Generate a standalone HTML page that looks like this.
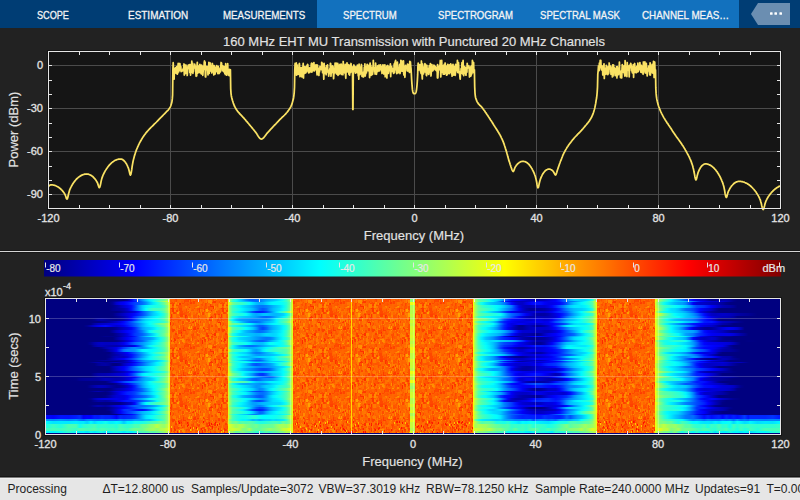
<!DOCTYPE html>
<html><head><meta charset="utf-8">
<style>
html,body{margin:0;padding:0;width:800px;height:500px;overflow:hidden;background:#222222;font-family:"Liberation Sans",sans-serif;}
#tabs{position:absolute;left:0;top:0;width:800px;height:28px;background:#003d74;}
#act{position:absolute;left:317px;top:0;width:422px;height:28px;background:#1271be;}
.tab{position:absolute;top:10px;color:#f4f4f4;font-size:11px;line-height:11px;white-space:nowrap;transform-origin:0 0;-webkit-text-stroke:0.3px #f4f4f4;}
#status{position:absolute;left:0;top:477px;width:800px;height:23px;background:#e6e6e6;border-top:1px solid #7a7a7a;box-sizing:border-box;box-shadow:0 -1px 0 #151515, inset 0 1px 0 #efefef;}
.st{position:absolute;top:4px;font-size:12px;line-height:14px;color:#1e1e1e;white-space:nowrap;}
svg{position:absolute;left:0;top:0;}
.tl{font-size:11px;fill:#e4e4e4;stroke:#e4e4e4;stroke-width:0.3px;}
.cbl{font-size:10px;fill:#e8e8e8;stroke:#e8e8e8;stroke-width:0.2px;}
.cbt{stroke:#e4e4e4;stroke-width:1;fill:none;}
</style></head><body>
<svg width="800" height="500" viewBox="0 0 800 500">
<defs><linearGradient id="r0"><stop offset=".0007" stop-color="#000080"/><stop offset=".0922" stop-color="#000080"/><stop offset=".0972" stop-color="#000084"/><stop offset=".1022" stop-color="#000080"/><stop offset=".1072" stop-color="#000080"/><stop offset=".1122" stop-color="#00009f"/><stop offset=".1172" stop-color="#0000e3"/><stop offset=".1222" stop-color="#0027ff"/><stop offset=".1272" stop-color="#005eff"/><stop offset=".1322" stop-color="#0094ff"/><stop offset=".1372" stop-color="#00c7ff"/><stop offset=".1422" stop-color="#00f0ff"/><stop offset=".1471" stop-color="#10ffef"/><stop offset=".1521" stop-color="#35ffca"/><stop offset=".1571" stop-color="#54ffab"/><stop offset=".1621" stop-color="#6bff94"/><stop offset=".1671" stop-color="#a2ff5d"/><stop offset=".1700" stop-color="#eaff15"/><stop offset=".2487" stop-color="#fffa00"/><stop offset=".2503" stop-color="#b3ff4c"/><stop offset=".2549" stop-color="#3bffc4"/><stop offset=".2595" stop-color="#10ffef"/><stop offset=".2641" stop-color="#00e1ff"/><stop offset=".2686" stop-color="#00b9ff"/><stop offset=".2732" stop-color="#008aff"/><stop offset=".2778" stop-color="#006aff"/><stop offset=".2824" stop-color="#0061ff"/><stop offset=".2870" stop-color="#0067ff"/><stop offset=".2915" stop-color="#0079ff"/><stop offset=".2961" stop-color="#008fff"/><stop offset=".3007" stop-color="#00a3ff"/><stop offset=".3053" stop-color="#00b1ff"/><stop offset=".3098" stop-color="#00c0ff"/><stop offset=".3144" stop-color="#00d0ff"/><stop offset=".3190" stop-color="#00e9ff"/><stop offset=".3236" stop-color="#0cfff3"/><stop offset=".3282" stop-color="#3bffc4"/><stop offset=".3327" stop-color="#86ff79"/><stop offset=".3361" stop-color="#dbff24"/><stop offset=".3368" stop-color="#fffb00"/><stop offset=".5820" stop-color="#fffa00"/><stop offset=".5841" stop-color="#adff52"/><stop offset=".5890" stop-color="#5fffa0"/><stop offset=".5940" stop-color="#48ffb7"/><stop offset=".5990" stop-color="#33ffcc"/><stop offset=".6040" stop-color="#11ffee"/><stop offset=".6090" stop-color="#00ecff"/><stop offset=".6140" stop-color="#00dcff"/><stop offset=".6190" stop-color="#00bbff"/><stop offset=".6240" stop-color="#007dff"/><stop offset=".6290" stop-color="#0037ff"/><stop offset=".6340" stop-color="#000cff"/><stop offset=".6390" stop-color="#0001ff"/><stop offset=".6440" stop-color="#0000f7"/><stop offset=".6490" stop-color="#0000e5"/><stop offset=".6540" stop-color="#0000d2"/><stop offset=".6590" stop-color="#0000c5"/><stop offset=".6639" stop-color="#0000bb"/><stop offset=".6689" stop-color="#0000b3"/><stop offset=".6739" stop-color="#0000b6"/><stop offset=".6789" stop-color="#0000c2"/><stop offset=".6839" stop-color="#0000d7"/><stop offset=".6889" stop-color="#0000e9"/><stop offset=".6939" stop-color="#0000fc"/><stop offset=".6989" stop-color="#0021ff"/><stop offset=".7039" stop-color="#004fff"/><stop offset=".7089" stop-color="#007fff"/><stop offset=".7139" stop-color="#00b2ff"/><stop offset=".7189" stop-color="#00d1ff"/><stop offset=".7239" stop-color="#00d5ff"/><stop offset=".7289" stop-color="#00ceff"/><stop offset=".7338" stop-color="#00d2ff"/><stop offset=".7388" stop-color="#00e8ff"/><stop offset=".7438" stop-color="#1bffe4"/><stop offset=".7488" stop-color="#b7ff48"/><stop offset=".7496" stop-color="#e8ff17"/><stop offset=".8288" stop-color="#fffa00"/><stop offset=".8308" stop-color="#dbff24"/><stop offset=".8358" stop-color="#8bff74"/><stop offset=".8408" stop-color="#57ffa8"/><stop offset=".8458" stop-color="#29ffd6"/><stop offset=".8508" stop-color="#00faff"/><stop offset=".8558" stop-color="#00d1ff"/><stop offset=".8608" stop-color="#00aaff"/><stop offset=".8658" stop-color="#007fff"/><stop offset=".8707" stop-color="#0054ff"/><stop offset=".8757" stop-color="#002cff"/><stop offset=".8807" stop-color="#0000ff"/><stop offset=".8857" stop-color="#0000dc"/><stop offset=".8907" stop-color="#0000d5"/><stop offset=".8957" stop-color="#0000cd"/><stop offset=".9007" stop-color="#0000ab"/><stop offset=".9057" stop-color="#00008d"/><stop offset=".9107" stop-color="#000090"/><stop offset=".9157" stop-color="#0000a5"/><stop offset=".9207" stop-color="#0000b3"/><stop offset=".9257" stop-color="#0000b0"/><stop offset=".9307" stop-color="#0000a2"/><stop offset=".9357" stop-color="#00008c"/><stop offset=".9407" stop-color="#000080"/><stop offset=".9993" stop-color="#000080"/></linearGradient>
<linearGradient id="r1"><stop offset=".0007" stop-color="#000080"/><stop offset=".0872" stop-color="#000080"/><stop offset=".0922" stop-color="#00008f"/><stop offset=".0972" stop-color="#0000a4"/><stop offset=".1022" stop-color="#0000be"/><stop offset=".1072" stop-color="#0000d9"/><stop offset=".1122" stop-color="#0000ee"/><stop offset=".1172" stop-color="#0000fc"/><stop offset=".1222" stop-color="#0017ff"/><stop offset=".1272" stop-color="#0043ff"/><stop offset=".1322" stop-color="#0075ff"/><stop offset=".1372" stop-color="#00a8ff"/><stop offset=".1422" stop-color="#00dbff"/><stop offset=".1471" stop-color="#0efff1"/><stop offset=".1521" stop-color="#43ffbc"/><stop offset=".1571" stop-color="#76ff89"/><stop offset=".1621" stop-color="#a8ff57"/><stop offset=".1671" stop-color="#dbff24"/><stop offset=".1700" stop-color="#fffa00"/><stop offset=".2487" stop-color="#f7ff08"/><stop offset=".2503" stop-color="#92ff6d"/><stop offset=".2549" stop-color="#29ffd6"/><stop offset=".2595" stop-color="#06fff9"/><stop offset=".2641" stop-color="#00e6ff"/><stop offset=".2686" stop-color="#00d1ff"/><stop offset=".2732" stop-color="#00bcff"/><stop offset=".2778" stop-color="#009fff"/><stop offset=".2824" stop-color="#007cff"/><stop offset=".2870" stop-color="#0069ff"/><stop offset=".2915" stop-color="#0071ff"/><stop offset=".2961" stop-color="#0094ff"/><stop offset=".3007" stop-color="#00b5ff"/><stop offset=".3053" stop-color="#00c9ff"/><stop offset=".3098" stop-color="#00ddff"/><stop offset=".3144" stop-color="#00f6ff"/><stop offset=".3190" stop-color="#0ffff0"/><stop offset=".3236" stop-color="#20ffdf"/><stop offset=".3282" stop-color="#39ffc6"/><stop offset=".3327" stop-color="#71ff8e"/><stop offset=".3361" stop-color="#dbff24"/><stop offset=".3368" stop-color="#fffa00"/><stop offset=".5820" stop-color="#feff01"/><stop offset=".5841" stop-color="#b0ff4f"/><stop offset=".5890" stop-color="#6fff90"/><stop offset=".5940" stop-color="#54ffab"/><stop offset=".5990" stop-color="#41ffbe"/><stop offset=".6040" stop-color="#1dffe2"/><stop offset=".6090" stop-color="#00fbff"/><stop offset=".6140" stop-color="#00bfff"/><stop offset=".6190" stop-color="#0071ff"/><stop offset=".6240" stop-color="#0022ff"/><stop offset=".6290" stop-color="#0000f4"/><stop offset=".6340" stop-color="#0000d5"/><stop offset=".6390" stop-color="#0000c0"/><stop offset=".6440" stop-color="#0000b7"/><stop offset=".6490" stop-color="#0000b9"/><stop offset=".6540" stop-color="#0000c3"/><stop offset=".6590" stop-color="#0000d5"/><stop offset=".6639" stop-color="#0000e9"/><stop offset=".6689" stop-color="#0000f6"/><stop offset=".6739" stop-color="#0000f3"/><stop offset=".6789" stop-color="#0000e5"/><stop offset=".6839" stop-color="#0000e8"/><stop offset=".6889" stop-color="#0000f5"/><stop offset=".6939" stop-color="#0002ff"/><stop offset=".6989" stop-color="#001aff"/><stop offset=".7039" stop-color="#004bff"/><stop offset=".7089" stop-color="#006fff"/><stop offset=".7139" stop-color="#0074ff"/><stop offset=".7189" stop-color="#0081ff"/><stop offset=".7239" stop-color="#00abff"/><stop offset=".7289" stop-color="#00cfff"/><stop offset=".7338" stop-color="#00f8ff"/><stop offset=".7388" stop-color="#2cffd3"/><stop offset=".7438" stop-color="#6cff93"/><stop offset=".7488" stop-color="#dbff24"/><stop offset=".7496" stop-color="#fffa00"/><stop offset=".8288" stop-color="#fcff03"/><stop offset=".8308" stop-color="#ccff33"/><stop offset=".8358" stop-color="#6fff90"/><stop offset=".8408" stop-color="#3effc1"/><stop offset=".8458" stop-color="#19ffe6"/><stop offset=".8508" stop-color="#00f6ff"/><stop offset=".8558" stop-color="#00dbff"/><stop offset=".8608" stop-color="#00ccff"/><stop offset=".8658" stop-color="#00cbff"/><stop offset=".8707" stop-color="#00bdff"/><stop offset=".8757" stop-color="#009eff"/><stop offset=".8807" stop-color="#0076ff"/><stop offset=".8857" stop-color="#003eff"/><stop offset=".8907" stop-color="#0009ff"/><stop offset=".8957" stop-color="#0000eb"/><stop offset=".9007" stop-color="#0000dd"/><stop offset=".9057" stop-color="#0000d2"/><stop offset=".9107" stop-color="#0000cc"/><stop offset=".9157" stop-color="#0000d1"/><stop offset=".9207" stop-color="#0000d0"/><stop offset=".9257" stop-color="#0000c0"/><stop offset=".9307" stop-color="#0000a7"/><stop offset=".9357" stop-color="#00008c"/><stop offset=".9407" stop-color="#000080"/><stop offset=".9993" stop-color="#000080"/></linearGradient>
<linearGradient id="r2"><stop offset=".0007" stop-color="#000080"/><stop offset=".0872" stop-color="#000080"/><stop offset=".0922" stop-color="#000099"/><stop offset=".0972" stop-color="#0000d0"/><stop offset=".1022" stop-color="#0000eb"/><stop offset=".1072" stop-color="#0000f9"/><stop offset=".1122" stop-color="#000eff"/><stop offset=".1172" stop-color="#0027ff"/><stop offset=".1222" stop-color="#0040ff"/><stop offset=".1272" stop-color="#0054ff"/><stop offset=".1322" stop-color="#0067ff"/><stop offset=".1372" stop-color="#008dff"/><stop offset=".1422" stop-color="#00c0ff"/><stop offset=".1471" stop-color="#00e8ff"/><stop offset=".1521" stop-color="#0ffff0"/><stop offset=".1571" stop-color="#39ffc6"/><stop offset=".1621" stop-color="#69ff96"/><stop offset=".1671" stop-color="#b8ff47"/><stop offset=".1700" stop-color="#fffa00"/><stop offset=".2487" stop-color="#fffa00"/><stop offset=".2503" stop-color="#dbff24"/><stop offset=".2549" stop-color="#79ff86"/><stop offset=".2595" stop-color="#55ffaa"/><stop offset=".2641" stop-color="#45ffba"/><stop offset=".2686" stop-color="#35ffca"/><stop offset=".2732" stop-color="#21ffde"/><stop offset=".2778" stop-color="#04fffb"/><stop offset=".2824" stop-color="#00e1ff"/><stop offset=".2870" stop-color="#00c1ff"/><stop offset=".2915" stop-color="#00b0ff"/><stop offset=".2961" stop-color="#00b7ff"/><stop offset=".3007" stop-color="#00d2ff"/><stop offset=".3053" stop-color="#00edff"/><stop offset=".3098" stop-color="#00faff"/><stop offset=".3144" stop-color="#00fcff"/><stop offset=".3190" stop-color="#00feff"/><stop offset=".3236" stop-color="#0cfff3"/><stop offset=".3282" stop-color="#29ffd6"/><stop offset=".3327" stop-color="#66ff99"/><stop offset=".3361" stop-color="#d9ff26"/><stop offset=".3368" stop-color="#fffc00"/><stop offset=".5820" stop-color="#ffff00"/><stop offset=".5841" stop-color="#a5ff5a"/><stop offset=".5890" stop-color="#36ffc9"/><stop offset=".5940" stop-color="#09fff6"/><stop offset=".5990" stop-color="#00e2ff"/><stop offset=".6040" stop-color="#00ccff"/><stop offset=".6090" stop-color="#00bcff"/><stop offset=".6140" stop-color="#00aeff"/><stop offset=".6190" stop-color="#009eff"/><stop offset=".6240" stop-color="#007eff"/><stop offset=".6290" stop-color="#0042ff"/><stop offset=".6340" stop-color="#0009ff"/><stop offset=".6390" stop-color="#0000df"/><stop offset=".6440" stop-color="#0000c8"/><stop offset=".6490" stop-color="#0000c6"/><stop offset=".6540" stop-color="#0000e2"/><stop offset=".6590" stop-color="#0000f9"/><stop offset=".6639" stop-color="#0009ff"/><stop offset=".6689" stop-color="#0011ff"/><stop offset=".6739" stop-color="#000cff"/><stop offset=".6789" stop-color="#0000f8"/><stop offset=".6839" stop-color="#0000e9"/><stop offset=".6889" stop-color="#0000e9"/><stop offset=".6939" stop-color="#0000f3"/><stop offset=".6989" stop-color="#0004ff"/><stop offset=".7039" stop-color="#0020ff"/><stop offset=".7089" stop-color="#0052ff"/><stop offset=".7139" stop-color="#0093ff"/><stop offset=".7189" stop-color="#00c2ff"/><stop offset=".7239" stop-color="#00dfff"/><stop offset=".7289" stop-color="#00f9ff"/><stop offset=".7338" stop-color="#12ffed"/><stop offset=".7388" stop-color="#2dffd2"/><stop offset=".7438" stop-color="#56ffa9"/><stop offset=".7488" stop-color="#dbff24"/><stop offset=".7496" stop-color="#fffa00"/><stop offset=".8288" stop-color="#ecff13"/><stop offset=".8308" stop-color="#b5ff4a"/><stop offset=".8358" stop-color="#4bffb4"/><stop offset=".8408" stop-color="#0efff1"/><stop offset=".8458" stop-color="#00ecff"/><stop offset=".8508" stop-color="#00d2ff"/><stop offset=".8558" stop-color="#00b9ff"/><stop offset=".8608" stop-color="#00a6ff"/><stop offset=".8658" stop-color="#009dff"/><stop offset=".8707" stop-color="#0081ff"/><stop offset=".8757" stop-color="#0045ff"/><stop offset=".8807" stop-color="#0000f9"/><stop offset=".8857" stop-color="#0000d5"/><stop offset=".8907" stop-color="#0000cb"/><stop offset=".8957" stop-color="#0000c5"/><stop offset=".9007" stop-color="#0000bc"/><stop offset=".9057" stop-color="#0000b3"/><stop offset=".9107" stop-color="#0000ac"/><stop offset=".9157" stop-color="#0000a8"/><stop offset=".9207" stop-color="#00009c"/><stop offset=".9257" stop-color="#00008a"/><stop offset=".9307" stop-color="#000080"/><stop offset=".9993" stop-color="#000080"/></linearGradient>
<linearGradient id="r3"><stop offset=".0007" stop-color="#000080"/><stop offset=".0872" stop-color="#000080"/><stop offset=".0922" stop-color="#00008b"/><stop offset=".0972" stop-color="#00009d"/><stop offset=".1022" stop-color="#0000b5"/><stop offset=".1072" stop-color="#0000d1"/><stop offset=".1122" stop-color="#0000eb"/><stop offset=".1172" stop-color="#0009ff"/><stop offset=".1222" stop-color="#003fff"/><stop offset=".1272" stop-color="#008cff"/><stop offset=".1322" stop-color="#00cdff"/><stop offset=".1372" stop-color="#00f3ff"/><stop offset=".1422" stop-color="#0bfff4"/><stop offset=".1471" stop-color="#19ffe6"/><stop offset=".1521" stop-color="#1dffe2"/><stop offset=".1571" stop-color="#27ffd8"/><stop offset=".1621" stop-color="#4bffb4"/><stop offset=".1671" stop-color="#94ff6b"/><stop offset=".1700" stop-color="#fffa00"/><stop offset=".2487" stop-color="#fffb00"/><stop offset=".2503" stop-color="#93ff6c"/><stop offset=".2549" stop-color="#39ffc6"/><stop offset=".2595" stop-color="#19ffe6"/><stop offset=".2641" stop-color="#00faff"/><stop offset=".2686" stop-color="#00e3ff"/><stop offset=".2732" stop-color="#00d0ff"/><stop offset=".2778" stop-color="#00beff"/><stop offset=".2824" stop-color="#00a5ff"/><stop offset=".2870" stop-color="#008aff"/><stop offset=".2915" stop-color="#0078ff"/><stop offset=".2961" stop-color="#0075ff"/><stop offset=".3007" stop-color="#0081ff"/><stop offset=".3053" stop-color="#0096ff"/><stop offset=".3098" stop-color="#00b1ff"/><stop offset=".3144" stop-color="#00c7ff"/><stop offset=".3190" stop-color="#00dbff"/><stop offset=".3236" stop-color="#00f8ff"/><stop offset=".3282" stop-color="#28ffd7"/><stop offset=".3327" stop-color="#6fff90"/><stop offset=".3361" stop-color="#dbff24"/><stop offset=".3368" stop-color="#ffff00"/><stop offset=".5820" stop-color="#fffa00"/><stop offset=".5841" stop-color="#b5ff4a"/><stop offset=".5890" stop-color="#64ff9b"/><stop offset=".5940" stop-color="#3effc1"/><stop offset=".5990" stop-color="#29ffd6"/><stop offset=".6040" stop-color="#19ffe6"/><stop offset=".6090" stop-color="#0cfff3"/><stop offset=".6140" stop-color="#00fbff"/><stop offset=".6190" stop-color="#00eaff"/><stop offset=".6240" stop-color="#00cbff"/><stop offset=".6290" stop-color="#00a2ff"/><stop offset=".6340" stop-color="#0079ff"/><stop offset=".6390" stop-color="#0030ff"/><stop offset=".6440" stop-color="#0000e8"/><stop offset=".6490" stop-color="#0000c5"/><stop offset=".6540" stop-color="#0000b9"/><stop offset=".6590" stop-color="#0000b8"/><stop offset=".6639" stop-color="#0000c5"/><stop offset=".6689" stop-color="#0000d5"/><stop offset=".6739" stop-color="#0000d4"/><stop offset=".6789" stop-color="#0000d4"/><stop offset=".6839" stop-color="#0000e5"/><stop offset=".6889" stop-color="#0003ff"/><stop offset=".6939" stop-color="#0026ff"/><stop offset=".6989" stop-color="#0051ff"/><stop offset=".7039" stop-color="#007cff"/><stop offset=".7089" stop-color="#00abff"/><stop offset=".7139" stop-color="#00d3ff"/><stop offset=".7189" stop-color="#00e8ff"/><stop offset=".7239" stop-color="#00edff"/><stop offset=".7289" stop-color="#00ebff"/><stop offset=".7338" stop-color="#00f6ff"/><stop offset=".7388" stop-color="#14ffeb"/><stop offset=".7438" stop-color="#4dffb2"/><stop offset=".7488" stop-color="#d1ff2e"/><stop offset=".7496" stop-color="#f3ff0c"/><stop offset=".8288" stop-color="#eeff11"/><stop offset=".8308" stop-color="#c4ff3b"/><stop offset=".8358" stop-color="#6cff93"/><stop offset=".8408" stop-color="#45ffba"/><stop offset=".8458" stop-color="#2dffd2"/><stop offset=".8508" stop-color="#18ffe7"/><stop offset=".8558" stop-color="#08fff7"/><stop offset=".8608" stop-color="#00f5ff"/><stop offset=".8658" stop-color="#00e4ff"/><stop offset=".8707" stop-color="#00ccff"/><stop offset=".8757" stop-color="#00a4ff"/><stop offset=".8807" stop-color="#006fff"/><stop offset=".8857" stop-color="#0046ff"/><stop offset=".8907" stop-color="#003aff"/><stop offset=".8957" stop-color="#002dff"/><stop offset=".9007" stop-color="#0015ff"/><stop offset=".9057" stop-color="#0000fa"/><stop offset=".9107" stop-color="#0000e1"/><stop offset=".9157" stop-color="#0000c7"/><stop offset=".9207" stop-color="#0000b5"/><stop offset=".9257" stop-color="#0000ad"/><stop offset=".9307" stop-color="#0000a6"/><stop offset=".9357" stop-color="#000097"/><stop offset=".9407" stop-color="#000080"/><stop offset=".9506" stop-color="#000080"/><stop offset=".9556" stop-color="#000083"/><stop offset=".9577" stop-color="#000080"/><stop offset=".9993" stop-color="#000080"/></linearGradient>
<linearGradient id="r4"><stop offset=".0007" stop-color="#000080"/><stop offset=".0872" stop-color="#000080"/><stop offset=".0922" stop-color="#000090"/><stop offset=".0972" stop-color="#00009c"/><stop offset=".1022" stop-color="#0000a3"/><stop offset=".1072" stop-color="#0000b0"/><stop offset=".1122" stop-color="#0000cf"/><stop offset=".1172" stop-color="#0009ff"/><stop offset=".1222" stop-color="#0049ff"/><stop offset=".1272" stop-color="#008aff"/><stop offset=".1322" stop-color="#00cbff"/><stop offset=".1372" stop-color="#04fffb"/><stop offset=".1422" stop-color="#2bffd4"/><stop offset=".1471" stop-color="#43ffbc"/><stop offset=".1521" stop-color="#46ffb9"/><stop offset=".1571" stop-color="#4affb5"/><stop offset=".1621" stop-color="#64ff9b"/><stop offset=".1671" stop-color="#a8ff57"/><stop offset=".1700" stop-color="#f9ff06"/><stop offset=".2487" stop-color="#fffa00"/><stop offset=".2503" stop-color="#94ff6b"/><stop offset=".2549" stop-color="#42ffbd"/><stop offset=".2595" stop-color="#2cffd3"/><stop offset=".2641" stop-color="#11ffee"/><stop offset=".2686" stop-color="#00f4ff"/><stop offset=".2732" stop-color="#00e0ff"/><stop offset=".2778" stop-color="#00d0ff"/><stop offset=".2824" stop-color="#00baff"/><stop offset=".2870" stop-color="#0097ff"/><stop offset=".2915" stop-color="#006dff"/><stop offset=".2961" stop-color="#0057ff"/><stop offset=".3007" stop-color="#006dff"/><stop offset=".3053" stop-color="#009bff"/><stop offset=".3098" stop-color="#00bcff"/><stop offset=".3144" stop-color="#00d0ff"/><stop offset=".3190" stop-color="#00e5ff"/><stop offset=".3236" stop-color="#05fffa"/><stop offset=".3282" stop-color="#2fffd0"/><stop offset=".3327" stop-color="#78ff87"/><stop offset=".3361" stop-color="#dbff24"/><stop offset=".3368" stop-color="#fbff04"/><stop offset=".5820" stop-color="#fffa00"/><stop offset=".5841" stop-color="#adff52"/><stop offset=".5890" stop-color="#67ff98"/><stop offset=".5940" stop-color="#52ffad"/><stop offset=".5990" stop-color="#43ffbc"/><stop offset=".6040" stop-color="#2bffd4"/><stop offset=".6090" stop-color="#17ffe8"/><stop offset=".6140" stop-color="#00f8ff"/><stop offset=".6190" stop-color="#00d4ff"/><stop offset=".6240" stop-color="#00adff"/><stop offset=".6290" stop-color="#0087ff"/><stop offset=".6340" stop-color="#0060ff"/><stop offset=".6390" stop-color="#002dff"/><stop offset=".6440" stop-color="#0000fb"/><stop offset=".6490" stop-color="#0000ce"/><stop offset=".6540" stop-color="#0000ac"/><stop offset=".6590" stop-color="#000097"/><stop offset=".6639" stop-color="#000098"/><stop offset=".6689" stop-color="#00009e"/><stop offset=".6739" stop-color="#0000a0"/><stop offset=".6789" stop-color="#0000a7"/><stop offset=".6839" stop-color="#0000b9"/><stop offset=".6889" stop-color="#0000d4"/><stop offset=".6939" stop-color="#0000f3"/><stop offset=".6989" stop-color="#001cff"/><stop offset=".7039" stop-color="#004fff"/><stop offset=".7089" stop-color="#007dff"/><stop offset=".7139" stop-color="#00a3ff"/><stop offset=".7189" stop-color="#00baff"/><stop offset=".7239" stop-color="#00c6ff"/><stop offset=".7289" stop-color="#00cfff"/><stop offset=".7338" stop-color="#00dcff"/><stop offset=".7388" stop-color="#00f2ff"/><stop offset=".7438" stop-color="#21ffde"/><stop offset=".7488" stop-color="#bdff42"/><stop offset=".7496" stop-color="#efff10"/><stop offset=".8288" stop-color="#fffa00"/><stop offset=".8308" stop-color="#daff25"/><stop offset=".8358" stop-color="#78ff87"/><stop offset=".8408" stop-color="#38ffc7"/><stop offset=".8458" stop-color="#02fffd"/><stop offset=".8508" stop-color="#00e3ff"/><stop offset=".8558" stop-color="#00daff"/><stop offset=".8608" stop-color="#00c1ff"/><stop offset=".8658" stop-color="#0094ff"/><stop offset=".8707" stop-color="#006dff"/><stop offset=".8757" stop-color="#005dff"/><stop offset=".8807" stop-color="#0045ff"/><stop offset=".8857" stop-color="#0023ff"/><stop offset=".8907" stop-color="#0004ff"/><stop offset=".8957" stop-color="#0000e9"/><stop offset=".9007" stop-color="#0000d6"/><stop offset=".9057" stop-color="#0000c1"/><stop offset=".9107" stop-color="#00009e"/><stop offset=".9157" stop-color="#000080"/><stop offset=".9993" stop-color="#000080"/></linearGradient>
<linearGradient id="r5"><stop offset=".0007" stop-color="#000080"/><stop offset=".0972" stop-color="#000080"/><stop offset=".1022" stop-color="#00008d"/><stop offset=".1072" stop-color="#0000a3"/><stop offset=".1122" stop-color="#0000b7"/><stop offset=".1172" stop-color="#0000c6"/><stop offset=".1222" stop-color="#0000df"/><stop offset=".1272" stop-color="#0012ff"/><stop offset=".1322" stop-color="#004bff"/><stop offset=".1372" stop-color="#0079ff"/><stop offset=".1422" stop-color="#00a3ff"/><stop offset=".1471" stop-color="#00caff"/><stop offset=".1521" stop-color="#00f1ff"/><stop offset=".1571" stop-color="#21ffde"/><stop offset=".1621" stop-color="#54ffab"/><stop offset=".1671" stop-color="#9eff61"/><stop offset=".1700" stop-color="#fffa00"/><stop offset=".2487" stop-color="#fffc00"/><stop offset=".2503" stop-color="#a2ff5d"/><stop offset=".2549" stop-color="#37ffc8"/><stop offset=".2595" stop-color="#14ffeb"/><stop offset=".2641" stop-color="#00f5ff"/><stop offset=".2686" stop-color="#00dbff"/><stop offset=".2732" stop-color="#00b9ff"/><stop offset=".2778" stop-color="#0085ff"/><stop offset=".2824" stop-color="#004cff"/><stop offset=".2870" stop-color="#0029ff"/><stop offset=".2915" stop-color="#001dff"/><stop offset=".2961" stop-color="#0025ff"/><stop offset=".3007" stop-color="#0042ff"/><stop offset=".3053" stop-color="#0074ff"/><stop offset=".3098" stop-color="#00adff"/><stop offset=".3144" stop-color="#00dfff"/><stop offset=".3190" stop-color="#13ffec"/><stop offset=".3236" stop-color="#47ffb8"/><stop offset=".3282" stop-color="#7aff85"/><stop offset=".3327" stop-color="#c5ff3a"/><stop offset=".3361" stop-color="#dbff24"/><stop offset=".3368" stop-color="#fffa00"/><stop offset=".5820" stop-color="#f7ff08"/><stop offset=".5841" stop-color="#abff54"/><stop offset=".5890" stop-color="#57ffa8"/><stop offset=".5940" stop-color="#27ffd8"/><stop offset=".5990" stop-color="#09fff6"/><stop offset=".6040" stop-color="#00e7ff"/><stop offset=".6090" stop-color="#00c5ff"/><stop offset=".6140" stop-color="#00a9ff"/><stop offset=".6190" stop-color="#0083ff"/><stop offset=".6240" stop-color="#004aff"/><stop offset=".6290" stop-color="#001dff"/><stop offset=".6340" stop-color="#0000fa"/><stop offset=".6390" stop-color="#0000e5"/><stop offset=".6440" stop-color="#0000d6"/><stop offset=".6490" stop-color="#0000ca"/><stop offset=".6540" stop-color="#0000c5"/><stop offset=".6590" stop-color="#0000ca"/><stop offset=".6639" stop-color="#0000d1"/><stop offset=".6689" stop-color="#0000d7"/><stop offset=".6739" stop-color="#0000d3"/><stop offset=".6789" stop-color="#0000ce"/><stop offset=".6839" stop-color="#0000dc"/><stop offset=".6889" stop-color="#0000f5"/><stop offset=".6939" stop-color="#0016ff"/><stop offset=".6989" stop-color="#0031ff"/><stop offset=".7039" stop-color="#0041ff"/><stop offset=".7089" stop-color="#0063ff"/><stop offset=".7139" stop-color="#0094ff"/><stop offset=".7189" stop-color="#00bdff"/><stop offset=".7239" stop-color="#00dcff"/><stop offset=".7289" stop-color="#00feff"/><stop offset=".7338" stop-color="#2bffd4"/><stop offset=".7388" stop-color="#5fffa0"/><stop offset=".7438" stop-color="#98ff67"/><stop offset=".7488" stop-color="#dbff24"/><stop offset=".7496" stop-color="#fffe00"/><stop offset=".8288" stop-color="#f6ff09"/><stop offset=".8308" stop-color="#b1ff4e"/><stop offset=".8358" stop-color="#45ffba"/><stop offset=".8408" stop-color="#13ffec"/><stop offset=".8458" stop-color="#00f9ff"/><stop offset=".8508" stop-color="#00ecff"/><stop offset=".8558" stop-color="#00deff"/><stop offset=".8608" stop-color="#00cfff"/><stop offset=".8658" stop-color="#00bfff"/><stop offset=".8707" stop-color="#00a7ff"/><stop offset=".8757" stop-color="#0084ff"/><stop offset=".8807" stop-color="#005eff"/><stop offset=".8857" stop-color="#0026ff"/><stop offset=".8907" stop-color="#0000e9"/><stop offset=".8957" stop-color="#0000c7"/><stop offset=".9007" stop-color="#0000b1"/><stop offset=".9057" stop-color="#00009e"/><stop offset=".9107" stop-color="#000090"/><stop offset=".9157" stop-color="#000085"/><stop offset=".9207" stop-color="#000080"/><stop offset=".9993" stop-color="#000080"/></linearGradient>
<linearGradient id="r6"><stop offset=".0007" stop-color="#000080"/><stop offset=".0872" stop-color="#000080"/><stop offset=".0922" stop-color="#000085"/><stop offset=".0972" stop-color="#00009d"/><stop offset=".1022" stop-color="#0000b3"/><stop offset=".1072" stop-color="#0000c8"/><stop offset=".1122" stop-color="#0000de"/><stop offset=".1172" stop-color="#0000f3"/><stop offset=".1222" stop-color="#000bff"/><stop offset=".1272" stop-color="#0027ff"/><stop offset=".1322" stop-color="#004aff"/><stop offset=".1372" stop-color="#0074ff"/><stop offset=".1422" stop-color="#00a5ff"/><stop offset=".1471" stop-color="#00ccff"/><stop offset=".1521" stop-color="#00e4ff"/><stop offset=".1571" stop-color="#03fffc"/><stop offset=".1621" stop-color="#31ffce"/><stop offset=".1671" stop-color="#82ff7d"/><stop offset=".1700" stop-color="#e7ff18"/><stop offset=".2487" stop-color="#fffa00"/><stop offset=".2503" stop-color="#92ff6d"/><stop offset=".2549" stop-color="#54ffab"/><stop offset=".2595" stop-color="#37ffc8"/><stop offset=".2641" stop-color="#25ffda"/><stop offset=".2686" stop-color="#1affe5"/><stop offset=".2732" stop-color="#05fffa"/><stop offset=".2778" stop-color="#00e0ff"/><stop offset=".2824" stop-color="#00baff"/><stop offset=".2870" stop-color="#00a9ff"/><stop offset=".2915" stop-color="#00b0ff"/><stop offset=".2961" stop-color="#00c2ff"/><stop offset=".3007" stop-color="#00c6ff"/><stop offset=".3053" stop-color="#00bdff"/><stop offset=".3098" stop-color="#00b7ff"/><stop offset=".3144" stop-color="#00b9ff"/><stop offset=".3190" stop-color="#00c1ff"/><stop offset=".3236" stop-color="#00d0ff"/><stop offset=".3282" stop-color="#00f4ff"/><stop offset=".3327" stop-color="#4affb5"/><stop offset=".3361" stop-color="#b7ff48"/><stop offset=".3368" stop-color="#dbff24"/><stop offset=".5820" stop-color="#fffa00"/><stop offset=".5841" stop-color="#b3ff4c"/><stop offset=".5890" stop-color="#67ff98"/><stop offset=".5940" stop-color="#51ffae"/><stop offset=".5990" stop-color="#43ffbc"/><stop offset=".6040" stop-color="#35ffca"/><stop offset=".6090" stop-color="#24ffdb"/><stop offset=".6140" stop-color="#1bffe4"/><stop offset=".6190" stop-color="#0afff5"/><stop offset=".6240" stop-color="#00d0ff"/><stop offset=".6290" stop-color="#0093ff"/><stop offset=".6340" stop-color="#0069ff"/><stop offset=".6390" stop-color="#0052ff"/><stop offset=".6440" stop-color="#003bff"/><stop offset=".6490" stop-color="#0019ff"/><stop offset=".6540" stop-color="#0000f4"/><stop offset=".6590" stop-color="#0000d5"/><stop offset=".6639" stop-color="#0000ba"/><stop offset=".6689" stop-color="#0000a5"/><stop offset=".6739" stop-color="#00009f"/><stop offset=".6789" stop-color="#0000a1"/><stop offset=".6839" stop-color="#0000ae"/><stop offset=".6889" stop-color="#0000c6"/><stop offset=".6939" stop-color="#0000df"/><stop offset=".6989" stop-color="#0000fb"/><stop offset=".7039" stop-color="#001eff"/><stop offset=".7089" stop-color="#0046ff"/><stop offset=".7139" stop-color="#0076ff"/><stop offset=".7189" stop-color="#00a3ff"/><stop offset=".7239" stop-color="#00c8ff"/><stop offset=".7289" stop-color="#00ebff"/><stop offset=".7338" stop-color="#0bfff4"/><stop offset=".7388" stop-color="#1bffe4"/><stop offset=".7438" stop-color="#3effc1"/><stop offset=".7488" stop-color="#ceff31"/><stop offset=".7496" stop-color="#faff05"/><stop offset=".8288" stop-color="#fffb00"/><stop offset=".8308" stop-color="#dbff24"/><stop offset=".8358" stop-color="#beff41"/><stop offset=".8408" stop-color="#80ff7f"/><stop offset=".8458" stop-color="#52ffad"/><stop offset=".8508" stop-color="#22ffdd"/><stop offset=".8558" stop-color="#01fffe"/><stop offset=".8608" stop-color="#00edff"/><stop offset=".8658" stop-color="#00e0ff"/><stop offset=".8707" stop-color="#00ccff"/><stop offset=".8757" stop-color="#00b2ff"/><stop offset=".8807" stop-color="#0094ff"/><stop offset=".8857" stop-color="#006dff"/><stop offset=".8907" stop-color="#003aff"/><stop offset=".8957" stop-color="#000dff"/><stop offset=".9007" stop-color="#0000e5"/><stop offset=".9057" stop-color="#0000c8"/><stop offset=".9107" stop-color="#0000bf"/><stop offset=".9157" stop-color="#0000c6"/><stop offset=".9207" stop-color="#0000c9"/><stop offset=".9257" stop-color="#0000c6"/><stop offset=".9307" stop-color="#0000c0"/><stop offset=".9357" stop-color="#0000b6"/><stop offset=".9407" stop-color="#0000ab"/><stop offset=".9456" stop-color="#0000a1"/><stop offset=".9506" stop-color="#00009c"/><stop offset=".9556" stop-color="#000096"/><stop offset=".9577" stop-color="#000091"/><stop offset=".9681" stop-color="#000080"/><stop offset=".9993" stop-color="#000080"/></linearGradient>
<linearGradient id="r7"><stop offset=".0007" stop-color="#000080"/><stop offset=".0872" stop-color="#000080"/><stop offset=".0922" stop-color="#000081"/><stop offset=".0972" stop-color="#00008e"/><stop offset=".1022" stop-color="#00009e"/><stop offset=".1072" stop-color="#0000b3"/><stop offset=".1122" stop-color="#0000d3"/><stop offset=".1172" stop-color="#0000fe"/><stop offset=".1222" stop-color="#002fff"/><stop offset=".1272" stop-color="#005aff"/><stop offset=".1322" stop-color="#0081ff"/><stop offset=".1372" stop-color="#00acff"/><stop offset=".1422" stop-color="#00d2ff"/><stop offset=".1471" stop-color="#00ecff"/><stop offset=".1521" stop-color="#01fffe"/><stop offset=".1571" stop-color="#1affe5"/><stop offset=".1621" stop-color="#40ffbf"/><stop offset=".1671" stop-color="#8aff75"/><stop offset=".1700" stop-color="#f2ff0d"/><stop offset=".2487" stop-color="#efff10"/><stop offset=".2503" stop-color="#8bff74"/><stop offset=".2549" stop-color="#1bffe4"/><stop offset=".2595" stop-color="#00f8ff"/><stop offset=".2641" stop-color="#00dfff"/><stop offset=".2686" stop-color="#00d2ff"/><stop offset=".2732" stop-color="#00c7ff"/><stop offset=".2778" stop-color="#00bdff"/><stop offset=".2824" stop-color="#00afff"/><stop offset=".2870" stop-color="#009cff"/><stop offset=".2915" stop-color="#0081ff"/><stop offset=".2961" stop-color="#006bff"/><stop offset=".3007" stop-color="#0064ff"/><stop offset=".3053" stop-color="#006fff"/><stop offset=".3098" stop-color="#008eff"/><stop offset=".3144" stop-color="#00b3ff"/><stop offset=".3190" stop-color="#00d0ff"/><stop offset=".3236" stop-color="#00f2ff"/><stop offset=".3282" stop-color="#22ffdd"/><stop offset=".3327" stop-color="#70ff8f"/><stop offset=".3361" stop-color="#dbff24"/><stop offset=".3368" stop-color="#fcff03"/><stop offset=".5820" stop-color="#efff10"/><stop offset=".5841" stop-color="#96ff69"/><stop offset=".5890" stop-color="#3dffc2"/><stop offset=".5940" stop-color="#1fffe0"/><stop offset=".5990" stop-color="#0dfff2"/><stop offset=".6040" stop-color="#00fdff"/><stop offset=".6090" stop-color="#00efff"/><stop offset=".6140" stop-color="#00e4ff"/><stop offset=".6190" stop-color="#00d7ff"/><stop offset=".6240" stop-color="#00b9ff"/><stop offset=".6290" stop-color="#0088ff"/><stop offset=".6340" stop-color="#005bff"/><stop offset=".6390" stop-color="#002cff"/><stop offset=".6440" stop-color="#0001ff"/><stop offset=".6490" stop-color="#0000d7"/><stop offset=".6540" stop-color="#0000ba"/><stop offset=".6590" stop-color="#0000aa"/><stop offset=".6639" stop-color="#0000ae"/><stop offset=".6689" stop-color="#0000ba"/><stop offset=".6739" stop-color="#0000ba"/><stop offset=".6789" stop-color="#0000b7"/><stop offset=".6839" stop-color="#0000bb"/><stop offset=".6889" stop-color="#0000c6"/><stop offset=".6939" stop-color="#0000d9"/><stop offset=".6989" stop-color="#0000ff"/><stop offset=".7039" stop-color="#0038ff"/><stop offset=".7089" stop-color="#0071ff"/><stop offset=".7139" stop-color="#00a2ff"/><stop offset=".7189" stop-color="#00c6ff"/><stop offset=".7239" stop-color="#00e8ff"/><stop offset=".7289" stop-color="#0cfff3"/><stop offset=".7338" stop-color="#2bffd4"/><stop offset=".7388" stop-color="#46ffb9"/><stop offset=".7438" stop-color="#6cff93"/><stop offset=".7488" stop-color="#dbff24"/><stop offset=".7496" stop-color="#fffa00"/><stop offset=".8288" stop-color="#feff01"/><stop offset=".8308" stop-color="#d2ff2d"/><stop offset=".8358" stop-color="#79ff86"/><stop offset=".8408" stop-color="#50ffaf"/><stop offset=".8458" stop-color="#36ffc9"/><stop offset=".8508" stop-color="#23ffdc"/><stop offset=".8558" stop-color="#17ffe8"/><stop offset=".8608" stop-color="#05fffa"/><stop offset=".8658" stop-color="#00e7ff"/><stop offset=".8707" stop-color="#00ccff"/><stop offset=".8757" stop-color="#00baff"/><stop offset=".8807" stop-color="#00a8ff"/><stop offset=".8857" stop-color="#0089ff"/><stop offset=".8907" stop-color="#0059ff"/><stop offset=".8957" stop-color="#0029ff"/><stop offset=".9007" stop-color="#0005ff"/><stop offset=".9057" stop-color="#0000e6"/><stop offset=".9107" stop-color="#0000d0"/><stop offset=".9157" stop-color="#0000c5"/><stop offset=".9207" stop-color="#0000be"/><stop offset=".9257" stop-color="#0000ba"/><stop offset=".9307" stop-color="#0000b3"/><stop offset=".9357" stop-color="#0000a2"/><stop offset=".9407" stop-color="#000082"/><stop offset=".9456" stop-color="#000080"/><stop offset=".9993" stop-color="#000080"/></linearGradient>
<linearGradient id="r8"><stop offset=".0007" stop-color="#000080"/><stop offset=".0623" stop-color="#000080"/><stop offset=".0673" stop-color="#00008c"/><stop offset=".0722" stop-color="#0000a5"/><stop offset=".0772" stop-color="#0000a6"/><stop offset=".0822" stop-color="#00009e"/><stop offset=".0872" stop-color="#000096"/><stop offset=".0922" stop-color="#00008e"/><stop offset=".0972" stop-color="#00008e"/><stop offset=".1022" stop-color="#000097"/><stop offset=".1072" stop-color="#0000aa"/><stop offset=".1122" stop-color="#0000cb"/><stop offset=".1172" stop-color="#0000fb"/><stop offset=".1222" stop-color="#0036ff"/><stop offset=".1272" stop-color="#0077ff"/><stop offset=".1322" stop-color="#00b1ff"/><stop offset=".1372" stop-color="#00d7ff"/><stop offset=".1422" stop-color="#00e9ff"/><stop offset=".1471" stop-color="#00f9ff"/><stop offset=".1521" stop-color="#11ffee"/><stop offset=".1571" stop-color="#2bffd4"/><stop offset=".1621" stop-color="#51ffae"/><stop offset=".1671" stop-color="#99ff66"/><stop offset=".1700" stop-color="#feff01"/><stop offset=".2487" stop-color="#ebff14"/><stop offset=".2503" stop-color="#66ff99"/><stop offset=".2549" stop-color="#00faff"/><stop offset=".2595" stop-color="#00c8ff"/><stop offset=".2641" stop-color="#00a8ff"/><stop offset=".2686" stop-color="#009dff"/><stop offset=".2732" stop-color="#0096ff"/><stop offset=".2778" stop-color="#008eff"/><stop offset=".2824" stop-color="#0086ff"/><stop offset=".2870" stop-color="#0084ff"/><stop offset=".2915" stop-color="#0084ff"/><stop offset=".2961" stop-color="#0086ff"/><stop offset=".3007" stop-color="#008dff"/><stop offset=".3053" stop-color="#00a2ff"/><stop offset=".3098" stop-color="#00c6ff"/><stop offset=".3144" stop-color="#00f6ff"/><stop offset=".3190" stop-color="#1cffe3"/><stop offset=".3236" stop-color="#39ffc6"/><stop offset=".3282" stop-color="#54ffab"/><stop offset=".3327" stop-color="#8fff70"/><stop offset=".3361" stop-color="#dbff24"/><stop offset=".3368" stop-color="#fffa00"/><stop offset=".5820" stop-color="#fffa00"/><stop offset=".5841" stop-color="#c6ff39"/><stop offset=".5890" stop-color="#8dff72"/><stop offset=".5940" stop-color="#7aff85"/><stop offset=".5990" stop-color="#68ff97"/><stop offset=".6040" stop-color="#3bffc4"/><stop offset=".6090" stop-color="#1cffe3"/><stop offset=".6140" stop-color="#00e9ff"/><stop offset=".6190" stop-color="#00a3ff"/><stop offset=".6240" stop-color="#0052ff"/><stop offset=".6290" stop-color="#0023ff"/><stop offset=".6340" stop-color="#0008ff"/><stop offset=".6390" stop-color="#0000fb"/><stop offset=".6440" stop-color="#0000f4"/><stop offset=".6490" stop-color="#0000e8"/><stop offset=".6540" stop-color="#0000d7"/><stop offset=".6590" stop-color="#0000d0"/><stop offset=".6639" stop-color="#0000db"/><stop offset=".6689" stop-color="#0000e6"/><stop offset=".6739" stop-color="#0000e2"/><stop offset=".6789" stop-color="#0000d5"/><stop offset=".6839" stop-color="#0000dd"/><stop offset=".6889" stop-color="#0000f9"/><stop offset=".6939" stop-color="#0020ff"/><stop offset=".6989" stop-color="#0046ff"/><stop offset=".7039" stop-color="#0072ff"/><stop offset=".7089" stop-color="#00a0ff"/><stop offset=".7139" stop-color="#00bcff"/><stop offset=".7189" stop-color="#00d2ff"/><stop offset=".7239" stop-color="#00eeff"/><stop offset=".7289" stop-color="#0dfff2"/><stop offset=".7338" stop-color="#2bffd4"/><stop offset=".7388" stop-color="#48ffb7"/><stop offset=".7438" stop-color="#76ff89"/><stop offset=".7488" stop-color="#dbff24"/><stop offset=".7496" stop-color="#fffa00"/><stop offset=".8288" stop-color="#f8ff07"/><stop offset=".8308" stop-color="#cbff34"/><stop offset=".8358" stop-color="#6eff91"/><stop offset=".8408" stop-color="#37ffc8"/><stop offset=".8458" stop-color="#0afff5"/><stop offset=".8508" stop-color="#00e0ff"/><stop offset=".8558" stop-color="#00c3ff"/><stop offset=".8608" stop-color="#00b0ff"/><stop offset=".8658" stop-color="#00a4ff"/><stop offset=".8707" stop-color="#0097ff"/><stop offset=".8757" stop-color="#0087ff"/><stop offset=".8807" stop-color="#0075ff"/><stop offset=".8857" stop-color="#0057ff"/><stop offset=".8907" stop-color="#0032ff"/><stop offset=".8957" stop-color="#0015ff"/><stop offset=".9007" stop-color="#0000fb"/><stop offset=".9057" stop-color="#0000e0"/><stop offset=".9107" stop-color="#0000b6"/><stop offset=".9157" stop-color="#000086"/><stop offset=".9207" stop-color="#000080"/><stop offset=".9993" stop-color="#000080"/></linearGradient>
<linearGradient id="r9"><stop offset=".0007" stop-color="#000080"/><stop offset=".0722" stop-color="#000080"/><stop offset=".0772" stop-color="#000088"/><stop offset=".0822" stop-color="#00008e"/><stop offset=".0872" stop-color="#00009d"/><stop offset=".0922" stop-color="#0000b0"/><stop offset=".0972" stop-color="#0000c6"/><stop offset=".1022" stop-color="#0000e4"/><stop offset=".1072" stop-color="#0006ff"/><stop offset=".1122" stop-color="#0027ff"/><stop offset=".1172" stop-color="#0050ff"/><stop offset=".1222" stop-color="#0080ff"/><stop offset=".1272" stop-color="#00acff"/><stop offset=".1322" stop-color="#00d0ff"/><stop offset=".1372" stop-color="#00eeff"/><stop offset=".1422" stop-color="#05fffa"/><stop offset=".1471" stop-color="#12ffed"/><stop offset=".1521" stop-color="#16ffe9"/><stop offset=".1571" stop-color="#20ffdf"/><stop offset=".1621" stop-color="#35ffca"/><stop offset=".1671" stop-color="#76ff89"/><stop offset=".1700" stop-color="#e5ff1a"/><stop offset=".2487" stop-color="#f7ff08"/><stop offset=".2503" stop-color="#bfff40"/><stop offset=".2549" stop-color="#39ffc6"/><stop offset=".2595" stop-color="#0bfff4"/><stop offset=".2641" stop-color="#00deff"/><stop offset=".2686" stop-color="#00b7ff"/><stop offset=".2732" stop-color="#0095ff"/><stop offset=".2778" stop-color="#007aff"/><stop offset=".2824" stop-color="#006eff"/><stop offset=".2870" stop-color="#0067ff"/><stop offset=".2915" stop-color="#0076ff"/><stop offset=".2961" stop-color="#0093ff"/><stop offset=".3007" stop-color="#00aeff"/><stop offset=".3053" stop-color="#00beff"/><stop offset=".3098" stop-color="#00d3ff"/><stop offset=".3144" stop-color="#00f8ff"/><stop offset=".3190" stop-color="#24ffdb"/><stop offset=".3236" stop-color="#47ffb8"/><stop offset=".3282" stop-color="#6cff93"/><stop offset=".3327" stop-color="#b0ff4f"/><stop offset=".3361" stop-color="#dbff24"/><stop offset=".3368" stop-color="#fffa00"/><stop offset=".5820" stop-color="#ffff00"/><stop offset=".5841" stop-color="#9dff62"/><stop offset=".5890" stop-color="#40ffbf"/><stop offset=".5940" stop-color="#19ffe6"/><stop offset=".5990" stop-color="#01fffe"/><stop offset=".6040" stop-color="#00e9ff"/><stop offset=".6090" stop-color="#00c9ff"/><stop offset=".6140" stop-color="#0094ff"/><stop offset=".6190" stop-color="#0045ff"/><stop offset=".6240" stop-color="#001bff"/><stop offset=".6290" stop-color="#0007ff"/><stop offset=".6340" stop-color="#0000fa"/><stop offset=".6390" stop-color="#0000ed"/><stop offset=".6440" stop-color="#0000e3"/><stop offset=".6490" stop-color="#0000e0"/><stop offset=".6540" stop-color="#0000e6"/><stop offset=".6590" stop-color="#0000ea"/><stop offset=".6639" stop-color="#0000ef"/><stop offset=".6689" stop-color="#0000f3"/><stop offset=".6739" stop-color="#0000f3"/><stop offset=".6789" stop-color="#0000eb"/><stop offset=".6839" stop-color="#0000f2"/><stop offset=".6889" stop-color="#001cff"/><stop offset=".6939" stop-color="#004eff"/><stop offset=".6989" stop-color="#0070ff"/><stop offset=".7039" stop-color="#0098ff"/><stop offset=".7089" stop-color="#00c1ff"/><stop offset=".7139" stop-color="#00e2ff"/><stop offset=".7189" stop-color="#00f4ff"/><stop offset=".7239" stop-color="#01fffe"/><stop offset=".7289" stop-color="#10ffef"/><stop offset=".7338" stop-color="#2bffd4"/><stop offset=".7388" stop-color="#55ffaa"/><stop offset=".7438" stop-color="#8dff72"/><stop offset=".7488" stop-color="#dbff24"/><stop offset=".7496" stop-color="#fffa00"/><stop offset=".8288" stop-color="#eeff11"/><stop offset=".8308" stop-color="#c7ff38"/><stop offset=".8358" stop-color="#74ff8b"/><stop offset=".8408" stop-color="#48ffb7"/><stop offset=".8458" stop-color="#2effd1"/><stop offset=".8508" stop-color="#21ffde"/><stop offset=".8558" stop-color="#1cffe3"/><stop offset=".8608" stop-color="#0dfff2"/><stop offset=".8658" stop-color="#00f2ff"/><stop offset=".8707" stop-color="#00d8ff"/><stop offset=".8757" stop-color="#00c5ff"/><stop offset=".8807" stop-color="#00b1ff"/><stop offset=".8857" stop-color="#008eff"/><stop offset=".8907" stop-color="#0051ff"/><stop offset=".8957" stop-color="#001cff"/><stop offset=".9007" stop-color="#0014ff"/><stop offset=".9057" stop-color="#0019ff"/><stop offset=".9107" stop-color="#0004ff"/><stop offset=".9157" stop-color="#0000dd"/><stop offset=".9207" stop-color="#0000c4"/><stop offset=".9257" stop-color="#0000bb"/><stop offset=".9307" stop-color="#0000b3"/><stop offset=".9357" stop-color="#0000a6"/><stop offset=".9407" stop-color="#000097"/><stop offset=".9456" stop-color="#00008a"/><stop offset=".9506" stop-color="#000080"/><stop offset=".9993" stop-color="#000080"/></linearGradient>
<linearGradient id="r10"><stop offset=".0007" stop-color="#000080"/><stop offset=".0573" stop-color="#000080"/><stop offset=".0623" stop-color="#000081"/><stop offset=".0673" stop-color="#0000a6"/><stop offset=".0722" stop-color="#0000bd"/><stop offset=".0772" stop-color="#0000c6"/><stop offset=".0822" stop-color="#0000ce"/><stop offset=".0872" stop-color="#0000d6"/><stop offset=".0922" stop-color="#0000df"/><stop offset=".0972" stop-color="#0000eb"/><stop offset=".1022" stop-color="#0000fa"/><stop offset=".1072" stop-color="#000eff"/><stop offset=".1122" stop-color="#0027ff"/><stop offset=".1172" stop-color="#0042ff"/><stop offset=".1222" stop-color="#0062ff"/><stop offset=".1272" stop-color="#0086ff"/><stop offset=".1322" stop-color="#00b1ff"/><stop offset=".1372" stop-color="#00dcff"/><stop offset=".1422" stop-color="#00ffff"/><stop offset=".1471" stop-color="#1effe1"/><stop offset=".1521" stop-color="#4bffb4"/><stop offset=".1571" stop-color="#73ff8c"/><stop offset=".1621" stop-color="#88ff77"/><stop offset=".1671" stop-color="#b9ff46"/><stop offset=".1700" stop-color="#fffa00"/><stop offset=".2487" stop-color="#fffa00"/><stop offset=".2503" stop-color="#bdff42"/><stop offset=".2549" stop-color="#72ff8d"/><stop offset=".2595" stop-color="#63ff9c"/><stop offset=".2641" stop-color="#4affb5"/><stop offset=".2686" stop-color="#31ffce"/><stop offset=".2732" stop-color="#18ffe7"/><stop offset=".2778" stop-color="#00ffff"/><stop offset=".2824" stop-color="#00dfff"/><stop offset=".2870" stop-color="#00baff"/><stop offset=".2915" stop-color="#00a9ff"/><stop offset=".2961" stop-color="#00b6ff"/><stop offset=".3007" stop-color="#00cfff"/><stop offset=".3053" stop-color="#00e5ff"/><stop offset=".3098" stop-color="#00f6ff"/><stop offset=".3144" stop-color="#06fff9"/><stop offset=".3190" stop-color="#14ffeb"/><stop offset=".3236" stop-color="#27ffd8"/><stop offset=".3282" stop-color="#47ffb8"/><stop offset=".3327" stop-color="#7dff82"/><stop offset=".3361" stop-color="#dbff24"/><stop offset=".3368" stop-color="#fffa00"/><stop offset=".5820" stop-color="#fffa00"/><stop offset=".5841" stop-color="#c6ff39"/><stop offset=".5890" stop-color="#6eff91"/><stop offset=".5940" stop-color="#42ffbd"/><stop offset=".5990" stop-color="#2effd1"/><stop offset=".6040" stop-color="#23ffdc"/><stop offset=".6090" stop-color="#05fffa"/><stop offset=".6140" stop-color="#00cbff"/><stop offset=".6190" stop-color="#007dff"/><stop offset=".6240" stop-color="#0034ff"/><stop offset=".6290" stop-color="#0003ff"/><stop offset=".6340" stop-color="#0000e5"/><stop offset=".6390" stop-color="#0000e9"/><stop offset=".6440" stop-color="#0000f8"/><stop offset=".6490" stop-color="#0000f3"/><stop offset=".6540" stop-color="#0000e1"/><stop offset=".6590" stop-color="#0000d8"/><stop offset=".6639" stop-color="#0000d3"/><stop offset=".6689" stop-color="#0000cd"/><stop offset=".6739" stop-color="#0000d2"/><stop offset=".6789" stop-color="#0000e4"/><stop offset=".6839" stop-color="#0000ef"/><stop offset=".6889" stop-color="#0000fa"/><stop offset=".6939" stop-color="#000eff"/><stop offset=".6989" stop-color="#0022ff"/><stop offset=".7039" stop-color="#003dff"/><stop offset=".7089" stop-color="#0068ff"/><stop offset=".7139" stop-color="#00a8ff"/><stop offset=".7189" stop-color="#00d4ff"/><stop offset=".7239" stop-color="#00e5ff"/><stop offset=".7289" stop-color="#00e8ff"/><stop offset=".7338" stop-color="#00edff"/><stop offset=".7388" stop-color="#03fffc"/><stop offset=".7438" stop-color="#2bffd4"/><stop offset=".7488" stop-color="#c5ff3a"/><stop offset=".7496" stop-color="#feff01"/><stop offset=".8288" stop-color="#fffa00"/><stop offset=".8308" stop-color="#d0ff2f"/><stop offset=".8358" stop-color="#61ff9e"/><stop offset=".8408" stop-color="#25ffda"/><stop offset=".8458" stop-color="#00f2ff"/><stop offset=".8508" stop-color="#00ceff"/><stop offset=".8558" stop-color="#00afff"/><stop offset=".8608" stop-color="#008eff"/><stop offset=".8658" stop-color="#006dff"/><stop offset=".8707" stop-color="#0054ff"/><stop offset=".8757" stop-color="#0037ff"/><stop offset=".8807" stop-color="#0018ff"/><stop offset=".8857" stop-color="#000bff"/><stop offset=".8907" stop-color="#0004ff"/><stop offset=".8957" stop-color="#0000f9"/><stop offset=".9007" stop-color="#0000ef"/><stop offset=".9057" stop-color="#0000e5"/><stop offset=".9107" stop-color="#0000d7"/><stop offset=".9157" stop-color="#0000c0"/><stop offset=".9207" stop-color="#0000ab"/><stop offset=".9257" stop-color="#0000a0"/><stop offset=".9307" stop-color="#000093"/><stop offset=".9357" stop-color="#000080"/><stop offset=".9993" stop-color="#000080"/></linearGradient>
<linearGradient id="r11"><stop offset=".0007" stop-color="#000080"/><stop offset=".0523" stop-color="#000080"/><stop offset=".0573" stop-color="#000090"/><stop offset=".0623" stop-color="#0000b3"/><stop offset=".0673" stop-color="#0000d7"/><stop offset=".0722" stop-color="#0000f1"/><stop offset=".0772" stop-color="#0003ff"/><stop offset=".0822" stop-color="#000bff"/><stop offset=".0872" stop-color="#0000fd"/><stop offset=".0922" stop-color="#0000df"/><stop offset=".0972" stop-color="#0000d2"/><stop offset=".1022" stop-color="#0000df"/><stop offset=".1072" stop-color="#0000f7"/><stop offset=".1122" stop-color="#0015ff"/><stop offset=".1172" stop-color="#0037ff"/><stop offset=".1222" stop-color="#005dff"/><stop offset=".1272" stop-color="#0087ff"/><stop offset=".1322" stop-color="#00b6ff"/><stop offset=".1372" stop-color="#00dcff"/><stop offset=".1422" stop-color="#00f2ff"/><stop offset=".1471" stop-color="#0dfff2"/><stop offset=".1521" stop-color="#2fffd0"/><stop offset=".1571" stop-color="#50ffaf"/><stop offset=".1621" stop-color="#75ff8a"/><stop offset=".1671" stop-color="#baff45"/><stop offset=".1700" stop-color="#fffa00"/><stop offset=".2487" stop-color="#fbff04"/><stop offset=".2503" stop-color="#85ff7a"/><stop offset=".2549" stop-color="#2affd5"/><stop offset=".2595" stop-color="#0cfff3"/><stop offset=".2641" stop-color="#00f4ff"/><stop offset=".2686" stop-color="#00e3ff"/><stop offset=".2732" stop-color="#00d2ff"/><stop offset=".2778" stop-color="#00bcff"/><stop offset=".2824" stop-color="#00a0ff"/><stop offset=".2870" stop-color="#007bff"/><stop offset=".2915" stop-color="#005dff"/><stop offset=".2961" stop-color="#005cff"/><stop offset=".3007" stop-color="#0079ff"/><stop offset=".3053" stop-color="#009dff"/><stop offset=".3098" stop-color="#00b6ff"/><stop offset=".3144" stop-color="#00caff"/><stop offset=".3190" stop-color="#00deff"/><stop offset=".3236" stop-color="#00f8ff"/><stop offset=".3282" stop-color="#23ffdc"/><stop offset=".3327" stop-color="#6aff95"/><stop offset=".3361" stop-color="#d6ff29"/><stop offset=".3368" stop-color="#faff05"/><stop offset=".5820" stop-color="#fbff04"/><stop offset=".5841" stop-color="#9bff64"/><stop offset=".5890" stop-color="#44ffbb"/><stop offset=".5940" stop-color="#27ffd8"/><stop offset=".5990" stop-color="#14ffeb"/><stop offset=".6040" stop-color="#00ffff"/><stop offset=".6090" stop-color="#00e2ff"/><stop offset=".6140" stop-color="#00aeff"/><stop offset=".6190" stop-color="#0061ff"/><stop offset=".6240" stop-color="#0025ff"/><stop offset=".6290" stop-color="#0003ff"/><stop offset=".6340" stop-color="#0000e2"/><stop offset=".6390" stop-color="#0000b9"/><stop offset=".6440" stop-color="#000092"/><stop offset=".6490" stop-color="#000091"/><stop offset=".6540" stop-color="#0000ae"/><stop offset=".6590" stop-color="#0000ba"/><stop offset=".6639" stop-color="#0000a9"/><stop offset=".6689" stop-color="#000097"/><stop offset=".6739" stop-color="#000099"/><stop offset=".6789" stop-color="#0000ac"/><stop offset=".6839" stop-color="#0000cc"/><stop offset=".6889" stop-color="#0000f9"/><stop offset=".6939" stop-color="#002dff"/><stop offset=".6989" stop-color="#0068ff"/><stop offset=".7039" stop-color="#00b3ff"/><stop offset=".7089" stop-color="#00eaff"/><stop offset=".7139" stop-color="#05fffa"/><stop offset=".7189" stop-color="#09fff6"/><stop offset=".7239" stop-color="#08fff7"/><stop offset=".7289" stop-color="#09fff6"/><stop offset=".7338" stop-color="#11ffee"/><stop offset=".7388" stop-color="#21ffde"/><stop offset=".7438" stop-color="#4cffb3"/><stop offset=".7488" stop-color="#d8ff27"/><stop offset=".7496" stop-color="#fffd00"/><stop offset=".8288" stop-color="#fffa00"/><stop offset=".8308" stop-color="#dbff24"/><stop offset=".8358" stop-color="#8aff75"/><stop offset=".8408" stop-color="#58ffa7"/><stop offset=".8458" stop-color="#2dffd2"/><stop offset=".8508" stop-color="#06fff9"/><stop offset=".8558" stop-color="#00e8ff"/><stop offset=".8608" stop-color="#00d4ff"/><stop offset=".8658" stop-color="#00beff"/><stop offset=".8707" stop-color="#00a0ff"/><stop offset=".8757" stop-color="#0078ff"/><stop offset=".8807" stop-color="#0047ff"/><stop offset=".8857" stop-color="#0015ff"/><stop offset=".8907" stop-color="#0000f2"/><stop offset=".8957" stop-color="#0000dc"/><stop offset=".9007" stop-color="#0000d2"/><stop offset=".9057" stop-color="#0000cc"/><stop offset=".9107" stop-color="#0000b6"/><stop offset=".9157" stop-color="#000099"/><stop offset=".9207" stop-color="#000080"/><stop offset=".9993" stop-color="#000080"/></linearGradient>
<linearGradient id="r12"><stop offset=".0007" stop-color="#000080"/><stop offset=".0872" stop-color="#000080"/><stop offset=".0922" stop-color="#000086"/><stop offset=".0972" stop-color="#000096"/><stop offset=".1022" stop-color="#0000ae"/><stop offset=".1072" stop-color="#0000c5"/><stop offset=".1122" stop-color="#0000dd"/><stop offset=".1172" stop-color="#0000fc"/><stop offset=".1222" stop-color="#0026ff"/><stop offset=".1272" stop-color="#0062ff"/><stop offset=".1322" stop-color="#009cff"/><stop offset=".1372" stop-color="#00bcff"/><stop offset=".1422" stop-color="#00ceff"/><stop offset=".1471" stop-color="#00e5ff"/><stop offset=".1521" stop-color="#0afff5"/><stop offset=".1571" stop-color="#2dffd2"/><stop offset=".1621" stop-color="#53ffac"/><stop offset=".1671" stop-color="#98ff67"/><stop offset=".1700" stop-color="#f2ff0d"/><stop offset=".2487" stop-color="#fffd00"/><stop offset=".2503" stop-color="#dbff24"/><stop offset=".2549" stop-color="#62ff9d"/><stop offset=".2595" stop-color="#45ffba"/><stop offset=".2641" stop-color="#34ffcb"/><stop offset=".2686" stop-color="#1effe1"/><stop offset=".2732" stop-color="#03fffc"/><stop offset=".2778" stop-color="#00e8ff"/><stop offset=".2824" stop-color="#00cbff"/><stop offset=".2870" stop-color="#009dff"/><stop offset=".2915" stop-color="#0060ff"/><stop offset=".2961" stop-color="#0046ff"/><stop offset=".3007" stop-color="#0063ff"/><stop offset=".3053" stop-color="#0092ff"/><stop offset=".3098" stop-color="#00b0ff"/><stop offset=".3144" stop-color="#00c6ff"/><stop offset=".3190" stop-color="#00ddff"/><stop offset=".3236" stop-color="#00f9ff"/><stop offset=".3282" stop-color="#21ffde"/><stop offset=".3327" stop-color="#6aff95"/><stop offset=".3361" stop-color="#d3ff2c"/><stop offset=".3368" stop-color="#f5ff0a"/><stop offset=".5820" stop-color="#fffa00"/><stop offset=".5841" stop-color="#a5ff5a"/><stop offset=".5890" stop-color="#42ffbd"/><stop offset=".5940" stop-color="#13ffec"/><stop offset=".5990" stop-color="#00f9ff"/><stop offset=".6040" stop-color="#00deff"/><stop offset=".6090" stop-color="#00beff"/><stop offset=".6140" stop-color="#0093ff"/><stop offset=".6190" stop-color="#0056ff"/><stop offset=".6240" stop-color="#001eff"/><stop offset=".6290" stop-color="#0000f2"/><stop offset=".6340" stop-color="#0000d0"/><stop offset=".6390" stop-color="#0000b0"/><stop offset=".6440" stop-color="#000096"/><stop offset=".6490" stop-color="#00009a"/><stop offset=".6540" stop-color="#0000ae"/><stop offset=".6590" stop-color="#0000be"/><stop offset=".6639" stop-color="#0000c6"/><stop offset=".6689" stop-color="#0000cd"/><stop offset=".6739" stop-color="#0000cf"/><stop offset=".6789" stop-color="#0000cd"/><stop offset=".6839" stop-color="#0000d6"/><stop offset=".6889" stop-color="#0000ec"/><stop offset=".6939" stop-color="#0009ff"/><stop offset=".6989" stop-color="#002dff"/><stop offset=".7039" stop-color="#0052ff"/><stop offset=".7089" stop-color="#0081ff"/><stop offset=".7139" stop-color="#00adff"/><stop offset=".7189" stop-color="#00c8ff"/><stop offset=".7239" stop-color="#00ddff"/><stop offset=".7289" stop-color="#00f4ff"/><stop offset=".7338" stop-color="#08fff7"/><stop offset=".7388" stop-color="#19ffe6"/><stop offset=".7438" stop-color="#42ffbd"/><stop offset=".7488" stop-color="#d2ff2d"/><stop offset=".7496" stop-color="#fdff02"/><stop offset=".8288" stop-color="#fffa00"/><stop offset=".8308" stop-color="#dbff24"/><stop offset=".8358" stop-color="#afff50"/><stop offset=".8408" stop-color="#6eff91"/><stop offset=".8458" stop-color="#36ffc9"/><stop offset=".8508" stop-color="#00feff"/><stop offset=".8558" stop-color="#00daff"/><stop offset=".8608" stop-color="#00bbff"/><stop offset=".8658" stop-color="#008bff"/><stop offset=".8707" stop-color="#0051ff"/><stop offset=".8757" stop-color="#001aff"/><stop offset=".8807" stop-color="#0000e6"/><stop offset=".8857" stop-color="#0000c7"/><stop offset=".8907" stop-color="#0000af"/><stop offset=".8957" stop-color="#00009c"/><stop offset=".9007" stop-color="#000094"/><stop offset=".9057" stop-color="#00009a"/><stop offset=".9107" stop-color="#0000ad"/><stop offset=".9157" stop-color="#0000c5"/><stop offset=".9207" stop-color="#0000db"/><stop offset=".9257" stop-color="#0000ec"/><stop offset=".9307" stop-color="#0000f3"/><stop offset=".9357" stop-color="#0000ea"/><stop offset=".9407" stop-color="#0000d7"/><stop offset=".9456" stop-color="#0000b4"/><stop offset=".9506" stop-color="#000080"/><stop offset=".9993" stop-color="#000080"/></linearGradient>
<linearGradient id="r13"><stop offset=".0007" stop-color="#000080"/><stop offset=".0872" stop-color="#000080"/><stop offset=".0922" stop-color="#00009e"/><stop offset=".0972" stop-color="#0000c0"/><stop offset=".1022" stop-color="#0000d8"/><stop offset=".1072" stop-color="#0000f0"/><stop offset=".1122" stop-color="#0006ff"/><stop offset=".1172" stop-color="#0015ff"/><stop offset=".1222" stop-color="#002eff"/><stop offset=".1272" stop-color="#0052ff"/><stop offset=".1322" stop-color="#007eff"/><stop offset=".1372" stop-color="#00b9ff"/><stop offset=".1422" stop-color="#00f8ff"/><stop offset=".1471" stop-color="#1fffe0"/><stop offset=".1521" stop-color="#31ffce"/><stop offset=".1571" stop-color="#42ffbd"/><stop offset=".1621" stop-color="#5dffa2"/><stop offset=".1671" stop-color="#9dff62"/><stop offset=".1700" stop-color="#f6ff09"/><stop offset=".2487" stop-color="#fffa00"/><stop offset=".2503" stop-color="#beff41"/><stop offset=".2549" stop-color="#4cffb3"/><stop offset=".2595" stop-color="#26ffd9"/><stop offset=".2641" stop-color="#00fdff"/><stop offset=".2686" stop-color="#00d8ff"/><stop offset=".2732" stop-color="#00b9ff"/><stop offset=".2778" stop-color="#00a4ff"/><stop offset=".2824" stop-color="#0091ff"/><stop offset=".2870" stop-color="#0078ff"/><stop offset=".2915" stop-color="#006cff"/><stop offset=".2961" stop-color="#0075ff"/><stop offset=".3007" stop-color="#008cff"/><stop offset=".3053" stop-color="#00acff"/><stop offset=".3098" stop-color="#00c6ff"/><stop offset=".3144" stop-color="#00d6ff"/><stop offset=".3190" stop-color="#00e8ff"/><stop offset=".3236" stop-color="#0bfff4"/><stop offset=".3282" stop-color="#38ffc7"/><stop offset=".3327" stop-color="#7eff81"/><stop offset=".3361" stop-color="#dbff24"/><stop offset=".3368" stop-color="#fffa00"/><stop offset=".5820" stop-color="#fffa00"/><stop offset=".5841" stop-color="#aeff51"/><stop offset=".5890" stop-color="#58ffa7"/><stop offset=".5940" stop-color="#36ffc9"/><stop offset=".5990" stop-color="#1bffe4"/><stop offset=".6040" stop-color="#00ffff"/><stop offset=".6090" stop-color="#00ecff"/><stop offset=".6140" stop-color="#00ddff"/><stop offset=".6190" stop-color="#00cbff"/><stop offset=".6240" stop-color="#00afff"/><stop offset=".6290" stop-color="#0085ff"/><stop offset=".6340" stop-color="#0056ff"/><stop offset=".6390" stop-color="#001fff"/><stop offset=".6440" stop-color="#0000f0"/><stop offset=".6490" stop-color="#0000d4"/><stop offset=".6540" stop-color="#0000d3"/><stop offset=".6590" stop-color="#0000d2"/><stop offset=".6639" stop-color="#0000cb"/><stop offset=".6689" stop-color="#0000c6"/><stop offset=".6739" stop-color="#0000bf"/><stop offset=".6789" stop-color="#0000b3"/><stop offset=".6839" stop-color="#0000b4"/><stop offset=".6889" stop-color="#0000c2"/><stop offset=".6939" stop-color="#0000d6"/><stop offset=".6989" stop-color="#0000f3"/><stop offset=".7039" stop-color="#0021ff"/><stop offset=".7089" stop-color="#004eff"/><stop offset=".7139" stop-color="#007aff"/><stop offset=".7189" stop-color="#00a6ff"/><stop offset=".7239" stop-color="#00d4ff"/><stop offset=".7289" stop-color="#05fffa"/><stop offset=".7338" stop-color="#2effd1"/><stop offset=".7388" stop-color="#4fffb0"/><stop offset=".7438" stop-color="#79ff86"/><stop offset=".7488" stop-color="#dbff24"/><stop offset=".7496" stop-color="#fffa00"/><stop offset=".8288" stop-color="#fffc00"/><stop offset=".8308" stop-color="#d3ff2c"/><stop offset=".8358" stop-color="#76ff89"/><stop offset=".8408" stop-color="#47ffb8"/><stop offset=".8458" stop-color="#23ffdc"/><stop offset=".8508" stop-color="#03fffc"/><stop offset=".8558" stop-color="#00ebff"/><stop offset=".8608" stop-color="#00d6ff"/><stop offset=".8658" stop-color="#00c3ff"/><stop offset=".8707" stop-color="#00b5ff"/><stop offset=".8757" stop-color="#00adff"/><stop offset=".8807" stop-color="#00a2ff"/><stop offset=".8857" stop-color="#0081ff"/><stop offset=".8907" stop-color="#003fff"/><stop offset=".8957" stop-color="#000eff"/><stop offset=".9007" stop-color="#0000f6"/><stop offset=".9057" stop-color="#0000e7"/><stop offset=".9107" stop-color="#0000d8"/><stop offset=".9157" stop-color="#0000cb"/><stop offset=".9207" stop-color="#0000bd"/><stop offset=".9257" stop-color="#0000a9"/><stop offset=".9307" stop-color="#000095"/><stop offset=".9357" stop-color="#00008a"/><stop offset=".9407" stop-color="#000088"/><stop offset=".9456" stop-color="#000082"/><stop offset=".9506" stop-color="#000080"/><stop offset=".9993" stop-color="#000080"/></linearGradient>
<linearGradient id="r14"><stop offset=".0007" stop-color="#000080"/><stop offset=".0922" stop-color="#000080"/><stop offset=".0972" stop-color="#000095"/><stop offset=".1022" stop-color="#0000ac"/><stop offset=".1072" stop-color="#0000c2"/><stop offset=".1122" stop-color="#0000e4"/><stop offset=".1172" stop-color="#0013ff"/><stop offset=".1222" stop-color="#0038ff"/><stop offset=".1272" stop-color="#004bff"/><stop offset=".1322" stop-color="#0061ff"/><stop offset=".1372" stop-color="#0087ff"/><stop offset=".1422" stop-color="#00b2ff"/><stop offset=".1471" stop-color="#00daff"/><stop offset=".1521" stop-color="#11ffee"/><stop offset=".1571" stop-color="#43ffbc"/><stop offset=".1621" stop-color="#6bff94"/><stop offset=".1671" stop-color="#b2ff4d"/><stop offset=".1700" stop-color="#fffd00"/><stop offset=".2487" stop-color="#f7ff08"/><stop offset=".2503" stop-color="#8fff70"/><stop offset=".2549" stop-color="#1effe1"/><stop offset=".2595" stop-color="#00f6ff"/><stop offset=".2641" stop-color="#00daff"/><stop offset=".2686" stop-color="#00cdff"/><stop offset=".2732" stop-color="#00c7ff"/><stop offset=".2778" stop-color="#00c4ff"/><stop offset=".2824" stop-color="#00bdff"/><stop offset=".2870" stop-color="#00b4ff"/><stop offset=".2915" stop-color="#00b5ff"/><stop offset=".2961" stop-color="#00c6ff"/><stop offset=".3007" stop-color="#00d7ff"/><stop offset=".3053" stop-color="#00d7ff"/><stop offset=".3098" stop-color="#00d4ff"/><stop offset=".3144" stop-color="#00deff"/><stop offset=".3190" stop-color="#00f5ff"/><stop offset=".3236" stop-color="#10ffef"/><stop offset=".3282" stop-color="#3bffc4"/><stop offset=".3327" stop-color="#87ff78"/><stop offset=".3361" stop-color="#ceff31"/><stop offset=".3368" stop-color="#e3ff1c"/><stop offset=".5820" stop-color="#feff01"/><stop offset=".5841" stop-color="#a2ff5d"/><stop offset=".5890" stop-color="#39ffc6"/><stop offset=".5940" stop-color="#08fff7"/><stop offset=".5990" stop-color="#00ebff"/><stop offset=".6040" stop-color="#00d8ff"/><stop offset=".6090" stop-color="#00caff"/><stop offset=".6140" stop-color="#00bbff"/><stop offset=".6190" stop-color="#00a2ff"/><stop offset=".6240" stop-color="#0077ff"/><stop offset=".6290" stop-color="#0046ff"/><stop offset=".6340" stop-color="#0015ff"/><stop offset=".6390" stop-color="#0000ec"/><stop offset=".6440" stop-color="#0000c6"/><stop offset=".6490" stop-color="#0000b2"/><stop offset=".6540" stop-color="#0000ae"/><stop offset=".6590" stop-color="#0000a8"/><stop offset=".6639" stop-color="#00009b"/><stop offset=".6689" stop-color="#000090"/><stop offset=".6739" stop-color="#00009d"/><stop offset=".6789" stop-color="#0000c4"/><stop offset=".6839" stop-color="#0000e1"/><stop offset=".6889" stop-color="#0000f0"/><stop offset=".6939" stop-color="#0000fd"/><stop offset=".6989" stop-color="#0011ff"/><stop offset=".7039" stop-color="#002bff"/><stop offset=".7089" stop-color="#0044ff"/><stop offset=".7139" stop-color="#0050ff"/><stop offset=".7189" stop-color="#0069ff"/><stop offset=".7239" stop-color="#009bff"/><stop offset=".7289" stop-color="#00c5ff"/><stop offset=".7338" stop-color="#00efff"/><stop offset=".7388" stop-color="#1affe5"/><stop offset=".7438" stop-color="#54ffab"/><stop offset=".7488" stop-color="#dbff24"/><stop offset=".7496" stop-color="#fffe00"/><stop offset=".8288" stop-color="#fffa00"/><stop offset=".8308" stop-color="#dbff24"/><stop offset=".8358" stop-color="#a7ff58"/><stop offset=".8408" stop-color="#72ff8d"/><stop offset=".8458" stop-color="#49ffb6"/><stop offset=".8508" stop-color="#28ffd7"/><stop offset=".8558" stop-color="#12ffed"/><stop offset=".8608" stop-color="#00f8ff"/><stop offset=".8658" stop-color="#00ccff"/><stop offset=".8707" stop-color="#00a1ff"/><stop offset=".8757" stop-color="#008dff"/><stop offset=".8807" stop-color="#0077ff"/><stop offset=".8857" stop-color="#004cff"/><stop offset=".8907" stop-color="#002fff"/><stop offset=".8957" stop-color="#001aff"/><stop offset=".9007" stop-color="#0007ff"/><stop offset=".9057" stop-color="#0000f7"/><stop offset=".9107" stop-color="#0000f0"/><stop offset=".9157" stop-color="#0000ed"/><stop offset=".9207" stop-color="#0000eb"/><stop offset=".9257" stop-color="#0000ea"/><stop offset=".9307" stop-color="#0000e7"/><stop offset=".9357" stop-color="#0000db"/><stop offset=".9407" stop-color="#0000c3"/><stop offset=".9456" stop-color="#0000ac"/><stop offset=".9506" stop-color="#000098"/><stop offset=".9556" stop-color="#000080"/><stop offset=".9993" stop-color="#000080"/></linearGradient>
<linearGradient id="r15"><stop offset=".0007" stop-color="#000080"/><stop offset=".0722" stop-color="#000080"/><stop offset=".0772" stop-color="#000084"/><stop offset=".0822" stop-color="#00008e"/><stop offset=".0872" stop-color="#00008d"/><stop offset=".0922" stop-color="#00008c"/><stop offset=".0972" stop-color="#00008e"/><stop offset=".1022" stop-color="#0000a2"/><stop offset=".1072" stop-color="#0000c1"/><stop offset=".1122" stop-color="#0000db"/><stop offset=".1172" stop-color="#0000ee"/><stop offset=".1222" stop-color="#0016ff"/><stop offset=".1272" stop-color="#0052ff"/><stop offset=".1322" stop-color="#008eff"/><stop offset=".1372" stop-color="#00c2ff"/><stop offset=".1422" stop-color="#00ebff"/><stop offset=".1471" stop-color="#0bfff4"/><stop offset=".1521" stop-color="#23ffdc"/><stop offset=".1571" stop-color="#39ffc6"/><stop offset=".1621" stop-color="#5cffa3"/><stop offset=".1671" stop-color="#a4ff5b"/><stop offset=".1700" stop-color="#f6ff09"/><stop offset=".2487" stop-color="#fffa00"/><stop offset=".2503" stop-color="#dbff24"/><stop offset=".2549" stop-color="#64ff9b"/><stop offset=".2595" stop-color="#44ffbb"/><stop offset=".2641" stop-color="#2affd5"/><stop offset=".2686" stop-color="#10ffef"/><stop offset=".2732" stop-color="#00f6ff"/><stop offset=".2778" stop-color="#00d3ff"/><stop offset=".2824" stop-color="#00b3ff"/><stop offset=".2870" stop-color="#00a5ff"/><stop offset=".2915" stop-color="#00a4ff"/><stop offset=".2961" stop-color="#00adff"/><stop offset=".3007" stop-color="#00b6ff"/><stop offset=".3053" stop-color="#00c1ff"/><stop offset=".3098" stop-color="#00d0ff"/><stop offset=".3144" stop-color="#00deff"/><stop offset=".3190" stop-color="#00f0ff"/><stop offset=".3236" stop-color="#16ffe9"/><stop offset=".3282" stop-color="#4bffb4"/><stop offset=".3327" stop-color="#9fff60"/><stop offset=".3361" stop-color="#dbff24"/><stop offset=".3368" stop-color="#fffd00"/><stop offset=".5820" stop-color="#f4ff0b"/><stop offset=".5841" stop-color="#95ff6a"/><stop offset=".5890" stop-color="#2affd5"/><stop offset=".5940" stop-color="#00f6ff"/><stop offset=".5990" stop-color="#00d8ff"/><stop offset=".6040" stop-color="#00beff"/><stop offset=".6090" stop-color="#00a0ff"/><stop offset=".6140" stop-color="#0077ff"/><stop offset=".6190" stop-color="#003fff"/><stop offset=".6240" stop-color="#0004ff"/><stop offset=".6290" stop-color="#0000c4"/><stop offset=".6340" stop-color="#00009b"/><stop offset=".6390" stop-color="#000095"/><stop offset=".6440" stop-color="#00009e"/><stop offset=".6490" stop-color="#0000af"/><stop offset=".6540" stop-color="#0000cb"/><stop offset=".6590" stop-color="#0000e8"/><stop offset=".6639" stop-color="#0000ff"/><stop offset=".6689" stop-color="#000dff"/><stop offset=".6739" stop-color="#000aff"/><stop offset=".6789" stop-color="#0000f7"/><stop offset=".6839" stop-color="#0000e7"/><stop offset=".6889" stop-color="#0000e2"/><stop offset=".6939" stop-color="#0000e9"/><stop offset=".6989" stop-color="#0000fc"/><stop offset=".7039" stop-color="#002aff"/><stop offset=".7089" stop-color="#0061ff"/><stop offset=".7139" stop-color="#0094ff"/><stop offset=".7189" stop-color="#00b4ff"/><stop offset=".7239" stop-color="#00d1ff"/><stop offset=".7289" stop-color="#00f0ff"/><stop offset=".7338" stop-color="#0cfff3"/><stop offset=".7388" stop-color="#1fffe0"/><stop offset=".7438" stop-color="#43ffbc"/><stop offset=".7488" stop-color="#d3ff2c"/><stop offset=".7496" stop-color="#fffa00"/><stop offset=".8288" stop-color="#f9ff06"/><stop offset=".8308" stop-color="#c2ff3d"/><stop offset=".8358" stop-color="#69ff96"/><stop offset=".8408" stop-color="#54ffab"/><stop offset=".8458" stop-color="#50ffaf"/><stop offset=".8508" stop-color="#48ffb7"/><stop offset=".8558" stop-color="#3dffc2"/><stop offset=".8608" stop-color="#2cffd3"/><stop offset=".8658" stop-color="#0ffff0"/><stop offset=".8707" stop-color="#00ecff"/><stop offset=".8757" stop-color="#00c1ff"/><stop offset=".8807" stop-color="#0089ff"/><stop offset=".8857" stop-color="#0041ff"/><stop offset=".8907" stop-color="#0004ff"/><stop offset=".8957" stop-color="#0000e0"/><stop offset=".9007" stop-color="#0000c7"/><stop offset=".9057" stop-color="#0000b6"/><stop offset=".9107" stop-color="#0000a9"/><stop offset=".9157" stop-color="#00009e"/><stop offset=".9207" stop-color="#000095"/><stop offset=".9257" stop-color="#000094"/><stop offset=".9307" stop-color="#000093"/><stop offset=".9357" stop-color="#000082"/><stop offset=".9407" stop-color="#000080"/><stop offset=".9993" stop-color="#000080"/></linearGradient>
<linearGradient id="r16"><stop offset=".0007" stop-color="#000080"/><stop offset=".0922" stop-color="#000080"/><stop offset=".0972" stop-color="#00009e"/><stop offset=".1022" stop-color="#0000bb"/><stop offset=".1072" stop-color="#0000d9"/><stop offset=".1122" stop-color="#0000f7"/><stop offset=".1172" stop-color="#0013ff"/><stop offset=".1222" stop-color="#002eff"/><stop offset=".1272" stop-color="#004cff"/><stop offset=".1322" stop-color="#006eff"/><stop offset=".1372" stop-color="#0085ff"/><stop offset=".1422" stop-color="#0095ff"/><stop offset=".1471" stop-color="#00b2ff"/><stop offset=".1521" stop-color="#00e0ff"/><stop offset=".1571" stop-color="#0efff1"/><stop offset=".1621" stop-color="#3dffc2"/><stop offset=".1671" stop-color="#86ff79"/><stop offset=".1700" stop-color="#e1ff1e"/><stop offset=".2487" stop-color="#fbff04"/><stop offset=".2503" stop-color="#74ff8b"/><stop offset=".2549" stop-color="#21ffde"/><stop offset=".2595" stop-color="#00faff"/><stop offset=".2641" stop-color="#00deff"/><stop offset=".2686" stop-color="#00cfff"/><stop offset=".2732" stop-color="#00c4ff"/><stop offset=".2778" stop-color="#00baff"/><stop offset=".2824" stop-color="#00acff"/><stop offset=".2870" stop-color="#009cff"/><stop offset=".2915" stop-color="#008bff"/><stop offset=".2961" stop-color="#007dff"/><stop offset=".3007" stop-color="#0074ff"/><stop offset=".3053" stop-color="#007aff"/><stop offset=".3098" stop-color="#0094ff"/><stop offset=".3144" stop-color="#00c2ff"/><stop offset=".3190" stop-color="#00e6ff"/><stop offset=".3236" stop-color="#03fffc"/><stop offset=".3282" stop-color="#27ffd8"/><stop offset=".3327" stop-color="#69ff96"/><stop offset=".3361" stop-color="#dbff24"/><stop offset=".3368" stop-color="#fffc00"/><stop offset=".5820" stop-color="#fffe00"/><stop offset=".5841" stop-color="#99ff66"/><stop offset=".5890" stop-color="#23ffdc"/><stop offset=".5940" stop-color="#00e7ff"/><stop offset=".5990" stop-color="#00beff"/><stop offset=".6040" stop-color="#00a7ff"/><stop offset=".6090" stop-color="#008bff"/><stop offset=".6140" stop-color="#0063ff"/><stop offset=".6190" stop-color="#003fff"/><stop offset=".6240" stop-color="#0027ff"/><stop offset=".6290" stop-color="#0014ff"/><stop offset=".6340" stop-color="#0003ff"/><stop offset=".6390" stop-color="#0000e8"/><stop offset=".6440" stop-color="#0000c9"/><stop offset=".6490" stop-color="#0000af"/><stop offset=".6540" stop-color="#0000a1"/><stop offset=".6590" stop-color="#000097"/><stop offset=".6639" stop-color="#000094"/><stop offset=".6689" stop-color="#000096"/><stop offset=".6739" stop-color="#000096"/><stop offset=".6789" stop-color="#00009f"/><stop offset=".6839" stop-color="#0000b3"/><stop offset=".6889" stop-color="#0000cc"/><stop offset=".6939" stop-color="#0000ed"/><stop offset=".6989" stop-color="#0017ff"/><stop offset=".7039" stop-color="#0043ff"/><stop offset=".7089" stop-color="#0074ff"/><stop offset=".7139" stop-color="#00acff"/><stop offset=".7189" stop-color="#00d7ff"/><stop offset=".7239" stop-color="#00edff"/><stop offset=".7289" stop-color="#00faff"/><stop offset=".7338" stop-color="#11ffee"/><stop offset=".7388" stop-color="#39ffc6"/><stop offset=".7438" stop-color="#72ff8d"/><stop offset=".7488" stop-color="#dbff24"/><stop offset=".7496" stop-color="#fffa00"/><stop offset=".8288" stop-color="#fffa00"/><stop offset=".8308" stop-color="#dbff24"/><stop offset=".8358" stop-color="#8dff72"/><stop offset=".8408" stop-color="#58ffa7"/><stop offset=".8458" stop-color="#2bffd4"/><stop offset=".8508" stop-color="#03fffc"/><stop offset=".8558" stop-color="#00eaff"/><stop offset=".8608" stop-color="#00d8ff"/><stop offset=".8658" stop-color="#00c6ff"/><stop offset=".8707" stop-color="#00a7ff"/><stop offset=".8757" stop-color="#0063ff"/><stop offset=".8807" stop-color="#000aff"/><stop offset=".8857" stop-color="#0000dd"/><stop offset=".8907" stop-color="#0000c8"/><stop offset=".8957" stop-color="#0000be"/><stop offset=".9007" stop-color="#0000c4"/><stop offset=".9057" stop-color="#0000cd"/><stop offset=".9107" stop-color="#0000c2"/><stop offset=".9157" stop-color="#0000a5"/><stop offset=".9207" stop-color="#00008f"/><stop offset=".9257" stop-color="#000084"/><stop offset=".9307" stop-color="#000080"/><stop offset=".9993" stop-color="#000080"/></linearGradient>
<linearGradient id="r17"><stop offset=".0007" stop-color="#000080"/><stop offset=".0922" stop-color="#000080"/><stop offset=".0972" stop-color="#000087"/><stop offset=".1022" stop-color="#000098"/><stop offset=".1072" stop-color="#0000b1"/><stop offset=".1122" stop-color="#0000d3"/><stop offset=".1172" stop-color="#0000fc"/><stop offset=".1222" stop-color="#0024ff"/><stop offset=".1272" stop-color="#0041ff"/><stop offset=".1322" stop-color="#005dff"/><stop offset=".1372" stop-color="#008aff"/><stop offset=".1422" stop-color="#00baff"/><stop offset=".1471" stop-color="#00deff"/><stop offset=".1521" stop-color="#00f9ff"/><stop offset=".1571" stop-color="#17ffe8"/><stop offset=".1621" stop-color="#43ffbc"/><stop offset=".1671" stop-color="#91ff6e"/><stop offset=".1700" stop-color="#eeff11"/><stop offset=".2487" stop-color="#f3ff0c"/><stop offset=".2503" stop-color="#97ff68"/><stop offset=".2549" stop-color="#29ffd6"/><stop offset=".2595" stop-color="#08fff7"/><stop offset=".2641" stop-color="#00f1ff"/><stop offset=".2686" stop-color="#00e3ff"/><stop offset=".2732" stop-color="#00cfff"/><stop offset=".2778" stop-color="#00b2ff"/><stop offset=".2824" stop-color="#008fff"/><stop offset=".2870" stop-color="#0072ff"/><stop offset=".2915" stop-color="#0061ff"/><stop offset=".2961" stop-color="#0061ff"/><stop offset=".3007" stop-color="#0078ff"/><stop offset=".3053" stop-color="#009dff"/><stop offset=".3098" stop-color="#00c2ff"/><stop offset=".3144" stop-color="#00deff"/><stop offset=".3190" stop-color="#00fdff"/><stop offset=".3236" stop-color="#29ffd6"/><stop offset=".3282" stop-color="#5bffa4"/><stop offset=".3327" stop-color="#a4ff5b"/><stop offset=".3361" stop-color="#dbff24"/><stop offset=".3368" stop-color="#fffa00"/><stop offset=".5820" stop-color="#fffb00"/><stop offset=".5841" stop-color="#a8ff57"/><stop offset=".5890" stop-color="#3effc1"/><stop offset=".5940" stop-color="#04fffb"/><stop offset=".5990" stop-color="#00e8ff"/><stop offset=".6040" stop-color="#00dfff"/><stop offset=".6090" stop-color="#00e1ff"/><stop offset=".6140" stop-color="#00e1ff"/><stop offset=".6190" stop-color="#00cfff"/><stop offset=".6240" stop-color="#00c5ff"/><stop offset=".6290" stop-color="#00b9ff"/><stop offset=".6340" stop-color="#00aaff"/><stop offset=".6390" stop-color="#008fff"/><stop offset=".6440" stop-color="#0068ff"/><stop offset=".6490" stop-color="#0037ff"/><stop offset=".6540" stop-color="#0002ff"/><stop offset=".6590" stop-color="#0000d8"/><stop offset=".6639" stop-color="#0000bf"/><stop offset=".6689" stop-color="#0000b2"/><stop offset=".6739" stop-color="#0000b1"/><stop offset=".6789" stop-color="#0000b4"/><stop offset=".6839" stop-color="#0000c5"/><stop offset=".6889" stop-color="#0000db"/><stop offset=".6939" stop-color="#0000f0"/><stop offset=".6989" stop-color="#000eff"/><stop offset=".7039" stop-color="#0033ff"/><stop offset=".7089" stop-color="#0056ff"/><stop offset=".7139" stop-color="#007dff"/><stop offset=".7189" stop-color="#00abff"/><stop offset=".7239" stop-color="#00ceff"/><stop offset=".7289" stop-color="#00e6ff"/><stop offset=".7338" stop-color="#03fffc"/><stop offset=".7388" stop-color="#27ffd8"/><stop offset=".7438" stop-color="#59ffa6"/><stop offset=".7488" stop-color="#dbff24"/><stop offset=".7496" stop-color="#fffa00"/><stop offset=".8288" stop-color="#e9ff16"/><stop offset=".8308" stop-color="#a3ff5c"/><stop offset=".8358" stop-color="#3bffc4"/><stop offset=".8408" stop-color="#18ffe7"/><stop offset=".8458" stop-color="#14ffeb"/><stop offset=".8508" stop-color="#21ffde"/><stop offset=".8558" stop-color="#2bffd4"/><stop offset=".8608" stop-color="#2affd5"/><stop offset=".8658" stop-color="#24ffdb"/><stop offset=".8707" stop-color="#0efff1"/><stop offset=".8757" stop-color="#00d8ff"/><stop offset=".8807" stop-color="#0090ff"/><stop offset=".8857" stop-color="#0050ff"/><stop offset=".8907" stop-color="#0011ff"/><stop offset=".8957" stop-color="#0000e7"/><stop offset=".9007" stop-color="#0000cc"/><stop offset=".9057" stop-color="#0000b9"/><stop offset=".9107" stop-color="#0000aa"/><stop offset=".9157" stop-color="#00009b"/><stop offset=".9207" stop-color="#000091"/><stop offset=".9257" stop-color="#000091"/><stop offset=".9307" stop-color="#000092"/><stop offset=".9357" stop-color="#000088"/><stop offset=".9407" stop-color="#000080"/><stop offset=".9506" stop-color="#000080"/><stop offset=".9556" stop-color="#000084"/><stop offset=".9577" stop-color="#000084"/><stop offset=".9681" stop-color="#000080"/><stop offset=".9993" stop-color="#000080"/></linearGradient>
<linearGradient id="r18"><stop offset=".0007" stop-color="#000080"/><stop offset=".0573" stop-color="#000080"/><stop offset=".0623" stop-color="#000092"/><stop offset=".0673" stop-color="#0000b0"/><stop offset=".0722" stop-color="#0000c3"/><stop offset=".0772" stop-color="#0000c6"/><stop offset=".0822" stop-color="#0000c3"/><stop offset=".0872" stop-color="#0000c3"/><stop offset=".0922" stop-color="#0000c5"/><stop offset=".0972" stop-color="#0000ca"/><stop offset=".1022" stop-color="#0000d9"/><stop offset=".1072" stop-color="#0000f2"/><stop offset=".1122" stop-color="#0017ff"/><stop offset=".1172" stop-color="#0042ff"/><stop offset=".1222" stop-color="#0068ff"/><stop offset=".1272" stop-color="#0081ff"/><stop offset=".1322" stop-color="#0097ff"/><stop offset=".1372" stop-color="#00b4ff"/><stop offset=".1422" stop-color="#00d0ff"/><stop offset=".1471" stop-color="#00efff"/><stop offset=".1521" stop-color="#14ffeb"/><stop offset=".1571" stop-color="#37ffc8"/><stop offset=".1621" stop-color="#62ff9d"/><stop offset=".1671" stop-color="#aaff55"/><stop offset=".1700" stop-color="#ffff00"/><stop offset=".2487" stop-color="#fffd00"/><stop offset=".2503" stop-color="#aaff55"/><stop offset=".2549" stop-color="#4bffb4"/><stop offset=".2595" stop-color="#36ffc9"/><stop offset=".2641" stop-color="#22ffdd"/><stop offset=".2686" stop-color="#17ffe8"/><stop offset=".2732" stop-color="#0dfff2"/><stop offset=".2778" stop-color="#00f2ff"/><stop offset=".2824" stop-color="#00d3ff"/><stop offset=".2870" stop-color="#00c3ff"/><stop offset=".2915" stop-color="#00beff"/><stop offset=".2961" stop-color="#00c4ff"/><stop offset=".3007" stop-color="#00e0ff"/><stop offset=".3053" stop-color="#03fffc"/><stop offset=".3098" stop-color="#0afff5"/><stop offset=".3144" stop-color="#00ffff"/><stop offset=".3190" stop-color="#00feff"/><stop offset=".3236" stop-color="#19ffe6"/><stop offset=".3282" stop-color="#4cffb3"/><stop offset=".3327" stop-color="#9eff61"/><stop offset=".3361" stop-color="#dbff24"/><stop offset=".3368" stop-color="#fcff03"/><stop offset=".5820" stop-color="#fffa00"/><stop offset=".5841" stop-color="#a2ff5d"/><stop offset=".5890" stop-color="#3effc1"/><stop offset=".5940" stop-color="#15ffea"/><stop offset=".5990" stop-color="#00f8ff"/><stop offset=".6040" stop-color="#00deff"/><stop offset=".6090" stop-color="#00c2ff"/><stop offset=".6140" stop-color="#0099ff"/><stop offset=".6190" stop-color="#0067ff"/><stop offset=".6240" stop-color="#0049ff"/><stop offset=".6290" stop-color="#0038ff"/><stop offset=".6340" stop-color="#002bff"/><stop offset=".6390" stop-color="#0013ff"/><stop offset=".6440" stop-color="#0000f7"/><stop offset=".6490" stop-color="#0000e2"/><stop offset=".6540" stop-color="#0000cd"/><stop offset=".6590" stop-color="#0000b9"/><stop offset=".6639" stop-color="#0000a4"/><stop offset=".6689" stop-color="#000093"/><stop offset=".6739" stop-color="#000095"/><stop offset=".6789" stop-color="#0000ad"/><stop offset=".6839" stop-color="#0000d4"/><stop offset=".6889" stop-color="#0000fa"/><stop offset=".6939" stop-color="#002aff"/><stop offset=".6989" stop-color="#005dff"/><stop offset=".7039" stop-color="#0093ff"/><stop offset=".7089" stop-color="#00bfff"/><stop offset=".7139" stop-color="#00d1ff"/><stop offset=".7189" stop-color="#00dcff"/><stop offset=".7239" stop-color="#00efff"/><stop offset=".7289" stop-color="#03fffc"/><stop offset=".7338" stop-color="#13ffec"/><stop offset=".7388" stop-color="#24ffdb"/><stop offset=".7438" stop-color="#4dffb2"/><stop offset=".7488" stop-color="#d1ff2e"/><stop offset=".7496" stop-color="#faff05"/><stop offset=".8288" stop-color="#fcff03"/><stop offset=".8308" stop-color="#beff41"/><stop offset=".8358" stop-color="#56ffa9"/><stop offset=".8408" stop-color="#25ffda"/><stop offset=".8458" stop-color="#0ffff0"/><stop offset=".8508" stop-color="#07fff8"/><stop offset=".8558" stop-color="#00ffff"/><stop offset=".8608" stop-color="#00f3ff"/><stop offset=".8658" stop-color="#00e5ff"/><stop offset=".8707" stop-color="#00d4ff"/><stop offset=".8757" stop-color="#00bcff"/><stop offset=".8807" stop-color="#009bff"/><stop offset=".8857" stop-color="#0069ff"/><stop offset=".8907" stop-color="#0028ff"/><stop offset=".8957" stop-color="#0004ff"/><stop offset=".9007" stop-color="#0000f6"/><stop offset=".9057" stop-color="#0000f2"/><stop offset=".9107" stop-color="#0000ee"/><stop offset=".9157" stop-color="#0000e8"/><stop offset=".9207" stop-color="#0000e3"/><stop offset=".9257" stop-color="#0000dd"/><stop offset=".9307" stop-color="#0000d2"/><stop offset=".9357" stop-color="#0000bd"/><stop offset=".9407" stop-color="#00009a"/><stop offset=".9456" stop-color="#000080"/><stop offset=".9993" stop-color="#000080"/></linearGradient>
<linearGradient id="r19"><stop offset=".0007" stop-color="#000080"/><stop offset=".0623" stop-color="#000080"/><stop offset=".0673" stop-color="#0000a2"/><stop offset=".0722" stop-color="#0000b9"/><stop offset=".0772" stop-color="#0000bc"/><stop offset=".0822" stop-color="#0000b5"/><stop offset=".0872" stop-color="#0000af"/><stop offset=".0922" stop-color="#0000ac"/><stop offset=".0972" stop-color="#0000ac"/><stop offset=".1022" stop-color="#0000b7"/><stop offset=".1072" stop-color="#0000cb"/><stop offset=".1122" stop-color="#0000da"/><stop offset=".1172" stop-color="#0000d8"/><stop offset=".1222" stop-color="#0000f4"/><stop offset=".1272" stop-color="#0035ff"/><stop offset=".1322" stop-color="#007fff"/><stop offset=".1372" stop-color="#00c1ff"/><stop offset=".1422" stop-color="#00f7ff"/><stop offset=".1471" stop-color="#19ffe6"/><stop offset=".1521" stop-color="#2bffd4"/><stop offset=".1571" stop-color="#3effc1"/><stop offset=".1621" stop-color="#60ff9f"/><stop offset=".1671" stop-color="#a5ff5a"/><stop offset=".1700" stop-color="#f8ff07"/><stop offset=".2487" stop-color="#f7ff08"/><stop offset=".2503" stop-color="#93ff6c"/><stop offset=".2549" stop-color="#15ffea"/><stop offset=".2595" stop-color="#00deff"/><stop offset=".2641" stop-color="#00b1ff"/><stop offset=".2686" stop-color="#0095ff"/><stop offset=".2732" stop-color="#007aff"/><stop offset=".2778" stop-color="#006cff"/><stop offset=".2824" stop-color="#006dff"/><stop offset=".2870" stop-color="#007bff"/><stop offset=".2915" stop-color="#008fff"/><stop offset=".2961" stop-color="#00a4ff"/><stop offset=".3007" stop-color="#00b9ff"/><stop offset=".3053" stop-color="#00caff"/><stop offset=".3098" stop-color="#00d9ff"/><stop offset=".3144" stop-color="#00ebff"/><stop offset=".3190" stop-color="#00fcff"/><stop offset=".3236" stop-color="#0ffff0"/><stop offset=".3282" stop-color="#28ffd7"/><stop offset=".3327" stop-color="#63ff9c"/><stop offset=".3361" stop-color="#d7ff28"/><stop offset=".3368" stop-color="#fffe00"/><stop offset=".5820" stop-color="#fcff03"/><stop offset=".5841" stop-color="#a4ff5b"/><stop offset=".5890" stop-color="#45ffba"/><stop offset=".5940" stop-color="#1effe1"/><stop offset=".5990" stop-color="#04fffb"/><stop offset=".6040" stop-color="#00e8ff"/><stop offset=".6090" stop-color="#00c6ff"/><stop offset=".6140" stop-color="#0095ff"/><stop offset=".6190" stop-color="#0055ff"/><stop offset=".6240" stop-color="#0032ff"/><stop offset=".6290" stop-color="#0021ff"/><stop offset=".6340" stop-color="#0015ff"/><stop offset=".6390" stop-color="#0001ff"/><stop offset=".6440" stop-color="#0000ee"/><stop offset=".6490" stop-color="#0000e9"/><stop offset=".6540" stop-color="#0000f0"/><stop offset=".6590" stop-color="#0000fc"/><stop offset=".6639" stop-color="#000cff"/><stop offset=".6689" stop-color="#0018ff"/><stop offset=".6739" stop-color="#0017ff"/><stop offset=".6789" stop-color="#0011ff"/><stop offset=".6839" stop-color="#001bff"/><stop offset=".6889" stop-color="#0030ff"/><stop offset=".6939" stop-color="#004cff"/><stop offset=".6989" stop-color="#0078ff"/><stop offset=".7039" stop-color="#00b0ff"/><stop offset=".7089" stop-color="#00e4ff"/><stop offset=".7139" stop-color="#00f5ff"/><stop offset=".7189" stop-color="#00efff"/><stop offset=".7239" stop-color="#00eaff"/><stop offset=".7289" stop-color="#00e7ff"/><stop offset=".7338" stop-color="#00eaff"/><stop offset=".7388" stop-color="#00fdff"/><stop offset=".7438" stop-color="#30ffcf"/><stop offset=".7488" stop-color="#c5ff3a"/><stop offset=".7496" stop-color="#f1ff0e"/><stop offset=".8288" stop-color="#e8ff17"/><stop offset=".8308" stop-color="#b9ff46"/><stop offset=".8358" stop-color="#60ff9f"/><stop offset=".8408" stop-color="#42ffbd"/><stop offset=".8458" stop-color="#3effc1"/><stop offset=".8508" stop-color="#39ffc6"/><stop offset=".8558" stop-color="#33ffcc"/><stop offset=".8608" stop-color="#24ffdb"/><stop offset=".8658" stop-color="#11ffee"/><stop offset=".8707" stop-color="#00fbff"/><stop offset=".8757" stop-color="#00dbff"/><stop offset=".8807" stop-color="#00acff"/><stop offset=".8857" stop-color="#0065ff"/><stop offset=".8907" stop-color="#0033ff"/><stop offset=".8957" stop-color="#0018ff"/><stop offset=".9007" stop-color="#000bff"/><stop offset=".9057" stop-color="#0004ff"/><stop offset=".9107" stop-color="#0000fc"/><stop offset=".9157" stop-color="#0000f5"/><stop offset=".9207" stop-color="#0000ea"/><stop offset=".9257" stop-color="#0000c6"/><stop offset=".9307" stop-color="#000098"/><stop offset=".9357" stop-color="#000081"/><stop offset=".9407" stop-color="#000080"/><stop offset=".9993" stop-color="#000080"/></linearGradient>
<linearGradient id="r20"><stop offset=".0007" stop-color="#000080"/><stop offset=".0722" stop-color="#000080"/><stop offset=".0772" stop-color="#000091"/><stop offset=".0822" stop-color="#0000ae"/><stop offset=".0872" stop-color="#0000c2"/><stop offset=".0922" stop-color="#0000cf"/><stop offset=".0972" stop-color="#0000e8"/><stop offset=".1022" stop-color="#0012ff"/><stop offset=".1072" stop-color="#003bff"/><stop offset=".1122" stop-color="#005dff"/><stop offset=".1172" stop-color="#007fff"/><stop offset=".1222" stop-color="#0091ff"/><stop offset=".1272" stop-color="#0086ff"/><stop offset=".1322" stop-color="#0081ff"/><stop offset=".1372" stop-color="#00a2ff"/><stop offset=".1422" stop-color="#00caff"/><stop offset=".1471" stop-color="#00edff"/><stop offset=".1521" stop-color="#0dfff2"/><stop offset=".1571" stop-color="#2cffd3"/><stop offset=".1621" stop-color="#4fffb0"/><stop offset=".1671" stop-color="#93ff6c"/><stop offset=".1700" stop-color="#ebff14"/><stop offset=".2487" stop-color="#f9ff06"/><stop offset=".2503" stop-color="#74ff8b"/><stop offset=".2549" stop-color="#14ffeb"/><stop offset=".2595" stop-color="#00e2ff"/><stop offset=".2641" stop-color="#00c7ff"/><stop offset=".2686" stop-color="#00c1ff"/><stop offset=".2732" stop-color="#00b7ff"/><stop offset=".2778" stop-color="#00adff"/><stop offset=".2824" stop-color="#00abff"/><stop offset=".2870" stop-color="#00b6ff"/><stop offset=".2915" stop-color="#00c9ff"/><stop offset=".2961" stop-color="#00deff"/><stop offset=".3007" stop-color="#00f7ff"/><stop offset=".3053" stop-color="#0efff1"/><stop offset=".3098" stop-color="#24ffdb"/><stop offset=".3144" stop-color="#3bffc4"/><stop offset=".3190" stop-color="#50ffaf"/><stop offset=".3236" stop-color="#60ff9f"/><stop offset=".3282" stop-color="#73ff8c"/><stop offset=".3327" stop-color="#98ff67"/><stop offset=".3361" stop-color="#dbff24"/><stop offset=".3368" stop-color="#fffa00"/><stop offset=".5820" stop-color="#fffa00"/><stop offset=".5841" stop-color="#a5ff5a"/><stop offset=".5890" stop-color="#46ffb9"/><stop offset=".5940" stop-color="#1effe1"/><stop offset=".5990" stop-color="#05fffa"/><stop offset=".6040" stop-color="#00e9ff"/><stop offset=".6090" stop-color="#00c7ff"/><stop offset=".6140" stop-color="#008dff"/><stop offset=".6190" stop-color="#0042ff"/><stop offset=".6240" stop-color="#0010ff"/><stop offset=".6290" stop-color="#0000f1"/><stop offset=".6340" stop-color="#0000db"/><stop offset=".6390" stop-color="#0000c1"/><stop offset=".6440" stop-color="#0000ab"/><stop offset=".6490" stop-color="#0000a8"/><stop offset=".6540" stop-color="#0000b2"/><stop offset=".6590" stop-color="#0000c0"/><stop offset=".6639" stop-color="#0000ca"/><stop offset=".6689" stop-color="#0000d2"/><stop offset=".6739" stop-color="#0000d8"/><stop offset=".6789" stop-color="#0000e3"/><stop offset=".6839" stop-color="#0000f9"/><stop offset=".6889" stop-color="#000dff"/><stop offset=".6939" stop-color="#002aff"/><stop offset=".6989" stop-color="#0069ff"/><stop offset=".7039" stop-color="#00c0ff"/><stop offset=".7089" stop-color="#00f4ff"/><stop offset=".7139" stop-color="#02fffd"/><stop offset=".7189" stop-color="#09fff6"/><stop offset=".7239" stop-color="#0efff1"/><stop offset=".7289" stop-color="#0dfff2"/><stop offset=".7338" stop-color="#0bfff4"/><stop offset=".7388" stop-color="#19ffe6"/><stop offset=".7438" stop-color="#44ffbb"/><stop offset=".7488" stop-color="#d4ff2b"/><stop offset=".7496" stop-color="#fffd00"/><stop offset=".8288" stop-color="#fffa00"/><stop offset=".8308" stop-color="#dbff24"/><stop offset=".8358" stop-color="#8dff72"/><stop offset=".8408" stop-color="#69ff96"/><stop offset=".8458" stop-color="#51ffae"/><stop offset=".8508" stop-color="#37ffc8"/><stop offset=".8558" stop-color="#20ffdf"/><stop offset=".8608" stop-color="#10ffef"/><stop offset=".8658" stop-color="#08fff7"/><stop offset=".8707" stop-color="#00f1ff"/><stop offset=".8757" stop-color="#00b5ff"/><stop offset=".8807" stop-color="#0068ff"/><stop offset=".8857" stop-color="#0039ff"/><stop offset=".8907" stop-color="#001aff"/><stop offset=".8957" stop-color="#0005ff"/><stop offset=".9007" stop-color="#0000fd"/><stop offset=".9057" stop-color="#0000fc"/><stop offset=".9107" stop-color="#0000ee"/><stop offset=".9157" stop-color="#0000d4"/><stop offset=".9207" stop-color="#0000bd"/><stop offset=".9257" stop-color="#0000ac"/><stop offset=".9307" stop-color="#00009c"/><stop offset=".9357" stop-color="#000089"/><stop offset=".9407" stop-color="#000080"/><stop offset=".9993" stop-color="#000080"/></linearGradient>
<linearGradient id="r21"><stop offset=".0007" stop-color="#000080"/><stop offset=".0772" stop-color="#000080"/><stop offset=".0822" stop-color="#00008b"/><stop offset=".0872" stop-color="#0000ac"/><stop offset=".0922" stop-color="#0000c6"/><stop offset=".0972" stop-color="#0000ee"/><stop offset=".1022" stop-color="#0033ff"/><stop offset=".1072" stop-color="#0071ff"/><stop offset=".1122" stop-color="#0089ff"/><stop offset=".1172" stop-color="#008dff"/><stop offset=".1222" stop-color="#009bff"/><stop offset=".1272" stop-color="#00c6ff"/><stop offset=".1322" stop-color="#00f3ff"/><stop offset=".1372" stop-color="#00feff"/><stop offset=".1422" stop-color="#00fcff"/><stop offset=".1471" stop-color="#04fffb"/><stop offset=".1521" stop-color="#15ffea"/><stop offset=".1571" stop-color="#29ffd6"/><stop offset=".1621" stop-color="#48ffb7"/><stop offset=".1671" stop-color="#8dff72"/><stop offset=".1700" stop-color="#ecff13"/><stop offset=".2487" stop-color="#fffa00"/><stop offset=".2503" stop-color="#c1ff3e"/><stop offset=".2549" stop-color="#53ffac"/><stop offset=".2595" stop-color="#3bffc4"/><stop offset=".2641" stop-color="#28ffd7"/><stop offset=".2686" stop-color="#18ffe7"/><stop offset=".2732" stop-color="#06fff9"/><stop offset=".2778" stop-color="#00deff"/><stop offset=".2824" stop-color="#00afff"/><stop offset=".2870" stop-color="#009dff"/><stop offset=".2915" stop-color="#00b8ff"/><stop offset=".2961" stop-color="#00eaff"/><stop offset=".3007" stop-color="#0efff1"/><stop offset=".3053" stop-color="#22ffdd"/><stop offset=".3098" stop-color="#2fffd0"/><stop offset=".3144" stop-color="#3affc5"/><stop offset=".3190" stop-color="#43ffbc"/><stop offset=".3236" stop-color="#47ffb8"/><stop offset=".3282" stop-color="#59ffa6"/><stop offset=".3327" stop-color="#8bff74"/><stop offset=".3361" stop-color="#dbff24"/><stop offset=".3368" stop-color="#fffa00"/><stop offset=".5820" stop-color="#fcff03"/><stop offset=".5841" stop-color="#acff53"/><stop offset=".5890" stop-color="#5cffa3"/><stop offset=".5940" stop-color="#31ffce"/><stop offset=".5990" stop-color="#16ffe9"/><stop offset=".6040" stop-color="#00f5ff"/><stop offset=".6090" stop-color="#00d3ff"/><stop offset=".6140" stop-color="#00adff"/><stop offset=".6190" stop-color="#0078ff"/><stop offset=".6240" stop-color="#003fff"/><stop offset=".6290" stop-color="#0021ff"/><stop offset=".6340" stop-color="#0007ff"/><stop offset=".6390" stop-color="#0000e6"/><stop offset=".6440" stop-color="#0000ca"/><stop offset=".6490" stop-color="#0000ca"/><stop offset=".6540" stop-color="#0000df"/><stop offset=".6590" stop-color="#0000f1"/><stop offset=".6639" stop-color="#0000eb"/><stop offset=".6689" stop-color="#0000de"/><stop offset=".6739" stop-color="#0000dd"/><stop offset=".6789" stop-color="#0000e7"/><stop offset=".6839" stop-color="#0000f5"/><stop offset=".6889" stop-color="#0001ff"/><stop offset=".6939" stop-color="#0011ff"/><stop offset=".6989" stop-color="#0026ff"/><stop offset=".7039" stop-color="#0041ff"/><stop offset=".7089" stop-color="#0065ff"/><stop offset=".7139" stop-color="#008dff"/><stop offset=".7189" stop-color="#00b1ff"/><stop offset=".7239" stop-color="#00cfff"/><stop offset=".7289" stop-color="#00ebff"/><stop offset=".7338" stop-color="#0afff5"/><stop offset=".7388" stop-color="#27ffd8"/><stop offset=".7438" stop-color="#57ffa8"/><stop offset=".7488" stop-color="#dbff24"/><stop offset=".7496" stop-color="#fffc00"/><stop offset=".8288" stop-color="#fffa00"/><stop offset=".8308" stop-color="#d1ff2e"/><stop offset=".8358" stop-color="#71ff8e"/><stop offset=".8408" stop-color="#4bffb4"/><stop offset=".8458" stop-color="#35ffca"/><stop offset=".8508" stop-color="#22ffdd"/><stop offset=".8558" stop-color="#10ffef"/><stop offset=".8608" stop-color="#02fffd"/><stop offset=".8658" stop-color="#00f8ff"/><stop offset=".8707" stop-color="#00ecff"/><stop offset=".8757" stop-color="#00ceff"/><stop offset=".8807" stop-color="#00a4ff"/><stop offset=".8857" stop-color="#0080ff"/><stop offset=".8907" stop-color="#005eff"/><stop offset=".8957" stop-color="#0047ff"/><stop offset=".9007" stop-color="#0023ff"/><stop offset=".9057" stop-color="#0000fb"/><stop offset=".9107" stop-color="#0000db"/><stop offset=".9157" stop-color="#0000c1"/><stop offset=".9207" stop-color="#0000ac"/><stop offset=".9257" stop-color="#0000a3"/><stop offset=".9307" stop-color="#0000a1"/><stop offset=".9357" stop-color="#000097"/><stop offset=".9407" stop-color="#00008b"/><stop offset=".9456" stop-color="#000080"/><stop offset=".9993" stop-color="#000080"/></linearGradient>
<linearGradient id="r22"><stop offset=".0007" stop-color="#000080"/><stop offset=".0872" stop-color="#000080"/><stop offset=".0922" stop-color="#0000a0"/><stop offset=".0972" stop-color="#0000bd"/><stop offset=".1022" stop-color="#0000ce"/><stop offset=".1072" stop-color="#0000e0"/><stop offset=".1122" stop-color="#0000ff"/><stop offset=".1172" stop-color="#0028ff"/><stop offset=".1222" stop-color="#0050ff"/><stop offset=".1272" stop-color="#0077ff"/><stop offset=".1322" stop-color="#009eff"/><stop offset=".1372" stop-color="#00ccff"/><stop offset=".1422" stop-color="#00f6ff"/><stop offset=".1471" stop-color="#1affe5"/><stop offset=".1521" stop-color="#40ffbf"/><stop offset=".1571" stop-color="#61ff9e"/><stop offset=".1621" stop-color="#79ff86"/><stop offset=".1671" stop-color="#b0ff4f"/><stop offset=".1700" stop-color="#fffa00"/><stop offset=".2487" stop-color="#fcff03"/><stop offset=".2503" stop-color="#71ff8e"/><stop offset=".2549" stop-color="#24ffdb"/><stop offset=".2595" stop-color="#02fffd"/><stop offset=".2641" stop-color="#00eaff"/><stop offset=".2686" stop-color="#00dcff"/><stop offset=".2732" stop-color="#00cdff"/><stop offset=".2778" stop-color="#00b1ff"/><stop offset=".2824" stop-color="#008dff"/><stop offset=".2870" stop-color="#0078ff"/><stop offset=".2915" stop-color="#007aff"/><stop offset=".2961" stop-color="#0094ff"/><stop offset=".3007" stop-color="#00b2ff"/><stop offset=".3053" stop-color="#00c8ff"/><stop offset=".3098" stop-color="#00deff"/><stop offset=".3144" stop-color="#02fffd"/><stop offset=".3190" stop-color="#28ffd7"/><stop offset=".3236" stop-color="#43ffbc"/><stop offset=".3282" stop-color="#5dffa2"/><stop offset=".3327" stop-color="#9aff65"/><stop offset=".3361" stop-color="#dbff24"/><stop offset=".3368" stop-color="#fffa00"/><stop offset=".5820" stop-color="#f7ff08"/><stop offset=".5841" stop-color="#8cff73"/><stop offset=".5890" stop-color="#27ffd8"/><stop offset=".5940" stop-color="#06fff9"/><stop offset=".5990" stop-color="#00eaff"/><stop offset=".6040" stop-color="#00d5ff"/><stop offset=".6090" stop-color="#00c2ff"/><stop offset=".6140" stop-color="#00b0ff"/><stop offset=".6190" stop-color="#0096ff"/><stop offset=".6240" stop-color="#0070ff"/><stop offset=".6290" stop-color="#0040ff"/><stop offset=".6340" stop-color="#001eff"/><stop offset=".6390" stop-color="#0008ff"/><stop offset=".6440" stop-color="#0000f3"/><stop offset=".6490" stop-color="#0000de"/><stop offset=".6540" stop-color="#0000cc"/><stop offset=".6590" stop-color="#0000bf"/><stop offset=".6639" stop-color="#0000b1"/><stop offset=".6689" stop-color="#0000a5"/><stop offset=".6739" stop-color="#0000a7"/><stop offset=".6789" stop-color="#0000c1"/><stop offset=".6839" stop-color="#0000e2"/><stop offset=".6889" stop-color="#0000f2"/><stop offset=".6939" stop-color="#0003ff"/><stop offset=".6989" stop-color="#0021ff"/><stop offset=".7039" stop-color="#0048ff"/><stop offset=".7089" stop-color="#006fff"/><stop offset=".7139" stop-color="#0095ff"/><stop offset=".7189" stop-color="#00b4ff"/><stop offset=".7239" stop-color="#00c4ff"/><stop offset=".7289" stop-color="#00cbff"/><stop offset=".7338" stop-color="#00dbff"/><stop offset=".7388" stop-color="#00feff"/><stop offset=".7438" stop-color="#31ffce"/><stop offset=".7488" stop-color="#c6ff39"/><stop offset=".7496" stop-color="#f9ff06"/><stop offset=".8288" stop-color="#f9ff06"/><stop offset=".8308" stop-color="#c4ff3b"/><stop offset=".8358" stop-color="#5cffa3"/><stop offset=".8408" stop-color="#1dffe2"/><stop offset=".8458" stop-color="#00edff"/><stop offset=".8508" stop-color="#00d6ff"/><stop offset=".8558" stop-color="#00ceff"/><stop offset=".8608" stop-color="#00bfff"/><stop offset=".8658" stop-color="#00abff"/><stop offset=".8707" stop-color="#0094ff"/><stop offset=".8757" stop-color="#006dff"/><stop offset=".8807" stop-color="#0033ff"/><stop offset=".8857" stop-color="#000cff"/><stop offset=".8907" stop-color="#0000f5"/><stop offset=".8957" stop-color="#0000e0"/><stop offset=".9007" stop-color="#0000df"/><stop offset=".9057" stop-color="#0000e3"/><stop offset=".9107" stop-color="#0000c9"/><stop offset=".9157" stop-color="#000096"/><stop offset=".9207" stop-color="#000080"/><stop offset=".9993" stop-color="#000080"/></linearGradient>
<linearGradient id="r23"><stop offset=".0007" stop-color="#000080"/><stop offset=".0822" stop-color="#000080"/><stop offset=".0872" stop-color="#00008a"/><stop offset=".0922" stop-color="#00009c"/><stop offset=".0972" stop-color="#0000ae"/><stop offset=".1022" stop-color="#0000c0"/><stop offset=".1072" stop-color="#0000d4"/><stop offset=".1122" stop-color="#0000ed"/><stop offset=".1172" stop-color="#000cff"/><stop offset=".1222" stop-color="#0033ff"/><stop offset=".1272" stop-color="#0061ff"/><stop offset=".1322" stop-color="#008eff"/><stop offset=".1372" stop-color="#00b8ff"/><stop offset=".1422" stop-color="#00e1ff"/><stop offset=".1471" stop-color="#01fffe"/><stop offset=".1521" stop-color="#16ffe9"/><stop offset=".1571" stop-color="#2effd1"/><stop offset=".1621" stop-color="#59ffa6"/><stop offset=".1671" stop-color="#a7ff58"/><stop offset=".1700" stop-color="#fffb00"/><stop offset=".2487" stop-color="#fffc00"/><stop offset=".2503" stop-color="#97ff68"/><stop offset=".2549" stop-color="#3cffc3"/><stop offset=".2595" stop-color="#20ffdf"/><stop offset=".2641" stop-color="#08fff7"/><stop offset=".2686" stop-color="#00f7ff"/><stop offset=".2732" stop-color="#00e8ff"/><stop offset=".2778" stop-color="#00d1ff"/><stop offset=".2824" stop-color="#00b4ff"/><stop offset=".2870" stop-color="#009eff"/><stop offset=".2915" stop-color="#0097ff"/><stop offset=".2961" stop-color="#00a3ff"/><stop offset=".3007" stop-color="#00b2ff"/><stop offset=".3053" stop-color="#00bbff"/><stop offset=".3098" stop-color="#00c5ff"/><stop offset=".3144" stop-color="#00d5ff"/><stop offset=".3190" stop-color="#00eaff"/><stop offset=".3236" stop-color="#02fffd"/><stop offset=".3282" stop-color="#23ffdc"/><stop offset=".3327" stop-color="#6eff91"/><stop offset=".3361" stop-color="#cdff32"/><stop offset=".3368" stop-color="#ebff14"/><stop offset=".5820" stop-color="#fffa00"/><stop offset=".5841" stop-color="#b6ff49"/><stop offset=".5890" stop-color="#5dffa2"/><stop offset=".5940" stop-color="#3dffc2"/><stop offset=".5990" stop-color="#26ffd9"/><stop offset=".6040" stop-color="#0afff5"/><stop offset=".6090" stop-color="#00f3ff"/><stop offset=".6140" stop-color="#00e6ff"/><stop offset=".6190" stop-color="#00d7ff"/><stop offset=".6240" stop-color="#00b9ff"/><stop offset=".6290" stop-color="#008dff"/><stop offset=".6340" stop-color="#0060ff"/><stop offset=".6390" stop-color="#002dff"/><stop offset=".6440" stop-color="#0004ff"/><stop offset=".6490" stop-color="#0000e7"/><stop offset=".6540" stop-color="#0000de"/><stop offset=".6590" stop-color="#0000dd"/><stop offset=".6639" stop-color="#0000e1"/><stop offset=".6689" stop-color="#0000e7"/><stop offset=".6739" stop-color="#0000e7"/><stop offset=".6789" stop-color="#0000ef"/><stop offset=".6839" stop-color="#0001ff"/><stop offset=".6889" stop-color="#0013ff"/><stop offset=".6939" stop-color="#001fff"/><stop offset=".6989" stop-color="#002cff"/><stop offset=".7039" stop-color="#0038ff"/><stop offset=".7089" stop-color="#0049ff"/><stop offset=".7139" stop-color="#0063ff"/><stop offset=".7189" stop-color="#008cff"/><stop offset=".7239" stop-color="#00baff"/><stop offset=".7289" stop-color="#00d9ff"/><stop offset=".7338" stop-color="#00f8ff"/><stop offset=".7388" stop-color="#1fffe0"/><stop offset=".7438" stop-color="#52ffad"/><stop offset=".7488" stop-color="#daff25"/><stop offset=".7496" stop-color="#fffb00"/><stop offset=".8288" stop-color="#fffa00"/><stop offset=".8308" stop-color="#c6ff39"/><stop offset=".8358" stop-color="#64ff9b"/><stop offset=".8408" stop-color="#46ffb9"/><stop offset=".8458" stop-color="#33ffcc"/><stop offset=".8508" stop-color="#22ffdd"/><stop offset=".8558" stop-color="#0bfff4"/><stop offset=".8608" stop-color="#00f5ff"/><stop offset=".8658" stop-color="#00dcff"/><stop offset=".8707" stop-color="#00c4ff"/><stop offset=".8757" stop-color="#00acff"/><stop offset=".8807" stop-color="#0090ff"/><stop offset=".8857" stop-color="#006aff"/><stop offset=".8907" stop-color="#003aff"/><stop offset=".8957" stop-color="#000fff"/><stop offset=".9007" stop-color="#0000e9"/><stop offset=".9057" stop-color="#0000c4"/><stop offset=".9107" stop-color="#00009f"/><stop offset=".9157" stop-color="#000080"/><stop offset=".9993" stop-color="#000080"/></linearGradient>
<linearGradient id="r24"><stop offset=".0007" stop-color="#000080"/><stop offset=".0822" stop-color="#000080"/><stop offset=".0872" stop-color="#000086"/><stop offset=".0922" stop-color="#0000a7"/><stop offset=".0972" stop-color="#0000bf"/><stop offset=".1022" stop-color="#0000bf"/><stop offset=".1072" stop-color="#0000c0"/><stop offset=".1122" stop-color="#0000de"/><stop offset=".1172" stop-color="#000eff"/><stop offset=".1222" stop-color="#003cff"/><stop offset=".1272" stop-color="#006aff"/><stop offset=".1322" stop-color="#009cff"/><stop offset=".1372" stop-color="#00cbff"/><stop offset=".1422" stop-color="#00f6ff"/><stop offset=".1471" stop-color="#19ffe6"/><stop offset=".1521" stop-color="#38ffc7"/><stop offset=".1571" stop-color="#56ffa9"/><stop offset=".1621" stop-color="#77ff88"/><stop offset=".1671" stop-color="#bbff44"/><stop offset=".1700" stop-color="#fffa00"/><stop offset=".2487" stop-color="#fbff04"/><stop offset=".2503" stop-color="#9dff62"/><stop offset=".2549" stop-color="#2effd1"/><stop offset=".2595" stop-color="#07fff8"/><stop offset=".2641" stop-color="#00dfff"/><stop offset=".2686" stop-color="#00c6ff"/><stop offset=".2732" stop-color="#00bfff"/><stop offset=".2778" stop-color="#00bdff"/><stop offset=".2824" stop-color="#00bfff"/><stop offset=".2870" stop-color="#00c9ff"/><stop offset=".2915" stop-color="#00d5ff"/><stop offset=".2961" stop-color="#00dcff"/><stop offset=".3007" stop-color="#00deff"/><stop offset=".3053" stop-color="#00e6ff"/><stop offset=".3098" stop-color="#00fcff"/><stop offset=".3144" stop-color="#1bffe4"/><stop offset=".3190" stop-color="#37ffc8"/><stop offset=".3236" stop-color="#52ffad"/><stop offset=".3282" stop-color="#72ff8d"/><stop offset=".3327" stop-color="#9bff64"/><stop offset=".3361" stop-color="#dbff24"/><stop offset=".3368" stop-color="#fffa00"/><stop offset=".5820" stop-color="#f9ff06"/><stop offset=".5841" stop-color="#97ff68"/><stop offset=".5890" stop-color="#28ffd7"/><stop offset=".5940" stop-color="#00eeff"/><stop offset=".5990" stop-color="#00cfff"/><stop offset=".6040" stop-color="#00b6ff"/><stop offset=".6090" stop-color="#0096ff"/><stop offset=".6140" stop-color="#0062ff"/><stop offset=".6190" stop-color="#001dff"/><stop offset=".6240" stop-color="#0000e9"/><stop offset=".6290" stop-color="#0000c7"/><stop offset=".6340" stop-color="#0000a9"/><stop offset=".6390" stop-color="#000096"/><stop offset=".6440" stop-color="#00008f"/><stop offset=".6490" stop-color="#000092"/><stop offset=".6540" stop-color="#0000a4"/><stop offset=".6590" stop-color="#0000b9"/><stop offset=".6639" stop-color="#0000c2"/><stop offset=".6689" stop-color="#0000c4"/><stop offset=".6739" stop-color="#0000cc"/><stop offset=".6789" stop-color="#0000d8"/><stop offset=".6839" stop-color="#0000e6"/><stop offset=".6889" stop-color="#0000fa"/><stop offset=".6939" stop-color="#0017ff"/><stop offset=".6989" stop-color="#0040ff"/><stop offset=".7039" stop-color="#0081ff"/><stop offset=".7089" stop-color="#00bcff"/><stop offset=".7139" stop-color="#00e4ff"/><stop offset=".7189" stop-color="#00f1ff"/><stop offset=".7239" stop-color="#00faff"/><stop offset=".7289" stop-color="#06fff9"/><stop offset=".7338" stop-color="#14ffeb"/><stop offset=".7388" stop-color="#26ffd9"/><stop offset=".7438" stop-color="#50ffaf"/><stop offset=".7488" stop-color="#d7ff28"/><stop offset=".7496" stop-color="#feff01"/><stop offset=".8288" stop-color="#f0ff0f"/><stop offset=".8308" stop-color="#d4ff2b"/><stop offset=".8358" stop-color="#90ff6f"/><stop offset=".8408" stop-color="#5bffa4"/><stop offset=".8458" stop-color="#2effd1"/><stop offset=".8508" stop-color="#02fffd"/><stop offset=".8558" stop-color="#00deff"/><stop offset=".8608" stop-color="#00bbff"/><stop offset=".8658" stop-color="#009eff"/><stop offset=".8707" stop-color="#008fff"/><stop offset=".8757" stop-color="#0096ff"/><stop offset=".8807" stop-color="#00a0ff"/><stop offset=".8857" stop-color="#008bff"/><stop offset=".8907" stop-color="#0056ff"/><stop offset=".8957" stop-color="#002cff"/><stop offset=".9007" stop-color="#001cff"/><stop offset=".9057" stop-color="#0012ff"/><stop offset=".9107" stop-color="#0000f8"/><stop offset=".9157" stop-color="#0000d1"/><stop offset=".9207" stop-color="#0000b2"/><stop offset=".9257" stop-color="#0000ac"/><stop offset=".9307" stop-color="#0000a9"/><stop offset=".9357" stop-color="#00008c"/><stop offset=".9407" stop-color="#000080"/><stop offset=".9993" stop-color="#000080"/></linearGradient>
<linearGradient id="r25"><stop offset=".0007" stop-color="#000080"/><stop offset=".0822" stop-color="#000080"/><stop offset=".0872" stop-color="#000098"/><stop offset=".0922" stop-color="#0000b5"/><stop offset=".0972" stop-color="#0000d0"/><stop offset=".1022" stop-color="#0000e6"/><stop offset=".1072" stop-color="#0000fc"/><stop offset=".1122" stop-color="#001aff"/><stop offset=".1172" stop-color="#003cff"/><stop offset=".1222" stop-color="#0066ff"/><stop offset=".1272" stop-color="#0096ff"/><stop offset=".1322" stop-color="#00bfff"/><stop offset=".1372" stop-color="#00dfff"/><stop offset=".1422" stop-color="#00fbff"/><stop offset=".1471" stop-color="#16ffe9"/><stop offset=".1521" stop-color="#2fffd0"/><stop offset=".1571" stop-color="#48ffb7"/><stop offset=".1621" stop-color="#68ff97"/><stop offset=".1671" stop-color="#abff54"/><stop offset=".1700" stop-color="#fffe00"/><stop offset=".2487" stop-color="#fffa00"/><stop offset=".2503" stop-color="#8eff71"/><stop offset=".2549" stop-color="#3affc5"/><stop offset=".2595" stop-color="#18ffe7"/><stop offset=".2641" stop-color="#01fffe"/><stop offset=".2686" stop-color="#00f2ff"/><stop offset=".2732" stop-color="#00e0ff"/><stop offset=".2778" stop-color="#00c7ff"/><stop offset=".2824" stop-color="#00a2ff"/><stop offset=".2870" stop-color="#007fff"/><stop offset=".2915" stop-color="#0079ff"/><stop offset=".2961" stop-color="#009cff"/><stop offset=".3007" stop-color="#00c3ff"/><stop offset=".3053" stop-color="#00daff"/><stop offset=".3098" stop-color="#00f0ff"/><stop offset=".3144" stop-color="#0efff1"/><stop offset=".3190" stop-color="#29ffd6"/><stop offset=".3236" stop-color="#34ffcb"/><stop offset=".3282" stop-color="#45ffba"/><stop offset=".3327" stop-color="#7eff81"/><stop offset=".3361" stop-color="#d9ff26"/><stop offset=".3368" stop-color="#f7ff08"/><stop offset=".5820" stop-color="#fcff03"/><stop offset=".5841" stop-color="#95ff6a"/><stop offset=".5890" stop-color="#26ffd9"/><stop offset=".5940" stop-color="#00f6ff"/><stop offset=".5990" stop-color="#00cfff"/><stop offset=".6040" stop-color="#00b9ff"/><stop offset=".6090" stop-color="#009bff"/><stop offset=".6140" stop-color="#0070ff"/><stop offset=".6190" stop-color="#0047ff"/><stop offset=".6240" stop-color="#0023ff"/><stop offset=".6290" stop-color="#0002ff"/><stop offset=".6340" stop-color="#0000e8"/><stop offset=".6390" stop-color="#0000d1"/><stop offset=".6440" stop-color="#0000c1"/><stop offset=".6490" stop-color="#0000c2"/><stop offset=".6540" stop-color="#0000d1"/><stop offset=".6590" stop-color="#0000e0"/><stop offset=".6639" stop-color="#0000f0"/><stop offset=".6689" stop-color="#0000fc"/><stop offset=".6739" stop-color="#0000fb"/><stop offset=".6789" stop-color="#0000fb"/><stop offset=".6839" stop-color="#0001ff"/><stop offset=".6889" stop-color="#0006ff"/><stop offset=".6939" stop-color="#000fff"/><stop offset=".6989" stop-color="#0022ff"/><stop offset=".7039" stop-color="#003cff"/><stop offset=".7089" stop-color="#005dff"/><stop offset=".7139" stop-color="#0083ff"/><stop offset=".7189" stop-color="#00a7ff"/><stop offset=".7239" stop-color="#00cdff"/><stop offset=".7289" stop-color="#00fcff"/><stop offset=".7338" stop-color="#23ffdc"/><stop offset=".7388" stop-color="#3affc5"/><stop offset=".7438" stop-color="#67ff98"/><stop offset=".7488" stop-color="#dbff24"/><stop offset=".7496" stop-color="#fffd00"/><stop offset=".8288" stop-color="#fffa00"/><stop offset=".8308" stop-color="#dbff24"/><stop offset=".8358" stop-color="#9fff60"/><stop offset=".8408" stop-color="#63ff9c"/><stop offset=".8458" stop-color="#33ffcc"/><stop offset=".8508" stop-color="#07fff8"/><stop offset=".8558" stop-color="#00e7ff"/><stop offset=".8608" stop-color="#00caff"/><stop offset=".8658" stop-color="#00a4ff"/><stop offset=".8707" stop-color="#0071ff"/><stop offset=".8757" stop-color="#0041ff"/><stop offset=".8807" stop-color="#0016ff"/><stop offset=".8857" stop-color="#0000d9"/><stop offset=".8907" stop-color="#0000b5"/><stop offset=".8957" stop-color="#00009c"/><stop offset=".9007" stop-color="#000087"/><stop offset=".9057" stop-color="#000080"/><stop offset=".9107" stop-color="#000088"/><stop offset=".9157" stop-color="#0000a7"/><stop offset=".9207" stop-color="#0000bd"/><stop offset=".9257" stop-color="#0000b9"/><stop offset=".9307" stop-color="#0000a9"/><stop offset=".9357" stop-color="#00009a"/><stop offset=".9407" stop-color="#00008d"/><stop offset=".9456" stop-color="#000080"/><stop offset=".9993" stop-color="#000080"/></linearGradient>
<linearGradient id="r26"><stop offset=".0007" stop-color="#000080"/><stop offset=".0623" stop-color="#000080"/><stop offset=".0673" stop-color="#000083"/><stop offset=".0722" stop-color="#00008e"/><stop offset=".0772" stop-color="#000098"/><stop offset=".0822" stop-color="#00009d"/><stop offset=".0872" stop-color="#00009f"/><stop offset=".0922" stop-color="#0000a2"/><stop offset=".0972" stop-color="#0000a5"/><stop offset=".1022" stop-color="#00009f"/><stop offset=".1072" stop-color="#0000a1"/><stop offset=".1122" stop-color="#0000be"/><stop offset=".1172" stop-color="#0000e9"/><stop offset=".1222" stop-color="#001bff"/><stop offset=".1272" stop-color="#004dff"/><stop offset=".1322" stop-color="#007bff"/><stop offset=".1372" stop-color="#009fff"/><stop offset=".1422" stop-color="#00b3ff"/><stop offset=".1471" stop-color="#00beff"/><stop offset=".1521" stop-color="#00cbff"/><stop offset=".1571" stop-color="#00ecff"/><stop offset=".1621" stop-color="#25ffda"/><stop offset=".1671" stop-color="#80ff7f"/><stop offset=".1700" stop-color="#fffd00"/><stop offset=".2487" stop-color="#ebff14"/><stop offset=".2503" stop-color="#b1ff4e"/><stop offset=".2549" stop-color="#2effd1"/><stop offset=".2595" stop-color="#05fffa"/><stop offset=".2641" stop-color="#00e0ff"/><stop offset=".2686" stop-color="#00b9ff"/><stop offset=".2732" stop-color="#009eff"/><stop offset=".2778" stop-color="#0084ff"/><stop offset=".2824" stop-color="#0067ff"/><stop offset=".2870" stop-color="#0053ff"/><stop offset=".2915" stop-color="#0055ff"/><stop offset=".2961" stop-color="#0076ff"/><stop offset=".3007" stop-color="#00a8ff"/><stop offset=".3053" stop-color="#00d3ff"/><stop offset=".3098" stop-color="#00f2ff"/><stop offset=".3144" stop-color="#0afff5"/><stop offset=".3190" stop-color="#21ffde"/><stop offset=".3236" stop-color="#36ffc9"/><stop offset=".3282" stop-color="#54ffab"/><stop offset=".3327" stop-color="#87ff78"/><stop offset=".3361" stop-color="#dbff24"/><stop offset=".3368" stop-color="#fffa00"/><stop offset=".5820" stop-color="#f2ff0d"/><stop offset=".5841" stop-color="#92ff6d"/><stop offset=".5890" stop-color="#24ffdb"/><stop offset=".5940" stop-color="#00fcff"/><stop offset=".5990" stop-color="#00e0ff"/><stop offset=".6040" stop-color="#00d4ff"/><stop offset=".6090" stop-color="#00caff"/><stop offset=".6140" stop-color="#00beff"/><stop offset=".6190" stop-color="#00adff"/><stop offset=".6240" stop-color="#0093ff"/><stop offset=".6290" stop-color="#006aff"/><stop offset=".6340" stop-color="#0041ff"/><stop offset=".6390" stop-color="#0013ff"/><stop offset=".6440" stop-color="#0000ec"/><stop offset=".6490" stop-color="#0000d1"/><stop offset=".6540" stop-color="#0000c2"/><stop offset=".6590" stop-color="#0000bf"/><stop offset=".6639" stop-color="#0000b9"/><stop offset=".6689" stop-color="#0000b4"/><stop offset=".6739" stop-color="#0000b6"/><stop offset=".6789" stop-color="#0000cc"/><stop offset=".6839" stop-color="#0000ee"/><stop offset=".6889" stop-color="#0013ff"/><stop offset=".6939" stop-color="#003eff"/><stop offset=".6989" stop-color="#006dff"/><stop offset=".7039" stop-color="#00a5ff"/><stop offset=".7089" stop-color="#00d4ff"/><stop offset=".7139" stop-color="#00ebff"/><stop offset=".7189" stop-color="#00faff"/><stop offset=".7239" stop-color="#11ffee"/><stop offset=".7289" stop-color="#2fffd0"/><stop offset=".7338" stop-color="#4affb5"/><stop offset=".7388" stop-color="#65ff9a"/><stop offset=".7438" stop-color="#92ff6d"/><stop offset=".7488" stop-color="#dbff24"/><stop offset=".7496" stop-color="#fffa00"/><stop offset=".8288" stop-color="#fffa00"/><stop offset=".8308" stop-color="#d4ff2b"/><stop offset=".8358" stop-color="#6eff91"/><stop offset=".8408" stop-color="#37ffc8"/><stop offset=".8458" stop-color="#0cfff3"/><stop offset=".8508" stop-color="#00e3ff"/><stop offset=".8558" stop-color="#00c5ff"/><stop offset=".8608" stop-color="#00afff"/><stop offset=".8658" stop-color="#0098ff"/><stop offset=".8707" stop-color="#0084ff"/><stop offset=".8757" stop-color="#0077ff"/><stop offset=".8807" stop-color="#006fff"/><stop offset=".8857" stop-color="#005eff"/><stop offset=".8907" stop-color="#004eff"/><stop offset=".8957" stop-color="#003bff"/><stop offset=".9007" stop-color="#0018ff"/><stop offset=".9057" stop-color="#0000f4"/><stop offset=".9107" stop-color="#0000da"/><stop offset=".9157" stop-color="#0000c5"/><stop offset=".9207" stop-color="#0000b1"/><stop offset=".9257" stop-color="#000098"/><stop offset=".9307" stop-color="#000080"/><stop offset=".9993" stop-color="#000080"/></linearGradient>
<linearGradient id="r27"><stop offset=".0007" stop-color="#000080"/><stop offset=".0972" stop-color="#000080"/><stop offset=".1022" stop-color="#000092"/><stop offset=".1072" stop-color="#0000aa"/><stop offset=".1122" stop-color="#0000cc"/><stop offset=".1172" stop-color="#0000f7"/><stop offset=".1222" stop-color="#0028ff"/><stop offset=".1272" stop-color="#0059ff"/><stop offset=".1322" stop-color="#0081ff"/><stop offset=".1372" stop-color="#009aff"/><stop offset=".1422" stop-color="#00a7ff"/><stop offset=".1471" stop-color="#00b8ff"/><stop offset=".1521" stop-color="#00d0ff"/><stop offset=".1571" stop-color="#00f2ff"/><stop offset=".1621" stop-color="#23ffdc"/><stop offset=".1671" stop-color="#77ff88"/><stop offset=".1700" stop-color="#e1ff1e"/><stop offset=".2487" stop-color="#fffa00"/><stop offset=".2503" stop-color="#a1ff5e"/><stop offset=".2549" stop-color="#49ffb6"/><stop offset=".2595" stop-color="#2effd1"/><stop offset=".2641" stop-color="#19ffe6"/><stop offset=".2686" stop-color="#0dfff2"/><stop offset=".2732" stop-color="#00f8ff"/><stop offset=".2778" stop-color="#00d4ff"/><stop offset=".2824" stop-color="#00a8ff"/><stop offset=".2870" stop-color="#008dff"/><stop offset=".2915" stop-color="#008dff"/><stop offset=".2961" stop-color="#009dff"/><stop offset=".3007" stop-color="#00b2ff"/><stop offset=".3053" stop-color="#00c5ff"/><stop offset=".3098" stop-color="#00ceff"/><stop offset=".3144" stop-color="#00d1ff"/><stop offset=".3190" stop-color="#00d9ff"/><stop offset=".3236" stop-color="#00eeff"/><stop offset=".3282" stop-color="#16ffe9"/><stop offset=".3327" stop-color="#67ff98"/><stop offset=".3361" stop-color="#c8ff37"/><stop offset=".3368" stop-color="#e7ff18"/><stop offset=".5820" stop-color="#fffa00"/><stop offset=".5841" stop-color="#b8ff47"/><stop offset=".5890" stop-color="#68ff97"/><stop offset=".5940" stop-color="#4cffb3"/><stop offset=".5990" stop-color="#3bffc4"/><stop offset=".6040" stop-color="#26ffd9"/><stop offset=".6090" stop-color="#00ffff"/><stop offset=".6140" stop-color="#00bcff"/><stop offset=".6190" stop-color="#0059ff"/><stop offset=".6240" stop-color="#0016ff"/><stop offset=".6290" stop-color="#0000ee"/><stop offset=".6340" stop-color="#0000d8"/><stop offset=".6390" stop-color="#0000ba"/><stop offset=".6440" stop-color="#0000a2"/><stop offset=".6490" stop-color="#0000a7"/><stop offset=".6540" stop-color="#0000b7"/><stop offset=".6590" stop-color="#0000ca"/><stop offset=".6639" stop-color="#0000da"/><stop offset=".6689" stop-color="#0000e4"/><stop offset=".6739" stop-color="#0000e6"/><stop offset=".6789" stop-color="#0000e9"/><stop offset=".6839" stop-color="#0000f3"/><stop offset=".6889" stop-color="#0000f5"/><stop offset=".6939" stop-color="#0000f8"/><stop offset=".6989" stop-color="#000eff"/><stop offset=".7039" stop-color="#0032ff"/><stop offset=".7089" stop-color="#005aff"/><stop offset=".7139" stop-color="#0084ff"/><stop offset=".7189" stop-color="#00acff"/><stop offset=".7239" stop-color="#00c8ff"/><stop offset=".7289" stop-color="#00deff"/><stop offset=".7338" stop-color="#00faff"/><stop offset=".7388" stop-color="#1cffe3"/><stop offset=".7438" stop-color="#4effb1"/><stop offset=".7488" stop-color="#daff25"/><stop offset=".7496" stop-color="#fffb00"/><stop offset=".8288" stop-color="#fffa00"/><stop offset=".8308" stop-color="#cfff30"/><stop offset=".8358" stop-color="#6dff92"/><stop offset=".8408" stop-color="#47ffb8"/><stop offset=".8458" stop-color="#2bffd4"/><stop offset=".8508" stop-color="#11ffee"/><stop offset=".8558" stop-color="#00f5ff"/><stop offset=".8608" stop-color="#00dbff"/><stop offset=".8658" stop-color="#00c1ff"/><stop offset=".8707" stop-color="#00a6ff"/><stop offset=".8757" stop-color="#0083ff"/><stop offset=".8807" stop-color="#005cff"/><stop offset=".8857" stop-color="#0032ff"/><stop offset=".8907" stop-color="#0007ff"/><stop offset=".8957" stop-color="#0000e9"/><stop offset=".9007" stop-color="#0000d1"/><stop offset=".9057" stop-color="#0000be"/><stop offset=".9107" stop-color="#0000b1"/><stop offset=".9157" stop-color="#0000ab"/><stop offset=".9207" stop-color="#0000a4"/><stop offset=".9257" stop-color="#000095"/><stop offset=".9307" stop-color="#000082"/><stop offset=".9357" stop-color="#000080"/><stop offset=".9993" stop-color="#000080"/></linearGradient>
<linearGradient id="r28"><stop offset=".0007" stop-color="#000080"/><stop offset=".0573" stop-color="#000080"/><stop offset=".0623" stop-color="#00008e"/><stop offset=".0673" stop-color="#0000a7"/><stop offset=".0722" stop-color="#0000b3"/><stop offset=".0772" stop-color="#0000aa"/><stop offset=".0822" stop-color="#00009b"/><stop offset=".0872" stop-color="#00009f"/><stop offset=".0922" stop-color="#0000b4"/><stop offset=".0972" stop-color="#0000bd"/><stop offset=".1022" stop-color="#0000af"/><stop offset=".1072" stop-color="#0000a7"/><stop offset=".1122" stop-color="#0000b8"/><stop offset=".1172" stop-color="#0000d3"/><stop offset=".1222" stop-color="#0000f7"/><stop offset=".1272" stop-color="#0022ff"/><stop offset=".1322" stop-color="#0050ff"/><stop offset=".1372" stop-color="#007dff"/><stop offset=".1422" stop-color="#00a4ff"/><stop offset=".1471" stop-color="#00cbff"/><stop offset=".1521" stop-color="#00f7ff"/><stop offset=".1571" stop-color="#23ffdc"/><stop offset=".1621" stop-color="#53ffac"/><stop offset=".1671" stop-color="#9eff61"/><stop offset=".1700" stop-color="#f9ff06"/><stop offset=".2487" stop-color="#fffa00"/><stop offset=".2503" stop-color="#7bff84"/><stop offset=".2549" stop-color="#34ffcb"/><stop offset=".2595" stop-color="#17ffe8"/><stop offset=".2641" stop-color="#0efff1"/><stop offset=".2686" stop-color="#12ffed"/><stop offset=".2732" stop-color="#11ffee"/><stop offset=".2778" stop-color="#00fcff"/><stop offset=".2824" stop-color="#00e3ff"/><stop offset=".2870" stop-color="#00d8ff"/><stop offset=".2915" stop-color="#00cfff"/><stop offset=".2961" stop-color="#00c6ff"/><stop offset=".3007" stop-color="#00caff"/><stop offset=".3053" stop-color="#00e1ff"/><stop offset=".3098" stop-color="#00f6ff"/><stop offset=".3144" stop-color="#04fffb"/><stop offset=".3190" stop-color="#10ffef"/><stop offset=".3236" stop-color="#27ffd8"/><stop offset=".3282" stop-color="#4affb5"/><stop offset=".3327" stop-color="#8fff70"/><stop offset=".3361" stop-color="#dbff24"/><stop offset=".3368" stop-color="#fffa00"/><stop offset=".5820" stop-color="#fffa00"/><stop offset=".5841" stop-color="#abff54"/><stop offset=".5890" stop-color="#50ffaf"/><stop offset=".5940" stop-color="#2dffd2"/><stop offset=".5990" stop-color="#15ffea"/><stop offset=".6040" stop-color="#00f5ff"/><stop offset=".6090" stop-color="#00d7ff"/><stop offset=".6140" stop-color="#00baff"/><stop offset=".6190" stop-color="#008eff"/><stop offset=".6240" stop-color="#005eff"/><stop offset=".6290" stop-color="#0037ff"/><stop offset=".6340" stop-color="#0018ff"/><stop offset=".6390" stop-color="#0000ff"/><stop offset=".6440" stop-color="#0000ec"/><stop offset=".6490" stop-color="#0000e3"/><stop offset=".6540" stop-color="#0000e3"/><stop offset=".6590" stop-color="#0000e2"/><stop offset=".6639" stop-color="#0000d7"/><stop offset=".6689" stop-color="#0000ca"/><stop offset=".6739" stop-color="#0000ce"/><stop offset=".6789" stop-color="#0000e1"/><stop offset=".6839" stop-color="#0000f6"/><stop offset=".6889" stop-color="#000cff"/><stop offset=".6939" stop-color="#0023ff"/><stop offset=".6989" stop-color="#003fff"/><stop offset=".7039" stop-color="#005dff"/><stop offset=".7089" stop-color="#0080ff"/><stop offset=".7139" stop-color="#00a5ff"/><stop offset=".7189" stop-color="#00c2ff"/><stop offset=".7239" stop-color="#00e2ff"/><stop offset=".7289" stop-color="#06fff9"/><stop offset=".7338" stop-color="#24ffdb"/><stop offset=".7388" stop-color="#3dffc2"/><stop offset=".7438" stop-color="#64ff9b"/><stop offset=".7488" stop-color="#dbff24"/><stop offset=".7496" stop-color="#fffa00"/><stop offset=".8288" stop-color="#fffa00"/><stop offset=".8308" stop-color="#dbff24"/><stop offset=".8358" stop-color="#7aff85"/><stop offset=".8408" stop-color="#41ffbe"/><stop offset=".8458" stop-color="#15ffea"/><stop offset=".8508" stop-color="#0afff5"/><stop offset=".8558" stop-color="#09fff6"/><stop offset=".8608" stop-color="#00f0ff"/><stop offset=".8658" stop-color="#00cfff"/><stop offset=".8707" stop-color="#00a6ff"/><stop offset=".8757" stop-color="#0075ff"/><stop offset=".8807" stop-color="#0043ff"/><stop offset=".8857" stop-color="#0026ff"/><stop offset=".8907" stop-color="#0018ff"/><stop offset=".8957" stop-color="#0008ff"/><stop offset=".9007" stop-color="#0000ef"/><stop offset=".9057" stop-color="#0000d9"/><stop offset=".9107" stop-color="#0000d5"/><stop offset=".9157" stop-color="#0000dc"/><stop offset=".9207" stop-color="#0000de"/><stop offset=".9257" stop-color="#0000d3"/><stop offset=".9307" stop-color="#0000c4"/><stop offset=".9357" stop-color="#0000b9"/><stop offset=".9407" stop-color="#0000be"/><stop offset=".9456" stop-color="#0000ba"/><stop offset=".9506" stop-color="#0000a1"/><stop offset=".9556" stop-color="#000087"/><stop offset=".9577" stop-color="#000081"/><stop offset=".9681" stop-color="#000080"/><stop offset=".9993" stop-color="#000080"/></linearGradient>
<linearGradient id="r29"><stop offset=".0007" stop-color="#000080"/><stop offset=".0623" stop-color="#000080"/><stop offset=".0673" stop-color="#000081"/><stop offset=".0722" stop-color="#000098"/><stop offset=".0772" stop-color="#0000a2"/><stop offset=".0822" stop-color="#0000a6"/><stop offset=".0872" stop-color="#00009b"/><stop offset=".0922" stop-color="#000080"/><stop offset=".0972" stop-color="#000080"/><stop offset=".1022" stop-color="#000090"/><stop offset=".1072" stop-color="#0000c0"/><stop offset=".1122" stop-color="#0000df"/><stop offset=".1172" stop-color="#0000f9"/><stop offset=".1222" stop-color="#001bff"/><stop offset=".1272" stop-color="#003fff"/><stop offset=".1322" stop-color="#0063ff"/><stop offset=".1372" stop-color="#008fff"/><stop offset=".1422" stop-color="#00b6ff"/><stop offset=".1471" stop-color="#00d5ff"/><stop offset=".1521" stop-color="#00f6ff"/><stop offset=".1571" stop-color="#1bffe4"/><stop offset=".1621" stop-color="#4dffb2"/><stop offset=".1671" stop-color="#a1ff5e"/><stop offset=".1700" stop-color="#fffd00"/><stop offset=".2487" stop-color="#fffc00"/><stop offset=".2503" stop-color="#c8ff37"/><stop offset=".2549" stop-color="#46ffb9"/><stop offset=".2595" stop-color="#1dffe2"/><stop offset=".2641" stop-color="#00fcff"/><stop offset=".2686" stop-color="#00deff"/><stop offset=".2732" stop-color="#00beff"/><stop offset=".2778" stop-color="#0091ff"/><stop offset=".2824" stop-color="#0063ff"/><stop offset=".2870" stop-color="#0050ff"/><stop offset=".2915" stop-color="#005bff"/><stop offset=".2961" stop-color="#0073ff"/><stop offset=".3007" stop-color="#0084ff"/><stop offset=".3053" stop-color="#0099ff"/><stop offset=".3098" stop-color="#00b7ff"/><stop offset=".3144" stop-color="#00e3ff"/><stop offset=".3190" stop-color="#13ffec"/><stop offset=".3236" stop-color="#39ffc6"/><stop offset=".3282" stop-color="#5dffa2"/><stop offset=".3327" stop-color="#a1ff5e"/><stop offset=".3361" stop-color="#dbff24"/><stop offset=".3368" stop-color="#fffa00"/><stop offset=".5820" stop-color="#f9ff06"/><stop offset=".5841" stop-color="#b2ff4d"/><stop offset=".5890" stop-color="#55ffaa"/><stop offset=".5940" stop-color="#1dffe2"/><stop offset=".5990" stop-color="#00fdff"/><stop offset=".6040" stop-color="#00e0ff"/><stop offset=".6090" stop-color="#00baff"/><stop offset=".6140" stop-color="#007eff"/><stop offset=".6190" stop-color="#003cff"/><stop offset=".6240" stop-color="#0010ff"/><stop offset=".6290" stop-color="#0000f6"/><stop offset=".6340" stop-color="#0000e3"/><stop offset=".6390" stop-color="#0000d3"/><stop offset=".6440" stop-color="#0000ce"/><stop offset=".6490" stop-color="#0000d3"/><stop offset=".6540" stop-color="#0000d4"/><stop offset=".6590" stop-color="#0000dc"/><stop offset=".6639" stop-color="#0000e6"/><stop offset=".6689" stop-color="#0000ec"/><stop offset=".6739" stop-color="#0000fa"/><stop offset=".6789" stop-color="#0014ff"/><stop offset=".6839" stop-color="#0026ff"/><stop offset=".6889" stop-color="#002cff"/><stop offset=".6939" stop-color="#0038ff"/><stop offset=".6989" stop-color="#0053ff"/><stop offset=".7039" stop-color="#007cff"/><stop offset=".7089" stop-color="#00a4ff"/><stop offset=".7139" stop-color="#00beff"/><stop offset=".7189" stop-color="#00d1ff"/><stop offset=".7239" stop-color="#00e9ff"/><stop offset=".7289" stop-color="#07fff8"/><stop offset=".7338" stop-color="#20ffdf"/><stop offset=".7388" stop-color="#3bffc4"/><stop offset=".7438" stop-color="#67ff98"/><stop offset=".7488" stop-color="#dbff24"/><stop offset=".7496" stop-color="#fffa00"/><stop offset=".8288" stop-color="#e9ff16"/><stop offset=".8308" stop-color="#bbff44"/><stop offset=".8358" stop-color="#63ff9c"/><stop offset=".8408" stop-color="#3bffc4"/><stop offset=".8458" stop-color="#25ffda"/><stop offset=".8508" stop-color="#12ffed"/><stop offset=".8558" stop-color="#05fffa"/><stop offset=".8608" stop-color="#00f3ff"/><stop offset=".8658" stop-color="#00deff"/><stop offset=".8707" stop-color="#00c1ff"/><stop offset=".8757" stop-color="#008fff"/><stop offset=".8807" stop-color="#004eff"/><stop offset=".8857" stop-color="#0013ff"/><stop offset=".8907" stop-color="#0000ec"/><stop offset=".8957" stop-color="#0000d4"/><stop offset=".9007" stop-color="#0000c9"/><stop offset=".9057" stop-color="#0000c7"/><stop offset=".9107" stop-color="#0000c9"/><stop offset=".9157" stop-color="#0000cc"/><stop offset=".9207" stop-color="#0000cd"/><stop offset=".9257" stop-color="#0000c4"/><stop offset=".9307" stop-color="#0000b0"/><stop offset=".9357" stop-color="#00009c"/><stop offset=".9407" stop-color="#000089"/><stop offset=".9456" stop-color="#000080"/><stop offset=".9993" stop-color="#000080"/></linearGradient>
<linearGradient id="r30"><stop offset=".0007" stop-color="#000080"/><stop offset=".0822" stop-color="#000080"/><stop offset=".0872" stop-color="#000083"/><stop offset=".0922" stop-color="#0000a9"/><stop offset=".0972" stop-color="#0000cb"/><stop offset=".1022" stop-color="#0000e3"/><stop offset=".1072" stop-color="#0000f7"/><stop offset=".1122" stop-color="#0018ff"/><stop offset=".1172" stop-color="#0046ff"/><stop offset=".1222" stop-color="#0079ff"/><stop offset=".1272" stop-color="#00a8ff"/><stop offset=".1322" stop-color="#00c8ff"/><stop offset=".1372" stop-color="#00ddff"/><stop offset=".1422" stop-color="#00f2ff"/><stop offset=".1471" stop-color="#0afff5"/><stop offset=".1521" stop-color="#24ffdb"/><stop offset=".1571" stop-color="#40ffbf"/><stop offset=".1621" stop-color="#65ff9a"/><stop offset=".1671" stop-color="#aaff55"/><stop offset=".1700" stop-color="#ffff00"/><stop offset=".2487" stop-color="#fffe00"/><stop offset=".2503" stop-color="#9bff64"/><stop offset=".2549" stop-color="#38ffc7"/><stop offset=".2595" stop-color="#1bffe4"/><stop offset=".2641" stop-color="#00fdff"/><stop offset=".2686" stop-color="#00e3ff"/><stop offset=".2732" stop-color="#00cfff"/><stop offset=".2778" stop-color="#00bfff"/><stop offset=".2824" stop-color="#00abff"/><stop offset=".2870" stop-color="#0095ff"/><stop offset=".2915" stop-color="#008aff"/><stop offset=".2961" stop-color="#008bff"/><stop offset=".3007" stop-color="#0091ff"/><stop offset=".3053" stop-color="#0097ff"/><stop offset=".3098" stop-color="#00a8ff"/><stop offset=".3144" stop-color="#00beff"/><stop offset=".3190" stop-color="#00d2ff"/><stop offset=".3236" stop-color="#00e3ff"/><stop offset=".3282" stop-color="#03fffc"/><stop offset=".3327" stop-color="#4affb5"/><stop offset=".3361" stop-color="#c5ff3a"/><stop offset=".3368" stop-color="#f1ff0e"/><stop offset=".5820" stop-color="#fffa00"/><stop offset=".5841" stop-color="#abff54"/><stop offset=".5890" stop-color="#56ffa9"/><stop offset=".5940" stop-color="#36ffc9"/><stop offset=".5990" stop-color="#23ffdc"/><stop offset=".6040" stop-color="#0cfff3"/><stop offset=".6090" stop-color="#00efff"/><stop offset=".6140" stop-color="#00cfff"/><stop offset=".6190" stop-color="#00a9ff"/><stop offset=".6240" stop-color="#0079ff"/><stop offset=".6290" stop-color="#0041ff"/><stop offset=".6340" stop-color="#0010ff"/><stop offset=".6390" stop-color="#0000e3"/><stop offset=".6440" stop-color="#0000c4"/><stop offset=".6490" stop-color="#0000ac"/><stop offset=".6540" stop-color="#0000a4"/><stop offset=".6590" stop-color="#0000a7"/><stop offset=".6639" stop-color="#0000b8"/><stop offset=".6689" stop-color="#0000c9"/><stop offset=".6739" stop-color="#0000cf"/><stop offset=".6789" stop-color="#0000da"/><stop offset=".6839" stop-color="#0000eb"/><stop offset=".6889" stop-color="#0000f8"/><stop offset=".6939" stop-color="#000bff"/><stop offset=".6989" stop-color="#002fff"/><stop offset=".7039" stop-color="#0055ff"/><stop offset=".7089" stop-color="#007eff"/><stop offset=".7139" stop-color="#00a9ff"/><stop offset=".7189" stop-color="#00c9ff"/><stop offset=".7239" stop-color="#00ddff"/><stop offset=".7289" stop-color="#00ecff"/><stop offset=".7338" stop-color="#00fdff"/><stop offset=".7388" stop-color="#19ffe6"/><stop offset=".7438" stop-color="#43ffbc"/><stop offset=".7488" stop-color="#d4ff2b"/><stop offset=".7496" stop-color="#fffa00"/><stop offset=".8288" stop-color="#eeff11"/><stop offset=".8308" stop-color="#beff41"/><stop offset=".8358" stop-color="#5fffa0"/><stop offset=".8408" stop-color="#27ffd8"/><stop offset=".8458" stop-color="#00ffff"/><stop offset=".8508" stop-color="#00e4ff"/><stop offset=".8558" stop-color="#00d3ff"/><stop offset=".8608" stop-color="#00baff"/><stop offset=".8658" stop-color="#0094ff"/><stop offset=".8707" stop-color="#006fff"/><stop offset=".8757" stop-color="#005dff"/><stop offset=".8807" stop-color="#004aff"/><stop offset=".8857" stop-color="#0021ff"/><stop offset=".8907" stop-color="#0000f7"/><stop offset=".8957" stop-color="#0000d9"/><stop offset=".9007" stop-color="#0000c8"/><stop offset=".9057" stop-color="#0000b8"/><stop offset=".9107" stop-color="#00009d"/><stop offset=".9157" stop-color="#000080"/><stop offset=".9993" stop-color="#000080"/></linearGradient>
<linearGradient id="r31"><stop offset=".0007" stop-color="#000080"/><stop offset=".0872" stop-color="#000080"/><stop offset=".0922" stop-color="#0000a0"/><stop offset=".0972" stop-color="#0000c3"/><stop offset=".1022" stop-color="#0000e0"/><stop offset=".1072" stop-color="#0000fb"/><stop offset=".1122" stop-color="#001eff"/><stop offset=".1172" stop-color="#004aff"/><stop offset=".1222" stop-color="#0070ff"/><stop offset=".1272" stop-color="#0093ff"/><stop offset=".1322" stop-color="#00bbff"/><stop offset=".1372" stop-color="#00deff"/><stop offset=".1422" stop-color="#00f0ff"/><stop offset=".1471" stop-color="#05fffa"/><stop offset=".1521" stop-color="#25ffda"/><stop offset=".1571" stop-color="#45ffba"/><stop offset=".1621" stop-color="#64ff9b"/><stop offset=".1671" stop-color="#a5ff5a"/><stop offset=".1700" stop-color="#fffa00"/><stop offset=".2487" stop-color="#ffff00"/><stop offset=".2503" stop-color="#b0ff4f"/><stop offset=".2549" stop-color="#33ffcc"/><stop offset=".2595" stop-color="#09fff6"/><stop offset=".2641" stop-color="#00e3ff"/><stop offset=".2686" stop-color="#00c2ff"/><stop offset=".2732" stop-color="#00a6ff"/><stop offset=".2778" stop-color="#0091ff"/><stop offset=".2824" stop-color="#007bff"/><stop offset=".2870" stop-color="#0063ff"/><stop offset=".2915" stop-color="#0051ff"/><stop offset=".2961" stop-color="#0048ff"/><stop offset=".3007" stop-color="#004eff"/><stop offset=".3053" stop-color="#0063ff"/><stop offset=".3098" stop-color="#008bff"/><stop offset=".3144" stop-color="#00baff"/><stop offset=".3190" stop-color="#00dfff"/><stop offset=".3236" stop-color="#07fff8"/><stop offset=".3282" stop-color="#37ffc8"/><stop offset=".3327" stop-color="#7dff82"/><stop offset=".3361" stop-color="#dbff24"/><stop offset=".3368" stop-color="#fffa00"/><stop offset=".5820" stop-color="#ffff00"/><stop offset=".5841" stop-color="#8aff75"/><stop offset=".5890" stop-color="#23ffdc"/><stop offset=".5940" stop-color="#00fcff"/><stop offset=".5990" stop-color="#00d6ff"/><stop offset=".6040" stop-color="#00b5ff"/><stop offset=".6090" stop-color="#009fff"/><stop offset=".6140" stop-color="#009cff"/><stop offset=".6190" stop-color="#009aff"/><stop offset=".6240" stop-color="#007aff"/><stop offset=".6290" stop-color="#0036ff"/><stop offset=".6340" stop-color="#0000f4"/><stop offset=".6390" stop-color="#0000ca"/><stop offset=".6440" stop-color="#0000b4"/><stop offset=".6490" stop-color="#0000a3"/><stop offset=".6540" stop-color="#0000a3"/><stop offset=".6590" stop-color="#0000a9"/><stop offset=".6639" stop-color="#0000bb"/><stop offset=".6689" stop-color="#0000cc"/><stop offset=".6739" stop-color="#0000cd"/><stop offset=".6789" stop-color="#0000cc"/><stop offset=".6839" stop-color="#0000cd"/><stop offset=".6889" stop-color="#0000c8"/><stop offset=".6939" stop-color="#0000c6"/><stop offset=".6989" stop-color="#0000dd"/><stop offset=".7039" stop-color="#000bff"/><stop offset=".7089" stop-color="#003aff"/><stop offset=".7139" stop-color="#0067ff"/><stop offset=".7189" stop-color="#0091ff"/><stop offset=".7239" stop-color="#00b4ff"/><stop offset=".7289" stop-color="#00d7ff"/><stop offset=".7338" stop-color="#00faff"/><stop offset=".7388" stop-color="#1affe5"/><stop offset=".7438" stop-color="#4fffb0"/><stop offset=".7488" stop-color="#d8ff27"/><stop offset=".7496" stop-color="#fdff02"/><stop offset=".8288" stop-color="#fffb00"/><stop offset=".8308" stop-color="#d2ff2d"/><stop offset=".8358" stop-color="#70ff8f"/><stop offset=".8408" stop-color="#40ffbf"/><stop offset=".8458" stop-color="#1dffe2"/><stop offset=".8508" stop-color="#00faff"/><stop offset=".8558" stop-color="#00e0ff"/><stop offset=".8608" stop-color="#00ccff"/><stop offset=".8658" stop-color="#00b8ff"/><stop offset=".8707" stop-color="#00a0ff"/><stop offset=".8757" stop-color="#008aff"/><stop offset=".8807" stop-color="#006cff"/><stop offset=".8857" stop-color="#0048ff"/><stop offset=".8907" stop-color="#0037ff"/><stop offset=".8957" stop-color="#0026ff"/><stop offset=".9007" stop-color="#0016ff"/><stop offset=".9057" stop-color="#0006ff"/><stop offset=".9107" stop-color="#0000f1"/><stop offset=".9157" stop-color="#0000dc"/><stop offset=".9207" stop-color="#0000c6"/><stop offset=".9257" stop-color="#0000ac"/><stop offset=".9307" stop-color="#000091"/><stop offset=".9357" stop-color="#000080"/><stop offset=".9993" stop-color="#000080"/></linearGradient>
<linearGradient id="r32"><stop offset=".0007" stop-color="#000080"/><stop offset=".0673" stop-color="#000080"/><stop offset=".0722" stop-color="#000083"/><stop offset=".0772" stop-color="#000080"/><stop offset=".0822" stop-color="#000080"/><stop offset=".0872" stop-color="#000082"/><stop offset=".0922" stop-color="#000092"/><stop offset=".0972" stop-color="#0000a0"/><stop offset=".1022" stop-color="#0000ad"/><stop offset=".1072" stop-color="#0000c0"/><stop offset=".1122" stop-color="#0000da"/><stop offset=".1172" stop-color="#0000fc"/><stop offset=".1222" stop-color="#0024ff"/><stop offset=".1272" stop-color="#004dff"/><stop offset=".1322" stop-color="#007aff"/><stop offset=".1372" stop-color="#00aaff"/><stop offset=".1422" stop-color="#00d5ff"/><stop offset=".1471" stop-color="#00f3ff"/><stop offset=".1521" stop-color="#01fffe"/><stop offset=".1571" stop-color="#10ffef"/><stop offset=".1621" stop-color="#2cffd3"/><stop offset=".1671" stop-color="#74ff8b"/><stop offset=".1700" stop-color="#dcff23"/><stop offset=".2487" stop-color="#fffa00"/><stop offset=".2503" stop-color="#c6ff39"/><stop offset=".2549" stop-color="#51ffae"/><stop offset=".2595" stop-color="#33ffcc"/><stop offset=".2641" stop-color="#1cffe3"/><stop offset=".2686" stop-color="#06fff9"/><stop offset=".2732" stop-color="#00f3ff"/><stop offset=".2778" stop-color="#00e3ff"/><stop offset=".2824" stop-color="#00ceff"/><stop offset=".2870" stop-color="#00b6ff"/><stop offset=".2915" stop-color="#00a7ff"/><stop offset=".2961" stop-color="#00acff"/><stop offset=".3007" stop-color="#00b9ff"/><stop offset=".3053" stop-color="#00c3ff"/><stop offset=".3098" stop-color="#00d0ff"/><stop offset=".3144" stop-color="#00ddff"/><stop offset=".3190" stop-color="#00ebff"/><stop offset=".3236" stop-color="#00fdff"/><stop offset=".3282" stop-color="#1fffe0"/><stop offset=".3327" stop-color="#61ff9e"/><stop offset=".3361" stop-color="#d5ff2a"/><stop offset=".3368" stop-color="#feff01"/><stop offset=".5820" stop-color="#fffa00"/><stop offset=".5841" stop-color="#aaff55"/><stop offset=".5890" stop-color="#53ffac"/><stop offset=".5940" stop-color="#2bffd4"/><stop offset=".5990" stop-color="#1affe5"/><stop offset=".6040" stop-color="#0ffff0"/><stop offset=".6090" stop-color="#00feff"/><stop offset=".6140" stop-color="#00e7ff"/><stop offset=".6190" stop-color="#00baff"/><stop offset=".6240" stop-color="#007eff"/><stop offset=".6290" stop-color="#0042ff"/><stop offset=".6340" stop-color="#001cff"/><stop offset=".6390" stop-color="#000bff"/><stop offset=".6440" stop-color="#0000fd"/><stop offset=".6490" stop-color="#0000f0"/><stop offset=".6540" stop-color="#0000e9"/><stop offset=".6590" stop-color="#0000e8"/><stop offset=".6639" stop-color="#0000ef"/><stop offset=".6689" stop-color="#0000f8"/><stop offset=".6739" stop-color="#0000f6"/><stop offset=".6789" stop-color="#0000f5"/><stop offset=".6839" stop-color="#0000fa"/><stop offset=".6889" stop-color="#0003ff"/><stop offset=".6939" stop-color="#000cff"/><stop offset=".6989" stop-color="#0027ff"/><stop offset=".7039" stop-color="#0054ff"/><stop offset=".7089" stop-color="#007bff"/><stop offset=".7139" stop-color="#00a1ff"/><stop offset=".7189" stop-color="#00c6ff"/><stop offset=".7239" stop-color="#00e1ff"/><stop offset=".7289" stop-color="#00f8ff"/><stop offset=".7338" stop-color="#1dffe2"/><stop offset=".7388" stop-color="#4cffb3"/><stop offset=".7438" stop-color="#8aff75"/><stop offset=".7488" stop-color="#dbff24"/><stop offset=".7496" stop-color="#fffb00"/><stop offset=".8288" stop-color="#fffa00"/><stop offset=".8308" stop-color="#dbff24"/><stop offset=".8358" stop-color="#aeff51"/><stop offset=".8408" stop-color="#7cff83"/><stop offset=".8458" stop-color="#5cffa3"/><stop offset=".8508" stop-color="#37ffc8"/><stop offset=".8558" stop-color="#1bffe4"/><stop offset=".8608" stop-color="#06fff9"/><stop offset=".8658" stop-color="#00f1ff"/><stop offset=".8707" stop-color="#00d4ff"/><stop offset=".8757" stop-color="#009dff"/><stop offset=".8807" stop-color="#0059ff"/><stop offset=".8857" stop-color="#001bff"/><stop offset=".8907" stop-color="#0000e0"/><stop offset=".8957" stop-color="#0000be"/><stop offset=".9007" stop-color="#0000ad"/><stop offset=".9057" stop-color="#0000a5"/><stop offset=".9107" stop-color="#0000a1"/><stop offset=".9157" stop-color="#0000a0"/><stop offset=".9207" stop-color="#00009e"/><stop offset=".9257" stop-color="#00009a"/><stop offset=".9307" stop-color="#000092"/><stop offset=".9357" stop-color="#000087"/><stop offset=".9407" stop-color="#000080"/><stop offset=".9993" stop-color="#000080"/></linearGradient>
<linearGradient id="r33"><stop offset=".0007" stop-color="#000080"/><stop offset=".0623" stop-color="#000080"/><stop offset=".0673" stop-color="#00009a"/><stop offset=".0722" stop-color="#0000ab"/><stop offset=".0772" stop-color="#0000b1"/><stop offset=".0822" stop-color="#0000b3"/><stop offset=".0872" stop-color="#0000ba"/><stop offset=".0922" stop-color="#0000c4"/><stop offset=".0972" stop-color="#0000cf"/><stop offset=".1022" stop-color="#0000d5"/><stop offset=".1072" stop-color="#0000e0"/><stop offset=".1122" stop-color="#0000fd"/><stop offset=".1172" stop-color="#002dff"/><stop offset=".1222" stop-color="#0067ff"/><stop offset=".1272" stop-color="#00aeff"/><stop offset=".1322" stop-color="#00e7ff"/><stop offset=".1372" stop-color="#02fffd"/><stop offset=".1422" stop-color="#0bfff4"/><stop offset=".1471" stop-color="#17ffe8"/><stop offset=".1521" stop-color="#2fffd0"/><stop offset=".1571" stop-color="#46ffb9"/><stop offset=".1621" stop-color="#5fffa0"/><stop offset=".1671" stop-color="#9cff63"/><stop offset=".1700" stop-color="#fcff03"/><stop offset=".2487" stop-color="#fffc00"/><stop offset=".2503" stop-color="#dbff24"/><stop offset=".2549" stop-color="#81ff7e"/><stop offset=".2595" stop-color="#54ffab"/><stop offset=".2641" stop-color="#30ffcf"/><stop offset=".2686" stop-color="#06fff9"/><stop offset=".2732" stop-color="#00d8ff"/><stop offset=".2778" stop-color="#00b5ff"/><stop offset=".2824" stop-color="#0090ff"/><stop offset=".2870" stop-color="#005fff"/><stop offset=".2915" stop-color="#003aff"/><stop offset=".2961" stop-color="#0033ff"/><stop offset=".3007" stop-color="#0058ff"/><stop offset=".3053" stop-color="#0093ff"/><stop offset=".3098" stop-color="#00bcff"/><stop offset=".3144" stop-color="#00d0ff"/><stop offset=".3190" stop-color="#00e2ff"/><stop offset=".3236" stop-color="#04fffb"/><stop offset=".3282" stop-color="#30ffcf"/><stop offset=".3327" stop-color="#73ff8c"/><stop offset=".3361" stop-color="#dbff24"/><stop offset=".3368" stop-color="#fffa00"/><stop offset=".5820" stop-color="#fffa00"/><stop offset=".5841" stop-color="#b0ff4f"/><stop offset=".5890" stop-color="#60ff9f"/><stop offset=".5940" stop-color="#47ffb8"/><stop offset=".5990" stop-color="#35ffca"/><stop offset=".6040" stop-color="#1fffe0"/><stop offset=".6090" stop-color="#04fffb"/><stop offset=".6140" stop-color="#00e2ff"/><stop offset=".6190" stop-color="#00b8ff"/><stop offset=".6240" stop-color="#0081ff"/><stop offset=".6290" stop-color="#004fff"/><stop offset=".6340" stop-color="#0029ff"/><stop offset=".6390" stop-color="#0002ff"/><stop offset=".6440" stop-color="#0000e6"/><stop offset=".6490" stop-color="#0000e5"/><stop offset=".6540" stop-color="#0000f9"/><stop offset=".6590" stop-color="#0007ff"/><stop offset=".6639" stop-color="#000eff"/><stop offset=".6689" stop-color="#0012ff"/><stop offset=".6739" stop-color="#000dff"/><stop offset=".6789" stop-color="#0000fa"/><stop offset=".6839" stop-color="#0000e2"/><stop offset=".6889" stop-color="#0000c5"/><stop offset=".6939" stop-color="#0000b0"/><stop offset=".6989" stop-color="#0000c4"/><stop offset=".7039" stop-color="#0009ff"/><stop offset=".7089" stop-color="#0048ff"/><stop offset=".7139" stop-color="#007bff"/><stop offset=".7189" stop-color="#00a6ff"/><stop offset=".7239" stop-color="#00cfff"/><stop offset=".7289" stop-color="#00f8ff"/><stop offset=".7338" stop-color="#1effe1"/><stop offset=".7388" stop-color="#3dffc2"/><stop offset=".7438" stop-color="#68ff97"/><stop offset=".7488" stop-color="#dbff24"/><stop offset=".7496" stop-color="#fffa00"/><stop offset=".8288" stop-color="#fffa00"/><stop offset=".8308" stop-color="#ccff33"/><stop offset=".8358" stop-color="#63ff9c"/><stop offset=".8408" stop-color="#31ffce"/><stop offset=".8458" stop-color="#0afff5"/><stop offset=".8508" stop-color="#00f0ff"/><stop offset=".8558" stop-color="#00dbff"/><stop offset=".8608" stop-color="#00c6ff"/><stop offset=".8658" stop-color="#00b5ff"/><stop offset=".8707" stop-color="#009fff"/><stop offset=".8757" stop-color="#0077ff"/><stop offset=".8807" stop-color="#0045ff"/><stop offset=".8857" stop-color="#001fff"/><stop offset=".8907" stop-color="#0015ff"/><stop offset=".8957" stop-color="#0008ff"/><stop offset=".9007" stop-color="#0000ef"/><stop offset=".9057" stop-color="#0000d7"/><stop offset=".9107" stop-color="#0000bd"/><stop offset=".9157" stop-color="#00009c"/><stop offset=".9207" stop-color="#000082"/><stop offset=".9257" stop-color="#000080"/><stop offset=".9993" stop-color="#000080"/></linearGradient>
<linearGradient id="r34"><stop offset=".0007" stop-color="#000080"/><stop offset=".0623" stop-color="#000080"/><stop offset=".0673" stop-color="#00008d"/><stop offset=".0722" stop-color="#00009e"/><stop offset=".0772" stop-color="#00009d"/><stop offset=".0822" stop-color="#000096"/><stop offset=".0872" stop-color="#000095"/><stop offset=".0922" stop-color="#000096"/><stop offset=".0972" stop-color="#00009b"/><stop offset=".1022" stop-color="#0000a7"/><stop offset=".1072" stop-color="#0000ba"/><stop offset=".1122" stop-color="#0000d1"/><stop offset=".1172" stop-color="#0000e6"/><stop offset=".1222" stop-color="#0008ff"/><stop offset=".1272" stop-color="#0043ff"/><stop offset=".1322" stop-color="#0085ff"/><stop offset=".1372" stop-color="#00b2ff"/><stop offset=".1422" stop-color="#00d5ff"/><stop offset=".1471" stop-color="#00f3ff"/><stop offset=".1521" stop-color="#12ffed"/><stop offset=".1571" stop-color="#33ffcc"/><stop offset=".1621" stop-color="#5affa5"/><stop offset=".1671" stop-color="#a0ff5f"/><stop offset=".1700" stop-color="#fffa00"/><stop offset=".2487" stop-color="#fffa00"/><stop offset=".2503" stop-color="#8aff75"/><stop offset=".2549" stop-color="#56ffa9"/><stop offset=".2595" stop-color="#3affc5"/><stop offset=".2641" stop-color="#27ffd8"/><stop offset=".2686" stop-color="#19ffe6"/><stop offset=".2732" stop-color="#04fffb"/><stop offset=".2778" stop-color="#00e6ff"/><stop offset=".2824" stop-color="#00c3ff"/><stop offset=".2870" stop-color="#009fff"/><stop offset=".2915" stop-color="#0083ff"/><stop offset=".2961" stop-color="#0071ff"/><stop offset=".3007" stop-color="#0062ff"/><stop offset=".3053" stop-color="#005aff"/><stop offset=".3098" stop-color="#0071ff"/><stop offset=".3144" stop-color="#00a7ff"/><stop offset=".3190" stop-color="#00d6ff"/><stop offset=".3236" stop-color="#05fffa"/><stop offset=".3282" stop-color="#3dffc2"/><stop offset=".3327" stop-color="#93ff6c"/><stop offset=".3361" stop-color="#dbff24"/><stop offset=".3368" stop-color="#fdff02"/><stop offset=".5820" stop-color="#f5ff0a"/><stop offset=".5841" stop-color="#8fff70"/><stop offset=".5890" stop-color="#27ffd8"/><stop offset=".5940" stop-color="#00fbff"/><stop offset=".5990" stop-color="#00e7ff"/><stop offset=".6040" stop-color="#00dbff"/><stop offset=".6090" stop-color="#00cfff"/><stop offset=".6140" stop-color="#00c0ff"/><stop offset=".6190" stop-color="#00adff"/><stop offset=".6240" stop-color="#009aff"/><stop offset=".6290" stop-color="#0077ff"/><stop offset=".6340" stop-color="#0040ff"/><stop offset=".6390" stop-color="#0018ff"/><stop offset=".6440" stop-color="#0000fe"/><stop offset=".6490" stop-color="#0000e4"/><stop offset=".6540" stop-color="#0000dc"/><stop offset=".6590" stop-color="#0000d5"/><stop offset=".6639" stop-color="#0000ce"/><stop offset=".6689" stop-color="#0000c7"/><stop offset=".6739" stop-color="#0000c3"/><stop offset=".6789" stop-color="#0000c4"/><stop offset=".6839" stop-color="#0000ce"/><stop offset=".6889" stop-color="#0000ed"/><stop offset=".6939" stop-color="#0013ff"/><stop offset=".6989" stop-color="#0034ff"/><stop offset=".7039" stop-color="#0058ff"/><stop offset=".7089" stop-color="#0082ff"/><stop offset=".7139" stop-color="#00a8ff"/><stop offset=".7189" stop-color="#00c4ff"/><stop offset=".7239" stop-color="#00daff"/><stop offset=".7289" stop-color="#00efff"/><stop offset=".7338" stop-color="#07fff8"/><stop offset=".7388" stop-color="#23ffdc"/><stop offset=".7438" stop-color="#4cffb3"/><stop offset=".7488" stop-color="#dbff24"/><stop offset=".7496" stop-color="#fffa00"/><stop offset=".8288" stop-color="#fffa00"/><stop offset=".8308" stop-color="#dbff24"/><stop offset=".8358" stop-color="#adff52"/><stop offset=".8408" stop-color="#7aff85"/><stop offset=".8458" stop-color="#55ffaa"/><stop offset=".8508" stop-color="#27ffd8"/><stop offset=".8558" stop-color="#02fffd"/><stop offset=".8608" stop-color="#00e8ff"/><stop offset=".8658" stop-color="#00cbff"/><stop offset=".8707" stop-color="#00abff"/><stop offset=".8757" stop-color="#0094ff"/><stop offset=".8807" stop-color="#0080ff"/><stop offset=".8857" stop-color="#0053ff"/><stop offset=".8907" stop-color="#0024ff"/><stop offset=".8957" stop-color="#0006ff"/><stop offset=".9007" stop-color="#0000db"/><stop offset=".9057" stop-color="#0000b2"/><stop offset=".9107" stop-color="#0000a4"/><stop offset=".9157" stop-color="#0000a8"/><stop offset=".9207" stop-color="#0000aa"/><stop offset=".9257" stop-color="#0000a8"/><stop offset=".9307" stop-color="#0000a3"/><stop offset=".9357" stop-color="#000099"/><stop offset=".9407" stop-color="#00008d"/><stop offset=".9456" stop-color="#000080"/><stop offset=".9993" stop-color="#000080"/></linearGradient>
<linearGradient id="r35"><stop offset=".0007" stop-color="#000080"/><stop offset=".0319" stop-color="#000080"/><stop offset=".0423" stop-color="#000083"/><stop offset=".0473" stop-color="#000093"/><stop offset=".0523" stop-color="#000099"/><stop offset=".0573" stop-color="#00009c"/><stop offset=".0623" stop-color="#00009e"/><stop offset=".0673" stop-color="#00009e"/><stop offset=".0722" stop-color="#0000a3"/><stop offset=".0772" stop-color="#0000b2"/><stop offset=".0822" stop-color="#0000bd"/><stop offset=".0872" stop-color="#0000ba"/><stop offset=".0922" stop-color="#0000b4"/><stop offset=".0972" stop-color="#0000b1"/><stop offset=".1022" stop-color="#0000b6"/><stop offset=".1072" stop-color="#0000c4"/><stop offset=".1122" stop-color="#0000de"/><stop offset=".1172" stop-color="#0002ff"/><stop offset=".1222" stop-color="#0030ff"/><stop offset=".1272" stop-color="#0066ff"/><stop offset=".1322" stop-color="#0095ff"/><stop offset=".1372" stop-color="#00b3ff"/><stop offset=".1422" stop-color="#00c0ff"/><stop offset=".1471" stop-color="#00dbff"/><stop offset=".1521" stop-color="#0efff1"/><stop offset=".1571" stop-color="#3fffc0"/><stop offset=".1621" stop-color="#67ff98"/><stop offset=".1671" stop-color="#aaff55"/><stop offset=".1700" stop-color="#fdff02"/><stop offset=".2487" stop-color="#fffd00"/><stop offset=".2503" stop-color="#97ff68"/><stop offset=".2549" stop-color="#2effd1"/><stop offset=".2595" stop-color="#06fff9"/><stop offset=".2641" stop-color="#00e3ff"/><stop offset=".2686" stop-color="#00ccff"/><stop offset=".2732" stop-color="#00b2ff"/><stop offset=".2778" stop-color="#008bff"/><stop offset=".2824" stop-color="#0069ff"/><stop offset=".2870" stop-color="#005dff"/><stop offset=".2915" stop-color="#006cff"/><stop offset=".2961" stop-color="#0086ff"/><stop offset=".3007" stop-color="#0091ff"/><stop offset=".3053" stop-color="#0096ff"/><stop offset=".3098" stop-color="#00a7ff"/><stop offset=".3144" stop-color="#00c7ff"/><stop offset=".3190" stop-color="#00e8ff"/><stop offset=".3236" stop-color="#03fffc"/><stop offset=".3282" stop-color="#24ffdb"/><stop offset=".3327" stop-color="#65ff9a"/><stop offset=".3361" stop-color="#d6ff29"/><stop offset=".3368" stop-color="#feff01"/><stop offset=".5820" stop-color="#f3ff0c"/><stop offset=".5841" stop-color="#94ff6b"/><stop offset=".5890" stop-color="#3fffc0"/><stop offset=".5940" stop-color="#25ffda"/><stop offset=".5990" stop-color="#11ffee"/><stop offset=".6040" stop-color="#00fbff"/><stop offset=".6090" stop-color="#00e5ff"/><stop offset=".6140" stop-color="#00ceff"/><stop offset=".6190" stop-color="#00a7ff"/><stop offset=".6240" stop-color="#007aff"/><stop offset=".6290" stop-color="#005eff"/><stop offset=".6340" stop-color="#0043ff"/><stop offset=".6390" stop-color="#000fff"/><stop offset=".6440" stop-color="#0000da"/><stop offset=".6490" stop-color="#0000d3"/><stop offset=".6540" stop-color="#0000eb"/><stop offset=".6590" stop-color="#0000f1"/><stop offset=".6639" stop-color="#0000e4"/><stop offset=".6689" stop-color="#0000d5"/><stop offset=".6739" stop-color="#0000ca"/><stop offset=".6789" stop-color="#0000bb"/><stop offset=".6839" stop-color="#0000ac"/><stop offset=".6889" stop-color="#0000a8"/><stop offset=".6939" stop-color="#0000ae"/><stop offset=".6989" stop-color="#0000ba"/><stop offset=".7039" stop-color="#0000d7"/><stop offset=".7089" stop-color="#0003ff"/><stop offset=".7139" stop-color="#002dff"/><stop offset=".7189" stop-color="#005aff"/><stop offset=".7239" stop-color="#008bff"/><stop offset=".7289" stop-color="#00bcff"/><stop offset=".7338" stop-color="#00e7ff"/><stop offset=".7388" stop-color="#0efff1"/><stop offset=".7438" stop-color="#3fffc0"/><stop offset=".7488" stop-color="#d0ff2f"/><stop offset=".7496" stop-color="#fffd00"/><stop offset=".8288" stop-color="#fbff04"/><stop offset=".8308" stop-color="#c7ff38"/><stop offset=".8358" stop-color="#69ff96"/><stop offset=".8408" stop-color="#4affb5"/><stop offset=".8458" stop-color="#3effc1"/><stop offset=".8508" stop-color="#35ffca"/><stop offset=".8558" stop-color="#2bffd4"/><stop offset=".8608" stop-color="#1bffe4"/><stop offset=".8658" stop-color="#00f7ff"/><stop offset=".8707" stop-color="#00cbff"/><stop offset=".8757" stop-color="#00aaff"/><stop offset=".8807" stop-color="#0084ff"/><stop offset=".8857" stop-color="#003dff"/><stop offset=".8907" stop-color="#0000fd"/><stop offset=".8957" stop-color="#0000d6"/><stop offset=".9007" stop-color="#0000c4"/><stop offset=".9057" stop-color="#0000b7"/><stop offset=".9107" stop-color="#0000ab"/><stop offset=".9157" stop-color="#0000a0"/><stop offset=".9207" stop-color="#000097"/><stop offset=".9257" stop-color="#000090"/><stop offset=".9307" stop-color="#000087"/><stop offset=".9357" stop-color="#000080"/><stop offset=".9993" stop-color="#000080"/></linearGradient>
<linearGradient id="r36"><stop offset=".0007" stop-color="#000080"/><stop offset=".0822" stop-color="#000080"/><stop offset=".0872" stop-color="#00009e"/><stop offset=".0922" stop-color="#0000c5"/><stop offset=".0972" stop-color="#0000ed"/><stop offset=".1022" stop-color="#0018ff"/><stop offset=".1072" stop-color="#0040ff"/><stop offset=".1122" stop-color="#005dff"/><stop offset=".1172" stop-color="#0072ff"/><stop offset=".1222" stop-color="#0085ff"/><stop offset=".1272" stop-color="#0097ff"/><stop offset=".1322" stop-color="#00aeff"/><stop offset=".1372" stop-color="#00d5ff"/><stop offset=".1422" stop-color="#01fffe"/><stop offset=".1471" stop-color="#24ffdb"/><stop offset=".1521" stop-color="#40ffbf"/><stop offset=".1571" stop-color="#5bffa4"/><stop offset=".1621" stop-color="#7cff83"/><stop offset=".1671" stop-color="#bbff44"/><stop offset=".1700" stop-color="#feff01"/><stop offset=".2487" stop-color="#fffa00"/><stop offset=".2503" stop-color="#c4ff3b"/><stop offset=".2549" stop-color="#77ff88"/><stop offset=".2595" stop-color="#69ff96"/><stop offset=".2641" stop-color="#5fffa0"/><stop offset=".2686" stop-color="#57ffa8"/><stop offset=".2732" stop-color="#46ffb9"/><stop offset=".2778" stop-color="#1dffe2"/><stop offset=".2824" stop-color="#00ebff"/><stop offset=".2870" stop-color="#00ccff"/><stop offset=".2915" stop-color="#00c1ff"/><stop offset=".2961" stop-color="#00c9ff"/><stop offset=".3007" stop-color="#00deff"/><stop offset=".3053" stop-color="#00f2ff"/><stop offset=".3098" stop-color="#00f8ff"/><stop offset=".3144" stop-color="#00f9ff"/><stop offset=".3190" stop-color="#00feff"/><stop offset=".3236" stop-color="#10ffef"/><stop offset=".3282" stop-color="#30ffcf"/><stop offset=".3327" stop-color="#78ff87"/><stop offset=".3361" stop-color="#d6ff29"/><stop offset=".3368" stop-color="#f3ff0c"/><stop offset=".5820" stop-color="#fffd00"/><stop offset=".5841" stop-color="#a8ff57"/><stop offset=".5890" stop-color="#58ffa7"/><stop offset=".5940" stop-color="#3effc1"/><stop offset=".5990" stop-color="#31ffce"/><stop offset=".6040" stop-color="#25ffda"/><stop offset=".6090" stop-color="#18ffe7"/><stop offset=".6140" stop-color="#01fffe"/><stop offset=".6190" stop-color="#00e6ff"/><stop offset=".6240" stop-color="#00d1ff"/><stop offset=".6290" stop-color="#00b7ff"/><stop offset=".6340" stop-color="#0088ff"/><stop offset=".6390" stop-color="#0048ff"/><stop offset=".6440" stop-color="#000bff"/><stop offset=".6490" stop-color="#0000d6"/><stop offset=".6540" stop-color="#0000b5"/><stop offset=".6590" stop-color="#0000a2"/><stop offset=".6639" stop-color="#00009e"/><stop offset=".6689" stop-color="#0000a2"/><stop offset=".6739" stop-color="#0000a3"/><stop offset=".6789" stop-color="#0000a7"/><stop offset=".6839" stop-color="#0000b7"/><stop offset=".6889" stop-color="#0000de"/><stop offset=".6939" stop-color="#000eff"/><stop offset=".6989" stop-color="#0030ff"/><stop offset=".7039" stop-color="#004bff"/><stop offset=".7089" stop-color="#006bff"/><stop offset=".7139" stop-color="#0094ff"/><stop offset=".7189" stop-color="#00bdff"/><stop offset=".7239" stop-color="#00d7ff"/><stop offset=".7289" stop-color="#00e9ff"/><stop offset=".7338" stop-color="#00ffff"/><stop offset=".7388" stop-color="#20ffdf"/><stop offset=".7438" stop-color="#50ffaf"/><stop offset=".7488" stop-color="#dbff24"/><stop offset=".7496" stop-color="#fffa00"/><stop offset=".8288" stop-color="#edff12"/><stop offset=".8308" stop-color="#acff53"/><stop offset=".8358" stop-color="#3effc1"/><stop offset=".8408" stop-color="#06fff9"/><stop offset=".8458" stop-color="#00e4ff"/><stop offset=".8508" stop-color="#00d0ff"/><stop offset=".8558" stop-color="#00bfff"/><stop offset=".8608" stop-color="#00afff"/><stop offset=".8658" stop-color="#00a4ff"/><stop offset=".8707" stop-color="#0093ff"/><stop offset=".8757" stop-color="#006dff"/><stop offset=".8807" stop-color="#003dff"/><stop offset=".8857" stop-color="#001bff"/><stop offset=".8907" stop-color="#0019ff"/><stop offset=".8957" stop-color="#0011ff"/><stop offset=".9007" stop-color="#0000f6"/><stop offset=".9057" stop-color="#0000d6"/><stop offset=".9107" stop-color="#0000b3"/><stop offset=".9157" stop-color="#00008f"/><stop offset=".9207" stop-color="#000080"/><stop offset=".9993" stop-color="#000080"/></linearGradient>
<linearGradient id="r37"><stop offset=".0007" stop-color="#000080"/><stop offset=".0922" stop-color="#000080"/><stop offset=".0972" stop-color="#000092"/><stop offset=".1022" stop-color="#0000b4"/><stop offset=".1072" stop-color="#0000d6"/><stop offset=".1122" stop-color="#0000f9"/><stop offset=".1172" stop-color="#0021ff"/><stop offset=".1222" stop-color="#004cff"/><stop offset=".1272" stop-color="#007aff"/><stop offset=".1322" stop-color="#00a8ff"/><stop offset=".1372" stop-color="#00d1ff"/><stop offset=".1422" stop-color="#00f5ff"/><stop offset=".1471" stop-color="#0ffff0"/><stop offset=".1521" stop-color="#1cffe3"/><stop offset=".1571" stop-color="#29ffd6"/><stop offset=".1621" stop-color="#47ffb8"/><stop offset=".1671" stop-color="#8dff72"/><stop offset=".1700" stop-color="#eeff11"/><stop offset=".2487" stop-color="#f4ff0b"/><stop offset=".2503" stop-color="#79ff86"/><stop offset=".2549" stop-color="#15ffea"/><stop offset=".2595" stop-color="#00e9ff"/><stop offset=".2641" stop-color="#00c7ff"/><stop offset=".2686" stop-color="#00b3ff"/><stop offset=".2732" stop-color="#00a9ff"/><stop offset=".2778" stop-color="#00a5ff"/><stop offset=".2824" stop-color="#00a2ff"/><stop offset=".2870" stop-color="#0099ff"/><stop offset=".2915" stop-color="#008fff"/><stop offset=".2961" stop-color="#0090ff"/><stop offset=".3007" stop-color="#00a1ff"/><stop offset=".3053" stop-color="#00bdff"/><stop offset=".3098" stop-color="#00d6ff"/><stop offset=".3144" stop-color="#00e7ff"/><stop offset=".3190" stop-color="#00f8ff"/><stop offset=".3236" stop-color="#16ffe9"/><stop offset=".3282" stop-color="#43ffbc"/><stop offset=".3327" stop-color="#8aff75"/><stop offset=".3361" stop-color="#dbff24"/><stop offset=".3368" stop-color="#fffa00"/><stop offset=".5820" stop-color="#fffe00"/><stop offset=".5841" stop-color="#bcff43"/><stop offset=".5890" stop-color="#6cff93"/><stop offset=".5940" stop-color="#3fffc0"/><stop offset=".5990" stop-color="#28ffd7"/><stop offset=".6040" stop-color="#16ffe9"/><stop offset=".6090" stop-color="#01fffe"/><stop offset=".6140" stop-color="#00e0ff"/><stop offset=".6190" stop-color="#00b0ff"/><stop offset=".6240" stop-color="#006bff"/><stop offset=".6290" stop-color="#0034ff"/><stop offset=".6340" stop-color="#000eff"/><stop offset=".6390" stop-color="#0000fd"/><stop offset=".6440" stop-color="#0000fb"/><stop offset=".6490" stop-color="#000dff"/><stop offset=".6540" stop-color="#0028ff"/><stop offset=".6590" stop-color="#003cff"/><stop offset=".6639" stop-color="#0049ff"/><stop offset=".6689" stop-color="#004fff"/><stop offset=".6739" stop-color="#004cff"/><stop offset=".6789" stop-color="#0039ff"/><stop offset=".6839" stop-color="#0030ff"/><stop offset=".6889" stop-color="#003dff"/><stop offset=".6939" stop-color="#0052ff"/><stop offset=".6989" stop-color="#005aff"/><stop offset=".7039" stop-color="#0061ff"/><stop offset=".7089" stop-color="#007bff"/><stop offset=".7139" stop-color="#00acff"/><stop offset=".7189" stop-color="#00d6ff"/><stop offset=".7239" stop-color="#00ebff"/><stop offset=".7289" stop-color="#00faff"/><stop offset=".7338" stop-color="#0dfff2"/><stop offset=".7388" stop-color="#21ffde"/><stop offset=".7438" stop-color="#4affb5"/><stop offset=".7488" stop-color="#d6ff29"/><stop offset=".7496" stop-color="#fffe00"/><stop offset=".8288" stop-color="#fffa00"/><stop offset=".8308" stop-color="#dbff24"/><stop offset=".8358" stop-color="#80ff7f"/><stop offset=".8408" stop-color="#41ffbe"/><stop offset=".8458" stop-color="#07fff8"/><stop offset=".8508" stop-color="#00d8ff"/><stop offset=".8558" stop-color="#00baff"/><stop offset=".8608" stop-color="#009cff"/><stop offset=".8658" stop-color="#0078ff"/><stop offset=".8707" stop-color="#0058ff"/><stop offset=".8757" stop-color="#0053ff"/><stop offset=".8807" stop-color="#0048ff"/><stop offset=".8857" stop-color="#0030ff"/><stop offset=".8907" stop-color="#0016ff"/><stop offset=".8957" stop-color="#0000fe"/><stop offset=".9007" stop-color="#0000ec"/><stop offset=".9057" stop-color="#0000de"/><stop offset=".9107" stop-color="#0000d0"/><stop offset=".9157" stop-color="#0000c4"/><stop offset=".9207" stop-color="#0000b4"/><stop offset=".9257" stop-color="#00009b"/><stop offset=".9307" stop-color="#000080"/><stop offset=".9993" stop-color="#000080"/></linearGradient>
<linearGradient id="r38"><stop offset=".0007" stop-color="#000080"/><stop offset=".0523" stop-color="#000080"/><stop offset=".0573" stop-color="#000081"/><stop offset=".0623" stop-color="#000098"/><stop offset=".0673" stop-color="#0000ad"/><stop offset=".0722" stop-color="#0000bb"/><stop offset=".0772" stop-color="#0000bd"/><stop offset=".0822" stop-color="#0000b6"/><stop offset=".0872" stop-color="#0000a8"/><stop offset=".0922" stop-color="#000098"/><stop offset=".0972" stop-color="#00008e"/><stop offset=".1022" stop-color="#000094"/><stop offset=".1072" stop-color="#0000a9"/><stop offset=".1122" stop-color="#0000c6"/><stop offset=".1172" stop-color="#0000ed"/><stop offset=".1222" stop-color="#0022ff"/><stop offset=".1272" stop-color="#0060ff"/><stop offset=".1322" stop-color="#009aff"/><stop offset=".1372" stop-color="#00c8ff"/><stop offset=".1422" stop-color="#00e9ff"/><stop offset=".1471" stop-color="#01fffe"/><stop offset=".1521" stop-color="#19ffe6"/><stop offset=".1571" stop-color="#36ffc9"/><stop offset=".1621" stop-color="#55ffaa"/><stop offset=".1671" stop-color="#94ff6b"/><stop offset=".1700" stop-color="#faff05"/><stop offset=".2487" stop-color="#f9ff06"/><stop offset=".2503" stop-color="#7bff84"/><stop offset=".2549" stop-color="#31ffce"/><stop offset=".2595" stop-color="#15ffea"/><stop offset=".2641" stop-color="#00fbff"/><stop offset=".2686" stop-color="#00eaff"/><stop offset=".2732" stop-color="#00daff"/><stop offset=".2778" stop-color="#00c6ff"/><stop offset=".2824" stop-color="#00acff"/><stop offset=".2870" stop-color="#0095ff"/><stop offset=".2915" stop-color="#0099ff"/><stop offset=".2961" stop-color="#00b8ff"/><stop offset=".3007" stop-color="#00d0ff"/><stop offset=".3053" stop-color="#00d7ff"/><stop offset=".3098" stop-color="#00e8ff"/><stop offset=".3144" stop-color="#09fff6"/><stop offset=".3190" stop-color="#26ffd9"/><stop offset=".3236" stop-color="#34ffcb"/><stop offset=".3282" stop-color="#40ffbf"/><stop offset=".3327" stop-color="#6eff91"/><stop offset=".3361" stop-color="#dbff24"/><stop offset=".3368" stop-color="#fffa00"/><stop offset=".5820" stop-color="#fffe00"/><stop offset=".5841" stop-color="#a6ff59"/><stop offset=".5890" stop-color="#45ffba"/><stop offset=".5940" stop-color="#15ffea"/><stop offset=".5990" stop-color="#03fffc"/><stop offset=".6040" stop-color="#00fdff"/><stop offset=".6090" stop-color="#00f4ff"/><stop offset=".6140" stop-color="#00e3ff"/><stop offset=".6190" stop-color="#00bfff"/><stop offset=".6240" stop-color="#008eff"/><stop offset=".6290" stop-color="#0058ff"/><stop offset=".6340" stop-color="#002fff"/><stop offset=".6390" stop-color="#001bff"/><stop offset=".6440" stop-color="#000bff"/><stop offset=".6490" stop-color="#0000fb"/><stop offset=".6540" stop-color="#0000f5"/><stop offset=".6590" stop-color="#0000f2"/><stop offset=".6639" stop-color="#0006ff"/><stop offset=".6689" stop-color="#001bff"/><stop offset=".6739" stop-color="#0019ff"/><stop offset=".6789" stop-color="#0010ff"/><stop offset=".6839" stop-color="#0009ff"/><stop offset=".6889" stop-color="#0003ff"/><stop offset=".6939" stop-color="#0002ff"/><stop offset=".6989" stop-color="#0017ff"/><stop offset=".7039" stop-color="#0039ff"/><stop offset=".7089" stop-color="#0064ff"/><stop offset=".7139" stop-color="#007eff"/><stop offset=".7189" stop-color="#008aff"/><stop offset=".7239" stop-color="#009eff"/><stop offset=".7289" stop-color="#00b8ff"/><stop offset=".7338" stop-color="#00d3ff"/><stop offset=".7388" stop-color="#00f7ff"/><stop offset=".7438" stop-color="#31ffce"/><stop offset=".7488" stop-color="#c5ff3a"/><stop offset=".7496" stop-color="#f3ff0c"/><stop offset=".8288" stop-color="#fffa00"/><stop offset=".8308" stop-color="#dbff24"/><stop offset=".8358" stop-color="#8cff73"/><stop offset=".8408" stop-color="#5cffa3"/><stop offset=".8458" stop-color="#36ffc9"/><stop offset=".8508" stop-color="#0efff1"/><stop offset=".8558" stop-color="#00ebff"/><stop offset=".8608" stop-color="#00d9ff"/><stop offset=".8658" stop-color="#00d5ff"/><stop offset=".8707" stop-color="#00c8ff"/><stop offset=".8757" stop-color="#00a1ff"/><stop offset=".8807" stop-color="#0071ff"/><stop offset=".8857" stop-color="#004bff"/><stop offset=".8907" stop-color="#0026ff"/><stop offset=".8957" stop-color="#0010ff"/><stop offset=".9007" stop-color="#0009ff"/><stop offset=".9057" stop-color="#0006ff"/><stop offset=".9107" stop-color="#0000f8"/><stop offset=".9157" stop-color="#0000e7"/><stop offset=".9207" stop-color="#0000db"/><stop offset=".9257" stop-color="#0000d6"/><stop offset=".9307" stop-color="#0000d3"/><stop offset=".9357" stop-color="#0000c5"/><stop offset=".9407" stop-color="#0000a7"/><stop offset=".9456" stop-color="#00008b"/><stop offset=".9506" stop-color="#000080"/><stop offset=".9993" stop-color="#000080"/></linearGradient>
<linearGradient id="r39"><stop offset=".0007" stop-color="#000080"/><stop offset=".0872" stop-color="#000080"/><stop offset=".0922" stop-color="#000095"/><stop offset=".0972" stop-color="#0000ac"/><stop offset=".1022" stop-color="#0000bb"/><stop offset=".1072" stop-color="#0000cc"/><stop offset=".1122" stop-color="#0000e4"/><stop offset=".1172" stop-color="#0002ff"/><stop offset=".1222" stop-color="#0023ff"/><stop offset=".1272" stop-color="#0044ff"/><stop offset=".1322" stop-color="#0069ff"/><stop offset=".1372" stop-color="#0098ff"/><stop offset=".1422" stop-color="#00cbff"/><stop offset=".1471" stop-color="#00f7ff"/><stop offset=".1521" stop-color="#20ffdf"/><stop offset=".1571" stop-color="#4affb5"/><stop offset=".1621" stop-color="#79ff86"/><stop offset=".1671" stop-color="#bcff43"/><stop offset=".1700" stop-color="#feff01"/><stop offset=".2487" stop-color="#fffa00"/><stop offset=".2503" stop-color="#92ff6d"/><stop offset=".2549" stop-color="#56ffa9"/><stop offset=".2595" stop-color="#40ffbf"/><stop offset=".2641" stop-color="#23ffdc"/><stop offset=".2686" stop-color="#07fff8"/><stop offset=".2732" stop-color="#00f1ff"/><stop offset=".2778" stop-color="#00e6ff"/><stop offset=".2824" stop-color="#00d1ff"/><stop offset=".2870" stop-color="#00a7ff"/><stop offset=".2915" stop-color="#0087ff"/><stop offset=".2961" stop-color="#0092ff"/><stop offset=".3007" stop-color="#00beff"/><stop offset=".3053" stop-color="#00e8ff"/><stop offset=".3098" stop-color="#07fff8"/><stop offset=".3144" stop-color="#20ffdf"/><stop offset=".3190" stop-color="#3affc5"/><stop offset=".3236" stop-color="#54ffab"/><stop offset=".3282" stop-color="#71ff8e"/><stop offset=".3327" stop-color="#a5ff5a"/><stop offset=".3361" stop-color="#dbff24"/><stop offset=".3368" stop-color="#fffa00"/><stop offset=".5820" stop-color="#fffa00"/><stop offset=".5841" stop-color="#b6ff49"/><stop offset=".5890" stop-color="#60ff9f"/><stop offset=".5940" stop-color="#42ffbd"/><stop offset=".5990" stop-color="#34ffcb"/><stop offset=".6040" stop-color="#2affd5"/><stop offset=".6090" stop-color="#1affe5"/><stop offset=".6140" stop-color="#01fffe"/><stop offset=".6190" stop-color="#00d5ff"/><stop offset=".6240" stop-color="#00a2ff"/><stop offset=".6290" stop-color="#007dff"/><stop offset=".6340" stop-color="#0060ff"/><stop offset=".6390" stop-color="#003dff"/><stop offset=".6440" stop-color="#0016ff"/><stop offset=".6490" stop-color="#0000f4"/><stop offset=".6540" stop-color="#0000d3"/><stop offset=".6590" stop-color="#0000b3"/><stop offset=".6639" stop-color="#00009f"/><stop offset=".6689" stop-color="#000097"/><stop offset=".6739" stop-color="#00009d"/><stop offset=".6789" stop-color="#0000ac"/><stop offset=".6839" stop-color="#0000c5"/><stop offset=".6889" stop-color="#0000c9"/><stop offset=".6939" stop-color="#0000cc"/><stop offset=".6989" stop-color="#0000f4"/><stop offset=".7039" stop-color="#0029ff"/><stop offset=".7089" stop-color="#0062ff"/><stop offset=".7139" stop-color="#009aff"/><stop offset=".7189" stop-color="#00c2ff"/><stop offset=".7239" stop-color="#00dbff"/><stop offset=".7289" stop-color="#00eeff"/><stop offset=".7338" stop-color="#05fffa"/><stop offset=".7388" stop-color="#1fffe0"/><stop offset=".7438" stop-color="#4affb5"/><stop offset=".7488" stop-color="#d7ff28"/><stop offset=".7496" stop-color="#fffa00"/><stop offset=".8288" stop-color="#fffe00"/><stop offset=".8308" stop-color="#bcff43"/><stop offset=".8358" stop-color="#4fffb0"/><stop offset=".8408" stop-color="#1bffe4"/><stop offset=".8458" stop-color="#00f8ff"/><stop offset=".8508" stop-color="#00e3ff"/><stop offset=".8558" stop-color="#00d2ff"/><stop offset=".8608" stop-color="#00c4ff"/><stop offset=".8658" stop-color="#00b5ff"/><stop offset=".8707" stop-color="#009cff"/><stop offset=".8757" stop-color="#0071ff"/><stop offset=".8807" stop-color="#003eff"/><stop offset=".8857" stop-color="#000bff"/><stop offset=".8907" stop-color="#0000e6"/><stop offset=".8957" stop-color="#0000d3"/><stop offset=".9007" stop-color="#0000d0"/><stop offset=".9057" stop-color="#0000d6"/><stop offset=".9157" stop-color="#0000d6"/><stop offset=".9207" stop-color="#0000d4"/><stop offset=".9257" stop-color="#0000cf"/><stop offset=".9307" stop-color="#0000c3"/><stop offset=".9357" stop-color="#0000ab"/><stop offset=".9407" stop-color="#000086"/><stop offset=".9456" stop-color="#000080"/><stop offset=".9993" stop-color="#000080"/></linearGradient>
<linearGradient id="r40"><stop offset=".0007" stop-color="#000080"/><stop offset=".0573" stop-color="#000080"/><stop offset=".0623" stop-color="#00008e"/><stop offset=".0673" stop-color="#0000a4"/><stop offset=".0722" stop-color="#0000b3"/><stop offset=".0772" stop-color="#0000a3"/><stop offset=".0822" stop-color="#00008f"/><stop offset=".0872" stop-color="#0000a0"/><stop offset=".0922" stop-color="#0000c5"/><stop offset=".0972" stop-color="#0000e1"/><stop offset=".1022" stop-color="#0000f0"/><stop offset=".1072" stop-color="#0001ff"/><stop offset=".1122" stop-color="#0015ff"/><stop offset=".1172" stop-color="#002aff"/><stop offset=".1222" stop-color="#003bff"/><stop offset=".1272" stop-color="#004aff"/><stop offset=".1322" stop-color="#005fff"/><stop offset=".1372" stop-color="#0083ff"/><stop offset=".1422" stop-color="#00b3ff"/><stop offset=".1471" stop-color="#00e0ff"/><stop offset=".1521" stop-color="#05fffa"/><stop offset=".1571" stop-color="#2affd5"/><stop offset=".1621" stop-color="#5cffa3"/><stop offset=".1671" stop-color="#a9ff56"/><stop offset=".1700" stop-color="#f6ff09"/><stop offset=".2487" stop-color="#fffa00"/><stop offset=".2503" stop-color="#96ff69"/><stop offset=".2549" stop-color="#3dffc2"/><stop offset=".2595" stop-color="#1cffe3"/><stop offset=".2641" stop-color="#00fdff"/><stop offset=".2686" stop-color="#00e6ff"/><stop offset=".2732" stop-color="#00c8ff"/><stop offset=".2778" stop-color="#0092ff"/><stop offset=".2824" stop-color="#005dff"/><stop offset=".2870" stop-color="#0044ff"/><stop offset=".2915" stop-color="#0041ff"/><stop offset=".2961" stop-color="#0055ff"/><stop offset=".3007" stop-color="#0076ff"/><stop offset=".3053" stop-color="#009cff"/><stop offset=".3098" stop-color="#00bcff"/><stop offset=".3144" stop-color="#00ddff"/><stop offset=".3190" stop-color="#00fdff"/><stop offset=".3236" stop-color="#17ffe8"/><stop offset=".3282" stop-color="#35ffca"/><stop offset=".3327" stop-color="#6eff91"/><stop offset=".3361" stop-color="#dbff24"/><stop offset=".3368" stop-color="#fffb00"/><stop offset=".5820" stop-color="#efff10"/><stop offset=".5841" stop-color="#a6ff59"/><stop offset=".5890" stop-color="#52ffad"/><stop offset=".5940" stop-color="#16ffe9"/><stop offset=".5990" stop-color="#00f1ff"/><stop offset=".6040" stop-color="#00ceff"/><stop offset=".6090" stop-color="#00aaff"/><stop offset=".6140" stop-color="#0086ff"/><stop offset=".6190" stop-color="#004dff"/><stop offset=".6240" stop-color="#0020ff"/><stop offset=".6290" stop-color="#0004ff"/><stop offset=".6340" stop-color="#0000f4"/><stop offset=".6390" stop-color="#0000ed"/><stop offset=".6440" stop-color="#0000ed"/><stop offset=".6490" stop-color="#0000ec"/><stop offset=".6540" stop-color="#0000ee"/><stop offset=".6590" stop-color="#0000ef"/><stop offset=".6639" stop-color="#0000e8"/><stop offset=".6689" stop-color="#0000e0"/><stop offset=".6739" stop-color="#0000e0"/><stop offset=".6789" stop-color="#0000eb"/><stop offset=".6839" stop-color="#0000f5"/><stop offset=".6889" stop-color="#0000f4"/><stop offset=".6939" stop-color="#0000ef"/><stop offset=".6989" stop-color="#0000f5"/><stop offset=".7039" stop-color="#0004ff"/><stop offset=".7089" stop-color="#001aff"/><stop offset=".7139" stop-color="#0040ff"/><stop offset=".7189" stop-color="#007bff"/><stop offset=".7239" stop-color="#00b9ff"/><stop offset=".7289" stop-color="#00ddff"/><stop offset=".7338" stop-color="#07fff8"/><stop offset=".7388" stop-color="#39ffc6"/><stop offset=".7438" stop-color="#70ff8f"/><stop offset=".7488" stop-color="#dbff24"/><stop offset=".7496" stop-color="#fffa00"/><stop offset=".8288" stop-color="#fffa00"/><stop offset=".8308" stop-color="#dbff24"/><stop offset=".8358" stop-color="#86ff79"/><stop offset=".8408" stop-color="#5effa1"/><stop offset=".8458" stop-color="#40ffbf"/><stop offset=".8508" stop-color="#2dffd2"/><stop offset=".8558" stop-color="#20ffdf"/><stop offset=".8608" stop-color="#0dfff2"/><stop offset=".8658" stop-color="#00ecff"/><stop offset=".8707" stop-color="#00c2ff"/><stop offset=".8757" stop-color="#008bff"/><stop offset=".8807" stop-color="#0048ff"/><stop offset=".8857" stop-color="#001aff"/><stop offset=".8907" stop-color="#000eff"/><stop offset=".8957" stop-color="#0000ff"/><stop offset=".9007" stop-color="#0000ea"/><stop offset=".9057" stop-color="#0000d7"/><stop offset=".9107" stop-color="#0000c5"/><stop offset=".9157" stop-color="#0000b4"/><stop offset=".9207" stop-color="#0000a1"/><stop offset=".9257" stop-color="#000088"/><stop offset=".9307" stop-color="#000080"/><stop offset=".9993" stop-color="#000080"/></linearGradient>
<linearGradient id="r41"><stop offset=".0007" stop-color="#000080"/><stop offset=".0822" stop-color="#000080"/><stop offset=".0872" stop-color="#00008d"/><stop offset=".0922" stop-color="#0000ac"/><stop offset=".0972" stop-color="#0000cc"/><stop offset=".1022" stop-color="#0000ee"/><stop offset=".1072" stop-color="#000eff"/><stop offset=".1122" stop-color="#0024ff"/><stop offset=".1172" stop-color="#002dff"/><stop offset=".1222" stop-color="#0042ff"/><stop offset=".1272" stop-color="#006bff"/><stop offset=".1322" stop-color="#0098ff"/><stop offset=".1372" stop-color="#00b7ff"/><stop offset=".1422" stop-color="#00d3ff"/><stop offset=".1471" stop-color="#00f3ff"/><stop offset=".1521" stop-color="#1cffe3"/><stop offset=".1571" stop-color="#44ffbb"/><stop offset=".1621" stop-color="#69ff96"/><stop offset=".1671" stop-color="#a8ff57"/><stop offset=".1700" stop-color="#ebff14"/><stop offset=".2487" stop-color="#fffa00"/><stop offset=".2503" stop-color="#a8ff57"/><stop offset=".2549" stop-color="#4effb1"/><stop offset=".2595" stop-color="#2fffd0"/><stop offset=".2641" stop-color="#18ffe7"/><stop offset=".2686" stop-color="#09fff6"/><stop offset=".2732" stop-color="#00f4ff"/><stop offset=".2778" stop-color="#00d3ff"/><stop offset=".2824" stop-color="#00aaff"/><stop offset=".2870" stop-color="#0088ff"/><stop offset=".2915" stop-color="#0072ff"/><stop offset=".2961" stop-color="#0070ff"/><stop offset=".3007" stop-color="#0085ff"/><stop offset=".3053" stop-color="#00aaff"/><stop offset=".3098" stop-color="#00d1ff"/><stop offset=".3144" stop-color="#00f0ff"/><stop offset=".3190" stop-color="#0dfff2"/><stop offset=".3236" stop-color="#2dffd2"/><stop offset=".3282" stop-color="#54ffab"/><stop offset=".3327" stop-color="#8bff74"/><stop offset=".3361" stop-color="#dbff24"/><stop offset=".3368" stop-color="#fffa00"/><stop offset=".5820" stop-color="#fffb00"/><stop offset=".5841" stop-color="#a9ff56"/><stop offset=".5890" stop-color="#55ffaa"/><stop offset=".5940" stop-color="#3bffc4"/><stop offset=".5990" stop-color="#25ffda"/><stop offset=".6040" stop-color="#09fff6"/><stop offset=".6090" stop-color="#00e7ff"/><stop offset=".6140" stop-color="#00ccff"/><stop offset=".6190" stop-color="#00adff"/><stop offset=".6240" stop-color="#0074ff"/><stop offset=".6290" stop-color="#002eff"/><stop offset=".6340" stop-color="#0000f7"/><stop offset=".6390" stop-color="#0000d9"/><stop offset=".6440" stop-color="#0000cd"/><stop offset=".6490" stop-color="#0000c5"/><stop offset=".6540" stop-color="#0000c6"/><stop offset=".6590" stop-color="#0000ce"/><stop offset=".6639" stop-color="#0000dc"/><stop offset=".6689" stop-color="#0000e8"/><stop offset=".6739" stop-color="#0000e5"/><stop offset=".6789" stop-color="#0000d9"/><stop offset=".6839" stop-color="#0000cc"/><stop offset=".6889" stop-color="#0000ce"/><stop offset=".6939" stop-color="#0000d7"/><stop offset=".6989" stop-color="#0000d2"/><stop offset=".7039" stop-color="#0000cc"/><stop offset=".7089" stop-color="#0000e0"/><stop offset=".7139" stop-color="#000bff"/><stop offset=".7189" stop-color="#003eff"/><stop offset=".7239" stop-color="#0077ff"/><stop offset=".7289" stop-color="#00a7ff"/><stop offset=".7338" stop-color="#00ddff"/><stop offset=".7388" stop-color="#18ffe7"/><stop offset=".7438" stop-color="#66ff99"/><stop offset=".7488" stop-color="#dbff24"/><stop offset=".7496" stop-color="#f5ff0a"/><stop offset=".8288" stop-color="#fffe00"/><stop offset=".8308" stop-color="#caff35"/><stop offset=".8358" stop-color="#71ff8e"/><stop offset=".8408" stop-color="#58ffa7"/><stop offset=".8458" stop-color="#51ffae"/><stop offset=".8508" stop-color="#46ffb9"/><stop offset=".8558" stop-color="#38ffc7"/><stop offset=".8608" stop-color="#2bffd4"/><stop offset=".8658" stop-color="#17ffe8"/><stop offset=".8707" stop-color="#00f5ff"/><stop offset=".8757" stop-color="#00c6ff"/><stop offset=".8807" stop-color="#0086ff"/><stop offset=".8857" stop-color="#0032ff"/><stop offset=".8907" stop-color="#0000f1"/><stop offset=".8957" stop-color="#0000cc"/><stop offset=".9007" stop-color="#0000c6"/><stop offset=".9057" stop-color="#0000c9"/><stop offset=".9107" stop-color="#0000bf"/><stop offset=".9157" stop-color="#0000b4"/><stop offset=".9207" stop-color="#0000a8"/><stop offset=".9257" stop-color="#000097"/><stop offset=".9307" stop-color="#000083"/><stop offset=".9357" stop-color="#000080"/><stop offset=".9993" stop-color="#000080"/></linearGradient>
<linearGradient id="r42"><stop offset=".0007" stop-color="#000080"/><stop offset=".0772" stop-color="#000080"/><stop offset=".0822" stop-color="#000088"/><stop offset=".0872" stop-color="#0000a0"/><stop offset=".0922" stop-color="#0000c0"/><stop offset=".0972" stop-color="#0000d6"/><stop offset=".1022" stop-color="#0000dc"/><stop offset=".1072" stop-color="#0000e2"/><stop offset=".1122" stop-color="#0000fb"/><stop offset=".1172" stop-color="#001bff"/><stop offset=".1222" stop-color="#0033ff"/><stop offset=".1272" stop-color="#0046ff"/><stop offset=".1322" stop-color="#005dff"/><stop offset=".1372" stop-color="#0078ff"/><stop offset=".1422" stop-color="#00a1ff"/><stop offset=".1471" stop-color="#00cdff"/><stop offset=".1521" stop-color="#00ffff"/><stop offset=".1571" stop-color="#34ffcb"/><stop offset=".1621" stop-color="#6cff93"/><stop offset=".1671" stop-color="#b9ff46"/><stop offset=".1700" stop-color="#ffff00"/><stop offset=".2487" stop-color="#edff12"/><stop offset=".2503" stop-color="#99ff66"/><stop offset=".2549" stop-color="#2affd5"/><stop offset=".2595" stop-color="#0afff5"/><stop offset=".2641" stop-color="#00e4ff"/><stop offset=".2686" stop-color="#00bdff"/><stop offset=".2732" stop-color="#00a5ff"/><stop offset=".2778" stop-color="#0093ff"/><stop offset=".2824" stop-color="#007cff"/><stop offset=".2870" stop-color="#0062ff"/><stop offset=".2915" stop-color="#0054ff"/><stop offset=".2961" stop-color="#0061ff"/><stop offset=".3007" stop-color="#0092ff"/><stop offset=".3053" stop-color="#00cdff"/><stop offset=".3098" stop-color="#00f1ff"/><stop offset=".3144" stop-color="#08fff7"/><stop offset=".3190" stop-color="#1cffe3"/><stop offset=".3236" stop-color="#35ffca"/><stop offset=".3282" stop-color="#54ffab"/><stop offset=".3327" stop-color="#8dff72"/><stop offset=".3361" stop-color="#dbff24"/><stop offset=".3368" stop-color="#fffa00"/><stop offset=".5820" stop-color="#fffa00"/><stop offset=".5841" stop-color="#a1ff5e"/><stop offset=".5890" stop-color="#41ffbe"/><stop offset=".5940" stop-color="#18ffe7"/><stop offset=".5990" stop-color="#00feff"/><stop offset=".6040" stop-color="#00e6ff"/><stop offset=".6090" stop-color="#00c8ff"/><stop offset=".6140" stop-color="#008bff"/><stop offset=".6190" stop-color="#003cff"/><stop offset=".6240" stop-color="#0012ff"/><stop offset=".6290" stop-color="#0000ff"/><stop offset=".6340" stop-color="#0000eb"/><stop offset=".6390" stop-color="#0000d1"/><stop offset=".6440" stop-color="#0000ba"/><stop offset=".6490" stop-color="#0000ab"/><stop offset=".6540" stop-color="#0000a7"/><stop offset=".6590" stop-color="#0000a3"/><stop offset=".6639" stop-color="#00009e"/><stop offset=".6689" stop-color="#00009a"/><stop offset=".6739" stop-color="#0000a2"/><stop offset=".6789" stop-color="#0000c2"/><stop offset=".6839" stop-color="#0000e0"/><stop offset=".6889" stop-color="#0000f3"/><stop offset=".6939" stop-color="#0004ff"/><stop offset=".6989" stop-color="#0012ff"/><stop offset=".7039" stop-color="#001eff"/><stop offset=".7089" stop-color="#0031ff"/><stop offset=".7139" stop-color="#005bff"/><stop offset=".7189" stop-color="#0093ff"/><stop offset=".7239" stop-color="#00b9ff"/><stop offset=".7289" stop-color="#00d4ff"/><stop offset=".7338" stop-color="#00f0ff"/><stop offset=".7388" stop-color="#0dfff2"/><stop offset=".7438" stop-color="#3dffc2"/><stop offset=".7488" stop-color="#cfff30"/><stop offset=".7496" stop-color="#fcff03"/><stop offset=".8288" stop-color="#fffa00"/><stop offset=".8308" stop-color="#dbff24"/><stop offset=".8358" stop-color="#8fff70"/><stop offset=".8408" stop-color="#72ff8d"/><stop offset=".8458" stop-color="#60ff9f"/><stop offset=".8508" stop-color="#4effb1"/><stop offset=".8558" stop-color="#3fffc0"/><stop offset=".8608" stop-color="#33ffcc"/><stop offset=".8658" stop-color="#23ffdc"/><stop offset=".8707" stop-color="#09fff6"/><stop offset=".8757" stop-color="#00d4ff"/><stop offset=".8807" stop-color="#0090ff"/><stop offset=".8857" stop-color="#0052ff"/><stop offset=".8907" stop-color="#0030ff"/><stop offset=".8957" stop-color="#0012ff"/><stop offset=".9007" stop-color="#0000ed"/><stop offset=".9057" stop-color="#0000c7"/><stop offset=".9107" stop-color="#0000a3"/><stop offset=".9157" stop-color="#000081"/><stop offset=".9207" stop-color="#000080"/><stop offset=".9993" stop-color="#000080"/></linearGradient>
<linearGradient id="r43"><stop offset=".0007" stop-color="#000080"/><stop offset=".0573" stop-color="#000080"/><stop offset=".0623" stop-color="#00008e"/><stop offset=".0673" stop-color="#0000b8"/><stop offset=".0722" stop-color="#0000d1"/><stop offset=".0772" stop-color="#0000dd"/><stop offset=".0822" stop-color="#0000e4"/><stop offset=".0872" stop-color="#0000e6"/><stop offset=".0922" stop-color="#0000e8"/><stop offset=".0972" stop-color="#0000ec"/><stop offset=".1022" stop-color="#0000e5"/><stop offset=".1072" stop-color="#0000e4"/><stop offset=".1122" stop-color="#0005ff"/><stop offset=".1172" stop-color="#0037ff"/><stop offset=".1222" stop-color="#0066ff"/><stop offset=".1272" stop-color="#0089ff"/><stop offset=".1322" stop-color="#00a9ff"/><stop offset=".1372" stop-color="#00cfff"/><stop offset=".1422" stop-color="#00f8ff"/><stop offset=".1471" stop-color="#11ffee"/><stop offset=".1521" stop-color="#1effe1"/><stop offset=".1571" stop-color="#32ffcd"/><stop offset=".1621" stop-color="#5affa5"/><stop offset=".1671" stop-color="#a6ff59"/><stop offset=".1700" stop-color="#fffa00"/><stop offset=".2487" stop-color="#fffa00"/><stop offset=".2503" stop-color="#98ff67"/><stop offset=".2549" stop-color="#47ffb8"/><stop offset=".2595" stop-color="#32ffcd"/><stop offset=".2641" stop-color="#1dffe2"/><stop offset=".2686" stop-color="#0bfff4"/><stop offset=".2732" stop-color="#00fbff"/><stop offset=".2778" stop-color="#00eaff"/><stop offset=".2824" stop-color="#00d5ff"/><stop offset=".2870" stop-color="#00baff"/><stop offset=".2915" stop-color="#00a0ff"/><stop offset=".2961" stop-color="#0093ff"/><stop offset=".3007" stop-color="#00a2ff"/><stop offset=".3053" stop-color="#00c2ff"/><stop offset=".3098" stop-color="#00deff"/><stop offset=".3144" stop-color="#00f0ff"/><stop offset=".3190" stop-color="#06fff9"/><stop offset=".3236" stop-color="#27ffd8"/><stop offset=".3282" stop-color="#57ffa8"/><stop offset=".3327" stop-color="#9cff63"/><stop offset=".3361" stop-color="#dbff24"/><stop offset=".3368" stop-color="#fffa00"/><stop offset=".5820" stop-color="#fffa00"/><stop offset=".5841" stop-color="#d2ff2d"/><stop offset=".5890" stop-color="#85ff7a"/><stop offset=".5940" stop-color="#5fffa0"/><stop offset=".5990" stop-color="#4affb5"/><stop offset=".6040" stop-color="#30ffcf"/><stop offset=".6090" stop-color="#0cfff3"/><stop offset=".6140" stop-color="#00d8ff"/><stop offset=".6190" stop-color="#0099ff"/><stop offset=".6240" stop-color="#0047ff"/><stop offset=".6290" stop-color="#0000f7"/><stop offset=".6340" stop-color="#0000c5"/><stop offset=".6390" stop-color="#0000ac"/><stop offset=".6440" stop-color="#0000a7"/><stop offset=".6490" stop-color="#0000ae"/><stop offset=".6540" stop-color="#0000c3"/><stop offset=".6590" stop-color="#0000e4"/><stop offset=".6639" stop-color="#0002ff"/><stop offset=".6689" stop-color="#0016ff"/><stop offset=".6739" stop-color="#001dff"/><stop offset=".6789" stop-color="#0026ff"/><stop offset=".6839" stop-color="#002cff"/><stop offset=".6889" stop-color="#001bff"/><stop offset=".6939" stop-color="#000eff"/><stop offset=".6989" stop-color="#001bff"/><stop offset=".7039" stop-color="#003cff"/><stop offset=".7089" stop-color="#0063ff"/><stop offset=".7139" stop-color="#0083ff"/><stop offset=".7189" stop-color="#009dff"/><stop offset=".7239" stop-color="#00b5ff"/><stop offset=".7289" stop-color="#00cfff"/><stop offset=".7338" stop-color="#00e7ff"/><stop offset=".7388" stop-color="#02fffd"/><stop offset=".7438" stop-color="#2affd5"/><stop offset=".7488" stop-color="#c2ff3d"/><stop offset=".7496" stop-color="#f9ff06"/><stop offset=".8288" stop-color="#fffa00"/><stop offset=".8308" stop-color="#c4ff3b"/><stop offset=".8358" stop-color="#5effa1"/><stop offset=".8408" stop-color="#34ffcb"/><stop offset=".8458" stop-color="#17ffe8"/><stop offset=".8508" stop-color="#00feff"/><stop offset=".8558" stop-color="#00e6ff"/><stop offset=".8608" stop-color="#00d2ff"/><stop offset=".8658" stop-color="#00beff"/><stop offset=".8707" stop-color="#00a7ff"/><stop offset=".8757" stop-color="#008eff"/><stop offset=".8807" stop-color="#006dff"/><stop offset=".8857" stop-color="#0040ff"/><stop offset=".8907" stop-color="#000eff"/><stop offset=".8957" stop-color="#0000ef"/><stop offset=".9007" stop-color="#0000f5"/><stop offset=".9057" stop-color="#0004ff"/><stop offset=".9107" stop-color="#0000fa"/><stop offset=".9157" stop-color="#0000e0"/><stop offset=".9207" stop-color="#0000c9"/><stop offset=".9257" stop-color="#0000b7"/><stop offset=".9307" stop-color="#0000a3"/><stop offset=".9357" stop-color="#000091"/><stop offset=".9407" stop-color="#00008a"/><stop offset=".9456" stop-color="#000080"/><stop offset=".9993" stop-color="#000080"/></linearGradient>
<linearGradient id="r44"><stop offset=".0007" stop-color="#000080"/><stop offset=".0623" stop-color="#000080"/><stop offset=".0673" stop-color="#000097"/><stop offset=".0722" stop-color="#0000aa"/><stop offset=".0772" stop-color="#0000a8"/><stop offset=".0822" stop-color="#0000a2"/><stop offset=".0872" stop-color="#0000ac"/><stop offset=".0922" stop-color="#0000c1"/><stop offset=".0972" stop-color="#0000d8"/><stop offset=".1022" stop-color="#0000f0"/><stop offset=".1072" stop-color="#000bff"/><stop offset=".1122" stop-color="#0019ff"/><stop offset=".1172" stop-color="#0019ff"/><stop offset=".1222" stop-color="#0023ff"/><stop offset=".1272" stop-color="#003bff"/><stop offset=".1322" stop-color="#005aff"/><stop offset=".1372" stop-color="#007cff"/><stop offset=".1422" stop-color="#009fff"/><stop offset=".1471" stop-color="#00c5ff"/><stop offset=".1521" stop-color="#01fffe"/><stop offset=".1571" stop-color="#37ffc8"/><stop offset=".1621" stop-color="#5fffa0"/><stop offset=".1671" stop-color="#9dff62"/><stop offset=".1700" stop-color="#ecff13"/><stop offset=".2487" stop-color="#fffa00"/><stop offset=".2503" stop-color="#9dff62"/><stop offset=".2549" stop-color="#55ffaa"/><stop offset=".2595" stop-color="#40ffbf"/><stop offset=".2641" stop-color="#28ffd7"/><stop offset=".2686" stop-color="#11ffee"/><stop offset=".2732" stop-color="#00efff"/><stop offset=".2778" stop-color="#00baff"/><stop offset=".2824" stop-color="#007aff"/><stop offset=".2870" stop-color="#004eff"/><stop offset=".2915" stop-color="#0041ff"/><stop offset=".2961" stop-color="#005aff"/><stop offset=".3007" stop-color="#008fff"/><stop offset=".3053" stop-color="#00c0ff"/><stop offset=".3098" stop-color="#00deff"/><stop offset=".3144" stop-color="#00e6ff"/><stop offset=".3190" stop-color="#00f1ff"/><stop offset=".3236" stop-color="#0efff1"/><stop offset=".3282" stop-color="#3bffc4"/><stop offset=".3327" stop-color="#80ff7f"/><stop offset=".3361" stop-color="#dbff24"/><stop offset=".3368" stop-color="#fffd00"/><stop offset=".5820" stop-color="#fdff02"/><stop offset=".5841" stop-color="#b8ff47"/><stop offset=".5890" stop-color="#73ff8c"/><stop offset=".5940" stop-color="#4bffb4"/><stop offset=".5990" stop-color="#30ffcf"/><stop offset=".6040" stop-color="#10ffef"/><stop offset=".6090" stop-color="#00f1ff"/><stop offset=".6140" stop-color="#00b6ff"/><stop offset=".6190" stop-color="#0053ff"/><stop offset=".6240" stop-color="#0005ff"/><stop offset=".6290" stop-color="#0000d4"/><stop offset=".6340" stop-color="#0000be"/><stop offset=".6390" stop-color="#0000c1"/><stop offset=".6440" stop-color="#0000d3"/><stop offset=".6490" stop-color="#0000e4"/><stop offset=".6540" stop-color="#0000ee"/><stop offset=".6590" stop-color="#0004ff"/><stop offset=".6639" stop-color="#001dff"/><stop offset=".6689" stop-color="#002bff"/><stop offset=".6739" stop-color="#0030ff"/><stop offset=".6789" stop-color="#0031ff"/><stop offset=".6839" stop-color="#0030ff"/><stop offset=".6889" stop-color="#0023ff"/><stop offset=".6939" stop-color="#001cff"/><stop offset=".6989" stop-color="#0031ff"/><stop offset=".7039" stop-color="#005aff"/><stop offset=".7089" stop-color="#008eff"/><stop offset=".7139" stop-color="#00bdff"/><stop offset=".7189" stop-color="#00e3ff"/><stop offset=".7239" stop-color="#00faff"/><stop offset=".7289" stop-color="#0cfff3"/><stop offset=".7338" stop-color="#1bffe4"/><stop offset=".7388" stop-color="#2dffd2"/><stop offset=".7438" stop-color="#56ffa9"/><stop offset=".7488" stop-color="#dbff24"/><stop offset=".7496" stop-color="#fffa00"/><stop offset=".8288" stop-color="#e8ff17"/><stop offset=".8308" stop-color="#bcff43"/><stop offset=".8358" stop-color="#64ff9b"/><stop offset=".8408" stop-color="#36ffc9"/><stop offset=".8458" stop-color="#1dffe2"/><stop offset=".8508" stop-color="#1affe5"/><stop offset=".8558" stop-color="#20ffdf"/><stop offset=".8608" stop-color="#12ffed"/><stop offset=".8658" stop-color="#00f0ff"/><stop offset=".8707" stop-color="#00c9ff"/><stop offset=".8757" stop-color="#009fff"/><stop offset=".8807" stop-color="#0072ff"/><stop offset=".8857" stop-color="#004aff"/><stop offset=".8907" stop-color="#002cff"/><stop offset=".8957" stop-color="#0012ff"/><stop offset=".9007" stop-color="#0000f0"/><stop offset=".9057" stop-color="#0000d0"/><stop offset=".9107" stop-color="#0000b5"/><stop offset=".9157" stop-color="#0000a1"/><stop offset=".9207" stop-color="#00008d"/><stop offset=".9257" stop-color="#000080"/><stop offset=".9993" stop-color="#000080"/></linearGradient>
<linearGradient id="r45"><stop offset=".0007" stop-color="#000080"/><stop offset=".0972" stop-color="#000080"/><stop offset=".1022" stop-color="#000085"/><stop offset=".1072" stop-color="#00009d"/><stop offset=".1122" stop-color="#0000b6"/><stop offset=".1172" stop-color="#0000d2"/><stop offset=".1222" stop-color="#000bff"/><stop offset=".1272" stop-color="#0061ff"/><stop offset=".1322" stop-color="#00bbff"/><stop offset=".1372" stop-color="#00faff"/><stop offset=".1422" stop-color="#1fffe0"/><stop offset=".1471" stop-color="#34ffcb"/><stop offset=".1521" stop-color="#49ffb6"/><stop offset=".1571" stop-color="#5fffa0"/><stop offset=".1621" stop-color="#74ff8b"/><stop offset=".1671" stop-color="#a7ff58"/><stop offset=".1700" stop-color="#fffa00"/><stop offset=".2487" stop-color="#fffc00"/><stop offset=".2503" stop-color="#adff52"/><stop offset=".2549" stop-color="#45ffba"/><stop offset=".2595" stop-color="#28ffd7"/><stop offset=".2641" stop-color="#09fff6"/><stop offset=".2686" stop-color="#00f0ff"/><stop offset=".2732" stop-color="#00d9ff"/><stop offset=".2778" stop-color="#00bbff"/><stop offset=".2824" stop-color="#00a2ff"/><stop offset=".2870" stop-color="#009fff"/><stop offset=".2915" stop-color="#00acff"/><stop offset=".2961" stop-color="#00b9ff"/><stop offset=".3007" stop-color="#00c1ff"/><stop offset=".3053" stop-color="#00c9ff"/><stop offset=".3098" stop-color="#00d2ff"/><stop offset=".3144" stop-color="#00d7ff"/><stop offset=".3190" stop-color="#00dbff"/><stop offset=".3236" stop-color="#00f0ff"/><stop offset=".3282" stop-color="#1bffe4"/><stop offset=".3327" stop-color="#6bff94"/><stop offset=".3361" stop-color="#d3ff2c"/><stop offset=".3368" stop-color="#f3ff0c"/><stop offset=".5820" stop-color="#fffa00"/><stop offset=".5841" stop-color="#bfff40"/><stop offset=".5890" stop-color="#75ff8a"/><stop offset=".5940" stop-color="#53ffac"/><stop offset=".5990" stop-color="#3cffc3"/><stop offset=".6040" stop-color="#22ffdd"/><stop offset=".6090" stop-color="#06fff9"/><stop offset=".6140" stop-color="#00e4ff"/><stop offset=".6190" stop-color="#00b9ff"/><stop offset=".6240" stop-color="#0080ff"/><stop offset=".6290" stop-color="#005fff"/><stop offset=".6340" stop-color="#003dff"/><stop offset=".6390" stop-color="#0013ff"/><stop offset=".6440" stop-color="#0000e9"/><stop offset=".6490" stop-color="#0000d2"/><stop offset=".6540" stop-color="#0000ca"/><stop offset=".6590" stop-color="#0000c6"/><stop offset=".6639" stop-color="#0000c0"/><stop offset=".6689" stop-color="#0000bc"/><stop offset=".6739" stop-color="#0000c2"/><stop offset=".6789" stop-color="#0000d9"/><stop offset=".6839" stop-color="#0000e3"/><stop offset=".6889" stop-color="#0000e3"/><stop offset=".6939" stop-color="#0000f2"/><stop offset=".6989" stop-color="#0015ff"/><stop offset=".7039" stop-color="#0050ff"/><stop offset=".7089" stop-color="#0094ff"/><stop offset=".7139" stop-color="#00bdff"/><stop offset=".7189" stop-color="#00ccff"/><stop offset=".7239" stop-color="#00d9ff"/><stop offset=".7289" stop-color="#00edff"/><stop offset=".7338" stop-color="#00f9ff"/><stop offset=".7388" stop-color="#08fff7"/><stop offset=".7438" stop-color="#30ffcf"/><stop offset=".7488" stop-color="#c5ff3a"/><stop offset=".7496" stop-color="#f8ff07"/><stop offset=".8288" stop-color="#fffa00"/><stop offset=".8308" stop-color="#dbff24"/><stop offset=".8358" stop-color="#7fff80"/><stop offset=".8408" stop-color="#43ffbc"/><stop offset=".8458" stop-color="#10ffef"/><stop offset=".8508" stop-color="#00edff"/><stop offset=".8558" stop-color="#00d7ff"/><stop offset=".8608" stop-color="#00bbff"/><stop offset=".8658" stop-color="#009bff"/><stop offset=".8707" stop-color="#0081ff"/><stop offset=".8757" stop-color="#0071ff"/><stop offset=".8807" stop-color="#005eff"/><stop offset=".8857" stop-color="#0048ff"/><stop offset=".8907" stop-color="#0036ff"/><stop offset=".8957" stop-color="#0022ff"/><stop offset=".9007" stop-color="#0002ff"/><stop offset=".9057" stop-color="#0000df"/><stop offset=".9107" stop-color="#0000be"/><stop offset=".9157" stop-color="#0000a1"/><stop offset=".9207" stop-color="#000084"/><stop offset=".9257" stop-color="#000080"/><stop offset=".9993" stop-color="#000080"/></linearGradient>
<linearGradient id="r46"><stop offset=".0007" stop-color="#000080"/><stop offset=".0573" stop-color="#000080"/><stop offset=".0623" stop-color="#000087"/><stop offset=".0673" stop-color="#00009f"/><stop offset=".0722" stop-color="#0000b0"/><stop offset=".0772" stop-color="#0000a8"/><stop offset=".0822" stop-color="#00009f"/><stop offset=".0872" stop-color="#0000af"/><stop offset=".0922" stop-color="#0000cd"/><stop offset=".0972" stop-color="#0000e4"/><stop offset=".1022" stop-color="#0000f4"/><stop offset=".1072" stop-color="#0008ff"/><stop offset=".1122" stop-color="#0023ff"/><stop offset=".1172" stop-color="#0048ff"/><stop offset=".1222" stop-color="#0062ff"/><stop offset=".1272" stop-color="#0068ff"/><stop offset=".1322" stop-color="#006aff"/><stop offset=".1372" stop-color="#0075ff"/><stop offset=".1422" stop-color="#0086ff"/><stop offset=".1471" stop-color="#009fff"/><stop offset=".1521" stop-color="#00bcff"/><stop offset=".1571" stop-color="#00e6ff"/><stop offset=".1621" stop-color="#1affe5"/><stop offset=".1671" stop-color="#72ff8d"/><stop offset=".1700" stop-color="#e7ff18"/><stop offset=".2487" stop-color="#ffff00"/><stop offset=".2503" stop-color="#8cff73"/><stop offset=".2549" stop-color="#34ffcb"/><stop offset=".2595" stop-color="#14ffeb"/><stop offset=".2641" stop-color="#00f7ff"/><stop offset=".2686" stop-color="#00e5ff"/><stop offset=".2732" stop-color="#00d4ff"/><stop offset=".2778" stop-color="#00c2ff"/><stop offset=".2824" stop-color="#00abff"/><stop offset=".2870" stop-color="#008fff"/><stop offset=".2915" stop-color="#0082ff"/><stop offset=".2961" stop-color="#0096ff"/><stop offset=".3007" stop-color="#00c1ff"/><stop offset=".3053" stop-color="#00e3ff"/><stop offset=".3098" stop-color="#00faff"/><stop offset=".3144" stop-color="#12ffed"/><stop offset=".3190" stop-color="#2dffd2"/><stop offset=".3236" stop-color="#45ffba"/><stop offset=".3282" stop-color="#61ff9e"/><stop offset=".3327" stop-color="#a0ff5f"/><stop offset=".3361" stop-color="#dbff24"/><stop offset=".3368" stop-color="#fffa00"/><stop offset=".5820" stop-color="#fffa00"/><stop offset=".5841" stop-color="#9cff63"/><stop offset=".5890" stop-color="#3bffc4"/><stop offset=".5940" stop-color="#13ffec"/><stop offset=".5990" stop-color="#00fdff"/><stop offset=".6040" stop-color="#00ebff"/><stop offset=".6090" stop-color="#00d8ff"/><stop offset=".6140" stop-color="#00c6ff"/><stop offset=".6190" stop-color="#00aeff"/><stop offset=".6240" stop-color="#0085ff"/><stop offset=".6290" stop-color="#005fff"/><stop offset=".6340" stop-color="#003eff"/><stop offset=".6390" stop-color="#001dff"/><stop offset=".6440" stop-color="#0003ff"/><stop offset=".6490" stop-color="#0000f2"/><stop offset=".6540" stop-color="#0000ea"/><stop offset=".6590" stop-color="#0000ec"/><stop offset=".6639" stop-color="#0000fb"/><stop offset=".6689" stop-color="#0007ff"/><stop offset=".6739" stop-color="#0001ff"/><stop offset=".6789" stop-color="#0000e5"/><stop offset=".6839" stop-color="#0000d9"/><stop offset=".6889" stop-color="#0000da"/><stop offset=".6939" stop-color="#0000dc"/><stop offset=".6989" stop-color="#0000e3"/><stop offset=".7039" stop-color="#0000f0"/><stop offset=".7089" stop-color="#000eff"/><stop offset=".7139" stop-color="#0047ff"/><stop offset=".7189" stop-color="#0087ff"/><stop offset=".7239" stop-color="#00b7ff"/><stop offset=".7289" stop-color="#00e2ff"/><stop offset=".7338" stop-color="#11ffee"/><stop offset=".7388" stop-color="#42ffbd"/><stop offset=".7438" stop-color="#80ff7f"/><stop offset=".7488" stop-color="#dbff24"/><stop offset=".7496" stop-color="#fcff03"/><stop offset=".8288" stop-color="#feff01"/><stop offset=".8308" stop-color="#c2ff3d"/><stop offset=".8358" stop-color="#64ff9b"/><stop offset=".8408" stop-color="#48ffb7"/><stop offset=".8458" stop-color="#3effc1"/><stop offset=".8508" stop-color="#33ffcc"/><stop offset=".8558" stop-color="#24ffdb"/><stop offset=".8608" stop-color="#19ffe6"/><stop offset=".8658" stop-color="#11ffee"/><stop offset=".8707" stop-color="#00f7ff"/><stop offset=".8757" stop-color="#00c7ff"/><stop offset=".8807" stop-color="#0087ff"/><stop offset=".8857" stop-color="#0044ff"/><stop offset=".8907" stop-color="#0018ff"/><stop offset=".8957" stop-color="#0000f6"/><stop offset=".9007" stop-color="#0000d3"/><stop offset=".9057" stop-color="#0000ae"/><stop offset=".9107" stop-color="#00008c"/><stop offset=".9157" stop-color="#000080"/><stop offset=".9993" stop-color="#000080"/></linearGradient>
<linearGradient id="r47"><stop offset=".0007" stop-color="#000080"/><stop offset=".0822" stop-color="#000080"/><stop offset=".0872" stop-color="#00008a"/><stop offset=".0922" stop-color="#0000a3"/><stop offset=".0972" stop-color="#0000bd"/><stop offset=".1022" stop-color="#0000da"/><stop offset=".1072" stop-color="#0000f6"/><stop offset=".1122" stop-color="#0010ff"/><stop offset=".1172" stop-color="#0027ff"/><stop offset=".1222" stop-color="#0044ff"/><stop offset=".1272" stop-color="#0066ff"/><stop offset=".1322" stop-color="#0083ff"/><stop offset=".1372" stop-color="#009dff"/><stop offset=".1422" stop-color="#00b8ff"/><stop offset=".1471" stop-color="#00d6ff"/><stop offset=".1521" stop-color="#00fbff"/><stop offset=".1571" stop-color="#23ffdc"/><stop offset=".1621" stop-color="#50ffaf"/><stop offset=".1671" stop-color="#9bff64"/><stop offset=".1700" stop-color="#fbff04"/><stop offset=".2487" stop-color="#fffa00"/><stop offset=".2503" stop-color="#a8ff57"/><stop offset=".2549" stop-color="#63ff9c"/><stop offset=".2595" stop-color="#4fffb0"/><stop offset=".2641" stop-color="#3dffc2"/><stop offset=".2686" stop-color="#2affd5"/><stop offset=".2732" stop-color="#0afff5"/><stop offset=".2778" stop-color="#00d8ff"/><stop offset=".2824" stop-color="#009bff"/><stop offset=".2870" stop-color="#0063ff"/><stop offset=".2915" stop-color="#0044ff"/><stop offset=".2961" stop-color="#004cff"/><stop offset=".3007" stop-color="#0072ff"/><stop offset=".3053" stop-color="#009fff"/><stop offset=".3098" stop-color="#00beff"/><stop offset=".3144" stop-color="#00d2ff"/><stop offset=".3190" stop-color="#00e4ff"/><stop offset=".3236" stop-color="#04fffb"/><stop offset=".3282" stop-color="#37ffc8"/><stop offset=".3327" stop-color="#78ff87"/><stop offset=".3361" stop-color="#dbff24"/><stop offset=".3368" stop-color="#fffa00"/><stop offset=".5820" stop-color="#fffa00"/><stop offset=".5841" stop-color="#a1ff5e"/><stop offset=".5890" stop-color="#48ffb7"/><stop offset=".5940" stop-color="#26ffd9"/><stop offset=".5990" stop-color="#14ffeb"/><stop offset=".6040" stop-color="#08fff7"/><stop offset=".6090" stop-color="#00f2ff"/><stop offset=".6140" stop-color="#00ccff"/><stop offset=".6190" stop-color="#0090ff"/><stop offset=".6240" stop-color="#005aff"/><stop offset=".6290" stop-color="#0034ff"/><stop offset=".6340" stop-color="#0015ff"/><stop offset=".6390" stop-color="#0004ff"/><stop offset=".6440" stop-color="#0000ef"/><stop offset=".6490" stop-color="#0000ce"/><stop offset=".6540" stop-color="#0000a8"/><stop offset=".6590" stop-color="#00008a"/><stop offset=".6639" stop-color="#000080"/><stop offset=".6739" stop-color="#000080"/><stop offset=".6789" stop-color="#000091"/><stop offset=".6839" stop-color="#0000b3"/><stop offset=".6889" stop-color="#0000d6"/><stop offset=".6939" stop-color="#0000fc"/><stop offset=".6989" stop-color="#0037ff"/><stop offset=".7039" stop-color="#0081ff"/><stop offset=".7089" stop-color="#00bcff"/><stop offset=".7139" stop-color="#00d9ff"/><stop offset=".7189" stop-color="#00deff"/><stop offset=".7239" stop-color="#00e4ff"/><stop offset=".7289" stop-color="#00efff"/><stop offset=".7338" stop-color="#04fffb"/><stop offset=".7388" stop-color="#24ffdb"/><stop offset=".7438" stop-color="#5affa5"/><stop offset=".7488" stop-color="#dbff24"/><stop offset=".7496" stop-color="#feff01"/><stop offset=".8288" stop-color="#feff01"/><stop offset=".8308" stop-color="#c8ff37"/><stop offset=".8358" stop-color="#67ff98"/><stop offset=".8408" stop-color="#43ffbc"/><stop offset=".8458" stop-color="#33ffcc"/><stop offset=".8508" stop-color="#27ffd8"/><stop offset=".8558" stop-color="#1affe5"/><stop offset=".8608" stop-color="#0bfff4"/><stop offset=".8658" stop-color="#00f7ff"/><stop offset=".8707" stop-color="#00d9ff"/><stop offset=".8757" stop-color="#00a9ff"/><stop offset=".8807" stop-color="#006dff"/><stop offset=".8857" stop-color="#0030ff"/><stop offset=".8907" stop-color="#0027ff"/><stop offset=".8957" stop-color="#001fff"/><stop offset=".9007" stop-color="#0004ff"/><stop offset=".9057" stop-color="#0000e7"/><stop offset=".9107" stop-color="#0000d1"/><stop offset=".9157" stop-color="#0000bf"/><stop offset=".9207" stop-color="#0000b0"/><stop offset=".9257" stop-color="#0000a1"/><stop offset=".9307" stop-color="#00008e"/><stop offset=".9357" stop-color="#000080"/><stop offset=".9993" stop-color="#000080"/></linearGradient>
<linearGradient id="r48"><stop offset=".0007" stop-color="#000080"/><stop offset=".0772" stop-color="#000080"/><stop offset=".0822" stop-color="#000081"/><stop offset=".0872" stop-color="#000093"/><stop offset=".0922" stop-color="#0000ac"/><stop offset=".0972" stop-color="#0000cd"/><stop offset=".1022" stop-color="#0000fe"/><stop offset=".1072" stop-color="#002eff"/><stop offset=".1122" stop-color="#003bff"/><stop offset=".1172" stop-color="#0030ff"/><stop offset=".1222" stop-color="#001cff"/><stop offset=".1272" stop-color="#000aff"/><stop offset=".1322" stop-color="#0006ff"/><stop offset=".1372" stop-color="#0021ff"/><stop offset=".1422" stop-color="#0056ff"/><stop offset=".1471" stop-color="#009aff"/><stop offset=".1521" stop-color="#00d4ff"/><stop offset=".1571" stop-color="#0cfff3"/><stop offset=".1621" stop-color="#42ffbd"/><stop offset=".1671" stop-color="#8fff70"/><stop offset=".1700" stop-color="#e6ff19"/><stop offset=".2487" stop-color="#fffa00"/><stop offset=".2503" stop-color="#b3ff4c"/><stop offset=".2549" stop-color="#51ffae"/><stop offset=".2595" stop-color="#38ffc7"/><stop offset=".2641" stop-color="#16ffe9"/><stop offset=".2686" stop-color="#00f1ff"/><stop offset=".2732" stop-color="#00c6ff"/><stop offset=".2778" stop-color="#0089ff"/><stop offset=".2824" stop-color="#004aff"/><stop offset=".2870" stop-color="#0026ff"/><stop offset=".2915" stop-color="#0019ff"/><stop offset=".2961" stop-color="#0029ff"/><stop offset=".3007" stop-color="#0056ff"/><stop offset=".3053" stop-color="#0091ff"/><stop offset=".3098" stop-color="#00b6ff"/><stop offset=".3144" stop-color="#00d2ff"/><stop offset=".3190" stop-color="#00efff"/><stop offset=".3236" stop-color="#10ffef"/><stop offset=".3282" stop-color="#39ffc6"/><stop offset=".3327" stop-color="#7cff83"/><stop offset=".3361" stop-color="#dbff24"/><stop offset=".3368" stop-color="#feff01"/><stop offset=".5820" stop-color="#fffc00"/><stop offset=".5841" stop-color="#93ff6c"/><stop offset=".5890" stop-color="#33ffcc"/><stop offset=".5940" stop-color="#12ffed"/><stop offset=".5990" stop-color="#00f7ff"/><stop offset=".6040" stop-color="#00daff"/><stop offset=".6090" stop-color="#00ceff"/><stop offset=".6140" stop-color="#00d7ff"/><stop offset=".6190" stop-color="#00e2ff"/><stop offset=".6240" stop-color="#00daff"/><stop offset=".6290" stop-color="#00b5ff"/><stop offset=".6340" stop-color="#0081ff"/><stop offset=".6390" stop-color="#0056ff"/><stop offset=".6440" stop-color="#002fff"/><stop offset=".6490" stop-color="#0007ff"/><stop offset=".6540" stop-color="#0000dc"/><stop offset=".6590" stop-color="#0000c3"/><stop offset=".6639" stop-color="#0000ba"/><stop offset=".6689" stop-color="#0000b4"/><stop offset=".6739" stop-color="#0000af"/><stop offset=".6789" stop-color="#0000aa"/><stop offset=".6839" stop-color="#0000b1"/><stop offset=".6889" stop-color="#0000b9"/><stop offset=".6939" stop-color="#0000c7"/><stop offset=".6989" stop-color="#0000ee"/><stop offset=".7039" stop-color="#0026ff"/><stop offset=".7089" stop-color="#005aff"/><stop offset=".7139" stop-color="#0083ff"/><stop offset=".7189" stop-color="#00a4ff"/><stop offset=".7239" stop-color="#00caff"/><stop offset=".7289" stop-color="#00f2ff"/><stop offset=".7338" stop-color="#14ffeb"/><stop offset=".7388" stop-color="#33ffcc"/><stop offset=".7438" stop-color="#59ffa6"/><stop offset=".7488" stop-color="#dbff24"/><stop offset=".7496" stop-color="#fffa00"/><stop offset=".8288" stop-color="#faff05"/><stop offset=".8308" stop-color="#cdff32"/><stop offset=".8358" stop-color="#72ff8d"/><stop offset=".8408" stop-color="#4affb5"/><stop offset=".8458" stop-color="#34ffcb"/><stop offset=".8508" stop-color="#2cffd3"/><stop offset=".8558" stop-color="#2affd5"/><stop offset=".8608" stop-color="#1dffe2"/><stop offset=".8658" stop-color="#04fffb"/><stop offset=".8707" stop-color="#00e0ff"/><stop offset=".8757" stop-color="#00b2ff"/><stop offset=".8807" stop-color="#0077ff"/><stop offset=".8857" stop-color="#0037ff"/><stop offset=".8907" stop-color="#0008ff"/><stop offset=".8957" stop-color="#0000e8"/><stop offset=".9007" stop-color="#0000d7"/><stop offset=".9057" stop-color="#0000c9"/><stop offset=".9107" stop-color="#0000c0"/><stop offset=".9157" stop-color="#0000bc"/><stop offset=".9207" stop-color="#0000b3"/><stop offset=".9257" stop-color="#00009b"/><stop offset=".9307" stop-color="#000081"/><stop offset=".9357" stop-color="#000080"/><stop offset=".9993" stop-color="#000080"/></linearGradient>
<linearGradient id="r49"><stop offset=".0007" stop-color="#000080"/><stop offset=".0872" stop-color="#000080"/><stop offset=".0922" stop-color="#0000a4"/><stop offset=".0972" stop-color="#0000ce"/><stop offset=".1022" stop-color="#0000f7"/><stop offset=".1072" stop-color="#001dff"/><stop offset=".1122" stop-color="#003aff"/><stop offset=".1172" stop-color="#0051ff"/><stop offset=".1222" stop-color="#006eff"/><stop offset=".1272" stop-color="#0093ff"/><stop offset=".1322" stop-color="#00b4ff"/><stop offset=".1372" stop-color="#00c8ff"/><stop offset=".1422" stop-color="#00d9ff"/><stop offset=".1471" stop-color="#00f4ff"/><stop offset=".1521" stop-color="#19ffe6"/><stop offset=".1571" stop-color="#40ffbf"/><stop offset=".1621" stop-color="#6bff94"/><stop offset=".1671" stop-color="#b4ff4b"/><stop offset=".1700" stop-color="#fffe00"/><stop offset=".2487" stop-color="#fffa00"/><stop offset=".2503" stop-color="#b4ff4b"/><stop offset=".2549" stop-color="#59ffa6"/><stop offset=".2595" stop-color="#45ffba"/><stop offset=".2641" stop-color="#36ffc9"/><stop offset=".2686" stop-color="#25ffda"/><stop offset=".2732" stop-color="#11ffee"/><stop offset=".2778" stop-color="#00f4ff"/><stop offset=".2824" stop-color="#00cfff"/><stop offset=".2870" stop-color="#0098ff"/><stop offset=".2915" stop-color="#0067ff"/><stop offset=".2961" stop-color="#0073ff"/><stop offset=".3007" stop-color="#00aaff"/><stop offset=".3053" stop-color="#00d1ff"/><stop offset=".3098" stop-color="#00e7ff"/><stop offset=".3144" stop-color="#00fcff"/><stop offset=".3190" stop-color="#15ffea"/><stop offset=".3236" stop-color="#27ffd8"/><stop offset=".3282" stop-color="#44ffbb"/><stop offset=".3327" stop-color="#85ff7a"/><stop offset=".3361" stop-color="#dbff24"/><stop offset=".3368" stop-color="#f9ff06"/><stop offset=".5820" stop-color="#fffc00"/><stop offset=".5841" stop-color="#beff41"/><stop offset=".5890" stop-color="#67ff98"/><stop offset=".5940" stop-color="#2affd5"/><stop offset=".5990" stop-color="#08fff7"/><stop offset=".6040" stop-color="#00f0ff"/><stop offset=".6090" stop-color="#00ddff"/><stop offset=".6140" stop-color="#00d5ff"/><stop offset=".6190" stop-color="#00c9ff"/><stop offset=".6240" stop-color="#009dff"/><stop offset=".6290" stop-color="#0072ff"/><stop offset=".6340" stop-color="#004cff"/><stop offset=".6390" stop-color="#002fff"/><stop offset=".6440" stop-color="#0013ff"/><stop offset=".6490" stop-color="#0000f7"/><stop offset=".6540" stop-color="#0000e4"/><stop offset=".6590" stop-color="#0000d9"/><stop offset=".6639" stop-color="#0000cd"/><stop offset=".6689" stop-color="#0000c3"/><stop offset=".6739" stop-color="#0000c3"/><stop offset=".6789" stop-color="#0000ce"/><stop offset=".6839" stop-color="#0000d8"/><stop offset=".6889" stop-color="#0000de"/><stop offset=".6939" stop-color="#0000ea"/><stop offset=".6989" stop-color="#0009ff"/><stop offset=".7039" stop-color="#003bff"/><stop offset=".7089" stop-color="#006eff"/><stop offset=".7139" stop-color="#009dff"/><stop offset=".7189" stop-color="#00c4ff"/><stop offset=".7239" stop-color="#00f4ff"/><stop offset=".7289" stop-color="#2bffd4"/><stop offset=".7338" stop-color="#56ffa9"/><stop offset=".7388" stop-color="#76ff89"/><stop offset=".7438" stop-color="#9eff61"/><stop offset=".7488" stop-color="#dbff24"/><stop offset=".7496" stop-color="#fffa00"/><stop offset=".8288" stop-color="#fbff04"/><stop offset=".8308" stop-color="#bcff43"/><stop offset=".8358" stop-color="#53ffac"/><stop offset=".8408" stop-color="#1fffe0"/><stop offset=".8458" stop-color="#00fbff"/><stop offset=".8508" stop-color="#00ecff"/><stop offset=".8558" stop-color="#00e3ff"/><stop offset=".8608" stop-color="#00d0ff"/><stop offset=".8658" stop-color="#00afff"/><stop offset=".8707" stop-color="#008cff"/><stop offset=".8757" stop-color="#006dff"/><stop offset=".8807" stop-color="#004aff"/><stop offset=".8857" stop-color="#0022ff"/><stop offset=".8907" stop-color="#000dff"/><stop offset=".8957" stop-color="#0000fa"/><stop offset=".9007" stop-color="#0000d7"/><stop offset=".9057" stop-color="#0000b0"/><stop offset=".9107" stop-color="#000099"/><stop offset=".9157" stop-color="#000090"/><stop offset=".9207" stop-color="#000081"/><stop offset=".9257" stop-color="#000080"/><stop offset=".9993" stop-color="#000080"/></linearGradient>
<linearGradient id="r50"><stop offset=".0007" stop-color="#000080"/><stop offset=".0972" stop-color="#000080"/><stop offset=".1022" stop-color="#00009c"/><stop offset=".1072" stop-color="#0000c2"/><stop offset=".1122" stop-color="#0000e0"/><stop offset=".1172" stop-color="#0000fc"/><stop offset=".1222" stop-color="#0023ff"/><stop offset=".1272" stop-color="#0062ff"/><stop offset=".1322" stop-color="#00a2ff"/><stop offset=".1372" stop-color="#00c5ff"/><stop offset=".1422" stop-color="#00d2ff"/><stop offset=".1471" stop-color="#00e1ff"/><stop offset=".1521" stop-color="#00f9ff"/><stop offset=".1571" stop-color="#1affe5"/><stop offset=".1621" stop-color="#45ffba"/><stop offset=".1671" stop-color="#8fff70"/><stop offset=".1700" stop-color="#feff01"/><stop offset=".2487" stop-color="#f9ff06"/><stop offset=".2503" stop-color="#8cff73"/><stop offset=".2549" stop-color="#2dffd2"/><stop offset=".2595" stop-color="#0cfff3"/><stop offset=".2641" stop-color="#00ebff"/><stop offset=".2686" stop-color="#00d6ff"/><stop offset=".2732" stop-color="#00c3ff"/><stop offset=".2778" stop-color="#00a2ff"/><stop offset=".2824" stop-color="#0080ff"/><stop offset=".2870" stop-color="#0076ff"/><stop offset=".2915" stop-color="#008aff"/><stop offset=".2961" stop-color="#00a9ff"/><stop offset=".3007" stop-color="#00c4ff"/><stop offset=".3053" stop-color="#00dbff"/><stop offset=".3098" stop-color="#00eaff"/><stop offset=".3144" stop-color="#00f1ff"/><stop offset=".3190" stop-color="#00f3ff"/><stop offset=".3236" stop-color="#00fdff"/><stop offset=".3282" stop-color="#1cffe3"/><stop offset=".3327" stop-color="#56ffa9"/><stop offset=".3361" stop-color="#d0ff2f"/><stop offset=".3368" stop-color="#fffa00"/><stop offset=".5820" stop-color="#fffa00"/><stop offset=".5841" stop-color="#b0ff4f"/><stop offset=".5890" stop-color="#5bffa4"/><stop offset=".5940" stop-color="#3bffc4"/><stop offset=".5990" stop-color="#27ffd8"/><stop offset=".6040" stop-color="#13ffec"/><stop offset=".6090" stop-color="#00feff"/><stop offset=".6140" stop-color="#00eaff"/><stop offset=".6190" stop-color="#00beff"/><stop offset=".6240" stop-color="#0099ff"/><stop offset=".6290" stop-color="#007aff"/><stop offset=".6340" stop-color="#0064ff"/><stop offset=".6390" stop-color="#0058ff"/><stop offset=".6440" stop-color="#004aff"/><stop offset=".6490" stop-color="#0032ff"/><stop offset=".6540" stop-color="#001dff"/><stop offset=".6590" stop-color="#000eff"/><stop offset=".6639" stop-color="#0005ff"/><stop offset=".6689" stop-color="#0000ff"/><stop offset=".6739" stop-color="#0000fb"/><stop offset=".6789" stop-color="#0000f6"/><stop offset=".6839" stop-color="#0007ff"/><stop offset=".6889" stop-color="#002aff"/><stop offset=".6939" stop-color="#0052ff"/><stop offset=".6989" stop-color="#0073ff"/><stop offset=".7039" stop-color="#008dff"/><stop offset=".7089" stop-color="#00a8ff"/><stop offset=".7139" stop-color="#00bdff"/><stop offset=".7189" stop-color="#00c6ff"/><stop offset=".7239" stop-color="#00d5ff"/><stop offset=".7289" stop-color="#00f5ff"/><stop offset=".7338" stop-color="#10ffef"/><stop offset=".7388" stop-color="#29ffd6"/><stop offset=".7438" stop-color="#5dffa2"/><stop offset=".7488" stop-color="#d9ff26"/><stop offset=".7496" stop-color="#f8ff07"/><stop offset=".8288" stop-color="#f4ff0b"/><stop offset=".8308" stop-color="#b6ff49"/><stop offset=".8358" stop-color="#4fffb0"/><stop offset=".8408" stop-color="#20ffdf"/><stop offset=".8458" stop-color="#05fffa"/><stop offset=".8508" stop-color="#00edff"/><stop offset=".8558" stop-color="#00d7ff"/><stop offset=".8608" stop-color="#00c4ff"/><stop offset=".8658" stop-color="#00aaff"/><stop offset=".8707" stop-color="#0086ff"/><stop offset=".8757" stop-color="#0062ff"/><stop offset=".8807" stop-color="#003fff"/><stop offset=".8857" stop-color="#000aff"/><stop offset=".8907" stop-color="#0000e0"/><stop offset=".8957" stop-color="#0000c5"/><stop offset=".9007" stop-color="#0000bb"/><stop offset=".9057" stop-color="#0000bc"/><stop offset=".9107" stop-color="#0000bf"/><stop offset=".9157" stop-color="#0000c1"/><stop offset=".9207" stop-color="#0000c4"/><stop offset=".9257" stop-color="#0000c8"/><stop offset=".9307" stop-color="#0000c5"/><stop offset=".9357" stop-color="#0000b5"/><stop offset=".9407" stop-color="#00009d"/><stop offset=".9456" stop-color="#000084"/><stop offset=".9506" stop-color="#000080"/><stop offset=".9993" stop-color="#000080"/></linearGradient>
<linearGradient id="r51"><stop offset=".0007" stop-color="#0009ff"/><stop offset=".0111" stop-color="#0000fa"/><stop offset=".0215" stop-color="#0012ff"/><stop offset=".0319" stop-color="#0010ff"/><stop offset=".0423" stop-color="#001cff"/><stop offset=".0473" stop-color="#002aff"/><stop offset=".0523" stop-color="#0000f4"/><stop offset=".0573" stop-color="#0003ff"/><stop offset=".0623" stop-color="#0001ff"/><stop offset=".0673" stop-color="#001bff"/><stop offset=".0722" stop-color="#0017ff"/><stop offset=".0772" stop-color="#0026ff"/><stop offset=".0822" stop-color="#0020ff"/><stop offset=".0872" stop-color="#0020ff"/><stop offset=".0922" stop-color="#0012ff"/><stop offset=".0972" stop-color="#0000fa"/><stop offset=".1022" stop-color="#0027ff"/><stop offset=".1072" stop-color="#0022ff"/><stop offset=".1122" stop-color="#002bff"/><stop offset=".1172" stop-color="#0032ff"/><stop offset=".1222" stop-color="#0047ff"/><stop offset=".1272" stop-color="#007cff"/><stop offset=".1322" stop-color="#00b6ff"/><stop offset=".1372" stop-color="#00e5ff"/><stop offset=".1422" stop-color="#00f9ff"/><stop offset=".1471" stop-color="#11ffee"/><stop offset=".1521" stop-color="#2cffd3"/><stop offset=".1571" stop-color="#43ffbc"/><stop offset=".1621" stop-color="#5fffa0"/><stop offset=".1671" stop-color="#9fff60"/><stop offset=".1700" stop-color="#f2ff0d"/><stop offset=".2487" stop-color="#fffa00"/><stop offset=".2503" stop-color="#b8ff47"/><stop offset=".2549" stop-color="#48ffb7"/><stop offset=".2595" stop-color="#29ffd6"/><stop offset=".2641" stop-color="#17ffe8"/><stop offset=".2686" stop-color="#0ffff0"/><stop offset=".2732" stop-color="#12ffed"/><stop offset=".2778" stop-color="#1fffe0"/><stop offset=".2824" stop-color="#2affd5"/><stop offset=".2870" stop-color="#24ffdb"/><stop offset=".2915" stop-color="#0efff1"/><stop offset=".2961" stop-color="#00ffff"/><stop offset=".3007" stop-color="#01fffe"/><stop offset=".3053" stop-color="#06fff9"/><stop offset=".3098" stop-color="#0afff5"/><stop offset=".3144" stop-color="#12ffed"/><stop offset=".3190" stop-color="#21ffde"/><stop offset=".3236" stop-color="#3fffc0"/><stop offset=".3282" stop-color="#6aff95"/><stop offset=".3327" stop-color="#b6ff49"/><stop offset=".3361" stop-color="#dbff24"/><stop offset=".3368" stop-color="#fffa00"/><stop offset=".5820" stop-color="#fffa00"/><stop offset=".5841" stop-color="#bdff42"/><stop offset=".5890" stop-color="#6dff92"/><stop offset=".5940" stop-color="#46ffb9"/><stop offset=".5990" stop-color="#31ffce"/><stop offset=".6040" stop-color="#1dffe2"/><stop offset=".6090" stop-color="#0bfff4"/><stop offset=".6140" stop-color="#00ffff"/><stop offset=".6190" stop-color="#00e9ff"/><stop offset=".6240" stop-color="#00b1ff"/><stop offset=".6290" stop-color="#007eff"/><stop offset=".6340" stop-color="#0058ff"/><stop offset=".6390" stop-color="#003fff"/><stop offset=".6440" stop-color="#002bff"/><stop offset=".6490" stop-color="#001fff"/><stop offset=".6540" stop-color="#0024ff"/><stop offset=".6590" stop-color="#0020ff"/><stop offset=".6639" stop-color="#0021ff"/><stop offset=".6689" stop-color="#0019ff"/><stop offset=".6739" stop-color="#001aff"/><stop offset=".6789" stop-color="#0030ff"/><stop offset=".6839" stop-color="#0026ff"/><stop offset=".6889" stop-color="#0027ff"/><stop offset=".6939" stop-color="#001cff"/><stop offset=".6989" stop-color="#001aff"/><stop offset=".7039" stop-color="#0036ff"/><stop offset=".7089" stop-color="#006dff"/><stop offset=".7139" stop-color="#004fff"/><stop offset=".7189" stop-color="#007fff"/><stop offset=".7239" stop-color="#00a4ff"/><stop offset=".7289" stop-color="#00beff"/><stop offset=".7338" stop-color="#00e3ff"/><stop offset=".7388" stop-color="#18ffe7"/><stop offset=".7438" stop-color="#57ffa8"/><stop offset=".7488" stop-color="#dbff24"/><stop offset=".7496" stop-color="#fffa00"/><stop offset=".8288" stop-color="#ecff13"/><stop offset=".8308" stop-color="#c4ff3b"/><stop offset=".8358" stop-color="#6bff94"/><stop offset=".8408" stop-color="#37ffc8"/><stop offset=".8458" stop-color="#0ffff0"/><stop offset=".8508" stop-color="#00e8ff"/><stop offset=".8558" stop-color="#00cbff"/><stop offset=".8608" stop-color="#00b3ff"/><stop offset=".8658" stop-color="#0093ff"/><stop offset=".8707" stop-color="#0075ff"/><stop offset=".8757" stop-color="#006cff"/><stop offset=".8807" stop-color="#006dff"/><stop offset=".8857" stop-color="#004bff"/><stop offset=".8907" stop-color="#0028ff"/><stop offset=".8957" stop-color="#000cff"/><stop offset=".9007" stop-color="#0021ff"/><stop offset=".9057" stop-color="#000bff"/><stop offset=".9107" stop-color="#0018ff"/><stop offset=".9157" stop-color="#0022ff"/><stop offset=".9207" stop-color="#0002ff"/><stop offset=".9257" stop-color="#0024ff"/><stop offset=".9307" stop-color="#000cff"/><stop offset=".9357" stop-color="#0020ff"/><stop offset=".9407" stop-color="#000eff"/><stop offset=".9456" stop-color="#001eff"/><stop offset=".9506" stop-color="#003aff"/><stop offset=".9556" stop-color="#0013ff"/><stop offset=".9577" stop-color="#0027ff"/><stop offset=".9681" stop-color="#0027ff"/><stop offset=".9785" stop-color="#0026ff"/><stop offset=".9889" stop-color="#0032ff"/><stop offset=".9993" stop-color="#0015ff"/><stop offset=".9993" stop-color="#0019ff"/></linearGradient>
<linearGradient id="r52"><stop offset=".0007" stop-color="#0098ff"/><stop offset=".0111" stop-color="#008aff"/><stop offset=".0215" stop-color="#0096ff"/><stop offset=".0319" stop-color="#0085ff"/><stop offset=".0423" stop-color="#0097ff"/><stop offset=".0473" stop-color="#0077ff"/><stop offset=".0523" stop-color="#0067ff"/><stop offset=".0573" stop-color="#0089ff"/><stop offset=".0623" stop-color="#008cff"/><stop offset=".0673" stop-color="#007dff"/><stop offset=".0722" stop-color="#0077ff"/><stop offset=".0772" stop-color="#0080ff"/><stop offset=".0822" stop-color="#0071ff"/><stop offset=".0872" stop-color="#0079ff"/><stop offset=".0922" stop-color="#007cff"/><stop offset=".0972" stop-color="#0074ff"/><stop offset=".1022" stop-color="#008dff"/><stop offset=".1072" stop-color="#007dff"/><stop offset=".1122" stop-color="#0088ff"/><stop offset=".1172" stop-color="#008bff"/><stop offset=".1222" stop-color="#00a2ff"/><stop offset=".1272" stop-color="#00a1ff"/><stop offset=".1322" stop-color="#00a3ff"/><stop offset=".1372" stop-color="#00bcff"/><stop offset=".1422" stop-color="#00bcff"/><stop offset=".1471" stop-color="#00dfff"/><stop offset=".1521" stop-color="#01fffe"/><stop offset=".1571" stop-color="#29ffd6"/><stop offset=".1621" stop-color="#53ffac"/><stop offset=".1671" stop-color="#9cff63"/><stop offset=".1700" stop-color="#f9ff06"/><stop offset=".2487" stop-color="#fffa00"/><stop offset=".2503" stop-color="#82ff7d"/><stop offset=".2549" stop-color="#41ffbe"/><stop offset=".2595" stop-color="#25ffda"/><stop offset=".2641" stop-color="#08fff7"/><stop offset=".2686" stop-color="#00f4ff"/><stop offset=".2732" stop-color="#00f5ff"/><stop offset=".2778" stop-color="#00e1ff"/><stop offset=".2824" stop-color="#00baff"/><stop offset=".2870" stop-color="#00c9ff"/><stop offset=".2915" stop-color="#00afff"/><stop offset=".2961" stop-color="#00c5ff"/><stop offset=".3007" stop-color="#00d3ff"/><stop offset=".3053" stop-color="#00d1ff"/><stop offset=".3098" stop-color="#00e3ff"/><stop offset=".3144" stop-color="#00d9ff"/><stop offset=".3190" stop-color="#00e4ff"/><stop offset=".3236" stop-color="#00edff"/><stop offset=".3282" stop-color="#2bffd4"/><stop offset=".3327" stop-color="#8fff70"/><stop offset=".3361" stop-color="#d3ff2c"/><stop offset=".3368" stop-color="#e4ff1b"/><stop offset=".5820" stop-color="#e8ff17"/><stop offset=".5841" stop-color="#76ff89"/><stop offset=".5890" stop-color="#11ffee"/><stop offset=".5940" stop-color="#00efff"/><stop offset=".5990" stop-color="#00e5ff"/><stop offset=".6040" stop-color="#00e0ff"/><stop offset=".6090" stop-color="#00d5ff"/><stop offset=".6140" stop-color="#00ceff"/><stop offset=".6190" stop-color="#00d2ff"/><stop offset=".6240" stop-color="#00aeff"/><stop offset=".6290" stop-color="#009fff"/><stop offset=".6340" stop-color="#009bff"/><stop offset=".6390" stop-color="#0088ff"/><stop offset=".6440" stop-color="#0085ff"/><stop offset=".6490" stop-color="#0086ff"/><stop offset=".6540" stop-color="#007aff"/><stop offset=".6590" stop-color="#008fff"/><stop offset=".6639" stop-color="#0058ff"/><stop offset=".6689" stop-color="#0081ff"/><stop offset=".6739" stop-color="#008bff"/><stop offset=".6789" stop-color="#007fff"/><stop offset=".6839" stop-color="#006bff"/><stop offset=".6889" stop-color="#0078ff"/><stop offset=".6939" stop-color="#0065ff"/><stop offset=".6989" stop-color="#0096ff"/><stop offset=".7039" stop-color="#00abff"/><stop offset=".7089" stop-color="#00a3ff"/><stop offset=".7139" stop-color="#00afff"/><stop offset=".7189" stop-color="#00c9ff"/><stop offset=".7239" stop-color="#00d5ff"/><stop offset=".7289" stop-color="#01fffe"/><stop offset=".7338" stop-color="#27ffd8"/><stop offset=".7388" stop-color="#45ffba"/><stop offset=".7438" stop-color="#72ff8d"/><stop offset=".7488" stop-color="#dbff24"/><stop offset=".7496" stop-color="#fffa00"/><stop offset=".8288" stop-color="#f4ff0b"/><stop offset=".8308" stop-color="#ccff33"/><stop offset=".8358" stop-color="#78ff87"/><stop offset=".8408" stop-color="#55ffaa"/><stop offset=".8458" stop-color="#42ffbd"/><stop offset=".8508" stop-color="#32ffcd"/><stop offset=".8558" stop-color="#22ffdd"/><stop offset=".8608" stop-color="#12ffed"/><stop offset=".8658" stop-color="#00fbff"/><stop offset=".8707" stop-color="#00d5ff"/><stop offset=".8757" stop-color="#00a8ff"/><stop offset=".8807" stop-color="#0089ff"/><stop offset=".8857" stop-color="#0093ff"/><stop offset=".8907" stop-color="#008eff"/><stop offset=".8957" stop-color="#0075ff"/><stop offset=".9007" stop-color="#0090ff"/><stop offset=".9057" stop-color="#0083ff"/><stop offset=".9107" stop-color="#0080ff"/><stop offset=".9157" stop-color="#007bff"/><stop offset=".9207" stop-color="#009aff"/><stop offset=".9257" stop-color="#0083ff"/><stop offset=".9307" stop-color="#0093ff"/><stop offset=".9357" stop-color="#006eff"/><stop offset=".9407" stop-color="#009bff"/><stop offset=".9456" stop-color="#0071ff"/><stop offset=".9506" stop-color="#007eff"/><stop offset=".9556" stop-color="#0069ff"/><stop offset=".9577" stop-color="#0085ff"/><stop offset=".9681" stop-color="#0088ff"/><stop offset=".9785" stop-color="#007eff"/><stop offset=".9889" stop-color="#0086ff"/><stop offset=".9993" stop-color="#007eff"/><stop offset=".9993" stop-color="#007eff"/></linearGradient>
<linearGradient id="r53"><stop offset=".0007" stop-color="#00fcff"/><stop offset=".0111" stop-color="#00e5ff"/><stop offset=".0215" stop-color="#00eaff"/><stop offset=".0319" stop-color="#00e9ff"/><stop offset=".0423" stop-color="#00f1ff"/><stop offset=".0473" stop-color="#00e9ff"/><stop offset=".0523" stop-color="#00ecff"/><stop offset=".0573" stop-color="#00d3ff"/><stop offset=".0623" stop-color="#00fbff"/><stop offset=".0673" stop-color="#00deff"/><stop offset=".0722" stop-color="#00f6ff"/><stop offset=".0772" stop-color="#00f5ff"/><stop offset=".0822" stop-color="#0ffff0"/><stop offset=".0872" stop-color="#00f0ff"/><stop offset=".0922" stop-color="#00f0ff"/><stop offset=".0972" stop-color="#00fdff"/><stop offset=".1022" stop-color="#00f1ff"/><stop offset=".1072" stop-color="#00cbff"/><stop offset=".1122" stop-color="#00f5ff"/><stop offset=".1172" stop-color="#00f5ff"/><stop offset=".1222" stop-color="#14ffeb"/><stop offset=".1272" stop-color="#13ffec"/><stop offset=".1322" stop-color="#17ffe8"/><stop offset=".1372" stop-color="#29ffd6"/><stop offset=".1422" stop-color="#3fffc0"/><stop offset=".1471" stop-color="#4fffb0"/><stop offset=".1521" stop-color="#58ffa7"/><stop offset=".1571" stop-color="#79ff86"/><stop offset=".1621" stop-color="#6bff94"/><stop offset=".1671" stop-color="#a9ff56"/><stop offset=".1700" stop-color="#fffa00"/><stop offset=".2487" stop-color="#efff10"/><stop offset=".2503" stop-color="#a3ff5c"/><stop offset=".2549" stop-color="#69ff96"/><stop offset=".2595" stop-color="#77ff88"/><stop offset=".2641" stop-color="#4affb5"/><stop offset=".2686" stop-color="#59ffa6"/><stop offset=".2732" stop-color="#4bffb4"/><stop offset=".2778" stop-color="#55ffaa"/><stop offset=".2824" stop-color="#4effb1"/><stop offset=".2870" stop-color="#2dffd2"/><stop offset=".2915" stop-color="#1effe1"/><stop offset=".2961" stop-color="#1dffe2"/><stop offset=".3007" stop-color="#29ffd6"/><stop offset=".3053" stop-color="#37ffc8"/><stop offset=".3098" stop-color="#44ffbb"/><stop offset=".3144" stop-color="#47ffb8"/><stop offset=".3190" stop-color="#36ffc9"/><stop offset=".3236" stop-color="#70ff8f"/><stop offset=".3282" stop-color="#57ffa8"/><stop offset=".3327" stop-color="#83ff7c"/><stop offset=".3361" stop-color="#d0ff2f"/><stop offset=".3368" stop-color="#f8ff07"/><stop offset=".5820" stop-color="#fffa00"/><stop offset=".5841" stop-color="#bbff44"/><stop offset=".5890" stop-color="#74ff8b"/><stop offset=".5940" stop-color="#50ffaf"/><stop offset=".5990" stop-color="#5dffa2"/><stop offset=".6040" stop-color="#5affa5"/><stop offset=".6090" stop-color="#45ffba"/><stop offset=".6140" stop-color="#19ffe6"/><stop offset=".6190" stop-color="#20ffdf"/><stop offset=".6240" stop-color="#15ffea"/><stop offset=".6290" stop-color="#2bffd4"/><stop offset=".6340" stop-color="#0bfff4"/><stop offset=".6390" stop-color="#00faff"/><stop offset=".6440" stop-color="#00e6ff"/><stop offset=".6490" stop-color="#00ffff"/><stop offset=".6540" stop-color="#00f7ff"/><stop offset=".6590" stop-color="#06fff9"/><stop offset=".6639" stop-color="#0dfff2"/><stop offset=".6689" stop-color="#00f3ff"/><stop offset=".6739" stop-color="#00ecff"/><stop offset=".6789" stop-color="#00e7ff"/><stop offset=".6839" stop-color="#00e2ff"/><stop offset=".6889" stop-color="#00f1ff"/><stop offset=".6939" stop-color="#05fffa"/><stop offset=".6989" stop-color="#1affe5"/><stop offset=".7039" stop-color="#1affe5"/><stop offset=".7089" stop-color="#1dffe2"/><stop offset=".7139" stop-color="#4affb5"/><stop offset=".7189" stop-color="#4cffb3"/><stop offset=".7239" stop-color="#3fffc0"/><stop offset=".7289" stop-color="#49ffb6"/><stop offset=".7338" stop-color="#5affa5"/><stop offset=".7388" stop-color="#5fffa0"/><stop offset=".7438" stop-color="#8aff75"/><stop offset=".7488" stop-color="#dbff24"/><stop offset=".7496" stop-color="#fffa00"/><stop offset=".8288" stop-color="#fcff03"/><stop offset=".8308" stop-color="#d2ff2d"/><stop offset=".8358" stop-color="#78ff87"/><stop offset=".8408" stop-color="#7bff84"/><stop offset=".8458" stop-color="#60ff9f"/><stop offset=".8508" stop-color="#67ff98"/><stop offset=".8558" stop-color="#3bffc4"/><stop offset=".8608" stop-color="#1fffe0"/><stop offset=".8658" stop-color="#48ffb7"/><stop offset=".8707" stop-color="#38ffc7"/><stop offset=".8757" stop-color="#1affe5"/><stop offset=".8807" stop-color="#00fdff"/><stop offset=".8857" stop-color="#03fffc"/><stop offset=".8907" stop-color="#00ebff"/><stop offset=".8957" stop-color="#00e4ff"/><stop offset=".9007" stop-color="#00e6ff"/><stop offset=".9057" stop-color="#00e0ff"/><stop offset=".9107" stop-color="#00f6ff"/><stop offset=".9157" stop-color="#00e5ff"/><stop offset=".9207" stop-color="#00fdff"/><stop offset=".9257" stop-color="#02fffd"/><stop offset=".9307" stop-color="#0efff1"/><stop offset=".9357" stop-color="#00daff"/><stop offset=".9407" stop-color="#08fff7"/><stop offset=".9456" stop-color="#00f2ff"/><stop offset=".9506" stop-color="#00ddff"/><stop offset=".9556" stop-color="#00e7ff"/><stop offset=".9577" stop-color="#00f9ff"/><stop offset=".9681" stop-color="#00dcff"/><stop offset=".9785" stop-color="#00e8ff"/><stop offset=".9889" stop-color="#00e3ff"/><stop offset=".9993" stop-color="#00fbff"/><stop offset=".9993" stop-color="#00e5ff"/></linearGradient>
<linearGradient id="r54"><stop offset=".0007" stop-color="#17ffe8"/><stop offset=".0111" stop-color="#3cffc3"/><stop offset=".0215" stop-color="#23ffdc"/><stop offset=".0319" stop-color="#4dffb2"/><stop offset=".0423" stop-color="#4affb5"/><stop offset=".0473" stop-color="#12ffed"/><stop offset=".0523" stop-color="#2dffd2"/><stop offset=".0573" stop-color="#35ffca"/><stop offset=".0623" stop-color="#3cffc3"/><stop offset=".0673" stop-color="#47ffb8"/><stop offset=".0722" stop-color="#2effd1"/><stop offset=".0772" stop-color="#37ffc8"/><stop offset=".0822" stop-color="#33ffcc"/><stop offset=".0872" stop-color="#2effd1"/><stop offset=".0922" stop-color="#32ffcd"/><stop offset=".0972" stop-color="#25ffda"/><stop offset=".1022" stop-color="#46ffb9"/><stop offset=".1072" stop-color="#3bffc4"/><stop offset=".1122" stop-color="#31ffce"/><stop offset=".1172" stop-color="#3affc5"/><stop offset=".1222" stop-color="#4fffb0"/><stop offset=".1272" stop-color="#4effb1"/><stop offset=".1322" stop-color="#70ff8f"/><stop offset=".1372" stop-color="#74ff8b"/><stop offset=".1422" stop-color="#8dff72"/><stop offset=".1471" stop-color="#9aff65"/><stop offset=".1521" stop-color="#baff45"/><stop offset=".1571" stop-color="#a0ff5f"/><stop offset=".1621" stop-color="#93ff6c"/><stop offset=".1671" stop-color="#c5ff3a"/><stop offset=".1700" stop-color="#fffa00"/><stop offset=".2487" stop-color="#fffa00"/><stop offset=".2503" stop-color="#dbff24"/><stop offset=".2549" stop-color="#bdff42"/><stop offset=".2595" stop-color="#9dff62"/><stop offset=".2641" stop-color="#afff50"/><stop offset=".2686" stop-color="#a5ff5a"/><stop offset=".2732" stop-color="#85ff7a"/><stop offset=".2778" stop-color="#73ff8c"/><stop offset=".2824" stop-color="#63ff9c"/><stop offset=".2870" stop-color="#74ff8b"/><stop offset=".2915" stop-color="#5affa5"/><stop offset=".2961" stop-color="#64ff9b"/><stop offset=".3007" stop-color="#6aff95"/><stop offset=".3053" stop-color="#67ff98"/><stop offset=".3098" stop-color="#6bff94"/><stop offset=".3144" stop-color="#8cff73"/><stop offset=".3190" stop-color="#a4ff5b"/><stop offset=".3236" stop-color="#a5ff5a"/><stop offset=".3282" stop-color="#9fff60"/><stop offset=".3327" stop-color="#c6ff39"/><stop offset=".3361" stop-color="#dbff24"/><stop offset=".3368" stop-color="#fffa00"/><stop offset=".5820" stop-color="#fbff04"/><stop offset=".5841" stop-color="#a1ff5e"/><stop offset=".5890" stop-color="#afff50"/><stop offset=".5940" stop-color="#a5ff5a"/><stop offset=".5990" stop-color="#9eff61"/><stop offset=".6040" stop-color="#84ff7b"/><stop offset=".6090" stop-color="#76ff89"/><stop offset=".6140" stop-color="#66ff99"/><stop offset=".6190" stop-color="#5affa5"/><stop offset=".6240" stop-color="#50ffaf"/><stop offset=".6290" stop-color="#52ffad"/><stop offset=".6340" stop-color="#32ffcd"/><stop offset=".6390" stop-color="#3affc5"/><stop offset=".6440" stop-color="#32ffcd"/><stop offset=".6490" stop-color="#3effc1"/><stop offset=".6540" stop-color="#31ffce"/><stop offset=".6590" stop-color="#43ffbc"/><stop offset=".6639" stop-color="#25ffda"/><stop offset=".6689" stop-color="#3bffc4"/><stop offset=".6739" stop-color="#37ffc8"/><stop offset=".6789" stop-color="#2fffd0"/><stop offset=".6839" stop-color="#1affe5"/><stop offset=".6889" stop-color="#23ffdc"/><stop offset=".6939" stop-color="#34ffcb"/><stop offset=".6989" stop-color="#48ffb7"/><stop offset=".7039" stop-color="#64ff9b"/><stop offset=".7089" stop-color="#7fff80"/><stop offset=".7139" stop-color="#59ffa6"/><stop offset=".7189" stop-color="#6cff93"/><stop offset=".7239" stop-color="#74ff8b"/><stop offset=".7289" stop-color="#85ff7a"/><stop offset=".7338" stop-color="#a1ff5e"/><stop offset=".7388" stop-color="#8dff72"/><stop offset=".7438" stop-color="#9eff61"/><stop offset=".7488" stop-color="#d2ff2d"/><stop offset=".7496" stop-color="#fffa00"/><stop offset=".8288" stop-color="#fffa00"/><stop offset=".8308" stop-color="#daff25"/><stop offset=".8358" stop-color="#a2ff5d"/><stop offset=".8408" stop-color="#c1ff3e"/><stop offset=".8458" stop-color="#a3ff5c"/><stop offset=".8508" stop-color="#90ff6f"/><stop offset=".8558" stop-color="#9dff62"/><stop offset=".8608" stop-color="#84ff7b"/><stop offset=".8658" stop-color="#74ff8b"/><stop offset=".8707" stop-color="#56ffa9"/><stop offset=".8757" stop-color="#59ffa6"/><stop offset=".8807" stop-color="#3effc1"/><stop offset=".8857" stop-color="#2effd1"/><stop offset=".8907" stop-color="#2cffd3"/><stop offset=".8957" stop-color="#3affc5"/><stop offset=".9007" stop-color="#19ffe6"/><stop offset=".9057" stop-color="#3bffc4"/><stop offset=".9107" stop-color="#30ffcf"/><stop offset=".9157" stop-color="#4bffb4"/><stop offset=".9207" stop-color="#2cffd3"/><stop offset=".9257" stop-color="#34ffcb"/><stop offset=".9307" stop-color="#0ffff0"/><stop offset=".9357" stop-color="#3fffc0"/><stop offset=".9407" stop-color="#24ffdb"/><stop offset=".9456" stop-color="#3cffc3"/><stop offset=".9506" stop-color="#33ffcc"/><stop offset=".9556" stop-color="#3fffc0"/><stop offset=".9577" stop-color="#36ffc9"/><stop offset=".9681" stop-color="#2effd1"/><stop offset=".9785" stop-color="#2effd1"/><stop offset=".9889" stop-color="#30ffcf"/><stop offset=".9993" stop-color="#37ffc8"/><stop offset=".9993" stop-color="#29ffd6"/></linearGradient>
<linearGradient id="r55"><stop offset=".0007" stop-color="#39ffc6"/><stop offset=".0111" stop-color="#46ffb9"/><stop offset=".0215" stop-color="#3effc1"/><stop offset=".0319" stop-color="#4bffb4"/><stop offset=".0423" stop-color="#39ffc6"/><stop offset=".0473" stop-color="#51ffae"/><stop offset=".0523" stop-color="#4effb1"/><stop offset=".0573" stop-color="#45ffba"/><stop offset=".0623" stop-color="#4bffb4"/><stop offset=".0673" stop-color="#51ffae"/><stop offset=".0722" stop-color="#3dffc2"/><stop offset=".0772" stop-color="#4dffb2"/><stop offset=".0822" stop-color="#46ffb9"/><stop offset=".0872" stop-color="#3dffc2"/><stop offset=".0922" stop-color="#44ffbb"/><stop offset=".0972" stop-color="#35ffca"/><stop offset=".1022" stop-color="#51ffae"/><stop offset=".1072" stop-color="#4bffb4"/><stop offset=".1122" stop-color="#43ffbc"/><stop offset=".1172" stop-color="#62ff9d"/><stop offset=".1222" stop-color="#72ff8d"/><stop offset=".1272" stop-color="#70ff8f"/><stop offset=".1322" stop-color="#6cff93"/><stop offset=".1372" stop-color="#8aff75"/><stop offset=".1422" stop-color="#9aff65"/><stop offset=".1471" stop-color="#a7ff58"/><stop offset=".1521" stop-color="#93ff6c"/><stop offset=".1571" stop-color="#aeff51"/><stop offset=".1621" stop-color="#b7ff48"/><stop offset=".1671" stop-color="#dbff24"/><stop offset=".1700" stop-color="#f0ff0f"/><stop offset=".2487" stop-color="#fffa00"/><stop offset=".2503" stop-color="#c9ff36"/><stop offset=".2549" stop-color="#d2ff2d"/><stop offset=".2595" stop-color="#c3ff3c"/><stop offset=".2641" stop-color="#b9ff46"/><stop offset=".2686" stop-color="#84ff7b"/><stop offset=".2732" stop-color="#7fff80"/><stop offset=".2778" stop-color="#a9ff56"/><stop offset=".2824" stop-color="#6cff93"/><stop offset=".2870" stop-color="#61ff9e"/><stop offset=".2915" stop-color="#61ff9e"/><stop offset=".2961" stop-color="#72ff8d"/><stop offset=".3007" stop-color="#83ff7c"/><stop offset=".3053" stop-color="#9aff65"/><stop offset=".3098" stop-color="#85ff7a"/><stop offset=".3144" stop-color="#8dff72"/><stop offset=".3190" stop-color="#9dff62"/><stop offset=".3236" stop-color="#c9ff36"/><stop offset=".3282" stop-color="#ccff33"/><stop offset=".3327" stop-color="#f1ff0e"/><stop offset=".3361" stop-color="#dbff24"/><stop offset=".3368" stop-color="#fffc00"/><stop offset=".5820" stop-color="#e4ff1b"/><stop offset=".5841" stop-color="#d4ff2b"/><stop offset=".5890" stop-color="#c9ff36"/><stop offset=".5940" stop-color="#bbff44"/><stop offset=".5990" stop-color="#a7ff58"/><stop offset=".6040" stop-color="#bcff43"/><stop offset=".6090" stop-color="#96ff69"/><stop offset=".6140" stop-color="#7bff84"/><stop offset=".6190" stop-color="#83ff7c"/><stop offset=".6240" stop-color="#65ff9a"/><stop offset=".6290" stop-color="#53ffac"/><stop offset=".6340" stop-color="#3effc1"/><stop offset=".6390" stop-color="#62ff9d"/><stop offset=".6440" stop-color="#3dffc2"/><stop offset=".6490" stop-color="#43ffbc"/><stop offset=".6540" stop-color="#2fffd0"/><stop offset=".6590" stop-color="#53ffac"/><stop offset=".6639" stop-color="#5dffa2"/><stop offset=".6689" stop-color="#53ffac"/><stop offset=".6739" stop-color="#33ffcc"/><stop offset=".6789" stop-color="#33ffcc"/><stop offset=".6839" stop-color="#51ffae"/><stop offset=".6889" stop-color="#39ffc6"/><stop offset=".6939" stop-color="#45ffba"/><stop offset=".6989" stop-color="#5effa1"/><stop offset=".7039" stop-color="#6dff92"/><stop offset=".7089" stop-color="#6dff92"/><stop offset=".7139" stop-color="#8cff73"/><stop offset=".7189" stop-color="#8fff70"/><stop offset=".7239" stop-color="#96ff69"/><stop offset=".7289" stop-color="#b3ff4c"/><stop offset=".7338" stop-color="#8eff71"/><stop offset=".7388" stop-color="#b1ff4e"/><stop offset=".7438" stop-color="#deff21"/><stop offset=".7488" stop-color="#d1ff2e"/><stop offset=".7496" stop-color="#e9ff16"/><stop offset=".8288" stop-color="#fcff03"/><stop offset=".8308" stop-color="#d7ff28"/><stop offset=".8358" stop-color="#e5ff1a"/><stop offset=".8408" stop-color="#beff41"/><stop offset=".8458" stop-color="#bfff40"/><stop offset=".8508" stop-color="#81ff7e"/><stop offset=".8558" stop-color="#8eff71"/><stop offset=".8608" stop-color="#a6ff59"/><stop offset=".8658" stop-color="#6eff91"/><stop offset=".8707" stop-color="#71ff8e"/><stop offset=".8757" stop-color="#6eff91"/><stop offset=".8807" stop-color="#5fffa0"/><stop offset=".8857" stop-color="#4affb5"/><stop offset=".8907" stop-color="#3dffc2"/><stop offset=".8957" stop-color="#4cffb3"/><stop offset=".9007" stop-color="#42ffbd"/><stop offset=".9057" stop-color="#32ffcd"/><stop offset=".9107" stop-color="#2cffd3"/><stop offset=".9157" stop-color="#44ffbb"/><stop offset=".9207" stop-color="#38ffc7"/><stop offset=".9257" stop-color="#4cffb3"/><stop offset=".9307" stop-color="#28ffd7"/><stop offset=".9357" stop-color="#35ffca"/><stop offset=".9407" stop-color="#1affe5"/><stop offset=".9456" stop-color="#3fffc0"/><stop offset=".9506" stop-color="#23ffdc"/><stop offset=".9556" stop-color="#2affd5"/><stop offset=".9577" stop-color="#44ffbb"/><stop offset=".9681" stop-color="#25ffda"/><stop offset=".9785" stop-color="#4bffb4"/><stop offset=".9889" stop-color="#43ffbc"/><stop offset=".9993" stop-color="#49ffb6"/><stop offset=".9993" stop-color="#4cffb3"/></linearGradient>
<linearGradient id="r56"><stop offset=".0007" stop-color="#00feff"/><stop offset=".0111" stop-color="#00f5ff"/><stop offset=".0215" stop-color="#0cfff3"/><stop offset=".0319" stop-color="#2dffd2"/><stop offset=".0423" stop-color="#06fff9"/><stop offset=".0473" stop-color="#00f7ff"/><stop offset=".0523" stop-color="#00fcff"/><stop offset=".0573" stop-color="#00eaff"/><stop offset=".0623" stop-color="#0afff5"/><stop offset=".0673" stop-color="#00f2ff"/><stop offset=".0722" stop-color="#0afff5"/><stop offset=".0772" stop-color="#1cffe3"/><stop offset=".0822" stop-color="#00eeff"/><stop offset=".0872" stop-color="#00f9ff"/><stop offset=".0922" stop-color="#11ffee"/><stop offset=".0972" stop-color="#1bffe4"/><stop offset=".1022" stop-color="#09fff6"/><stop offset=".1072" stop-color="#00f1ff"/><stop offset=".1122" stop-color="#0ffff0"/><stop offset=".1172" stop-color="#00f6ff"/><stop offset=".1222" stop-color="#11ffee"/><stop offset=".1272" stop-color="#3dffc2"/><stop offset=".1322" stop-color="#4dffb2"/><stop offset=".1372" stop-color="#4dffb2"/><stop offset=".1422" stop-color="#61ff9e"/><stop offset=".1471" stop-color="#56ffa9"/><stop offset=".1521" stop-color="#6bff94"/><stop offset=".1571" stop-color="#7aff85"/><stop offset=".1621" stop-color="#98ff67"/><stop offset=".1671" stop-color="#bfff40"/><stop offset=".1700" stop-color="#fffa00"/><stop offset=".2487" stop-color="#faff05"/><stop offset=".2503" stop-color="#9eff61"/><stop offset=".2549" stop-color="#9dff62"/><stop offset=".2595" stop-color="#64ff9b"/><stop offset=".2641" stop-color="#6bff94"/><stop offset=".2686" stop-color="#8aff75"/><stop offset=".2732" stop-color="#66ff99"/><stop offset=".2778" stop-color="#57ffa8"/><stop offset=".2824" stop-color="#4effb1"/><stop offset=".2870" stop-color="#32ffcd"/><stop offset=".2915" stop-color="#22ffdd"/><stop offset=".2961" stop-color="#3effc1"/><stop offset=".3007" stop-color="#57ffa8"/><stop offset=".3053" stop-color="#3effc1"/><stop offset=".3098" stop-color="#56ffa9"/><stop offset=".3144" stop-color="#62ff9d"/><stop offset=".3190" stop-color="#75ff8a"/><stop offset=".3236" stop-color="#87ff78"/><stop offset=".3282" stop-color="#b1ff4e"/><stop offset=".3327" stop-color="#a7ff58"/><stop offset=".3361" stop-color="#dbff24"/><stop offset=".3368" stop-color="#fffc00"/><stop offset=".5820" stop-color="#fffb00"/><stop offset=".5841" stop-color="#b5ff4a"/><stop offset=".5890" stop-color="#80ff7f"/><stop offset=".5940" stop-color="#8cff73"/><stop offset=".5990" stop-color="#7aff85"/><stop offset=".6040" stop-color="#5fffa0"/><stop offset=".6090" stop-color="#64ff9b"/><stop offset=".6140" stop-color="#4effb1"/><stop offset=".6190" stop-color="#3fffc0"/><stop offset=".6240" stop-color="#49ffb6"/><stop offset=".6290" stop-color="#00fbff"/><stop offset=".6340" stop-color="#14ffeb"/><stop offset=".6390" stop-color="#08fff7"/><stop offset=".6440" stop-color="#08fff7"/><stop offset=".6490" stop-color="#18ffe7"/><stop offset=".6540" stop-color="#00f6ff"/><stop offset=".6590" stop-color="#00efff"/><stop offset=".6639" stop-color="#10ffef"/><stop offset=".6689" stop-color="#25ffda"/><stop offset=".6739" stop-color="#21ffde"/><stop offset=".6789" stop-color="#1affe5"/><stop offset=".6839" stop-color="#0dfff2"/><stop offset=".6889" stop-color="#00f2ff"/><stop offset=".6939" stop-color="#36ffc9"/><stop offset=".6989" stop-color="#24ffdb"/><stop offset=".7039" stop-color="#26ffd9"/><stop offset=".7089" stop-color="#39ffc6"/><stop offset=".7139" stop-color="#3fffc0"/><stop offset=".7189" stop-color="#52ffad"/><stop offset=".7239" stop-color="#4fffb0"/><stop offset=".7289" stop-color="#61ff9e"/><stop offset=".7338" stop-color="#75ff8a"/><stop offset=".7388" stop-color="#85ff7a"/><stop offset=".7438" stop-color="#a3ff5c"/><stop offset=".7488" stop-color="#ceff31"/><stop offset=".7496" stop-color="#f9ff06"/><stop offset=".8288" stop-color="#faff05"/><stop offset=".8308" stop-color="#b3ff4c"/><stop offset=".8358" stop-color="#9cff63"/><stop offset=".8408" stop-color="#7dff82"/><stop offset=".8458" stop-color="#78ff87"/><stop offset=".8508" stop-color="#58ffa7"/><stop offset=".8558" stop-color="#87ff78"/><stop offset=".8608" stop-color="#4cffb3"/><stop offset=".8658" stop-color="#18ffe7"/><stop offset=".8707" stop-color="#40ffbf"/><stop offset=".8757" stop-color="#24ffdb"/><stop offset=".8807" stop-color="#01fffe"/><stop offset=".8857" stop-color="#30ffcf"/><stop offset=".8907" stop-color="#04fffb"/><stop offset=".8957" stop-color="#00ffff"/><stop offset=".9007" stop-color="#00faff"/><stop offset=".9057" stop-color="#22ffdd"/><stop offset=".9107" stop-color="#00e9ff"/><stop offset=".9157" stop-color="#1effe1"/><stop offset=".9207" stop-color="#00f7ff"/><stop offset=".9257" stop-color="#00f8ff"/><stop offset=".9307" stop-color="#1dffe2"/><stop offset=".9357" stop-color="#00faff"/><stop offset=".9407" stop-color="#00fdff"/><stop offset=".9456" stop-color="#00efff"/><stop offset=".9506" stop-color="#00ffff"/><stop offset=".9556" stop-color="#00f6ff"/><stop offset=".9577" stop-color="#00e2ff"/><stop offset=".9681" stop-color="#08fff7"/><stop offset=".9785" stop-color="#01fffe"/><stop offset=".9889" stop-color="#24ffdb"/><stop offset=".9993" stop-color="#2bffd4"/><stop offset=".9993" stop-color="#1cffe3"/></linearGradient><pattern id="spk" x="0" y="299" width="50" height="45" patternUnits="userSpaceOnUse"><rect width="50" height="45" fill="#ff6500"/><rect x="48" y="15" width="1" height="2" fill="#ff7600"/><rect x="7" y="29" width="1" height="3" fill="#ff4a00"/><rect x="18" y="19" width="1" height="4" fill="#ff6b00"/><rect x="37" y="9" width="1" height="3" fill="#ff6000"/><rect x="12" y="32" width="2" height="3" fill="#ff4200"/><rect x="37" y="41" width="3" height="3" fill="#ff7500"/><rect x="15" y="29" width="2" height="4" fill="#ff6200"/><rect x="26" y="11" width="3" height="4" fill="#ff8800"/><rect x="44" y="3" width="2" height="3" fill="#ff6700"/><rect x="14" y="15" width="1" height="4" fill="#ff9900"/><rect x="26" y="7" width="1" height="3" fill="#ff5300"/><rect x="46" y="8" width="3" height="4" fill="#ff8500"/><rect x="25" y="0" width="2" height="4" fill="#ff4800"/><rect x="17" y="19" width="2" height="4" fill="#ff4600"/><rect x="14" y="43" width="2" height="2" fill="#ff6500"/><rect x="35" y="13" width="1" height="3" fill="#ff6e00"/><rect x="12" y="7" width="2" height="3" fill="#ff5e00"/><rect x="21" y="37" width="1" height="3" fill="#ff7e00"/><rect x="2" y="18" width="1" height="2" fill="#ff6100"/><rect x="23" y="18" width="1" height="2" fill="#ff6300"/><rect x="26" y="35" width="2" height="4" fill="#ff4a00"/><rect x="45" y="20" width="2" height="3" fill="#ff6e00"/><rect x="49" y="15" width="1" height="3" fill="#ff6900"/><rect x="20" y="42" width="1" height="4" fill="#ff4d00"/><rect x="16" y="10" width="1" height="3" fill="#ff7800"/><rect x="36" y="10" width="3" height="4" fill="#ff5b00"/><rect x="37" y="40" width="1" height="3" fill="#ff4c00"/><rect x="11" y="12" width="2" height="4" fill="#ff5b00"/><rect x="44" y="1" width="1" height="3" fill="#ff7300"/><rect x="11" y="9" width="1" height="3" fill="#ff2c00"/><rect x="2" y="22" width="1" height="3" fill="#ff6900"/><rect x="4" y="4" width="2" height="3" fill="#ff6600"/><rect x="26" y="31" width="3" height="2" fill="#ff7e00"/><rect x="20" y="16" width="1" height="3" fill="#ff5e00"/><rect x="16" y="2" width="2" height="3" fill="#ff6b00"/><rect x="25" y="37" width="1" height="3" fill="#ff5400"/><rect x="30" y="18" width="1" height="3" fill="#ff7300"/><rect x="24" y="36" width="1" height="4" fill="#ff3600"/><rect x="1" y="7" width="1" height="4" fill="#ff8100"/><rect x="22" y="9" width="3" height="3" fill="#ff6b00"/><rect x="38" y="15" width="3" height="2" fill="#ff5800"/><rect x="45" y="36" width="2" height="3" fill="#ff6100"/><rect x="14" y="26" width="2" height="3" fill="#ff4400"/><rect x="43" y="30" width="1" height="3" fill="#ff7100"/><rect x="32" y="38" width="2" height="4" fill="#ff3c00"/><rect x="48" y="25" width="2" height="2" fill="#ff4600"/><rect x="39" y="4" width="1" height="3" fill="#ff7200"/><rect x="46" y="3" width="2" height="3" fill="#ff4d00"/><rect x="39" y="32" width="1" height="2" fill="#ff7200"/><rect x="17" y="25" width="2" height="2" fill="#ff5900"/><rect x="29" y="34" width="1" height="3" fill="#ff7800"/><rect x="2" y="29" width="2" height="3" fill="#ff8000"/><rect x="25" y="5" width="2" height="4" fill="#ff9000"/><rect x="48" y="9" width="2" height="3" fill="#ff5d00"/><rect x="32" y="24" width="3" height="4" fill="#ff6000"/><rect x="25" y="36" width="2" height="3" fill="#ff6000"/><rect x="34" y="12" width="1" height="3" fill="#ff5600"/><rect x="28" y="22" width="1" height="3" fill="#ff6400"/><rect x="9" y="32" width="2" height="2" fill="#ff6000"/><rect x="21" y="39" width="2" height="4" fill="#ff6200"/><rect x="15" y="11" width="2" height="2" fill="#ff4c00"/><rect x="30" y="0" width="1" height="4" fill="#ff6b00"/><rect x="20" y="15" width="2" height="3" fill="#ff5300"/><rect x="11" y="33" width="1" height="4" fill="#ff7000"/><rect x="29" y="33" width="3" height="3" fill="#ff5900"/><rect x="9" y="28" width="3" height="3" fill="#ff7300"/><rect x="9" y="31" width="1" height="4" fill="#ff5b00"/><rect x="49" y="37" width="1" height="3" fill="#ff4600"/><rect x="32" y="3" width="1" height="4" fill="#ff4800"/><rect x="13" y="18" width="2" height="2" fill="#ff6500"/><rect x="39" y="9" width="2" height="3" fill="#ff6000"/><rect x="25" y="3" width="3" height="2" fill="#ff6600"/><rect x="9" y="38" width="2" height="3" fill="#ff5e00"/><rect x="23" y="25" width="1" height="2" fill="#ff6d00"/><rect x="10" y="42" width="1" height="3" fill="#ff4f00"/><rect x="8" y="38" width="3" height="2" fill="#ff4800"/><rect x="30" y="25" width="1" height="2" fill="#ff6200"/><rect x="26" y="39" width="2" height="3" fill="#ff6e00"/><rect x="43" y="33" width="2" height="2" fill="#ff4b00"/><rect x="5" y="38" width="2" height="4" fill="#ff6600"/><rect x="21" y="17" width="1" height="2" fill="#ff6300"/><rect x="8" y="27" width="3" height="2" fill="#ff6000"/><rect x="47" y="4" width="3" height="3" fill="#ff6000"/><rect x="3" y="29" width="3" height="3" fill="#ff5200"/><rect x="35" y="36" width="1" height="3" fill="#ff6d00"/><rect x="10" y="27" width="2" height="2" fill="#ff8c00"/><rect x="13" y="6" width="1" height="3" fill="#ff7200"/><rect x="39" y="6" width="2" height="2" fill="#ff4f00"/><rect x="8" y="36" width="3" height="3" fill="#ff7800"/><rect x="37" y="7" width="1" height="4" fill="#ff6100"/><rect x="45" y="39" width="1" height="2" fill="#ffa300"/><rect x="13" y="20" width="2" height="4" fill="#ff7300"/><rect x="31" y="13" width="2" height="3" fill="#ff8100"/><rect x="35" y="26" width="1" height="2" fill="#ff7200"/><rect x="5" y="13" width="1" height="3" fill="#ff2900"/><rect x="3" y="36" width="1" height="4" fill="#ff6200"/><rect x="31" y="41" width="1" height="3" fill="#ff4500"/><rect x="26" y="37" width="2" height="2" fill="#ff5600"/><rect x="3" y="33" width="2" height="3" fill="#ff6000"/><rect x="47" y="21" width="2" height="4" fill="#ff6200"/><rect x="35" y="14" width="1" height="3" fill="#ff6a00"/><rect x="12" y="28" width="2" height="3" fill="#ff4100"/><rect x="49" y="4" width="1" height="3" fill="#ff6400"/><rect x="35" y="20" width="3" height="3" fill="#ff7200"/><rect x="49" y="24" width="1" height="2" fill="#ff3e00"/><rect x="22" y="21" width="2" height="2" fill="#ff7c00"/><rect x="17" y="8" width="2" height="3" fill="#ff6c00"/><rect x="33" y="35" width="1" height="3" fill="#ff6a00"/><rect x="48" y="17" width="1" height="2" fill="#ff2900"/><rect x="38" y="35" width="2" height="2" fill="#ff5200"/><rect x="47" y="32" width="1" height="3" fill="#ff6a00"/><rect x="22" y="44" width="1" height="3" fill="#ff4200"/><rect x="20" y="15" width="2" height="2" fill="#ff7100"/><rect x="5" y="44" width="1" height="3" fill="#ff8000"/><rect x="42" y="30" width="2" height="4" fill="#ff5e00"/><rect x="26" y="8" width="3" height="4" fill="#ff5a00"/><rect x="9" y="8" width="2" height="3" fill="#ff6a00"/><rect x="41" y="29" width="2" height="4" fill="#ff9300"/><rect x="21" y="21" width="1" height="3" fill="#ff4700"/><rect x="11" y="16" width="2" height="4" fill="#ff6500"/><rect x="5" y="28" width="3" height="2" fill="#ff3c00"/><rect x="18" y="26" width="1" height="2" fill="#ff4f00"/><rect x="17" y="27" width="1" height="3" fill="#ff6600"/><rect x="39" y="43" width="2" height="3" fill="#ff7900"/><rect x="49" y="2" width="1" height="2" fill="#ff7300"/><rect x="11" y="17" width="2" height="2" fill="#ff6800"/><rect x="1" y="44" width="2" height="3" fill="#ff6b00"/><rect x="4" y="40" width="1" height="3" fill="#ff6300"/><rect x="45" y="21" width="1" height="2" fill="#ff8e00"/><rect x="1" y="7" width="2" height="4" fill="#ff5a00"/><rect x="45" y="34" width="3" height="3" fill="#ff5c00"/><rect x="47" y="35" width="1" height="3" fill="#ff6800"/><rect x="37" y="29" width="3" height="2" fill="#ff4b00"/><rect x="41" y="26" width="3" height="3" fill="#ff5800"/><rect x="27" y="41" width="2" height="3" fill="#ff5d00"/><rect x="7" y="7" width="2" height="2" fill="#ff4f00"/><rect x="12" y="8" width="2" height="4" fill="#ff8500"/><rect x="30" y="21" width="2" height="3" fill="#ff6a00"/><rect x="2" y="32" width="1" height="3" fill="#ff7d00"/><rect x="39" y="7" width="2" height="3" fill="#ff7a00"/><rect x="17" y="28" width="1" height="3" fill="#ff7300"/><rect x="20" y="39" width="2" height="2" fill="#ff8800"/><rect x="10" y="20" width="2" height="3" fill="#ff5000"/><rect x="25" y="33" width="2" height="3" fill="#ff6a00"/><rect x="23" y="5" width="2" height="2" fill="#ff8400"/><rect x="11" y="17" width="1" height="2" fill="#ff7000"/><rect x="29" y="33" width="2" height="4" fill="#ff5a00"/><rect x="3" y="14" width="2" height="4" fill="#ff6a00"/><rect x="32" y="11" width="3" height="2" fill="#ff5f00"/><rect x="37" y="3" width="2" height="4" fill="#ff4900"/><rect x="3" y="3" width="1" height="3" fill="#ff5300"/><rect x="49" y="17" width="1" height="2" fill="#ff7a00"/><rect x="29" y="43" width="2" height="2" fill="#ff2c00"/><rect x="21" y="41" width="2" height="3" fill="#ff3500"/><rect x="33" y="22" width="1" height="3" fill="#ff8700"/><rect x="24" y="1" width="2" height="3" fill="#ff5a00"/><rect x="23" y="5" width="2" height="3" fill="#ff7500"/><rect x="20" y="27" width="2" height="3" fill="#ff5600"/><rect x="47" y="14" width="3" height="3" fill="#ff4400"/><rect x="33" y="28" width="2" height="3" fill="#ff7a00"/><rect x="16" y="1" width="2" height="3" fill="#ff5c00"/><rect x="1" y="11" width="3" height="3" fill="#ff7d00"/><rect x="1" y="4" width="2" height="2" fill="#ff5900"/><rect x="24" y="39" width="2" height="2" fill="#ff5700"/><rect x="20" y="42" width="2" height="2" fill="#ff8000"/><rect x="20" y="17" width="3" height="3" fill="#ff6f00"/><rect x="24" y="3" width="1" height="4" fill="#ff5600"/><rect x="30" y="27" width="2" height="3" fill="#ff5a00"/><rect x="37" y="27" width="2" height="2" fill="#ff6b00"/><rect x="43" y="17" width="2" height="2" fill="#ffa300"/><rect x="3" y="22" width="2" height="3" fill="#ff6a00"/><rect x="40" y="5" width="3" height="4" fill="#ff6700"/><rect x="8" y="20" width="2" height="3" fill="#ff8600"/><rect x="16" y="27" width="3" height="3" fill="#ff5000"/><rect x="43" y="34" width="2" height="2" fill="#ff7400"/><rect x="22" y="10" width="3" height="4" fill="#ff9000"/><rect x="8" y="35" width="3" height="2" fill="#ff7500"/><rect x="14" y="12" width="2" height="3" fill="#ff5300"/><rect x="25" y="10" width="1" height="3" fill="#ff7e00"/><rect x="46" y="7" width="2" height="3" fill="#ff4c00"/><rect x="47" y="40" width="1" height="3" fill="#ff6400"/><rect x="48" y="5" width="1" height="3" fill="#ff9d00"/><rect x="10" y="36" width="3" height="3" fill="#ff7700"/><rect x="49" y="13" width="2" height="4" fill="#ff5900"/><rect x="12" y="8" width="2" height="4" fill="#ff6500"/><rect x="6" y="43" width="1" height="2" fill="#ff2900"/><rect x="16" y="35" width="2" height="4" fill="#ff7600"/><rect x="20" y="21" width="1" height="4" fill="#ff8900"/><rect x="19" y="10" width="1" height="3" fill="#ff4900"/><rect x="28" y="35" width="1" height="3" fill="#ff7700"/><rect x="32" y="21" width="2" height="3" fill="#ff6d00"/><rect x="45" y="15" width="3" height="2" fill="#ff5c00"/><rect x="40" y="29" width="1" height="4" fill="#ff6e00"/><rect x="7" y="36" width="2" height="3" fill="#ff3700"/><rect x="48" y="27" width="1" height="2" fill="#ff6700"/><rect x="28" y="15" width="1" height="3" fill="#ff8800"/><rect x="32" y="31" width="3" height="3" fill="#ff6e00"/><rect x="30" y="34" width="3" height="3" fill="#ff6900"/><rect x="9" y="31" width="3" height="4" fill="#ff6400"/><rect x="21" y="42" width="3" height="3" fill="#ff4300"/><rect x="28" y="5" width="2" height="3" fill="#ff6700"/><rect x="26" y="23" width="1" height="2" fill="#ff6700"/><rect x="45" y="44" width="3" height="4" fill="#ff7500"/><rect x="5" y="6" width="1" height="3" fill="#ff6d00"/><rect x="49" y="14" width="1" height="2" fill="#ff7700"/><rect x="5" y="3" width="3" height="3" fill="#ff6500"/><rect x="21" y="19" width="2" height="3" fill="#ff7600"/><rect x="20" y="18" width="1" height="2" fill="#ff3f00"/><rect x="17" y="25" width="1" height="3" fill="#ff5200"/><rect x="25" y="7" width="3" height="2" fill="#ff7900"/><rect x="17" y="5" width="2" height="2" fill="#ff7b00"/><rect x="21" y="25" width="2" height="4" fill="#ff5900"/><rect x="43" y="34" width="2" height="3" fill="#ff4900"/><rect x="12" y="10" width="2" height="4" fill="#ff6500"/><rect x="16" y="0" width="2" height="4" fill="#ff9c00"/><rect x="45" y="16" width="3" height="2" fill="#ff5b00"/><rect x="6" y="31" width="1" height="3" fill="#ff6500"/><rect x="36" y="44" width="1" height="2" fill="#ff9000"/><rect x="38" y="0" width="2" height="3" fill="#ff4300"/><rect x="41" y="44" width="1" height="3" fill="#ff8100"/><rect x="8" y="25" width="2" height="3" fill="#ff5a00"/><rect x="22" y="27" width="3" height="2" fill="#ff5300"/><rect x="10" y="31" width="2" height="2" fill="#ff5600"/><rect x="26" y="26" width="1" height="3" fill="#ff7800"/><rect x="6" y="1" width="2" height="4" fill="#ff4d00"/><rect x="8" y="32" width="2" height="3" fill="#ff5600"/><rect x="5" y="31" width="2" height="3" fill="#ff7400"/><rect x="0" y="1" width="2" height="4" fill="#ff7200"/><rect x="40" y="2" width="1" height="4" fill="#ff6800"/><rect x="27" y="14" width="3" height="2" fill="#ff5100"/><rect x="42" y="21" width="3" height="4" fill="#ff6900"/><rect x="42" y="23" width="1" height="3" fill="#ff7000"/><rect x="20" y="7" width="2" height="4" fill="#ff8700"/><rect x="6" y="14" width="1" height="3" fill="#ff4500"/><rect x="12" y="0" width="2" height="3" fill="#ff4c00"/><rect x="43" y="42" width="3" height="3" fill="#ff5800"/><rect x="5" y="30" width="3" height="3" fill="#ff4600"/><rect x="6" y="15" width="2" height="2" fill="#ff6000"/><rect x="23" y="41" width="2" height="3" fill="#ff5e00"/><rect x="11" y="26" width="2" height="4" fill="#ff7100"/><rect x="36" y="10" width="3" height="3" fill="#ff8600"/><rect x="49" y="15" width="3" height="3" fill="#ff7000"/><rect x="38" y="6" width="2" height="3" fill="#ff3d00"/><rect x="16" y="24" width="2" height="4" fill="#ff6e00"/><rect x="17" y="41" width="1" height="3" fill="#ff8400"/><rect x="18" y="10" width="2" height="3" fill="#ff6700"/><rect x="25" y="37" width="2" height="3" fill="#ff6800"/><rect x="29" y="40" width="3" height="4" fill="#ff4b00"/><rect x="19" y="1" width="2" height="4" fill="#ff6700"/><rect x="19" y="24" width="3" height="3" fill="#ff5900"/><rect x="33" y="4" width="2" height="3" fill="#ff4800"/><rect x="0" y="44" width="2" height="3" fill="#ff5b00"/><rect x="17" y="27" width="2" height="3" fill="#ff7c00"/><rect x="17" y="40" width="2" height="4" fill="#ff8a00"/><rect x="0" y="0" width="2" height="3" fill="#ff6300"/><rect x="24" y="41" width="2" height="4" fill="#ff7600"/><rect x="29" y="40" width="2" height="3" fill="#ff8a00"/><rect x="41" y="42" width="3" height="3" fill="#ff5600"/><rect x="16" y="37" width="2" height="3" fill="#ff5900"/><rect x="10" y="38" width="2" height="3" fill="#ff6c00"/><rect x="6" y="36" width="1" height="3" fill="#ff4900"/><rect x="37" y="31" width="2" height="2" fill="#ff6400"/><rect x="4" y="22" width="3" height="2" fill="#ff6300"/><rect x="43" y="19" width="1" height="3" fill="#ff3400"/><rect x="6" y="31" width="3" height="4" fill="#ff6c00"/><rect x="27" y="18" width="2" height="3" fill="#ff5700"/><rect x="11" y="30" width="2" height="2" fill="#ff3600"/><rect x="15" y="11" width="1" height="3" fill="#ff8a00"/><rect x="46" y="3" width="2" height="4" fill="#ff5d00"/><rect x="45" y="17" width="2" height="2" fill="#ff5400"/><rect x="44" y="30" width="3" height="3" fill="#ff5600"/><rect x="10" y="39" width="1" height="3" fill="#ff3d00"/><rect x="0" y="17" width="1" height="4" fill="#ff6c00"/><rect x="7" y="38" width="1" height="2" fill="#ff6100"/><rect x="46" y="20" width="1" height="4" fill="#ff7400"/><rect x="6" y="29" width="1" height="3" fill="#ff7100"/><rect x="41" y="11" width="1" height="2" fill="#ff5800"/><rect x="17" y="44" width="2" height="3" fill="#ff7f00"/><rect x="6" y="1" width="3" height="4" fill="#ff4c00"/><rect x="40" y="44" width="2" height="4" fill="#ff6800"/><rect x="28" y="2" width="1" height="3" fill="#ff4300"/><rect x="49" y="44" width="2" height="2" fill="#ff5a00"/><rect x="21" y="4" width="3" height="3" fill="#ff3d00"/><rect x="34" y="4" width="2" height="3" fill="#ff5c00"/><rect x="18" y="34" width="2" height="3" fill="#ff6800"/><rect x="11" y="28" width="1" height="4" fill="#ff5b00"/><rect x="31" y="6" width="1" height="2" fill="#ff4c00"/><rect x="22" y="18" width="2" height="2" fill="#ff4e00"/><rect x="41" y="15" width="2" height="2" fill="#ff5f00"/><rect x="25" y="14" width="2" height="3" fill="#ff5c00"/><rect x="25" y="27" width="1" height="2" fill="#ff4b00"/><rect x="0" y="26" width="1" height="4" fill="#ff6200"/><rect x="13" y="30" width="3" height="4" fill="#ff6a00"/><rect x="1" y="27" width="1" height="2" fill="#ff6500"/><rect x="5" y="41" width="1" height="2" fill="#ff7e00"/><rect x="5" y="21" width="1" height="3" fill="#ff7300"/><rect x="35" y="6" width="3" height="3" fill="#ff7b00"/><rect x="8" y="38" width="1" height="4" fill="#ff5400"/><rect x="9" y="20" width="3" height="3" fill="#ff5900"/><rect x="21" y="32" width="2" height="3" fill="#ff6200"/><rect x="39" y="24" width="2" height="2" fill="#ff5300"/><rect x="42" y="19" width="3" height="2" fill="#ff3c00"/><rect x="18" y="29" width="1" height="3" fill="#ffa300"/><rect x="42" y="10" width="3" height="3" fill="#ff7100"/><rect x="24" y="38" width="3" height="3" fill="#ff6b00"/><rect x="36" y="40" width="3" height="3" fill="#ff4a00"/><rect x="13" y="1" width="2" height="2" fill="#ff7f00"/><rect x="31" y="35" width="1" height="2" fill="#ff9700"/><rect x="13" y="12" width="1" height="3" fill="#ff7a00"/><rect x="31" y="21" width="2" height="3" fill="#ff5700"/><rect x="7" y="14" width="1" height="3" fill="#ff7c00"/><rect x="1" y="29" width="1" height="2" fill="#ff6900"/><rect x="17" y="4" width="2" height="3" fill="#ff6600"/><rect x="29" y="9" width="1" height="3" fill="#ff5200"/><rect x="2" y="40" width="2" height="3" fill="#ff6500"/><rect x="36" y="4" width="2" height="3" fill="#ff7600"/><rect x="8" y="1" width="1" height="2" fill="#ff5f00"/><rect x="4" y="7" width="1" height="2" fill="#ff6a00"/><rect x="5" y="44" width="2" height="4" fill="#ff6b00"/><rect x="31" y="41" width="1" height="4" fill="#ff5e00"/><rect x="3" y="37" width="2" height="4" fill="#ff6300"/><rect x="47" y="15" width="3" height="3" fill="#ff5900"/><rect x="4" y="25" width="3" height="3" fill="#ff7a00"/><rect x="16" y="44" width="2" height="2" fill="#ff5000"/><rect x="30" y="18" width="3" height="2" fill="#ff7c00"/><rect x="5" y="8" width="1" height="3" fill="#ff6800"/><rect x="9" y="41" width="2" height="4" fill="#ff6600"/><rect x="0" y="2" width="1" height="3" fill="#ff7000"/><rect x="7" y="26" width="1" height="3" fill="#ff3e00"/><rect x="27" y="29" width="3" height="3" fill="#ff7c00"/><rect x="29" y="8" width="1" height="3" fill="#ff7900"/><rect x="39" y="3" width="2" height="4" fill="#ff3a00"/><rect x="49" y="20" width="1" height="3" fill="#ff7200"/><rect x="5" y="29" width="2" height="3" fill="#ff7a00"/><rect x="41" y="28" width="1" height="3" fill="#ff4900"/><rect x="11" y="0" width="1" height="2" fill="#ff6500"/><rect x="31" y="18" width="2" height="4" fill="#ff6800"/><rect x="28" y="1" width="1" height="4" fill="#ff4300"/><rect x="49" y="31" width="3" height="2" fill="#ff3e00"/><rect x="8" y="43" width="2" height="3" fill="#ff8200"/><rect x="31" y="20" width="1" height="3" fill="#ff7400"/><rect x="46" y="41" width="2" height="3" fill="#ff4800"/><rect x="1" y="6" width="1" height="2" fill="#ff4a00"/><rect x="42" y="42" width="3" height="3" fill="#ff7000"/><rect x="13" y="32" width="1" height="3" fill="#ff8000"/><rect x="1" y="25" width="3" height="3" fill="#ff6700"/><rect x="26" y="10" width="1" height="4" fill="#ff6200"/><rect x="13" y="30" width="1" height="3" fill="#ff9200"/><rect x="36" y="6" width="3" height="2" fill="#ff4700"/><rect x="6" y="20" width="1" height="3" fill="#ff4a00"/><rect x="6" y="8" width="2" height="2" fill="#ff4000"/><rect x="29" y="10" width="1" height="3" fill="#ff6700"/><rect x="13" y="39" width="1" height="3" fill="#ff8800"/><rect x="44" y="37" width="2" height="3" fill="#ff6100"/><rect x="42" y="2" width="1" height="3" fill="#ff5900"/><rect x="21" y="22" width="1" height="3" fill="#ff7f00"/><rect x="29" y="40" width="1" height="4" fill="#ff6d00"/><rect x="15" y="5" width="3" height="4" fill="#ff7500"/><rect x="39" y="36" width="1" height="2" fill="#ff7900"/><rect x="9" y="31" width="3" height="2" fill="#ff7500"/><rect x="23" y="33" width="2" height="2" fill="#ff6c00"/><rect x="44" y="36" width="2" height="2" fill="#ff5c00"/><rect x="15" y="27" width="1" height="3" fill="#ff2900"/><rect x="22" y="29" width="1" height="2" fill="#ff5900"/><rect x="13" y="15" width="3" height="4" fill="#ff3700"/><rect x="39" y="0" width="2" height="4" fill="#ff4300"/><rect x="21" y="29" width="1" height="3" fill="#ff5300"/><rect x="33" y="25" width="1" height="3" fill="#ff3800"/><rect x="13" y="30" width="1" height="4" fill="#ff5400"/><rect x="44" y="34" width="2" height="3" fill="#ff7000"/><rect x="2" y="10" width="3" height="2" fill="#ff8800"/><rect x="7" y="12" width="1" height="3" fill="#ff5d00"/><rect x="45" y="26" width="2" height="2" fill="#ff5800"/><rect x="39" y="1" width="1" height="2" fill="#ff7300"/><rect x="47" y="4" width="1" height="2" fill="#ff5100"/><rect x="41" y="13" width="2" height="3" fill="#ff5b00"/><rect x="34" y="5" width="3" height="3" fill="#ff4100"/><rect x="47" y="10" width="2" height="2" fill="#ff5e00"/><rect x="19" y="44" width="1" height="2" fill="#ff6700"/><rect x="25" y="43" width="1" height="3" fill="#ff6e00"/><rect x="47" y="3" width="1" height="2" fill="#ff6c00"/><rect x="4" y="9" width="1" height="3" fill="#ff7d00"/><rect x="16" y="26" width="2" height="2" fill="#ff6300"/><rect x="47" y="21" width="3" height="3" fill="#ff8400"/><rect x="23" y="18" width="3" height="3" fill="#ff9b00"/><rect x="36" y="25" width="3" height="2" fill="#ff6a00"/><rect x="12" y="35" width="1" height="2" fill="#ff5a00"/><rect x="36" y="44" width="3" height="4" fill="#ff4400"/><rect x="37" y="18" width="1" height="4" fill="#ff4e00"/><rect x="27" y="2" width="1" height="4" fill="#ff6a00"/><rect x="13" y="43" width="1" height="3" fill="#ff6300"/><rect x="17" y="11" width="1" height="4" fill="#ff5600"/><rect x="26" y="3" width="2" height="2" fill="#ff7e00"/><rect x="29" y="10" width="3" height="3" fill="#ff7800"/><rect x="26" y="37" width="3" height="3" fill="#ff4300"/><rect x="19" y="6" width="3" height="3" fill="#ff4e00"/><rect x="49" y="40" width="1" height="2" fill="#ff6800"/><rect x="3" y="34" width="3" height="4" fill="#ff7500"/><rect x="18" y="22" width="2" height="3" fill="#ff6c00"/><rect x="6" y="0" width="2" height="3" fill="#ff5900"/><rect x="5" y="27" width="2" height="2" fill="#ff2900"/><rect x="24" y="14" width="1" height="4" fill="#ff9000"/><rect x="10" y="16" width="2" height="3" fill="#ff2900"/><rect x="48" y="38" width="1" height="3" fill="#ff7400"/><rect x="41" y="25" width="2" height="4" fill="#ff5300"/><rect x="22" y="24" width="2" height="3" fill="#ff4800"/><rect x="14" y="35" width="3" height="2" fill="#ff6d00"/><rect x="6" y="43" width="1" height="3" fill="#ff7100"/><rect x="19" y="4" width="2" height="4" fill="#ff7600"/><rect x="18" y="28" width="2" height="3" fill="#ff6200"/><rect x="12" y="0" width="2" height="3" fill="#ff5100"/><rect x="23" y="36" width="2" height="4" fill="#ff5d00"/><rect x="7" y="23" width="1" height="3" fill="#ff5000"/><rect x="4" y="1" width="2" height="4" fill="#ff7100"/><rect x="42" y="25" width="2" height="3" fill="#ff7700"/><rect x="42" y="44" width="2" height="3" fill="#ff6400"/><rect x="5" y="44" width="2" height="2" fill="#ff6400"/><rect x="3" y="31" width="2" height="3" fill="#ff8500"/><rect x="16" y="17" width="2" height="3" fill="#ff7700"/><rect x="47" y="39" width="1" height="2" fill="#ffa100"/><rect x="46" y="30" width="2" height="4" fill="#ff9700"/><rect x="38" y="38" width="1" height="4" fill="#ff5900"/><rect x="28" y="22" width="1" height="3" fill="#ff6800"/><rect x="44" y="31" width="2" height="3" fill="#ff5000"/><rect x="41" y="39" width="2" height="3" fill="#ff9200"/><rect x="9" y="3" width="3" height="4" fill="#ff4e00"/><rect x="3" y="20" width="2" height="2" fill="#ff7400"/><rect x="4" y="10" width="2" height="2" fill="#ff5100"/><rect x="39" y="42" width="2" height="2" fill="#ff5f00"/><rect x="27" y="4" width="2" height="3" fill="#ff8900"/><rect x="30" y="31" width="3" height="4" fill="#ff5600"/><rect x="48" y="33" width="2" height="3" fill="#ff7f00"/><rect x="42" y="29" width="2" height="3" fill="#ff7200"/><rect x="47" y="43" width="2" height="4" fill="#ff6800"/><rect x="10" y="19" width="3" height="4" fill="#ff6c00"/><rect x="44" y="39" width="1" height="4" fill="#ff7700"/><rect x="45" y="39" width="1" height="2" fill="#ff3800"/><rect x="5" y="12" width="3" height="4" fill="#ff5e00"/><rect x="40" y="32" width="2" height="3" fill="#ff6400"/><rect x="12" y="29" width="2" height="4" fill="#ff6500"/><rect x="6" y="24" width="2" height="4" fill="#ff6f00"/><rect x="19" y="37" width="2" height="4" fill="#ff5800"/><rect x="24" y="25" width="1" height="3" fill="#ff7c00"/><rect x="45" y="10" width="2" height="3" fill="#ff4a00"/><rect x="21" y="11" width="1" height="4" fill="#ff7000"/><rect x="1" y="21" width="3" height="2" fill="#ff6300"/><rect x="43" y="27" width="2" height="2" fill="#ff5300"/><rect x="16" y="1" width="1" height="4" fill="#ff5c00"/><rect x="46" y="16" width="1" height="2" fill="#ff6200"/><rect x="41" y="3" width="1" height="3" fill="#ff3d00"/><rect x="9" y="13" width="3" height="4" fill="#ff7600"/><rect x="41" y="44" width="3" height="4" fill="#ff7d00"/><rect x="15" y="30" width="2" height="4" fill="#ff4d00"/><rect x="17" y="44" width="3" height="2" fill="#ff6200"/><rect x="12" y="42" width="1" height="2" fill="#ff6300"/><rect x="7" y="19" width="2" height="4" fill="#ff6800"/><rect x="29" y="20" width="2" height="4" fill="#ff5d00"/><rect x="5" y="4" width="1" height="3" fill="#ff4500"/><rect x="22" y="27" width="2" height="2" fill="#ff6f00"/><rect x="20" y="43" width="1" height="3" fill="#ff5700"/><rect x="38" y="19" width="2" height="3" fill="#ff4300"/><rect x="49" y="35" width="2" height="4" fill="#ff4e00"/><rect x="41" y="14" width="2" height="4" fill="#ff8300"/><rect x="1" y="7" width="3" height="4" fill="#ff6800"/><rect x="36" y="22" width="2" height="4" fill="#ff9000"/><rect x="47" y="28" width="3" height="2" fill="#ff3400"/><rect x="25" y="19" width="2" height="3" fill="#ff5500"/><rect x="7" y="5" width="2" height="2" fill="#ff3d00"/><rect x="35" y="36" width="2" height="4" fill="#ff7100"/><rect x="0" y="27" width="1" height="3" fill="#ff8e00"/><rect x="14" y="22" width="2" height="4" fill="#ff6900"/><rect x="6" y="34" width="2" height="2" fill="#ff4000"/><rect x="16" y="9" width="1" height="3" fill="#ff8100"/><rect x="37" y="24" width="1" height="2" fill="#ff6200"/><rect x="10" y="24" width="3" height="3" fill="#ff5d00"/><rect x="22" y="23" width="1" height="2" fill="#ff8800"/><rect x="9" y="3" width="3" height="3" fill="#ff7100"/><rect x="48" y="2" width="1" height="3" fill="#ff5500"/><rect x="25" y="8" width="2" height="3" fill="#ff7400"/><rect x="3" y="13" width="2" height="2" fill="#ff7e00"/><rect x="15" y="4" width="1" height="3" fill="#ff5d00"/><rect x="21" y="43" width="2" height="3" fill="#ff7000"/><rect x="23" y="12" width="2" height="2" fill="#ff5900"/><rect x="18" y="25" width="2" height="4" fill="#ff8300"/><rect x="14" y="36" width="3" height="3" fill="#ff7c00"/><rect x="32" y="23" width="2" height="2" fill="#ff4800"/><rect x="23" y="44" width="3" height="4" fill="#ff7500"/><rect x="26" y="38" width="1" height="3" fill="#ff3200"/><rect x="24" y="6" width="2" height="4" fill="#ff5f00"/><rect x="9" y="16" width="1" height="3" fill="#ff5c00"/><rect x="44" y="44" width="3" height="2" fill="#ff6000"/><rect x="29" y="22" width="3" height="2" fill="#ff4e00"/><rect x="21" y="15" width="2" height="3" fill="#ff3100"/><rect x="37" y="12" width="2" height="2" fill="#ff5300"/><rect x="8" y="1" width="1" height="3" fill="#ff7500"/><rect x="28" y="15" width="3" height="3" fill="#ff4400"/><rect x="4" y="38" width="3" height="2" fill="#ff8900"/><rect x="48" y="13" width="2" height="4" fill="#ff8900"/><rect x="6" y="0" width="1" height="4" fill="#ff8000"/><rect x="48" y="3" width="3" height="4" fill="#ff6100"/><rect x="48" y="21" width="1" height="3" fill="#ff5800"/><rect x="22" y="10" width="2" height="4" fill="#ff7100"/><rect x="21" y="3" width="2" height="3" fill="#ff4a00"/><rect x="22" y="44" width="1" height="4" fill="#ff9500"/><rect x="9" y="31" width="3" height="4" fill="#ff6800"/><rect x="31" y="30" width="3" height="4" fill="#ff6200"/><rect x="25" y="13" width="1" height="4" fill="#ff4b00"/><rect x="37" y="17" width="3" height="2" fill="#ff6700"/><rect x="17" y="39" width="2" height="3" fill="#ff8c00"/><rect x="30" y="42" width="2" height="2" fill="#ff6b00"/><rect x="14" y="32" width="1" height="3" fill="#ff6b00"/><rect x="44" y="9" width="3" height="2" fill="#ff4d00"/><rect x="38" y="42" width="1" height="4" fill="#ff6400"/><rect x="6" y="8" width="1" height="2" fill="#ff6300"/><rect x="40" y="35" width="3" height="3" fill="#ff4e00"/><rect x="39" y="12" width="3" height="3" fill="#ff5900"/><rect x="17" y="8" width="1" height="4" fill="#ff7600"/><rect x="45" y="22" width="3" height="3" fill="#ff7e00"/><rect x="38" y="27" width="2" height="3" fill="#ff9600"/><rect x="43" y="31" width="3" height="3" fill="#ff5f00"/><rect x="46" y="6" width="2" height="3" fill="#ff6e00"/><rect x="36" y="5" width="3" height="3" fill="#ff4f00"/><rect x="11" y="3" width="2" height="4" fill="#ff5c00"/><rect x="4" y="8" width="1" height="3" fill="#ff6200"/><rect x="12" y="18" width="1" height="2" fill="#ff6900"/><rect x="47" y="1" width="2" height="2" fill="#ff5e00"/><rect x="46" y="14" width="2" height="3" fill="#ff5400"/><rect x="9" y="5" width="2" height="4" fill="#ff3800"/><rect x="9" y="19" width="3" height="3" fill="#ff3a00"/><rect x="45" y="8" width="1" height="3" fill="#ff7a00"/><rect x="9" y="22" width="2" height="4" fill="#ff8400"/><rect x="42" y="39" width="1" height="3" fill="#ff4900"/><rect x="11" y="41" width="1" height="2" fill="#ff7500"/><rect x="15" y="23" width="1" height="3" fill="#ff5000"/><rect x="10" y="26" width="2" height="3" fill="#ff6a00"/><rect x="49" y="39" width="3" height="2" fill="#ff6300"/><rect x="9" y="12" width="2" height="3" fill="#ff7b00"/><rect x="34" y="39" width="1" height="3" fill="#ff6800"/><rect x="35" y="44" width="2" height="4" fill="#ff5f00"/><rect x="42" y="10" width="2" height="2" fill="#ff5a00"/><rect x="26" y="40" width="1" height="4" fill="#ff7300"/><rect x="47" y="1" width="1" height="3" fill="#ff6600"/><rect x="31" y="2" width="2" height="2" fill="#ff5e00"/><rect x="21" y="23" width="1" height="2" fill="#ff5d00"/><rect x="1" y="34" width="2" height="3" fill="#ff5000"/><rect x="8" y="29" width="2" height="3" fill="#ff4e00"/><rect x="11" y="15" width="2" height="3" fill="#ff6200"/><rect x="39" y="37" width="3" height="2" fill="#ff6a00"/><rect x="31" y="39" width="2" height="4" fill="#ff6100"/><rect x="29" y="24" width="1" height="4" fill="#ff6800"/><rect x="20" y="4" width="2" height="2" fill="#ff4600"/><rect x="6" y="40" width="3" height="4" fill="#ff7f00"/><rect x="25" y="3" width="3" height="4" fill="#ff4900"/><rect x="23" y="7" width="3" height="2" fill="#ff6200"/><rect x="22" y="41" width="1" height="2" fill="#ff6a00"/><rect x="4" y="12" width="2" height="2" fill="#ff4d00"/><rect x="14" y="35" width="2" height="4" fill="#ff5b00"/><rect x="32" y="39" width="2" height="3" fill="#ff7400"/><rect x="4" y="26" width="3" height="3" fill="#ff6d00"/><rect x="1" y="40" width="2" height="4" fill="#ff5500"/><rect x="45" y="23" width="2" height="3" fill="#ff6300"/><rect x="10" y="13" width="1" height="4" fill="#ff5a00"/><rect x="17" y="39" width="2" height="3" fill="#ff4c00"/><rect x="39" y="34" width="2" height="3" fill="#ff7000"/><rect x="32" y="15" width="2" height="3" fill="#ff7b00"/><rect x="20" y="7" width="3" height="3" fill="#ff5b00"/><rect x="25" y="4" width="1" height="4" fill="#ff6c00"/><rect x="20" y="13" width="1" height="2" fill="#ff6300"/><rect x="9" y="42" width="2" height="3" fill="#ff7500"/><rect x="48" y="16" width="1" height="3" fill="#ff4400"/><rect x="1" y="33" width="1" height="2" fill="#ff6800"/><rect x="0" y="9" width="1" height="4" fill="#ff5600"/><rect x="30" y="43" width="3" height="3" fill="#ff5700"/><rect x="24" y="27" width="2" height="4" fill="#ff4c00"/><rect x="24" y="12" width="1" height="4" fill="#ff4e00"/><rect x="48" y="35" width="1" height="3" fill="#ff6100"/><rect x="16" y="43" width="2" height="4" fill="#ff6c00"/><rect x="26" y="35" width="1" height="4" fill="#ff4f00"/><rect x="34" y="41" width="1" height="3" fill="#ff6100"/><rect x="25" y="32" width="2" height="4" fill="#ff3c00"/><rect x="18" y="37" width="2" height="2" fill="#ff5f00"/><rect x="27" y="13" width="2" height="2" fill="#ffa000"/><rect x="38" y="26" width="1" height="2" fill="#ff6c00"/><rect x="23" y="28" width="1" height="3" fill="#ff4e00"/><rect x="48" y="26" width="3" height="2" fill="#ff6b00"/><rect x="16" y="3" width="1" height="4" fill="#ff6400"/><rect x="7" y="27" width="2" height="3" fill="#ff8000"/><rect x="26" y="3" width="1" height="2" fill="#ff7d00"/><rect x="39" y="27" width="3" height="3" fill="#ff9f00"/><rect x="13" y="25" width="1" height="4" fill="#ff7100"/><rect x="47" y="26" width="1" height="3" fill="#ff7700"/><rect x="1" y="34" width="1" height="2" fill="#ff8000"/><rect x="37" y="44" width="2" height="3" fill="#ff5500"/><rect x="8" y="8" width="1" height="4" fill="#ff8b00"/><rect x="28" y="9" width="2" height="3" fill="#ff6d00"/><rect x="33" y="8" width="3" height="2" fill="#ff6e00"/><rect x="6" y="22" width="1" height="3" fill="#ff3d00"/><rect x="32" y="26" width="2" height="2" fill="#ff5500"/><rect x="16" y="39" width="2" height="3" fill="#ff6a00"/><rect x="31" y="33" width="1" height="4" fill="#ff2900"/><rect x="48" y="0" width="1" height="4" fill="#ff5300"/><rect x="49" y="23" width="1" height="3" fill="#ff7900"/><rect x="26" y="24" width="3" height="4" fill="#ff5900"/><rect x="42" y="44" width="2" height="4" fill="#ff7c00"/><rect x="38" y="42" width="2" height="2" fill="#ff5d00"/><rect x="31" y="30" width="2" height="3" fill="#ff4700"/><rect x="1" y="22" width="2" height="4" fill="#ff6f00"/><rect x="46" y="41" width="3" height="3" fill="#ff4000"/><rect x="49" y="38" width="2" height="3" fill="#ff6a00"/><rect x="31" y="19" width="1" height="4" fill="#ff6600"/><rect x="12" y="31" width="2" height="3" fill="#ff8c00"/><rect x="8" y="30" width="1" height="3" fill="#ff6500"/><rect x="10" y="25" width="3" height="3" fill="#ff4700"/><rect x="26" y="11" width="2" height="2" fill="#ff4500"/><rect x="34" y="1" width="1" height="3" fill="#ff4500"/><rect x="32" y="26" width="1" height="3" fill="#ff5400"/><rect x="37" y="3" width="3" height="2" fill="#ff5e00"/><rect x="23" y="17" width="1" height="4" fill="#ff7100"/><rect x="48" y="25" width="3" height="4" fill="#ff3c00"/><rect x="33" y="41" width="2" height="3" fill="#ff8500"/><rect x="2" y="23" width="1" height="3" fill="#ff6000"/><rect x="6" y="7" width="1" height="4" fill="#ff8f00"/><rect x="13" y="2" width="3" height="3" fill="#ff5a00"/><rect x="12" y="43" width="2" height="2" fill="#ff7600"/><rect x="19" y="16" width="1" height="3" fill="#ff5700"/><rect x="3" y="40" width="3" height="2" fill="#ff3200"/><rect x="22" y="19" width="2" height="3" fill="#ff6900"/><rect x="38" y="9" width="3" height="2" fill="#ff5600"/><rect x="1" y="5" width="2" height="2" fill="#ff4f00"/><rect x="8" y="15" width="1" height="2" fill="#ff6200"/><rect x="28" y="30" width="1" height="3" fill="#ff6c00"/><rect x="1" y="9" width="2" height="4" fill="#ff5500"/><rect x="36" y="16" width="1" height="3" fill="#ff5a00"/><rect x="46" y="36" width="2" height="3" fill="#ff6100"/><rect x="0" y="10" width="2" height="3" fill="#ff7e00"/><rect x="47" y="24" width="1" height="4" fill="#ff5900"/><rect x="36" y="2" width="2" height="3" fill="#ff5e00"/><rect x="2" y="32" width="3" height="2" fill="#ff6300"/><rect x="45" y="21" width="1" height="3" fill="#ff3e00"/><rect x="30" y="42" width="2" height="3" fill="#ff7f00"/><rect x="43" y="29" width="2" height="2" fill="#ff3b00"/><rect x="11" y="37" width="2" height="4" fill="#ff4500"/><rect x="22" y="44" width="2" height="3" fill="#ff5900"/><rect x="16" y="39" width="2" height="2" fill="#ff7c00"/><rect x="2" y="28" width="2" height="2" fill="#ff7e00"/><rect x="19" y="21" width="2" height="3" fill="#ff5400"/><rect x="15" y="37" width="3" height="2" fill="#ff5700"/><rect x="1" y="13" width="2" height="3" fill="#ff4800"/><rect x="12" y="8" width="1" height="3" fill="#ff5e00"/><rect x="1" y="6" width="1" height="4" fill="#ff5e00"/><rect x="4" y="7" width="3" height="4" fill="#ff3500"/><rect x="13" y="8" width="2" height="3" fill="#ff6c00"/><rect x="31" y="14" width="1" height="3" fill="#ff5000"/><rect x="6" y="7" width="1" height="2" fill="#ff6900"/><rect x="33" y="29" width="3" height="3" fill="#ff7900"/><rect x="34" y="5" width="3" height="3" fill="#ff8400"/><rect x="44" y="42" width="2" height="3" fill="#ff5a00"/><rect x="20" y="27" width="1" height="3" fill="#ff6e00"/><rect x="47" y="6" width="1" height="3" fill="#ff8600"/><rect x="28" y="15" width="2" height="3" fill="#ff8500"/><rect x="8" y="27" width="2" height="2" fill="#ff5b00"/><rect x="29" y="42" width="2" height="3" fill="#ff5f00"/><rect x="13" y="36" width="3" height="2" fill="#ff6c00"/><rect x="7" y="15" width="2" height="3" fill="#ff6700"/><rect x="12" y="17" width="3" height="3" fill="#ff5e00"/><rect x="33" y="29" width="2" height="3" fill="#ff5800"/><rect x="2" y="43" width="1" height="4" fill="#ff5b00"/><rect x="42" y="21" width="2" height="3" fill="#ff3600"/><rect x="1" y="0" width="1" height="2" fill="#ff5300"/><rect x="29" y="37" width="1" height="2" fill="#ff5500"/><rect x="23" y="19" width="1" height="3" fill="#ff5500"/><rect x="12" y="19" width="1" height="3" fill="#ff9800"/><rect x="16" y="15" width="2" height="3" fill="#ff6000"/><rect x="6" y="5" width="2" height="3" fill="#ff5700"/><rect x="45" y="30" width="1" height="2" fill="#ff8100"/><rect x="10" y="33" width="3" height="3" fill="#ff6300"/><rect x="13" y="31" width="1" height="2" fill="#ff5600"/><rect x="48" y="43" width="1" height="3" fill="#ff2b00"/><rect x="25" y="15" width="2" height="3" fill="#ff6600"/><rect x="0" y="22" width="1" height="2" fill="#ff4500"/><rect x="17" y="5" width="3" height="4" fill="#ff7100"/><rect x="16" y="16" width="2" height="3" fill="#ff8100"/><rect x="10" y="22" width="3" height="4" fill="#ff6100"/><rect x="29" y="21" width="1" height="2" fill="#ff8300"/><rect x="26" y="27" width="1" height="2" fill="#ff5700"/><rect x="41" y="42" width="1" height="3" fill="#ff5f00"/><rect x="28" y="21" width="3" height="3" fill="#ff4e00"/><rect x="17" y="5" width="1" height="3" fill="#ff5300"/><rect x="0" y="35" width="2" height="4" fill="#ff7800"/><rect x="47" y="4" width="3" height="3" fill="#ff6e00"/><rect x="18" y="13" width="2" height="3" fill="#ff3a00"/><rect x="45" y="24" width="2" height="4" fill="#ff4400"/><rect x="12" y="33" width="2" height="3" fill="#ff4200"/><rect x="45" y="1" width="2" height="3" fill="#ff6400"/><rect x="20" y="1" width="2" height="2" fill="#ff5c00"/><rect x="4" y="13" width="1" height="3" fill="#ff6000"/><rect x="6" y="21" width="3" height="3" fill="#ff6400"/><rect x="44" y="25" width="3" height="3" fill="#ff5400"/><rect x="17" y="9" width="2" height="3" fill="#ff7200"/><rect x="4" y="29" width="1" height="4" fill="#ff3c00"/><rect x="43" y="37" width="2" height="3" fill="#ff5600"/><rect x="25" y="32" width="2" height="2" fill="#ff6400"/><rect x="14" y="34" width="2" height="3" fill="#ff3000"/><rect x="11" y="32" width="2" height="4" fill="#ff4500"/><rect x="0" y="42" width="3" height="4" fill="#ff5a00"/><rect x="22" y="40" width="3" height="3" fill="#ff7500"/><rect x="2" y="25" width="1" height="2" fill="#ff5c00"/><rect x="21" y="37" width="1" height="2" fill="#ff4500"/><rect x="36" y="44" width="1" height="2" fill="#ff4800"/><rect x="13" y="37" width="1" height="2" fill="#ff6700"/><rect x="31" y="25" width="1" height="3" fill="#ff8100"/><rect x="29" y="3" width="2" height="3" fill="#ff3200"/><rect x="23" y="11" width="2" height="4" fill="#ff4000"/><rect x="43" y="40" width="3" height="4" fill="#ff7300"/><rect x="45" y="38" width="2" height="2" fill="#ff5f00"/><rect x="21" y="36" width="2" height="3" fill="#ff6100"/><rect x="10" y="19" width="2" height="2" fill="#ff5000"/><rect x="24" y="23" width="2" height="3" fill="#ff6700"/><rect x="11" y="2" width="2" height="2" fill="#ff4100"/><rect x="41" y="20" width="2" height="3" fill="#ff7100"/><rect x="4" y="41" width="2" height="2" fill="#ff3f00"/><rect x="4" y="30" width="3" height="4" fill="#ff5600"/><rect x="19" y="12" width="2" height="3" fill="#ff5a00"/><rect x="10" y="37" width="3" height="3" fill="#ff8100"/><rect x="14" y="42" width="2" height="4" fill="#ff5500"/><rect x="42" y="13" width="1" height="3" fill="#ff7200"/><rect x="31" y="34" width="1" height="2" fill="#ff4200"/><rect x="27" y="15" width="2" height="3" fill="#ff6900"/><rect x="22" y="18" width="3" height="3" fill="#ff5900"/><rect x="10" y="1" width="2" height="4" fill="#ff9200"/><rect x="38" y="7" width="1" height="2" fill="#ff7a00"/><rect x="21" y="23" width="1" height="2" fill="#ff5000"/><rect x="12" y="15" width="2" height="4" fill="#ff6400"/><rect x="23" y="42" width="2" height="2" fill="#ff4b00"/><rect x="7" y="4" width="3" height="3" fill="#ff6800"/><rect x="49" y="43" width="3" height="2" fill="#ff6800"/><rect x="1" y="27" width="3" height="4" fill="#ff8000"/><rect x="39" y="21" width="1" height="3" fill="#ff8100"/><rect x="8" y="6" width="1" height="2" fill="#ff7600"/><rect x="11" y="28" width="2" height="3" fill="#ff7000"/><rect x="28" y="6" width="2" height="3" fill="#ff5300"/><rect x="47" y="39" width="1" height="2" fill="#ff5a00"/><rect x="18" y="29" width="2" height="3" fill="#ff4100"/><rect x="29" y="6" width="3" height="3" fill="#ff5300"/><rect x="16" y="29" width="2" height="2" fill="#ff6f00"/><rect x="17" y="36" width="1" height="4" fill="#ff8000"/><rect x="14" y="7" width="1" height="3" fill="#ff9300"/><rect x="47" y="35" width="1" height="2" fill="#ff6a00"/><rect x="18" y="40" width="1" height="2" fill="#ff6e00"/><rect x="46" y="42" width="1" height="3" fill="#ff6400"/><rect x="14" y="22" width="2" height="3" fill="#ff7800"/><rect x="2" y="38" width="1" height="4" fill="#ff4300"/><rect x="40" y="32" width="1" height="2" fill="#ff7c00"/><rect x="44" y="10" width="3" height="3" fill="#ff7300"/><rect x="46" y="30" width="1" height="4" fill="#ff5100"/><rect x="32" y="17" width="2" height="2" fill="#ff6b00"/><rect x="36" y="6" width="2" height="3" fill="#ff8600"/><rect x="28" y="24" width="1" height="3" fill="#ff6a00"/><rect x="31" y="21" width="2" height="4" fill="#ff6c00"/><rect x="8" y="7" width="2" height="4" fill="#ff5200"/><rect x="48" y="30" width="2" height="2" fill="#ff6100"/><rect x="38" y="17" width="1" height="4" fill="#ff8200"/><rect x="31" y="14" width="2" height="2" fill="#ff5e00"/><rect x="19" y="13" width="3" height="2" fill="#ff3200"/><rect x="48" y="2" width="3" height="3" fill="#ff5800"/><rect x="34" y="26" width="1" height="4" fill="#ff6500"/><rect x="8" y="13" width="1" height="3" fill="#ff7b00"/><rect x="14" y="26" width="1" height="3" fill="#ff6d00"/><rect x="8" y="28" width="1" height="3" fill="#ff4e00"/><rect x="44" y="28" width="2" height="3" fill="#ff3800"/><rect x="13" y="4" width="2" height="3" fill="#ff6d00"/><rect x="25" y="24" width="3" height="4" fill="#ff6100"/><rect x="33" y="28" width="3" height="4" fill="#ff3b00"/><rect x="11" y="7" width="3" height="3" fill="#ff2d00"/><rect x="3" y="24" width="2" height="3" fill="#ff8c00"/><rect x="45" y="41" width="3" height="3" fill="#ff5800"/><rect x="28" y="41" width="2" height="2" fill="#ff7600"/><rect x="39" y="11" width="2" height="3" fill="#ff8a00"/><rect x="49" y="31" width="1" height="3" fill="#ff5500"/><rect x="41" y="12" width="2" height="4" fill="#ff7300"/><rect x="13" y="32" width="1" height="3" fill="#ff5b00"/><rect x="4" y="42" width="1" height="3" fill="#ff4b00"/><rect x="12" y="22" width="2" height="4" fill="#ff7600"/><rect x="7" y="24" width="2" height="2" fill="#ff5a00"/><rect x="35" y="32" width="2" height="3" fill="#ff5800"/><rect x="49" y="27" width="2" height="3" fill="#ff6b00"/><rect x="36" y="0" width="2" height="3" fill="#ff6a00"/><rect x="1" y="9" width="1" height="2" fill="#ff5400"/><rect x="5" y="12" width="1" height="4" fill="#ff7f00"/><rect x="12" y="37" width="1" height="2" fill="#ff3b00"/><rect x="26" y="23" width="2" height="3" fill="#ff6a00"/><rect x="7" y="42" width="1" height="2" fill="#ff5e00"/><rect x="14" y="4" width="1" height="3" fill="#ff7700"/><rect x="11" y="37" width="1" height="2" fill="#ff4100"/><rect x="17" y="0" width="2" height="4" fill="#ff5f00"/><rect x="46" y="7" width="1" height="3" fill="#ff8d00"/><rect x="11" y="15" width="2" height="4" fill="#ff3200"/><rect x="37" y="40" width="3" height="2" fill="#ff5400"/><rect x="28" y="31" width="3" height="4" fill="#ff4900"/><rect x="21" y="13" width="2" height="2" fill="#ff7500"/><rect x="27" y="37" width="1" height="3" fill="#ff4d00"/><rect x="8" y="14" width="3" height="4" fill="#ffa300"/><rect x="0" y="39" width="1" height="3" fill="#ff5100"/><rect x="23" y="26" width="2" height="2" fill="#ff6f00"/><rect x="12" y="41" width="2" height="4" fill="#ff6f00"/><rect x="38" y="41" width="1" height="2" fill="#ff5800"/><rect x="46" y="4" width="1" height="3" fill="#ff6100"/><rect x="10" y="8" width="3" height="3" fill="#ff5f00"/><rect x="10" y="44" width="1" height="3" fill="#ff5400"/><rect x="3" y="28" width="1" height="2" fill="#ff3800"/><rect x="5" y="8" width="3" height="4" fill="#ff7a00"/><rect x="24" y="39" width="2" height="3" fill="#ff3200"/><rect x="47" y="9" width="3" height="3" fill="#ff5200"/><rect x="13" y="3" width="3" height="2" fill="#ff6700"/><rect x="41" y="32" width="1" height="3" fill="#ff6f00"/><rect x="40" y="42" width="1" height="4" fill="#ff5200"/><rect x="16" y="21" width="1" height="4" fill="#ff6600"/><rect x="9" y="26" width="2" height="2" fill="#ff6700"/><rect x="15" y="26" width="2" height="4" fill="#ff5200"/><rect x="47" y="35" width="1" height="3" fill="#ff4600"/><rect x="5" y="22" width="1" height="2" fill="#ff7400"/><rect x="21" y="18" width="1" height="3" fill="#ff3f00"/><rect x="25" y="36" width="2" height="4" fill="#ff5500"/><rect x="38" y="20" width="3" height="3" fill="#ff8900"/><rect x="11" y="14" width="1" height="3" fill="#ff6600"/><rect x="38" y="43" width="1" height="3" fill="#ff6a00"/><rect x="25" y="3" width="3" height="3" fill="#ff6a00"/><rect x="22" y="36" width="1" height="4" fill="#ff3100"/><rect x="33" y="24" width="1" height="2" fill="#ff8a00"/><rect x="12" y="16" width="3" height="2" fill="#ff5e00"/><rect x="29" y="43" width="1" height="3" fill="#ffa200"/><rect x="37" y="7" width="2" height="3" fill="#ff6800"/><rect x="40" y="12" width="1" height="3" fill="#ff5b00"/><rect x="23" y="44" width="3" height="2" fill="#ff6e00"/><rect x="8" y="39" width="1" height="3" fill="#ff4200"/><rect x="21" y="21" width="1" height="3" fill="#ff5800"/><rect x="19" y="2" width="1" height="2" fill="#ff4f00"/><rect x="28" y="35" width="3" height="3" fill="#ff7c00"/><rect x="39" y="25" width="2" height="2" fill="#ff8100"/><rect x="47" y="3" width="3" height="4" fill="#ff6100"/><rect x="24" y="21" width="3" height="3" fill="#ff6c00"/><rect x="17" y="44" width="2" height="2" fill="#ff8200"/><rect x="42" y="37" width="1" height="3" fill="#ff4700"/><rect x="22" y="15" width="2" height="3" fill="#ff6500"/><rect x="43" y="39" width="1" height="2" fill="#ff6400"/><rect x="22" y="34" width="2" height="2" fill="#ff7000"/><rect x="27" y="35" width="2" height="2" fill="#ff6200"/><rect x="21" y="43" width="3" height="4" fill="#ff8100"/><rect x="34" y="13" width="3" height="3" fill="#ff5300"/><rect x="7" y="0" width="1" height="3" fill="#ff6800"/><rect x="36" y="42" width="1" height="2" fill="#ff5c00"/><rect x="23" y="15" width="3" height="4" fill="#ff7900"/><rect x="35" y="0" width="3" height="3" fill="#ff4a00"/><rect x="23" y="27" width="3" height="4" fill="#ff7900"/><rect x="49" y="28" width="1" height="3" fill="#ff7100"/><rect x="45" y="0" width="1" height="3" fill="#ff5900"/><rect x="30" y="12" width="3" height="3" fill="#ff4700"/><rect x="46" y="44" width="1" height="4" fill="#ff6200"/><rect x="1" y="13" width="1" height="3" fill="#ff5f00"/><rect x="2" y="30" width="1" height="3" fill="#ff6800"/><rect x="40" y="26" width="1" height="3" fill="#ff6600"/><rect x="6" y="31" width="2" height="2" fill="#ff7900"/><rect x="21" y="2" width="1" height="2" fill="#ff5900"/><rect x="2" y="35" width="3" height="3" fill="#ff8300"/><rect x="0" y="29" width="1" height="2" fill="#ff6a00"/><rect x="20" y="22" width="1" height="4" fill="#ff8300"/><rect x="35" y="4" width="3" height="3" fill="#ff5200"/><rect x="38" y="19" width="2" height="2" fill="#ffa000"/><rect x="8" y="26" width="1" height="3" fill="#ff8400"/><rect x="46" y="1" width="3" height="2" fill="#ff5200"/><rect x="33" y="5" width="2" height="2" fill="#ff9300"/><rect x="45" y="9" width="2" height="3" fill="#ff6800"/><rect x="45" y="13" width="1" height="2" fill="#ff7200"/><rect x="1" y="10" width="2" height="3" fill="#ff6d00"/><rect x="24" y="21" width="1" height="3" fill="#ff6500"/><rect x="49" y="23" width="2" height="4" fill="#ff7a00"/><rect x="22" y="8" width="1" height="4" fill="#ff4800"/><rect x="10" y="15" width="1" height="3" fill="#ff6f00"/><rect x="7" y="42" width="2" height="3" fill="#ff6a00"/><rect x="9" y="44" width="1" height="4" fill="#ff4b00"/><rect x="3" y="4" width="2" height="3" fill="#ff6400"/><rect x="18" y="23" width="3" height="3" fill="#ff2900"/><rect x="32" y="22" width="3" height="3" fill="#ff4d00"/><rect x="21" y="25" width="1" height="2" fill="#ff7c00"/><rect x="49" y="11" width="2" height="3" fill="#ff4900"/><rect x="22" y="23" width="1" height="3" fill="#ff5f00"/><rect x="21" y="9" width="3" height="4" fill="#ff3800"/><rect x="1" y="13" width="3" height="3" fill="#ff8500"/><rect x="29" y="22" width="2" height="2" fill="#ff6700"/><rect x="3" y="33" width="3" height="3" fill="#ff6c00"/><rect x="5" y="34" width="1" height="4" fill="#ff6a00"/><rect x="47" y="43" width="2" height="2" fill="#ff8e00"/><rect x="36" y="10" width="1" height="3" fill="#ff4c00"/><rect x="37" y="35" width="2" height="3" fill="#ff7700"/><rect x="17" y="24" width="3" height="3" fill="#ff8200"/><rect x="34" y="28" width="3" height="3" fill="#ff5f00"/><rect x="16" y="40" width="2" height="3" fill="#ff7e00"/><rect x="37" y="19" width="1" height="2" fill="#ff6500"/><rect x="48" y="11" width="1" height="3" fill="#ff6a00"/><rect x="20" y="41" width="1" height="3" fill="#ff6100"/><rect x="48" y="19" width="2" height="2" fill="#ff4e00"/><rect x="34" y="28" width="2" height="3" fill="#ff5800"/><rect x="18" y="11" width="3" height="4" fill="#ff5600"/><rect x="25" y="3" width="2" height="2" fill="#ff8700"/><rect x="6" y="7" width="2" height="2" fill="#ff6700"/><rect x="2" y="31" width="1" height="4" fill="#ff6600"/><rect x="16" y="34" width="3" height="3" fill="#ff8600"/><rect x="7" y="26" width="2" height="3" fill="#ff5000"/><rect x="4" y="43" width="3" height="3" fill="#ff6600"/><rect x="38" y="20" width="2" height="3" fill="#ff4800"/><rect x="11" y="32" width="2" height="2" fill="#ff6b00"/><rect x="15" y="28" width="3" height="3" fill="#ff6300"/><rect x="33" y="36" width="2" height="3" fill="#ff5400"/><rect x="49" y="4" width="1" height="4" fill="#ff7300"/><rect x="31" y="40" width="3" height="3" fill="#ff9000"/><rect x="49" y="9" width="2" height="3" fill="#ff5800"/><rect x="40" y="43" width="2" height="3" fill="#ff6300"/><rect x="33" y="14" width="2" height="2" fill="#ff4e00"/><rect x="29" y="14" width="1" height="3" fill="#ff5900"/><rect x="2" y="39" width="2" height="4" fill="#ff7400"/><rect x="7" y="18" width="2" height="3" fill="#ff8100"/><rect x="21" y="23" width="1" height="4" fill="#ff6b00"/><rect x="12" y="13" width="1" height="3" fill="#ff6a00"/><rect x="2" y="13" width="2" height="3" fill="#ff4600"/><rect x="48" y="35" width="2" height="3" fill="#ff5700"/><rect x="10" y="35" width="2" height="2" fill="#ff7600"/><rect x="49" y="9" width="1" height="4" fill="#ff3f00"/><rect x="28" y="1" width="3" height="3" fill="#ff6a00"/><rect x="38" y="6" width="2" height="2" fill="#ff6300"/><rect x="17" y="24" width="1" height="3" fill="#ff8a00"/><rect x="36" y="24" width="2" height="2" fill="#ff7000"/><rect x="30" y="41" width="2" height="4" fill="#ff5f00"/><rect x="5" y="11" width="1" height="4" fill="#ff7b00"/><rect x="2" y="38" width="3" height="2" fill="#ff4700"/><rect x="24" y="10" width="1" height="3" fill="#ff8500"/><rect x="31" y="26" width="1" height="2" fill="#ff6700"/><rect x="24" y="5" width="2" height="4" fill="#ff8c00"/><rect x="34" y="22" width="1" height="3" fill="#ff7a00"/><rect x="5" y="26" width="3" height="2" fill="#ff4800"/><rect x="6" y="21" width="1" height="2" fill="#ff7a00"/><rect x="28" y="27" width="2" height="3" fill="#ff5900"/><rect x="6" y="21" width="2" height="4" fill="#ff5e00"/><rect x="37" y="10" width="1" height="3" fill="#ff7000"/><rect x="22" y="36" width="1" height="4" fill="#ff7900"/><rect x="18" y="41" width="1" height="2" fill="#ff6e00"/><rect x="37" y="40" width="3" height="2" fill="#ff4b00"/><rect x="5" y="24" width="3" height="4" fill="#ff6800"/><rect x="8" y="32" width="3" height="3" fill="#ff6100"/><rect x="27" y="33" width="1" height="2" fill="#ff8900"/><rect x="35" y="16" width="2" height="4" fill="#ff3100"/><rect x="45" y="23" width="1" height="4" fill="#ff8d00"/><rect x="13" y="2" width="3" height="2" fill="#ff3a00"/><rect x="48" y="31" width="1" height="3" fill="#ff6e00"/><rect x="6" y="43" width="2" height="4" fill="#ff8000"/><rect x="29" y="9" width="3" height="3" fill="#ff4700"/><rect x="36" y="23" width="2" height="3" fill="#ff6000"/><rect x="42" y="31" width="1" height="4" fill="#ff6100"/><rect x="32" y="30" width="1" height="3" fill="#ff5c00"/><rect x="42" y="18" width="3" height="4" fill="#ff7c00"/><rect x="28" y="44" width="1" height="3" fill="#ff7700"/><rect x="14" y="11" width="1" height="3" fill="#ff7500"/><rect x="29" y="26" width="1" height="3" fill="#ff8b00"/><rect x="20" y="10" width="2" height="3" fill="#ff6100"/><rect x="39" y="9" width="2" height="4" fill="#ff7600"/><rect x="42" y="27" width="1" height="3" fill="#ff6400"/><rect x="47" y="3" width="3" height="3" fill="#ff7400"/><rect x="6" y="10" width="2" height="3" fill="#ffa300"/><rect x="30" y="15" width="3" height="3" fill="#ff4000"/><rect x="19" y="38" width="1" height="3" fill="#ff6800"/><rect x="12" y="0" width="1" height="3" fill="#ff6500"/><rect x="22" y="30" width="3" height="3" fill="#ff3f00"/><rect x="44" y="6" width="3" height="2" fill="#ff5f00"/><rect x="36" y="17" width="2" height="4" fill="#ff4a00"/><rect x="47" y="30" width="1" height="3" fill="#ff5a00"/><rect x="12" y="32" width="2" height="3" fill="#ff7200"/><rect x="4" y="7" width="3" height="3" fill="#ff5400"/><rect x="36" y="34" width="2" height="2" fill="#ff5600"/><rect x="11" y="38" width="2" height="3" fill="#ff5600"/><rect x="43" y="2" width="2" height="3" fill="#ff4400"/><rect x="49" y="26" width="1" height="2" fill="#ff6000"/><rect x="37" y="41" width="1" height="3" fill="#ff6200"/><rect x="2" y="41" width="1" height="4" fill="#ff2900"/><rect x="47" y="26" width="2" height="3" fill="#ff5300"/><rect x="47" y="15" width="1" height="4" fill="#ff7000"/><rect x="19" y="5" width="3" height="4" fill="#ff8300"/><rect x="6" y="14" width="2" height="4" fill="#ff7d00"/><rect x="9" y="25" width="1" height="4" fill="#ff4f00"/><rect x="31" y="27" width="2" height="3" fill="#ff6000"/><rect x="47" y="37" width="2" height="3" fill="#ff7300"/><rect x="42" y="44" width="2" height="2" fill="#ff9a00"/><rect x="8" y="1" width="2" height="3" fill="#ff8f00"/><rect x="37" y="25" width="1" height="4" fill="#ff6700"/><rect x="32" y="5" width="3" height="3" fill="#ff6200"/><rect x="28" y="40" width="1" height="2" fill="#ff7300"/><rect x="43" y="16" width="2" height="4" fill="#ff5400"/><rect x="34" y="4" width="3" height="3" fill="#ff5a00"/><rect x="3" y="4" width="2" height="2" fill="#ff6600"/><rect x="24" y="32" width="1" height="2" fill="#ff7300"/><rect x="35" y="44" width="1" height="4" fill="#ff5500"/><rect x="39" y="5" width="3" height="2" fill="#ff6100"/></pattern><linearGradient id="cb"><stop offset="0.000" stop-color="#000080"/><stop offset="0.016" stop-color="#00008f"/><stop offset="0.031" stop-color="#00009f"/><stop offset="0.047" stop-color="#0000af"/><stop offset="0.062" stop-color="#0000bf"/><stop offset="0.078" stop-color="#0000cf"/><stop offset="0.094" stop-color="#0000df"/><stop offset="0.109" stop-color="#0000ef"/><stop offset="0.125" stop-color="#0000ff"/><stop offset="0.141" stop-color="#0010ff"/><stop offset="0.156" stop-color="#0020ff"/><stop offset="0.172" stop-color="#0030ff"/><stop offset="0.188" stop-color="#0040ff"/><stop offset="0.203" stop-color="#0050ff"/><stop offset="0.219" stop-color="#0060ff"/><stop offset="0.234" stop-color="#0070ff"/><stop offset="0.250" stop-color="#0080ff"/><stop offset="0.266" stop-color="#008fff"/><stop offset="0.281" stop-color="#009fff"/><stop offset="0.297" stop-color="#00afff"/><stop offset="0.312" stop-color="#00bfff"/><stop offset="0.328" stop-color="#00cfff"/><stop offset="0.344" stop-color="#00dfff"/><stop offset="0.359" stop-color="#00efff"/><stop offset="0.375" stop-color="#00ffff"/><stop offset="0.391" stop-color="#10ffef"/><stop offset="0.406" stop-color="#20ffdf"/><stop offset="0.422" stop-color="#30ffcf"/><stop offset="0.438" stop-color="#40ffbf"/><stop offset="0.453" stop-color="#50ffaf"/><stop offset="0.469" stop-color="#60ff9f"/><stop offset="0.484" stop-color="#70ff8f"/><stop offset="0.500" stop-color="#80ff80"/><stop offset="0.516" stop-color="#8fff70"/><stop offset="0.531" stop-color="#9fff60"/><stop offset="0.547" stop-color="#afff50"/><stop offset="0.562" stop-color="#bfff40"/><stop offset="0.578" stop-color="#cfff30"/><stop offset="0.594" stop-color="#dfff20"/><stop offset="0.609" stop-color="#efff10"/><stop offset="0.625" stop-color="#ffff00"/><stop offset="0.641" stop-color="#ffef00"/><stop offset="0.656" stop-color="#ffdf00"/><stop offset="0.672" stop-color="#ffcf00"/><stop offset="0.688" stop-color="#ffbf00"/><stop offset="0.703" stop-color="#ffaf00"/><stop offset="0.719" stop-color="#ff9f00"/><stop offset="0.734" stop-color="#ff8f00"/><stop offset="0.750" stop-color="#ff8000"/><stop offset="0.766" stop-color="#ff7000"/><stop offset="0.781" stop-color="#ff6000"/><stop offset="0.797" stop-color="#ff5000"/><stop offset="0.812" stop-color="#ff4000"/><stop offset="0.828" stop-color="#ff3000"/><stop offset="0.844" stop-color="#ff2000"/><stop offset="0.859" stop-color="#ff1000"/><stop offset="0.875" stop-color="#ff0000"/><stop offset="0.891" stop-color="#ef0000"/><stop offset="0.906" stop-color="#df0000"/><stop offset="0.922" stop-color="#cf0000"/><stop offset="0.938" stop-color="#bf0000"/><stop offset="0.953" stop-color="#af0000"/><stop offset="0.969" stop-color="#9f0000"/><stop offset="0.984" stop-color="#8f0000"/><stop offset="1.000" stop-color="#800000"/></linearGradient></defs>
<text x="414" y="46" font-size="13" fill="#e2e2e2" stroke="#e2e2e2" stroke-width="0.15" text-anchor="middle">160 MHz EHT MU Transmission with Punctured 20 MHz Channels</text>
<rect x="47" y="50" width="735" height="160" fill="#141414"/>
<rect x="48" y="51" width="733" height="158" fill="#151515"/>
<path d="M170.5,52V208M292.5,52V208M414.5,52V208M536.5,52V208M658.5,52V208M49,65.5H780M49,108.5H780M49,151.5H780M49,194.5H780" stroke="#4b4b4b" stroke-width="1" fill="none"/>
<path d="M48.5,186.2 L49.0,185.9 L49.4,185.5 L49.9,185.2 L50.3,185.0 L50.8,184.8 L51.2,184.8 L51.7,184.8 L52.2,184.8 L52.6,184.9 L53.1,185.0 L53.5,185.1 L54.0,185.2 L54.4,185.3 L54.9,185.5 L55.4,185.6 L55.8,185.8 L56.3,186.0 L56.7,186.2 L57.2,186.5 L57.6,186.7 L58.1,187.0 L58.6,187.3 L59.0,187.6 L59.5,188.0 L59.9,188.3 L60.4,188.7 L60.9,189.1 L61.3,189.6 L61.8,190.0 L62.2,190.5 L62.7,191.1 L63.1,191.6 L63.6,192.2 L64.1,192.9 L64.5,193.6 L65.0,194.5 L65.4,195.5 L65.9,196.8 L66.3,198.2 L66.8,199.0 L67.3,198.9 L67.7,197.7 L68.2,195.8 L68.6,193.7 L69.1,191.9 L69.5,190.4 L70.0,189.2 L70.5,188.2 L70.9,187.2 L71.4,186.3 L71.8,185.5 L72.3,184.7 L72.7,184.0 L73.2,183.3 L73.7,182.6 L74.1,182.0 L74.6,181.4 L75.0,180.8 L75.5,180.2 L75.9,179.7 L76.4,179.2 L76.9,178.8 L77.3,178.3 L77.8,177.9 L78.2,177.5 L78.7,177.1 L79.2,176.8 L79.6,176.5 L80.1,176.1 L80.5,175.9 L81.0,175.6 L81.4,175.4 L81.9,175.1 L82.4,174.9 L82.8,174.8 L83.3,174.6 L83.7,174.5 L84.2,174.3 L84.6,174.2 L85.1,174.2 L85.6,174.1 L86.0,174.1 L86.5,174.0 L86.9,174.1 L87.4,174.1 L87.8,174.1 L88.3,174.2 L88.8,174.3 L89.2,174.5 L89.7,174.7 L90.1,174.9 L90.6,175.1 L91.0,175.4 L91.5,175.6 L92.0,176.0 L92.4,176.3 L92.9,176.7 L93.3,177.1 L93.8,177.6 L94.2,178.1 L94.7,178.6 L95.2,179.2 L95.6,179.8 L96.1,180.4 L96.5,181.2 L97.0,182.0 L97.5,182.9 L97.9,184.1 L98.4,185.6 L98.8,187.0 L99.3,187.7 L99.7,187.3 L100.2,185.8 L100.7,183.6 L101.1,181.4 L101.6,179.4 L102.0,177.9 L102.5,176.6 L102.9,175.5 L103.4,174.4 L103.9,173.5 L104.3,172.5 L104.8,171.7 L105.2,170.9 L105.7,170.1 L106.1,169.4 L106.6,168.7 L107.1,168.0 L107.5,167.4 L108.0,166.7 L108.4,166.2 L108.9,165.6 L109.3,165.1 L109.8,164.6 L110.3,164.1 L110.7,163.6 L111.2,163.2 L111.6,162.8 L112.1,162.4 L112.5,162.0 L113.0,161.7 L113.5,161.4 L113.9,161.1 L114.4,160.8 L114.8,160.5 L115.3,160.3 L115.8,160.1 L116.2,159.9 L116.7,159.7 L117.1,159.5 L117.6,159.4 L118.0,159.3 L118.5,159.2 L119.0,159.1 L119.4,159.1 L119.9,159.0 L120.3,159.0 L120.8,159.0 L121.2,159.1 L121.7,159.2 L122.2,159.4 L122.6,159.6 L123.1,159.9 L123.5,160.3 L124.0,160.7 L124.4,161.1 L124.9,161.7 L125.4,162.3 L125.8,162.9 L126.3,163.6 L126.7,164.4 L127.2,165.3 L127.6,166.3 L128.1,167.4 L128.6,168.7 L129.0,170.2 L129.5,172.2 L129.9,174.1 L130.4,175.1 L130.8,174.5 L131.3,172.3 L131.8,169.2 L132.2,166.1 L132.7,163.4 L133.1,161.1 L133.6,159.1 L134.1,157.2 L134.5,155.6 L135.0,154.1 L135.4,152.7 L135.9,151.4 L136.3,150.2 L136.8,149.0 L137.3,147.9 L137.7,146.9 L138.2,145.9 L138.6,144.9 L139.1,143.9 L139.5,143.0 L140.0,142.1 L140.5,141.3 L140.9,140.5 L141.4,139.7 L141.8,138.9 L142.3,138.2 L142.7,137.4 L143.2,136.7 L143.7,136.1 L144.1,135.4 L144.6,134.8 L145.0,134.2 L145.5,133.6 L145.9,133.0 L146.4,132.4 L146.9,131.9 L147.3,131.3 L147.8,130.8 L148.2,130.3 L148.7,129.8 L149.1,129.3 L149.6,128.8 L150.1,128.4 L150.5,127.9 L151.0,127.4 L151.4,127.0 L151.9,126.5 L152.4,126.1 L152.8,125.6 L153.3,125.2 L153.7,124.7 L154.2,124.3 L154.6,123.8 L155.1,123.4 L155.6,122.9 L156.0,122.5 L156.5,122.0 L156.9,121.5 L157.4,121.1 L157.8,120.6 L158.3,120.1 L158.8,119.6 L159.2,119.2 L159.7,118.7 L160.1,118.2 L160.6,117.8 L161.0,117.3 L161.5,116.9 L162.0,116.4 L162.4,115.9 L162.9,115.5 L163.3,115.0 L163.8,114.5 L164.2,114.1 L164.7,113.6 L165.2,113.1 L165.6,112.7 L166.1,112.2 L166.5,111.7 L167.0,111.2 L167.4,110.8 L167.9,110.3 L168.4,109.8 L168.8,109.3 L169.3,108.6 L169.7,107.9 L170.2,107.1 L170.7,106.0 L171.1,104.7 L171.7,102.8 L172.0,101.3 L172.3,98.9 L172.6,94.9 L172.9,69.8 L173.2,62.7 L173.5,70.3 L173.8,71.0 L174.1,79.1 L174.4,69.3 L174.7,70.4 L175.0,71.2 L175.3,68.1 L175.6,67.7 L175.9,73.2 L176.1,72.5 L176.4,71.0 L176.7,66.7 L177.0,67.1 L177.3,74.1 L177.6,73.4 L177.9,66.5 L178.2,63.4 L178.5,69.3 L178.8,71.8 L179.0,65.1 L179.3,70.4 L179.6,66.5 L179.9,63.5 L180.2,66.9 L180.5,69.0 L180.8,66.5 L181.1,71.6 L181.4,69.9 L181.6,71.4 L181.9,70.0 L182.2,71.0 L182.5,69.9 L182.8,70.6 L183.1,68.9 L183.4,69.0 L183.7,68.1 L184.0,64.0 L184.3,75.0 L184.5,64.4 L184.8,70.1 L185.1,73.8 L185.4,69.9 L185.7,68.9 L186.0,65.2 L186.3,73.2 L186.6,68.4 L186.9,68.8 L187.2,75.5 L187.4,73.6 L187.7,67.0 L188.0,66.6 L188.3,65.2 L188.6,67.2 L188.9,67.8 L189.2,68.8 L189.5,64.7 L189.8,72.4 L190.1,69.8 L190.3,67.8 L190.6,75.1 L190.9,64.3 L191.2,72.2 L191.5,69.5 L191.8,61.2 L192.1,72.3 L192.4,71.2 L192.7,63.4 L192.9,73.3 L193.2,70.8 L193.5,67.3 L193.8,67.5 L194.1,67.0 L194.4,67.8 L194.7,64.2 L195.0,65.4 L195.3,67.0 L195.6,71.8 L195.8,71.9 L196.1,76.3 L196.4,66.7 L196.7,76.0 L197.0,66.0 L197.3,62.3 L197.6,73.2 L197.9,71.8 L198.2,71.0 L198.5,66.1 L198.7,72.4 L199.0,69.7 L199.3,71.2 L199.6,70.2 L199.9,64.4 L200.2,72.8 L200.5,69.0 L200.8,68.2 L201.1,66.0 L201.4,73.9 L201.6,65.1 L201.9,67.6 L202.2,66.0 L202.5,69.0 L202.8,75.3 L203.1,71.6 L203.4,66.2 L203.7,69.1 L204.0,69.4 L204.2,62.6 L204.5,61.0 L204.8,69.4 L205.1,62.0 L205.4,76.7 L205.7,76.9 L206.0,66.0 L206.3,70.2 L206.6,67.1 L206.9,67.3 L207.1,69.6 L207.4,66.7 L207.7,68.7 L208.0,74.9 L208.3,68.4 L208.6,68.5 L208.9,62.4 L209.2,73.4 L209.5,69.2 L209.8,70.8 L210.0,69.7 L210.3,63.0 L210.6,67.8 L210.9,71.0 L211.2,68.7 L211.5,66.4 L211.8,72.9 L212.1,70.2 L212.4,63.5 L212.7,66.0 L212.9,69.4 L213.2,71.0 L213.5,69.8 L213.8,75.0 L214.1,65.7 L214.4,68.0 L214.7,68.7 L215.0,74.1 L215.3,71.9 L215.5,67.3 L215.8,68.3 L216.1,71.1 L216.4,67.3 L216.7,65.7 L217.0,71.7 L217.3,71.2 L217.6,72.5 L217.9,73.5 L218.2,66.3 L218.4,67.3 L218.7,68.0 L219.0,73.6 L219.3,73.1 L219.6,69.5 L219.9,70.8 L220.2,68.8 L220.5,71.8 L220.8,66.8 L221.1,62.5 L221.3,63.5 L221.6,63.2 L221.9,69.0 L222.2,65.8 L222.5,70.6 L222.8,65.8 L223.1,70.6 L223.4,71.0 L223.7,71.6 L224.0,66.6 L224.2,68.2 L224.5,68.5 L224.8,73.5 L225.1,68.7 L225.4,74.6 L225.7,63.7 L226.0,69.7 L226.3,68.5 L226.6,69.6 L226.8,75.1 L227.1,74.3 L227.4,69.3 L227.7,63.7 L228.0,73.4 L228.3,71.9 L228.6,69.4 L228.9,75.5 L229.2,75.6 L229.5,70.8 L229.7,69.4 L230.0,70.7 L230.4,69.8 L230.7,88.6 L231.0,93.3 L231.3,95.7 L231.7,97.5 L232.4,100.2 L232.9,101.8 L233.3,103.1 L233.8,104.3 L234.2,105.5 L234.7,106.5 L235.2,107.4 L235.6,108.2 L236.1,109.0 L236.5,109.7 L237.0,110.3 L237.4,111.0 L237.9,111.6 L238.4,112.2 L238.8,112.7 L239.3,113.2 L239.7,113.8 L240.2,114.2 L240.6,114.7 L241.1,115.2 L241.6,115.7 L242.0,116.1 L242.5,116.6 L242.9,117.1 L243.4,117.6 L243.9,118.1 L244.3,118.6 L244.8,119.2 L245.2,119.7 L245.7,120.2 L246.1,120.8 L246.6,121.3 L247.1,121.9 L247.5,122.4 L248.0,123.0 L248.4,123.5 L248.9,124.0 L249.3,124.6 L249.8,125.1 L250.3,125.7 L250.7,126.2 L251.2,126.8 L251.6,127.3 L252.1,127.9 L252.5,128.4 L253.0,129.0 L253.5,129.5 L253.9,130.1 L254.4,130.6 L254.8,131.2 L255.3,131.8 L255.7,132.4 L256.2,133.0 L256.7,133.7 L257.1,134.4 L257.6,135.2 L258.0,135.9 L258.5,136.6 L258.9,137.2 L259.4,137.8 L259.9,138.3 L260.3,138.7 L260.8,138.9 L261.2,139.0 L261.7,139.0 L262.2,138.9 L262.6,138.6 L263.1,138.3 L263.5,137.8 L264.0,137.3 L264.4,136.7 L264.9,136.1 L265.4,135.5 L265.8,134.9 L266.3,134.2 L266.7,133.7 L267.2,133.1 L267.6,132.6 L268.1,132.1 L268.6,131.6 L269.0,131.1 L269.5,130.6 L269.9,130.1 L270.4,129.6 L270.8,129.2 L271.3,128.7 L271.8,128.2 L272.2,127.7 L272.7,127.2 L273.1,126.7 L273.6,126.2 L274.0,125.7 L274.5,125.2 L275.0,124.8 L275.4,124.3 L275.9,123.8 L276.3,123.3 L276.8,122.8 L277.2,122.3 L277.7,121.8 L278.2,121.3 L278.6,120.9 L279.1,120.4 L279.5,119.9 L280.0,119.4 L280.5,119.0 L280.9,118.5 L281.4,118.1 L281.8,117.7 L282.3,117.2 L282.7,116.8 L283.2,116.4 L283.7,115.9 L284.1,115.5 L284.6,115.0 L285.0,114.5 L285.5,114.1 L285.9,113.6 L286.4,113.0 L286.9,112.5 L287.3,112.0 L287.8,111.4 L288.2,110.8 L288.7,110.1 L289.1,109.5 L289.6,108.8 L290.1,108.1 L290.5,107.3 L291.0,106.4 L291.4,105.3 L291.9,104.2 L292.3,102.8 L292.8,101.1 L293.3,98.7 L293.3,99.4 L293.6,97.7 L293.9,95.5 L294.2,92.6 L294.5,87.3 L294.8,69.8 L295.1,63.5 L295.4,69.8 L295.7,67.9 L296.0,63.3 L296.3,62.9 L296.5,75.2 L296.8,70.6 L297.1,64.9 L297.4,74.4 L297.7,72.7 L298.0,74.1 L298.3,74.3 L298.6,73.5 L298.9,68.6 L299.1,64.5 L299.4,63.5 L299.7,69.2 L300.0,76.6 L300.3,69.4 L300.6,70.5 L300.9,67.9 L301.2,69.7 L301.5,75.9 L301.8,67.7 L302.0,76.9 L302.3,71.8 L302.6,68.1 L302.9,67.9 L303.2,63.4 L303.5,78.0 L303.8,68.0 L304.1,66.7 L304.4,70.4 L304.7,66.8 L304.9,73.3 L305.2,66.8 L305.5,67.2 L305.8,72.9 L306.1,71.7 L306.4,69.9 L306.7,71.7 L307.0,65.3 L307.3,68.6 L307.6,64.3 L307.8,64.8 L308.1,69.0 L308.4,69.9 L308.7,72.8 L309.0,72.2 L309.3,72.2 L309.6,67.9 L309.9,72.5 L310.2,68.9 L310.4,68.5 L310.7,71.1 L311.0,69.9 L311.3,63.8 L311.6,63.2 L311.9,72.1 L312.2,70.0 L312.5,70.6 L312.8,70.3 L313.1,63.5 L313.3,66.7 L313.6,64.5 L313.9,62.6 L314.2,70.9 L314.5,69.9 L314.8,69.1 L315.1,65.4 L315.4,69.6 L315.7,66.8 L316.0,64.9 L316.2,64.9 L316.5,67.6 L316.8,72.2 L317.1,75.0 L317.4,65.0 L317.7,67.5 L318.0,72.7 L318.3,71.1 L318.6,70.9 L318.9,75.5 L319.1,68.3 L319.4,72.2 L319.7,70.3 L320.0,66.5 L320.3,69.6 L320.6,67.2 L320.9,67.7 L321.2,69.1 L321.5,69.0 L321.7,62.3 L322.0,69.9 L322.3,63.2 L322.6,72.6 L322.9,66.5 L323.2,68.6 L323.5,71.9 L323.8,79.1 L324.1,63.3 L324.4,73.5 L324.6,72.8 L324.9,68.7 L325.2,69.0 L325.5,68.2 L325.8,70.2 L326.1,74.8 L326.4,66.0 L326.7,72.6 L327.0,68.4 L327.3,67.1 L327.5,64.8 L327.8,70.0 L328.1,70.4 L328.4,70.1 L328.7,76.1 L329.0,72.0 L329.3,73.0 L329.6,73.5 L329.9,68.6 L330.2,70.4 L330.4,63.3 L330.7,63.7 L331.0,76.2 L331.3,68.8 L331.6,73.0 L331.9,67.2 L332.2,68.6 L332.5,65.8 L332.8,68.1 L333.0,66.4 L333.3,70.3 L333.6,78.6 L333.9,73.6 L334.2,72.4 L334.5,71.1 L334.8,73.0 L335.1,63.1 L335.4,69.9 L335.7,64.4 L335.9,70.5 L336.2,63.1 L336.5,73.7 L336.8,67.0 L337.1,74.2 L337.4,67.6 L337.7,63.3 L338.0,75.3 L338.3,72.5 L338.6,68.3 L338.8,69.9 L339.1,74.3 L339.4,64.9 L339.7,69.0 L340.0,64.4 L340.3,68.0 L340.6,73.5 L340.9,71.0 L341.2,64.1 L341.5,74.4 L341.7,71.0 L342.0,67.0 L342.3,65.4 L342.6,66.1 L342.9,74.7 L343.2,61.5 L343.5,69.8 L343.8,69.2 L344.1,69.2 L344.3,70.1 L344.6,72.8 L344.9,70.4 L345.2,64.3 L345.5,74.3 L345.8,78.3 L346.1,67.2 L346.4,68.0 L346.7,66.5 L347.0,62.8 L347.2,71.9 L347.5,68.6 L347.8,67.4 L348.1,64.6 L348.4,65.4 L348.7,72.4 L349.0,74.4 L349.3,70.2 L349.6,75.2 L349.9,65.1 L350.1,70.7 L350.4,70.6 L350.7,72.5 L351.0,63.5 L351.3,68.2 L351.6,70.8 L351.9,66.9 L352.2,69.5 L352.5,67.0 L352.8,109.4 L353.0,109.4 L353.3,67.3 L353.6,67.4 L353.9,65.0 L354.2,67.0 L354.5,69.1 L354.8,71.6 L355.1,68.1 L355.4,73.1 L355.7,66.8 L355.9,69.0 L356.2,67.2 L356.5,71.2 L356.8,72.2 L357.1,72.6 L357.4,65.1 L357.7,70.0 L358.0,70.1 L358.3,75.9 L358.5,69.4 L358.8,79.1 L359.1,64.2 L359.4,70.1 L359.7,69.1 L360.0,74.6 L360.3,73.3 L360.6,67.0 L360.9,70.0 L361.2,67.6 L361.4,64.5 L361.7,66.8 L362.0,76.3 L362.3,72.9 L362.6,73.5 L362.9,72.6 L363.2,77.0 L363.5,76.9 L363.8,72.0 L364.1,71.5 L364.3,67.3 L364.6,70.4 L364.9,63.9 L365.2,76.0 L365.5,74.4 L365.8,68.3 L366.1,70.2 L366.4,72.9 L366.7,66.4 L367.0,65.2 L367.2,64.3 L367.5,70.7 L367.8,69.3 L368.1,68.4 L368.4,69.0 L368.7,65.4 L369.0,71.1 L369.3,67.9 L369.6,77.5 L369.8,66.4 L370.1,63.1 L370.4,69.3 L370.7,65.4 L371.0,75.4 L371.3,70.5 L371.6,75.0 L371.9,68.0 L372.2,67.3 L372.5,74.3 L372.7,72.4 L373.0,71.4 L373.3,60.3 L373.6,69.5 L373.9,68.8 L374.2,67.9 L374.5,68.1 L374.8,70.1 L375.1,74.2 L375.4,71.8 L375.6,63.1 L375.9,68.3 L376.2,70.6 L376.5,74.3 L376.8,69.4 L377.1,69.1 L377.4,71.7 L377.7,65.9 L378.0,71.4 L378.3,69.9 L378.5,66.1 L378.8,68.4 L379.1,65.0 L379.4,70.1 L379.7,70.8 L380.0,67.5 L380.3,68.4 L380.6,64.8 L380.9,67.7 L381.1,69.3 L381.4,67.6 L381.7,66.8 L382.0,73.4 L382.3,69.8 L382.6,70.5 L382.9,64.8 L383.2,71.0 L383.5,65.3 L383.8,73.9 L384.0,69.4 L384.3,65.2 L384.6,70.2 L384.9,64.9 L385.2,76.8 L385.5,69.1 L385.8,68.6 L386.1,69.7 L386.4,74.8 L386.7,66.7 L386.9,77.9 L387.2,65.7 L387.5,68.1 L387.8,65.5 L388.1,70.2 L388.4,73.4 L388.7,71.1 L389.0,71.0 L389.3,67.0 L389.6,70.4 L389.8,67.7 L390.1,67.4 L390.4,63.9 L390.7,76.6 L391.0,70.7 L391.3,66.6 L391.6,66.6 L391.9,71.3 L392.2,70.2 L392.4,69.5 L392.7,68.7 L393.0,71.3 L393.3,71.6 L393.6,73.3 L393.9,70.6 L394.2,64.0 L394.5,72.7 L394.8,65.6 L395.1,61.9 L395.3,68.4 L395.6,60.4 L395.9,69.7 L396.2,62.9 L396.5,69.3 L396.8,73.6 L397.1,67.8 L397.4,62.1 L397.7,71.3 L398.0,67.3 L398.2,72.8 L398.5,72.4 L398.8,67.4 L399.1,69.8 L399.4,67.0 L399.7,64.3 L400.0,73.5 L400.3,71.6 L400.6,68.9 L400.9,60.4 L401.1,70.3 L401.4,70.8 L401.7,67.4 L402.0,61.2 L402.3,71.2 L402.6,70.1 L402.9,68.8 L403.2,66.2 L403.5,60.9 L403.7,73.6 L404.0,75.2 L404.3,68.4 L404.6,67.0 L404.9,77.3 L405.2,71.2 L405.5,65.4 L405.8,70.9 L406.1,67.1 L406.4,68.3 L406.6,66.5 L406.9,67.3 L407.2,67.9 L407.5,64.2 L407.8,71.0 L408.1,68.4 L408.4,64.7 L408.7,71.0 L409.0,70.2 L409.3,71.7 L409.5,72.4 L409.8,61.3 L410.1,67.1 L410.4,61.8 L410.7,66.1 L411.0,68.5 L411.3,73.1 L411.6,78.9 L411.9,83.4 L412.2,86.9 L412.4,89.4 L412.7,91.2 L413.0,92.4 L413.3,93.1 L413.6,93.5 L413.9,93.7 L414.2,93.7 L414.5,93.7 L414.8,93.7 L415.0,93.7 L415.3,93.5 L415.6,93.2 L415.9,92.6 L416.2,91.5 L416.5,89.8 L416.8,87.5 L417.1,84.2 L417.4,79.9 L417.7,74.4 L417.9,66.6 L418.2,63.2 L418.5,70.2 L418.8,66.7 L419.1,69.9 L419.4,65.3 L419.7,64.6 L420.0,67.1 L420.3,66.2 L420.6,72.0 L420.8,66.7 L421.1,73.4 L421.4,61.0 L421.7,64.7 L422.0,74.7 L422.3,79.0 L422.6,64.2 L422.9,72.3 L423.2,67.1 L423.5,73.9 L423.7,68.8 L424.0,71.5 L424.3,66.9 L424.6,70.4 L424.9,63.6 L425.2,72.0 L425.5,64.4 L425.8,69.2 L426.1,67.2 L426.3,75.1 L426.6,75.7 L426.9,65.3 L427.2,73.7 L427.5,70.4 L427.8,70.4 L428.1,72.5 L428.4,68.4 L428.7,74.4 L429.0,73.6 L429.2,65.8 L429.5,72.2 L429.8,66.4 L430.1,66.7 L430.4,63.6 L430.7,67.5 L431.0,76.0 L431.3,71.6 L431.6,70.7 L431.9,64.6 L432.1,67.9 L432.4,71.0 L432.7,67.6 L433.0,70.6 L433.3,67.2 L433.6,68.7 L433.9,65.1 L434.2,68.0 L434.5,65.5 L434.8,69.3 L435.0,66.6 L435.3,69.8 L435.6,66.8 L435.9,68.4 L436.2,69.7 L436.5,70.8 L436.8,70.2 L437.1,67.5 L437.4,77.8 L437.6,64.6 L437.9,78.0 L438.2,69.9 L438.5,70.5 L438.8,66.5 L439.1,68.3 L439.4,69.4 L439.7,68.9 L440.0,65.7 L440.3,60.5 L440.5,67.8 L440.8,76.9 L441.1,70.8 L441.4,67.7 L441.7,60.3 L442.0,72.1 L442.3,70.6 L442.6,67.1 L442.9,68.0 L443.2,74.2 L443.4,65.7 L443.7,74.1 L444.0,70.2 L444.3,64.3 L444.6,74.1 L444.9,70.5 L445.2,63.0 L445.5,70.2 L445.8,73.1 L446.1,71.4 L446.3,66.1 L446.6,75.1 L446.9,71.6 L447.2,74.7 L447.5,73.5 L447.8,64.4 L448.1,69.5 L448.4,70.9 L448.7,67.6 L448.9,71.9 L449.2,73.7 L449.5,65.0 L449.8,66.0 L450.1,72.4 L450.4,66.6 L450.7,63.8 L451.0,67.4 L451.3,67.4 L451.6,73.9 L451.8,69.7 L452.1,76.2 L452.4,65.1 L452.7,69.9 L453.0,64.3 L453.3,72.1 L453.6,66.0 L453.9,75.2 L454.2,70.8 L454.5,67.2 L454.7,67.9 L455.0,69.5 L455.3,75.4 L455.6,64.3 L455.9,66.8 L456.2,65.0 L456.5,65.0 L456.8,70.6 L457.1,67.8 L457.4,60.3 L457.6,72.4 L457.9,67.7 L458.2,71.3 L458.5,62.7 L458.8,68.6 L459.1,73.1 L459.4,71.5 L459.7,74.5 L460.0,77.8 L460.2,79.1 L460.5,72.0 L460.8,73.5 L461.1,68.7 L461.4,72.4 L461.7,68.4 L462.0,62.6 L462.3,73.7 L462.6,73.8 L462.9,65.5 L463.1,60.4 L463.4,72.5 L463.7,75.6 L464.0,70.3 L464.3,70.8 L464.6,66.6 L464.9,73.2 L465.2,70.2 L465.5,70.4 L465.8,75.2 L466.0,75.2 L466.3,67.6 L466.6,67.2 L466.9,72.2 L467.2,63.3 L467.5,65.7 L467.8,67.5 L468.1,66.9 L468.4,67.9 L468.7,66.5 L468.9,66.0 L469.2,69.0 L469.5,77.0 L469.8,69.9 L470.1,72.4 L470.4,73.8 L470.7,67.0 L471.0,76.0 L471.3,66.1 L471.6,71.7 L471.8,73.9 L472.1,72.6 L472.4,60.4 L472.7,63.7 L473.0,70.3 L473.3,65.2 L473.6,62.5 L473.9,72.6 L474.4,69.8 L474.7,86.8 L475.0,93.1 L475.3,95.8 L475.6,97.7 L476.3,99.6 L476.7,100.9 L477.2,101.9 L477.6,102.6 L478.1,103.3 L478.5,103.9 L479.0,104.4 L479.5,104.9 L479.9,105.4 L480.4,105.8 L480.8,106.2 L481.3,106.7 L481.8,107.2 L482.2,107.7 L482.7,108.3 L483.1,108.9 L483.6,109.6 L484.0,110.2 L484.5,110.8 L485.0,111.5 L485.4,112.2 L485.9,112.8 L486.3,113.5 L486.8,114.2 L487.2,114.8 L487.7,115.5 L488.2,116.2 L488.6,116.9 L489.1,117.6 L489.5,118.3 L490.0,119.0 L490.4,119.7 L490.9,120.4 L491.4,121.1 L491.8,121.8 L492.3,122.5 L492.7,123.3 L493.2,124.0 L493.6,124.7 L494.1,125.5 L494.6,126.2 L495.0,126.9 L495.5,127.6 L495.9,128.3 L496.4,129.0 L496.8,129.8 L497.3,130.5 L497.8,131.2 L498.2,132.0 L498.7,132.7 L499.1,133.5 L499.6,134.3 L500.1,135.1 L500.5,136.0 L501.0,136.9 L501.4,137.8 L501.9,138.7 L502.3,139.7 L502.8,140.8 L503.3,141.9 L503.7,143.2 L504.2,144.4 L504.6,145.8 L505.1,147.2 L505.5,148.6 L506.0,150.1 L506.5,151.7 L506.9,153.3 L507.4,155.0 L507.8,156.6 L508.3,158.3 L508.7,159.9 L509.2,161.4 L509.7,162.8 L510.1,164.3 L510.6,165.6 L511.0,167.0 L511.5,168.3 L511.9,169.5 L512.4,170.6 L512.9,171.4 L513.3,171.5 L513.8,170.8 L514.2,169.6 L514.7,168.3 L515.1,167.3 L515.6,166.4 L516.1,165.7 L516.5,165.1 L517.0,164.6 L517.4,164.1 L517.9,163.6 L518.4,163.2 L518.8,162.9 L519.3,162.5 L519.7,162.3 L520.2,162.0 L520.6,161.8 L521.1,161.6 L521.6,161.5 L522.0,161.4 L522.5,161.3 L522.9,161.3 L523.4,161.3 L523.8,161.4 L524.3,161.5 L524.8,161.6 L525.2,161.7 L525.7,161.9 L526.1,162.2 L526.6,162.4 L527.0,162.8 L527.5,163.1 L528.0,163.5 L528.4,163.9 L528.9,164.4 L529.3,164.9 L529.8,165.5 L530.2,166.1 L530.7,166.7 L531.2,167.4 L531.6,168.1 L532.1,168.9 L532.5,169.8 L533.0,170.7 L533.4,171.7 L533.9,172.7 L534.4,173.8 L534.8,175.0 L535.3,176.3 L535.7,177.9 L536.2,179.9 L536.7,182.3 L537.1,184.9 L537.6,187.0 L538.0,187.8 L538.5,187.0 L538.9,185.1 L539.4,182.8 L539.9,180.9 L540.3,179.4 L540.8,178.2 L541.2,177.1 L541.7,176.1 L542.1,175.2 L542.6,174.3 L543.1,173.6 L543.5,172.9 L544.0,172.3 L544.4,171.7 L544.9,171.2 L545.3,170.7 L545.8,170.3 L546.3,170.0 L546.7,169.7 L547.2,169.5 L547.6,169.3 L548.1,169.2 L548.5,169.1 L549.0,169.1 L549.5,169.1 L549.9,169.2 L550.4,169.3 L550.8,169.5 L551.3,169.7 L551.7,170.0 L552.2,170.4 L552.7,170.8 L553.1,171.3 L553.6,172.0 L554.0,172.7 L554.5,173.7 L555.0,174.6 L555.4,175.0 L555.9,174.7 L556.3,173.6 L556.8,172.2 L557.2,170.7 L557.7,169.3 L558.2,167.9 L558.6,166.6 L559.1,165.2 L559.5,164.0 L560.0,162.7 L560.4,161.5 L560.9,160.3 L561.4,159.1 L561.8,158.0 L562.3,156.8 L562.7,155.7 L563.2,154.7 L563.6,153.7 L564.1,152.7 L564.6,151.8 L565.0,151.0 L565.5,150.1 L565.9,149.4 L566.4,148.6 L566.8,147.8 L567.3,147.1 L567.8,146.4 L568.2,145.8 L568.7,145.1 L569.1,144.4 L569.6,143.8 L570.0,143.2 L570.5,142.6 L571.0,142.0 L571.4,141.4 L571.9,140.8 L572.3,140.2 L572.8,139.7 L573.3,139.1 L573.7,138.6 L574.2,138.0 L574.6,137.5 L575.1,137.0 L575.5,136.5 L576.0,136.0 L576.5,135.6 L576.9,135.1 L577.4,134.6 L577.8,134.2 L578.3,133.7 L578.7,133.2 L579.2,132.8 L579.7,132.3 L580.1,131.8 L580.6,131.3 L581.0,130.9 L581.5,130.4 L581.9,129.9 L582.4,129.3 L582.9,128.8 L583.3,128.3 L583.8,127.7 L584.2,127.2 L584.7,126.6 L585.1,126.1 L585.6,125.5 L586.1,125.0 L586.5,124.5 L587.0,123.9 L587.4,123.4 L587.9,122.8 L588.3,122.2 L588.8,121.6 L589.3,121.0 L589.7,120.3 L590.2,119.6 L590.6,118.8 L591.1,118.0 L591.6,117.2 L592.0,116.2 L592.5,115.2 L592.9,114.1 L593.4,112.8 L593.8,111.4 L594.3,109.8 L594.8,107.9 L595.2,105.8 L595.7,103.4 L596.1,100.6 L596.6,98.0 L596.9,95.5 L597.2,92.0 L597.5,87.0 L597.8,74.2 L598.2,70.3 L598.5,65.8 L598.8,67.7 L599.1,70.7 L599.4,63.1 L599.7,67.3 L599.9,66.3 L600.2,60.3 L600.5,67.4 L600.8,60.3 L601.1,68.1 L601.4,69.9 L601.7,68.8 L602.0,65.9 L602.3,66.8 L602.5,67.8 L602.8,74.9 L603.1,73.4 L603.4,70.3 L603.7,66.5 L604.0,63.8 L604.3,78.4 L604.6,69.8 L604.9,71.0 L605.2,69.7 L605.4,68.5 L605.7,72.5 L606.0,74.3 L606.3,65.4 L606.6,66.4 L606.9,70.9 L607.2,69.7 L607.5,71.9 L607.8,74.7 L608.1,66.8 L608.3,71.8 L608.6,73.6 L608.9,71.6 L609.2,63.0 L609.5,67.6 L609.8,68.4 L610.1,68.9 L610.4,66.0 L610.7,66.5 L611.0,74.3 L611.2,70.2 L611.5,71.8 L611.8,68.5 L612.1,69.5 L612.4,76.9 L612.7,64.9 L613.0,68.3 L613.3,75.9 L613.6,65.0 L613.8,68.9 L614.1,67.5 L614.4,69.2 L614.7,68.7 L615.0,71.3 L615.3,75.7 L615.6,71.7 L615.9,68.7 L616.2,69.2 L616.5,66.9 L616.7,69.8 L617.0,77.9 L617.3,66.6 L617.6,72.5 L617.9,74.5 L618.2,70.7 L618.5,74.6 L618.8,68.1 L619.1,73.0 L619.4,62.1 L619.6,70.4 L619.9,71.6 L620.2,72.0 L620.5,77.7 L620.8,72.8 L621.1,72.4 L621.4,70.8 L621.7,77.9 L622.0,69.3 L622.3,64.6 L622.5,71.1 L622.8,69.7 L623.1,67.9 L623.4,72.5 L623.7,71.1 L624.0,65.8 L624.3,68.7 L624.6,74.1 L624.9,76.2 L625.1,60.7 L625.4,67.7 L625.7,75.4 L626.0,68.8 L626.3,66.8 L626.6,68.9 L626.9,76.5 L627.2,62.5 L627.5,67.1 L627.8,70.1 L628.0,66.7 L628.3,70.2 L628.6,70.6 L628.9,65.9 L629.2,76.8 L629.5,65.5 L629.8,67.8 L630.1,66.4 L630.4,65.8 L630.7,63.3 L630.9,63.8 L631.2,65.9 L631.5,70.7 L631.8,66.6 L632.1,71.0 L632.4,72.8 L632.7,67.4 L633.0,67.8 L633.3,64.6 L633.6,77.3 L633.8,66.9 L634.1,66.6 L634.4,68.7 L634.7,63.5 L635.0,72.4 L635.3,67.8 L635.6,70.5 L635.9,69.2 L636.2,72.8 L636.4,69.6 L636.7,66.5 L637.0,68.6 L637.3,67.8 L637.6,72.0 L637.9,63.1 L638.2,71.7 L638.5,69.0 L638.8,66.9 L639.1,69.8 L639.3,66.2 L639.6,68.3 L639.9,62.6 L640.2,67.0 L640.5,67.6 L640.8,72.1 L641.1,67.3 L641.4,65.3 L641.7,67.5 L642.0,72.6 L642.2,71.2 L642.5,70.0 L642.8,69.0 L643.1,74.3 L643.4,62.0 L643.7,69.5 L644.0,68.7 L644.3,70.8 L644.6,69.3 L644.9,61.9 L645.1,72.7 L645.4,71.1 L645.7,73.0 L646.0,71.2 L646.3,63.4 L646.6,71.5 L646.9,70.9 L647.2,76.0 L647.5,70.5 L647.7,68.3 L648.0,71.0 L648.3,70.7 L648.6,66.1 L648.9,67.2 L649.2,69.5 L649.5,72.1 L649.8,74.8 L650.1,62.8 L650.4,75.0 L650.6,66.7 L650.9,69.9 L651.2,71.9 L651.5,65.8 L651.8,71.9 L652.1,64.4 L652.4,73.0 L652.7,67.3 L653.0,64.4 L653.3,72.8 L653.5,61.3 L653.8,65.9 L654.1,77.4 L654.4,63.9 L654.7,62.0 L655.0,70.1 L655.3,69.9 L655.5,69.8 L655.8,87.9 L656.1,93.4 L656.4,96.3 L656.7,98.4 L657.0,100.0 L657.4,101.8 L657.9,103.7 L658.3,105.3 L658.8,106.7 L659.3,108.0 L659.7,109.2 L660.2,110.3 L660.6,111.3 L661.1,112.3 L661.5,113.3 L662.0,114.2 L662.5,115.1 L662.9,115.9 L663.4,116.8 L663.8,117.6 L664.3,118.4 L664.8,119.1 L665.2,119.9 L665.7,120.6 L666.1,121.3 L666.6,122.0 L667.0,122.7 L667.5,123.4 L668.0,124.0 L668.4,124.7 L668.9,125.4 L669.3,126.0 L669.8,126.7 L670.2,127.4 L670.7,128.1 L671.2,128.8 L671.6,129.5 L672.1,130.2 L672.5,131.0 L673.0,131.7 L673.4,132.4 L673.9,133.0 L674.4,133.7 L674.8,134.4 L675.3,135.0 L675.7,135.7 L676.2,136.3 L676.6,137.0 L677.1,137.6 L677.6,138.2 L678.0,138.8 L678.5,139.5 L678.9,140.1 L679.4,140.8 L679.8,141.4 L680.3,142.0 L680.8,142.7 L681.2,143.4 L681.7,144.0 L682.1,144.7 L682.6,145.4 L683.1,146.1 L683.5,146.8 L684.0,147.6 L684.4,148.3 L684.9,149.1 L685.3,149.9 L685.8,150.7 L686.3,151.5 L686.7,152.3 L687.2,153.2 L687.6,154.0 L688.1,154.9 L688.5,155.7 L689.0,156.6 L689.5,157.6 L689.9,158.6 L690.4,159.6 L690.8,160.7 L691.3,161.9 L691.7,163.1 L692.2,164.5 L692.7,166.0 L693.1,167.7 L693.6,169.6 L694.0,171.8 L694.5,174.2 L694.9,176.7 L695.4,178.8 L695.9,179.9 L696.3,179.4 L696.8,177.8 L697.2,175.7 L697.7,173.9 L698.1,172.5 L698.6,171.3 L699.1,170.2 L699.5,169.3 L700.0,168.5 L700.4,167.7 L700.9,167.0 L701.4,166.4 L701.8,165.9 L702.3,165.4 L702.7,165.0 L703.2,164.7 L703.6,164.4 L704.1,164.2 L704.6,164.0 L705.0,163.9 L705.5,163.9 L705.9,163.9 L706.4,163.9 L706.8,164.0 L707.3,164.1 L707.8,164.2 L708.2,164.3 L708.7,164.5 L709.1,164.7 L709.6,164.9 L710.0,165.1 L710.5,165.4 L711.0,165.6 L711.4,165.9 L711.9,166.3 L712.3,166.6 L712.8,167.0 L713.2,167.4 L713.7,167.8 L714.2,168.3 L714.6,168.8 L715.1,169.3 L715.5,169.8 L716.0,170.4 L716.4,171.0 L716.9,171.6 L717.4,172.3 L717.8,173.0 L718.3,173.7 L718.7,174.5 L719.2,175.3 L719.7,176.1 L720.1,177.0 L720.6,177.9 L721.0,178.9 L721.5,179.9 L721.9,181.0 L722.4,182.2 L722.9,183.4 L723.3,184.8 L723.8,186.4 L724.2,188.4 L724.7,190.8 L725.1,193.5 L725.6,195.9 L726.1,197.3 L726.5,197.3 L727.0,196.2 L727.4,194.4 L727.9,192.8 L728.3,191.6 L728.8,190.5 L729.3,189.6 L729.7,188.8 L730.2,188.0 L730.6,187.3 L731.1,186.7 L731.5,186.1 L732.0,185.5 L732.5,185.0 L732.9,184.5 L733.4,184.1 L733.8,183.6 L734.3,183.3 L734.7,182.9 L735.2,182.6 L735.7,182.4 L736.1,182.1 L736.6,181.9 L737.0,181.8 L737.5,181.6 L738.0,181.5 L738.4,181.4 L738.9,181.4 L739.3,181.4 L739.8,181.4 L740.2,181.4 L740.7,181.4 L741.2,181.5 L741.6,181.5 L742.1,181.6 L742.5,181.7 L743.0,181.9 L743.4,182.0 L743.9,182.1 L744.4,182.3 L744.8,182.5 L745.3,182.7 L745.7,182.9 L746.2,183.1 L746.6,183.3 L747.1,183.6 L747.6,183.9 L748.0,184.1 L748.5,184.4 L748.9,184.8 L749.4,185.1 L749.8,185.5 L750.3,185.8 L750.8,186.2 L751.2,186.6 L751.7,187.1 L752.1,187.5 L752.6,188.0 L753.0,188.5 L753.5,189.0 L754.0,189.5 L754.4,190.1 L754.9,190.6 L755.3,191.2 L755.8,191.8 L756.3,192.5 L756.7,193.2 L757.2,193.9 L757.6,194.6 L758.1,195.4 L758.5,196.2 L759.0,197.1 L759.5,198.1 L759.9,199.1 L760.4,200.2 L760.8,201.7 L761.3,203.4 L761.7,205.4 L762.2,207.4 L762.7,209.0 L763.1,209.6 L763.6,209.1 L764.0,207.8 L764.5,206.0 L764.9,204.2 L765.4,202.6 L765.9,201.3 L766.3,200.3 L766.8,199.4 L767.2,198.5 L767.7,197.7 L768.1,197.0 L768.6,196.3 L769.1,195.6 L769.5,195.0 L770.0,194.4 L770.4,193.8 L770.9,193.2 L771.3,192.7 L771.8,192.2 L772.3,191.7 L772.7,191.2 L773.2,190.8 L773.6,190.3 L774.1,189.9 L774.6,189.5 L775.0,189.1 L775.5,188.8 L775.9,188.4 L776.4,188.1 L776.8,187.7 L777.3,187.4 L777.8,187.2 L778.2,186.9 L778.7,186.6 L779.1,186.4 L779.6,186.2 L780.0,186.0 L780.5,185.9" fill="none" stroke="#fae264" stroke-width="1.75" stroke-linejoin="round"/>
<rect x="48.5" y="51.5" width="732" height="157" fill="none" stroke="#e6e6e6" stroke-width="1"/>
<path d="M79.5,52v3M79.5,208v-3M109.5,52v3M109.5,208v-3M140.5,52v3M140.5,208v-3M170.5,52v3M170.5,208v-3M201.5,52v3M201.5,208v-3M231.5,52v3M231.5,208v-3M262.5,52v3M262.5,208v-3M292.5,52v3M292.5,208v-3M323.5,52v3M323.5,208v-3M353.5,52v3M353.5,208v-3M384.5,52v3M384.5,208v-3M414.5,52v3M414.5,208v-3M445.5,52v3M445.5,208v-3M475.5,52v3M475.5,208v-3M506.5,52v3M506.5,208v-3M536.5,52v3M536.5,208v-3M567.5,52v3M567.5,208v-3M597.5,52v3M597.5,208v-3M628.5,52v3M628.5,208v-3M658.5,52v3M658.5,208v-3M689.5,52v3M689.5,208v-3M719.5,52v3M719.5,208v-3M750.5,52v3M750.5,208v-3M49,65.5h3M780,65.5h-3M49,80.5h3M780,80.5h-3M49,94.5h3M780,94.5h-3M49,108.5h3M780,108.5h-3M49,123.5h3M780,123.5h-3M49,137.5h3M780,137.5h-3M49,151.5h3M780,151.5h-3M49,166.5h3M780,166.5h-3M49,180.5h3M780,180.5h-3M49,194.5h3M780,194.5h-3" stroke="#e6e6e6" stroke-width="1" fill="none"/>
<text x="48.5" y="222.3" class="tl" text-anchor="middle">-120</text>
<text x="170.5" y="222.3" class="tl" text-anchor="middle">-80</text>
<text x="292.5" y="222.3" class="tl" text-anchor="middle">-40</text>
<text x="414.5" y="222.3" class="tl" text-anchor="middle">0</text>
<text x="536.5" y="222.3" class="tl" text-anchor="middle">40</text>
<text x="658.5" y="222.3" class="tl" text-anchor="middle">80</text>
<text x="780.5" y="222.3" class="tl" text-anchor="middle">120</text>
<text x="43" y="68.5" class="tl" text-anchor="end">0</text>
<text x="43" y="111.5" class="tl" text-anchor="end">-30</text>
<text x="43" y="154.5" class="tl" text-anchor="end">-60</text>
<text x="43" y="197.5" class="tl" text-anchor="end">-90</text>
<text x="414" y="240" font-size="13" fill="#e2e2e2" stroke="#e2e2e2" stroke-width="0.15" text-anchor="middle">Frequency (MHz)</text>
<text transform="translate(18,129.5) rotate(-90)" font-size="13" fill="#e2e2e2" stroke="#e2e2e2" stroke-width="0.15" text-anchor="middle">Power (dBm)</text>
<rect x="0" y="250" width="800" height="3" fill="#161616"/>
<rect x="0" y="251" width="800" height="1" fill="#d4d4d4"/>
<rect x="44" y="260" width="737" height="16.5" fill="url(#cb)"/>
<path d="M45.5,262.5v5" class="cbt"/><text x="46.2" y="271.5" class="cbl">-80</text>
<path d="M119.5,262.5v5" class="cbt"/><text x="120.2" y="271.5" class="cbl">-70</text>
<path d="M192.5,262.5v5" class="cbt"/><text x="193.2" y="271.5" class="cbl">-60</text>
<path d="M266.5,262.5v5" class="cbt"/><text x="267.2" y="271.5" class="cbl">-50</text>
<path d="M339.5,262.5v5" class="cbt"/><text x="340.2" y="271.5" class="cbl">-40</text>
<path d="M413.5,262.5v5" class="cbt"/><text x="414.2" y="271.5" class="cbl">-30</text>
<path d="M486.5,262.5v5" class="cbt"/><text x="487.2" y="271.5" class="cbl">-20</text>
<path d="M560.5,262.5v5" class="cbt"/><text x="561.2" y="271.5" class="cbl">-10</text>
<path d="M633.5,262.5v5" class="cbt"/><text x="634.2" y="271.5" class="cbl">0</text>
<path d="M707.5,262.5v5" class="cbt"/><text x="708.2" y="271.5" class="cbl">10</text>
<text x="762.5" y="271.5" class="cbl" style="font-size:11px">dBm</text><path d="M779.5,262.5v5" class="cbt"/>
<text x="45" y="296" class="tl">x10</text>
<text x="63" y="289" class="tl" style="font-size:9px">-4</text>
<rect x="44" y="297" width="738" height="139" fill="#151515"/>
<g shape-rendering="crispEdges">
<rect x="45" y="299" width="736" height="2" fill="url(#r0)"/>
<rect x="45" y="301" width="736" height="1" fill="url(#r1)"/>
<rect x="45" y="302" width="736" height="3" fill="url(#r2)"/>
<rect x="45" y="305" width="736" height="3" fill="url(#r3)"/>
<rect x="45" y="308" width="736" height="3" fill="url(#r4)"/>
<rect x="45" y="311" width="736" height="2" fill="url(#r5)"/>
<rect x="45" y="313" width="736" height="3" fill="url(#r6)"/>
<rect x="45" y="316" width="736" height="2" fill="url(#r7)"/>
<rect x="45" y="318" width="736" height="3" fill="url(#r8)"/>
<rect x="45" y="321" width="736" height="2" fill="url(#r9)"/>
<rect x="45" y="323" width="736" height="2" fill="url(#r10)"/>
<rect x="45" y="325" width="736" height="2" fill="url(#r11)"/>
<rect x="45" y="327" width="736" height="3" fill="url(#r12)"/>
<rect x="45" y="330" width="736" height="3" fill="url(#r13)"/>
<rect x="45" y="333" width="736" height="3" fill="url(#r14)"/>
<rect x="45" y="336" width="736" height="1" fill="url(#r15)"/>
<rect x="45" y="337" width="736" height="3" fill="url(#r16)"/>
<rect x="45" y="340" width="736" height="2" fill="url(#r17)"/>
<rect x="45" y="342" width="736" height="3" fill="url(#r18)"/>
<rect x="45" y="345" width="736" height="2" fill="url(#r19)"/>
<rect x="45" y="347" width="736" height="2" fill="url(#r20)"/>
<rect x="45" y="349" width="736" height="3" fill="url(#r21)"/>
<rect x="45" y="352" width="736" height="2" fill="url(#r22)"/>
<rect x="45" y="354" width="736" height="2" fill="url(#r23)"/>
<rect x="45" y="356" width="736" height="2" fill="url(#r24)"/>
<rect x="45" y="358" width="736" height="2" fill="url(#r25)"/>
<rect x="45" y="360" width="736" height="1" fill="url(#r26)"/>
<rect x="45" y="361" width="736" height="1" fill="url(#r27)"/>
<rect x="45" y="362" width="736" height="1" fill="url(#r28)"/>
<rect x="45" y="363" width="736" height="3" fill="url(#r29)"/>
<rect x="45" y="366" width="736" height="2" fill="url(#r30)"/>
<rect x="45" y="368" width="736" height="3" fill="url(#r31)"/>
<rect x="45" y="371" width="736" height="2" fill="url(#r32)"/>
<rect x="45" y="373" width="736" height="3" fill="url(#r33)"/>
<rect x="45" y="376" width="736" height="2" fill="url(#r34)"/>
<rect x="45" y="378" width="736" height="3" fill="url(#r35)"/>
<rect x="45" y="381" width="736" height="2" fill="url(#r36)"/>
<rect x="45" y="383" width="736" height="2" fill="url(#r37)"/>
<rect x="45" y="385" width="736" height="3" fill="url(#r38)"/>
<rect x="45" y="388" width="736" height="3" fill="url(#r39)"/>
<rect x="45" y="391" width="736" height="1" fill="url(#r40)"/>
<rect x="45" y="392" width="736" height="3" fill="url(#r41)"/>
<rect x="45" y="395" width="736" height="3" fill="url(#r42)"/>
<rect x="45" y="398" width="736" height="2" fill="url(#r43)"/>
<rect x="45" y="400" width="736" height="2" fill="url(#r44)"/>
<rect x="45" y="402" width="736" height="3" fill="url(#r45)"/>
<rect x="45" y="405" width="736" height="2" fill="url(#r46)"/>
<rect x="45" y="407" width="736" height="2" fill="url(#r47)"/>
<rect x="45" y="409" width="736" height="2" fill="url(#r48)"/>
<rect x="45" y="411" width="736" height="3" fill="url(#r49)"/>
<rect x="45" y="414" width="736" height="1" fill="url(#r50)"/>
<rect x="45" y="415" width="736" height="4" fill="url(#r51)"/>
<rect x="45" y="419" width="736" height="2" fill="url(#r52)"/>
<rect x="45" y="421" width="736" height="3" fill="url(#r53)"/>
<rect x="45" y="424" width="736" height="4" fill="url(#r54)"/>
<rect x="45" y="428" width="736" height="3" fill="url(#r55)"/>
<rect x="45" y="431" width="736" height="2" fill="url(#r56)"/>
<rect x="170" y="299" width="58" height="134" fill="url(#spk)"/>
<rect x="293" y="299" width="180" height="134" fill="url(#spk)"/>
<rect x="597" y="299" width="58" height="134" fill="url(#spk)"/><rect x="226" y="429" width="1" height="2" fill="#ff4200"/><rect x="217" y="424" width="1" height="2" fill="#ff0f00"/><rect x="210" y="431" width="1" height="2" fill="#ff4200"/><rect x="199" y="431" width="1" height="2" fill="#ff2400"/><rect x="197" y="428" width="1" height="2" fill="#ffc700"/><rect x="208" y="422" width="1" height="2" fill="#ff4200"/><rect x="198" y="425" width="1" height="2" fill="#ff4200"/><rect x="209" y="422" width="1" height="2" fill="#ff0f00"/><rect x="175" y="421" width="1" height="2" fill="#ff4200"/><rect x="178" y="421" width="1" height="2" fill="#ff0f00"/><rect x="212" y="426" width="1" height="2" fill="#ff1a00"/><rect x="209" y="424" width="1" height="2" fill="#ff0f00"/><rect x="188" y="422" width="1" height="2" fill="#ff4200"/><rect x="177" y="432" width="1" height="1" fill="#ff0f00"/><rect x="177" y="431" width="1" height="2" fill="#ff2400"/><rect x="174" y="426" width="1" height="2" fill="#ff4200"/><rect x="223" y="430" width="1" height="2" fill="#ffc700"/><rect x="215" y="422" width="1" height="2" fill="#ff0f00"/><rect x="171" y="426" width="1" height="2" fill="#ffc700"/><rect x="201" y="428" width="1" height="2" fill="#ff2400"/><rect x="187" y="425" width="1" height="2" fill="#ff1a00"/><rect x="190" y="429" width="1" height="2" fill="#ffc700"/><rect x="210" y="425" width="1" height="2" fill="#ff4200"/><rect x="198" y="430" width="1" height="2" fill="#ffc700"/><rect x="221" y="431" width="1" height="2" fill="#ff0f00"/><rect x="179" y="430" width="1" height="2" fill="#ffc700"/><rect x="224" y="432" width="1" height="1" fill="#ff2400"/><rect x="212" y="427" width="1" height="2" fill="#ff2400"/><rect x="178" y="422" width="1" height="2" fill="#ff4200"/><rect x="193" y="427" width="1" height="2" fill="#ffc700"/><rect x="218" y="428" width="1" height="2" fill="#ff2400"/><rect x="209" y="422" width="1" height="2" fill="#ff2400"/><rect x="221" y="431" width="1" height="2" fill="#ffc700"/><rect x="171" y="428" width="1" height="2" fill="#ff4200"/><rect x="220" y="430" width="1" height="2" fill="#ff4200"/><rect x="190" y="427" width="1" height="2" fill="#ff1a00"/><rect x="187" y="422" width="1" height="2" fill="#ff4200"/><rect x="203" y="421" width="1" height="2" fill="#ff0f00"/><rect x="219" y="423" width="1" height="2" fill="#ff2400"/><rect x="215" y="423" width="1" height="2" fill="#ff2400"/><rect x="196" y="427" width="1" height="2" fill="#ff0f00"/><rect x="199" y="424" width="1" height="2" fill="#ff4200"/><rect x="188" y="424" width="1" height="2" fill="#ff2400"/><rect x="211" y="423" width="1" height="2" fill="#ff0f00"/><rect x="179" y="422" width="1" height="2" fill="#ff0f00"/><rect x="187" y="422" width="1" height="2" fill="#ff1a00"/><rect x="439" y="430" width="1" height="2" fill="#ff4200"/><rect x="315" y="425" width="1" height="2" fill="#ffc700"/><rect x="454" y="423" width="1" height="2" fill="#ff0f00"/><rect x="446" y="424" width="1" height="2" fill="#ff1a00"/><rect x="397" y="421" width="1" height="2" fill="#ff1a00"/><rect x="445" y="423" width="1" height="2" fill="#ff0f00"/><rect x="306" y="428" width="1" height="2" fill="#ffc700"/><rect x="346" y="421" width="1" height="2" fill="#ff2400"/><rect x="459" y="421" width="1" height="2" fill="#ff0f00"/><rect x="309" y="430" width="1" height="2" fill="#ffc700"/><rect x="432" y="422" width="1" height="2" fill="#ff1a00"/><rect x="356" y="431" width="1" height="2" fill="#ffc700"/><rect x="399" y="427" width="1" height="2" fill="#ff4200"/><rect x="452" y="427" width="1" height="2" fill="#ff4200"/><rect x="334" y="428" width="1" height="2" fill="#ff1a00"/><rect x="300" y="426" width="1" height="2" fill="#ffc700"/><rect x="433" y="429" width="1" height="2" fill="#ff1a00"/><rect x="472" y="427" width="1" height="2" fill="#ff0f00"/><rect x="320" y="425" width="1" height="2" fill="#ff0f00"/><rect x="467" y="422" width="1" height="2" fill="#ff4200"/><rect x="396" y="421" width="1" height="2" fill="#ff2400"/><rect x="423" y="426" width="1" height="2" fill="#ff2400"/><rect x="346" y="427" width="1" height="2" fill="#ff4200"/><rect x="318" y="429" width="1" height="2" fill="#ffc700"/><rect x="371" y="424" width="1" height="2" fill="#ff0f00"/><rect x="379" y="427" width="1" height="2" fill="#ff1a00"/><rect x="332" y="421" width="1" height="2" fill="#ff1a00"/><rect x="344" y="429" width="1" height="2" fill="#ff0f00"/><rect x="389" y="432" width="1" height="1" fill="#ff1a00"/><rect x="298" y="426" width="1" height="2" fill="#ff4200"/><rect x="363" y="428" width="1" height="2" fill="#ff2400"/><rect x="333" y="422" width="1" height="2" fill="#ff4200"/><rect x="326" y="427" width="1" height="2" fill="#ff2400"/><rect x="331" y="426" width="1" height="2" fill="#ffc700"/><rect x="301" y="430" width="1" height="2" fill="#ff1a00"/><rect x="345" y="430" width="1" height="2" fill="#ff0f00"/><rect x="355" y="424" width="1" height="2" fill="#ffc700"/><rect x="358" y="425" width="1" height="2" fill="#ff1a00"/><rect x="348" y="432" width="1" height="1" fill="#ff0f00"/><rect x="307" y="432" width="1" height="1" fill="#ff4200"/><rect x="438" y="422" width="1" height="2" fill="#ff1a00"/><rect x="432" y="431" width="1" height="2" fill="#ff1a00"/><rect x="369" y="423" width="1" height="2" fill="#ff2400"/><rect x="442" y="431" width="1" height="2" fill="#ff2400"/><rect x="321" y="429" width="1" height="2" fill="#ff2400"/><rect x="468" y="431" width="1" height="2" fill="#ff1a00"/><rect x="466" y="425" width="1" height="2" fill="#ff1a00"/><rect x="449" y="424" width="1" height="2" fill="#ffc700"/><rect x="412" y="426" width="1" height="2" fill="#ff0f00"/><rect x="311" y="429" width="1" height="2" fill="#ff1a00"/><rect x="297" y="422" width="1" height="2" fill="#ff2400"/><rect x="336" y="424" width="1" height="2" fill="#ff1a00"/><rect x="429" y="421" width="1" height="2" fill="#ff1a00"/><rect x="340" y="427" width="1" height="2" fill="#ff2400"/><rect x="391" y="429" width="1" height="2" fill="#ff1a00"/><rect x="333" y="425" width="1" height="2" fill="#ff4200"/><rect x="323" y="424" width="1" height="2" fill="#ff4200"/><rect x="413" y="429" width="1" height="2" fill="#ffc700"/><rect x="396" y="432" width="1" height="1" fill="#ff2400"/><rect x="304" y="422" width="1" height="2" fill="#ff0f00"/><rect x="298" y="426" width="1" height="2" fill="#ff2400"/><rect x="369" y="428" width="1" height="2" fill="#ff4200"/><rect x="316" y="425" width="1" height="2" fill="#ff0f00"/><rect x="402" y="422" width="1" height="2" fill="#ff0f00"/><rect x="318" y="428" width="1" height="2" fill="#ffc700"/><rect x="336" y="424" width="1" height="2" fill="#ff0f00"/><rect x="354" y="425" width="1" height="2" fill="#ff2400"/><rect x="450" y="427" width="1" height="2" fill="#ff4200"/><rect x="457" y="422" width="1" height="2" fill="#ffc700"/><rect x="375" y="429" width="1" height="2" fill="#ff0f00"/><rect x="405" y="422" width="1" height="2" fill="#ffc700"/><rect x="386" y="427" width="1" height="2" fill="#ff4200"/><rect x="417" y="432" width="1" height="1" fill="#ff2400"/><rect x="419" y="427" width="1" height="2" fill="#ff4200"/><rect x="328" y="422" width="1" height="2" fill="#ff2400"/><rect x="458" y="421" width="1" height="2" fill="#ff0f00"/><rect x="362" y="428" width="1" height="2" fill="#ff4200"/><rect x="381" y="424" width="1" height="2" fill="#ff2400"/><rect x="452" y="429" width="1" height="2" fill="#ff4200"/><rect x="378" y="423" width="1" height="2" fill="#ff1a00"/><rect x="450" y="421" width="1" height="2" fill="#ff2400"/><rect x="342" y="425" width="1" height="2" fill="#ffc700"/><rect x="427" y="424" width="1" height="2" fill="#ff2400"/><rect x="468" y="432" width="1" height="1" fill="#ff1a00"/><rect x="342" y="425" width="1" height="2" fill="#ff2400"/><rect x="418" y="425" width="1" height="2" fill="#ff1a00"/><rect x="427" y="421" width="1" height="2" fill="#ffc700"/><rect x="461" y="422" width="1" height="2" fill="#ff1a00"/><rect x="394" y="422" width="1" height="2" fill="#ffc700"/><rect x="319" y="421" width="1" height="2" fill="#ffc700"/><rect x="409" y="428" width="1" height="2" fill="#ff4200"/><rect x="337" y="424" width="1" height="2" fill="#ff4200"/><rect x="420" y="432" width="1" height="1" fill="#ffc700"/><rect x="371" y="423" width="1" height="2" fill="#ff1a00"/><rect x="421" y="425" width="1" height="2" fill="#ff0f00"/><rect x="399" y="421" width="1" height="2" fill="#ff0f00"/><rect x="458" y="429" width="1" height="2" fill="#ff1a00"/><rect x="371" y="428" width="1" height="2" fill="#ff4200"/><rect x="452" y="426" width="1" height="2" fill="#ff2400"/><rect x="346" y="431" width="1" height="2" fill="#ff0f00"/><rect x="347" y="421" width="1" height="2" fill="#ffc700"/><rect x="401" y="427" width="1" height="2" fill="#ff0f00"/><rect x="469" y="422" width="1" height="2" fill="#ffc700"/><rect x="317" y="431" width="1" height="2" fill="#ff0f00"/><rect x="350" y="432" width="1" height="1" fill="#ff2400"/><rect x="320" y="422" width="1" height="2" fill="#ff1a00"/><rect x="427" y="426" width="1" height="2" fill="#ff4200"/><rect x="356" y="430" width="1" height="2" fill="#ff4200"/><rect x="451" y="424" width="1" height="2" fill="#ff2400"/><rect x="378" y="428" width="1" height="2" fill="#ff1a00"/><rect x="343" y="428" width="1" height="2" fill="#ff0f00"/><rect x="365" y="431" width="1" height="2" fill="#ff0f00"/><rect x="464" y="430" width="1" height="2" fill="#ff2400"/><rect x="295" y="423" width="1" height="2" fill="#ff2400"/><rect x="345" y="432" width="1" height="1" fill="#ffc700"/><rect x="327" y="421" width="1" height="2" fill="#ffc700"/><rect x="353" y="421" width="1" height="2" fill="#ff2400"/><rect x="409" y="432" width="1" height="1" fill="#ffc700"/><rect x="392" y="425" width="1" height="2" fill="#ff4200"/><rect x="456" y="427" width="1" height="2" fill="#ff1a00"/><rect x="358" y="422" width="1" height="2" fill="#ffc700"/><rect x="462" y="426" width="1" height="2" fill="#ff2400"/><rect x="332" y="421" width="1" height="2" fill="#ff4200"/><rect x="327" y="427" width="1" height="2" fill="#ff0f00"/><rect x="352" y="431" width="1" height="2" fill="#ff1a00"/><rect x="319" y="424" width="1" height="2" fill="#ff4200"/><rect x="437" y="432" width="1" height="1" fill="#ff0f00"/><rect x="301" y="428" width="1" height="2" fill="#ff4200"/><rect x="455" y="422" width="1" height="2" fill="#ff4200"/><rect x="318" y="427" width="1" height="2" fill="#ff4200"/><rect x="325" y="422" width="1" height="2" fill="#ffc700"/><rect x="384" y="430" width="1" height="2" fill="#ff1a00"/><rect x="417" y="426" width="1" height="2" fill="#ff0f00"/><rect x="399" y="428" width="1" height="2" fill="#ffc700"/><rect x="462" y="421" width="1" height="2" fill="#ff0f00"/><rect x="296" y="423" width="1" height="2" fill="#ffc700"/><rect x="454" y="422" width="1" height="2" fill="#ffc700"/><rect x="464" y="430" width="1" height="2" fill="#ff4200"/><rect x="349" y="432" width="1" height="1" fill="#ff1a00"/><rect x="326" y="426" width="1" height="2" fill="#ff4200"/><rect x="363" y="431" width="1" height="2" fill="#ff0f00"/><rect x="430" y="426" width="1" height="2" fill="#ff2400"/><rect x="336" y="430" width="1" height="2" fill="#ff2400"/><rect x="346" y="430" width="1" height="2" fill="#ffc700"/><rect x="646" y="432" width="1" height="1" fill="#ffc700"/><rect x="604" y="429" width="1" height="2" fill="#ffc700"/><rect x="624" y="428" width="1" height="2" fill="#ff4200"/><rect x="646" y="422" width="1" height="2" fill="#ff4200"/><rect x="632" y="430" width="1" height="2" fill="#ff0f00"/><rect x="609" y="421" width="1" height="2" fill="#ff2400"/><rect x="626" y="431" width="1" height="2" fill="#ff1a00"/><rect x="614" y="429" width="1" height="2" fill="#ff2400"/><rect x="631" y="421" width="1" height="2" fill="#ffc700"/><rect x="632" y="425" width="1" height="2" fill="#ffc700"/><rect x="606" y="422" width="1" height="2" fill="#ff1a00"/><rect x="603" y="426" width="1" height="2" fill="#ff2400"/><rect x="598" y="421" width="1" height="2" fill="#ff1a00"/><rect x="633" y="421" width="1" height="2" fill="#ff0f00"/><rect x="643" y="422" width="1" height="2" fill="#ff0f00"/><rect x="644" y="421" width="1" height="2" fill="#ff2400"/><rect x="632" y="426" width="1" height="2" fill="#ff2400"/><rect x="610" y="424" width="1" height="2" fill="#ff4200"/><rect x="637" y="424" width="1" height="2" fill="#ff0f00"/><rect x="637" y="430" width="1" height="2" fill="#ffc700"/><rect x="607" y="427" width="1" height="2" fill="#ff0f00"/><rect x="637" y="425" width="1" height="2" fill="#ff0f00"/><rect x="644" y="430" width="1" height="2" fill="#ff4200"/><rect x="613" y="427" width="1" height="2" fill="#ff4200"/><rect x="645" y="425" width="1" height="2" fill="#ff0f00"/><rect x="629" y="422" width="1" height="2" fill="#ffc700"/><rect x="641" y="425" width="1" height="2" fill="#ffc700"/><rect x="623" y="425" width="1" height="2" fill="#ff4200"/><rect x="624" y="424" width="1" height="2" fill="#ff4200"/><rect x="621" y="424" width="1" height="2" fill="#ff2400"/><rect x="637" y="426" width="1" height="2" fill="#ffc700"/><rect x="600" y="422" width="1" height="2" fill="#ff0f00"/><rect x="635" y="423" width="1" height="2" fill="#ffc700"/><rect x="622" y="426" width="1" height="2" fill="#ff1a00"/><rect x="604" y="421" width="1" height="2" fill="#ffc700"/><rect x="606" y="421" width="1" height="2" fill="#ff2400"/><rect x="625" y="421" width="1" height="2" fill="#ff2400"/><rect x="634" y="421" width="1" height="2" fill="#ff2400"/><rect x="627" y="431" width="1" height="2" fill="#ff2400"/><rect x="631" y="431" width="1" height="2" fill="#ffc700"/><rect x="654" y="430" width="1" height="2" fill="#ff2400"/><rect x="600" y="423" width="1" height="2" fill="#ffc700"/><rect x="638" y="429" width="1" height="2" fill="#ff0f00"/><rect x="654" y="431" width="1" height="2" fill="#ffc700"/><rect x="653" y="425" width="1" height="2" fill="#ffc700"/><rect x="636" y="428" width="1" height="2" fill="#ff0f00"/><rect x="351" y="299" width="1" height="134" fill="#ffdb00"/><rect x="410" y="299" width="5" height="3" fill="#8cff73"/><rect x="410" y="302" width="5" height="3" fill="#f1ff0e"/><rect x="410" y="305" width="5" height="3" fill="#acff53"/><rect x="410" y="308" width="5" height="3" fill="#b5ff4a"/><rect x="410" y="311" width="5" height="3" fill="#b5ff4a"/><rect x="410" y="314" width="5" height="3" fill="#c0ff3f"/><rect x="410" y="317" width="5" height="3" fill="#b0ff4f"/><rect x="410" y="320" width="5" height="3" fill="#d0ff2f"/><rect x="410" y="323" width="5" height="3" fill="#c0ff3f"/><rect x="410" y="326" width="5" height="3" fill="#d2ff2d"/><rect x="410" y="329" width="5" height="3" fill="#d7ff28"/><rect x="410" y="332" width="5" height="3" fill="#ceff31"/><rect x="410" y="335" width="5" height="3" fill="#d8ff27"/><rect x="410" y="338" width="5" height="3" fill="#cbff34"/><rect x="410" y="341" width="5" height="3" fill="#bcff43"/><rect x="410" y="344" width="5" height="3" fill="#d0ff2f"/><rect x="410" y="347" width="5" height="3" fill="#ecff13"/><rect x="410" y="350" width="5" height="3" fill="#d7ff28"/><rect x="410" y="353" width="5" height="3" fill="#bdff42"/><rect x="410" y="356" width="5" height="3" fill="#bcff43"/><rect x="410" y="359" width="5" height="3" fill="#d6ff29"/><rect x="410" y="362" width="5" height="3" fill="#ccff33"/><rect x="410" y="365" width="5" height="3" fill="#c6ff39"/><rect x="410" y="368" width="5" height="3" fill="#b8ff47"/><rect x="410" y="371" width="5" height="3" fill="#efff10"/><rect x="410" y="374" width="5" height="3" fill="#d0ff2f"/><rect x="410" y="377" width="5" height="3" fill="#b3ff4c"/><rect x="410" y="380" width="5" height="3" fill="#f3ff0c"/><rect x="410" y="383" width="5" height="3" fill="#b1ff4e"/><rect x="410" y="386" width="5" height="3" fill="#9eff61"/><rect x="410" y="389" width="5" height="3" fill="#bbff44"/><rect x="410" y="392" width="5" height="3" fill="#cdff32"/><rect x="410" y="395" width="5" height="3" fill="#d2ff2d"/><rect x="410" y="398" width="5" height="3" fill="#b2ff4d"/><rect x="410" y="401" width="5" height="3" fill="#b9ff46"/><rect x="410" y="404" width="5" height="3" fill="#d2ff2d"/><rect x="410" y="407" width="5" height="3" fill="#bcff43"/><rect x="410" y="410" width="5" height="3" fill="#deff21"/><rect x="410" y="413" width="5" height="3" fill="#abff54"/><rect x="410" y="416" width="5" height="3" fill="#ceff31"/><rect x="410" y="419" width="5" height="3" fill="#e5ff1a"/><rect x="410" y="422" width="5" height="3" fill="#c5ff3a"/><rect x="410" y="425" width="5" height="3" fill="#c5ff3a"/><rect x="410" y="428" width="5" height="3" fill="#b2ff4d"/><rect x="410" y="431" width="5" height="3" fill="#d5ff2a"/>
</g>
<path d="M46,376.5H780M46,318.5H780M168.5,299V433M290.5,299V433M413.5,299V433M535.5,299V433M658.5,299V433" stroke="#ffffff" stroke-opacity="0.22" stroke-width="1" fill="none"/>
<rect x="46" y="433" width="734" height="1" fill="#000080"/>
<rect x="45.5" y="298.5" width="735" height="136" fill="none" stroke="#e6e6e6" stroke-width="1"/>
<path d="M76.5,299v3M76.5,434v-3M106.5,299v3M106.5,434v-3M137.5,299v3M137.5,434v-3M168.5,299v3M168.5,434v-3M198.5,299v3M198.5,434v-3M229.5,299v3M229.5,434v-3M259.5,299v3M259.5,434v-3M290.5,299v3M290.5,434v-3M321.5,299v3M321.5,434v-3M351.5,299v3M351.5,434v-3M382.5,299v3M382.5,434v-3M413.5,299v3M413.5,434v-3M443.5,299v3M443.5,434v-3M474.5,299v3M474.5,434v-3M504.5,299v3M504.5,434v-3M535.5,299v3M535.5,434v-3M566.5,299v3M566.5,434v-3M596.5,299v3M596.5,434v-3M627.5,299v3M627.5,434v-3M658.5,299v3M658.5,434v-3M688.5,299v3M688.5,434v-3M719.5,299v3M719.5,434v-3M749.5,299v3M749.5,434v-3M46,405.5h3M780,405.5h-3M46,376.5h3M780,376.5h-3M46,347.5h3M780,347.5h-3M46,318.5h3M780,318.5h-3" stroke="#e6e6e6" stroke-width="1" fill="none"/>
<text x="45.5" y="448.3" class="tl" text-anchor="middle">-120</text>
<text x="168.0" y="448.3" class="tl" text-anchor="middle">-80</text>
<text x="290.5" y="448.3" class="tl" text-anchor="middle">-40</text>
<text x="413.0" y="448.3" class="tl" text-anchor="middle">0</text>
<text x="535.5" y="448.3" class="tl" text-anchor="middle">40</text>
<text x="658.0" y="448.3" class="tl" text-anchor="middle">80</text>
<text x="780.5" y="448.3" class="tl" text-anchor="middle">120</text>
<text x="41" y="438.5" class="tl" text-anchor="end">0</text>
<text x="41" y="380.5" class="tl" text-anchor="end">5</text>
<text x="41" y="322.5" class="tl" text-anchor="end">10</text>
<text x="412.5" y="466" font-size="13" fill="#e2e2e2" stroke="#e2e2e2" stroke-width="0.15" text-anchor="middle">Frequency (MHz)</text>
<text transform="translate(18,366) rotate(-90)" font-size="13" fill="#e2e2e2" stroke="#e2e2e2" stroke-width="0.15" text-anchor="middle">Time (secs)</text>
</svg>
<div id="tabs"><div id="act"></div>
<div class="tab" style="left:37px;transform:scaleX(0.83)">SCOPE</div>
<div class="tab" style="left:127.5px;transform:scaleX(0.905)">ESTIMATION</div>
<div class="tab" style="left:222.5px;transform:scaleX(0.885)">MEASUREMENTS</div>
<div class="tab" style="left:342.5px;transform:scaleX(0.87)">SPECTRUM</div>
<div class="tab" style="left:437.5px;transform:scaleX(0.87)">SPECTROGRAM</div>
<div class="tab" style="left:540px;transform:scaleX(0.87)">SPECTRAL MASK</div>
<div class="tab" style="left:641.5px;transform:scaleX(0.895)">CHANNEL MEAS…</div>
<svg width="39" height="22" viewBox="0 0 39 22" style="left:751px;top:3px"><path d="M7,0H39V22H7L0,11Z" fill="#6b8eb1"/><rect x="19" y="9.2" width="2.6" height="2.6" rx="0.6" fill="#fff"/><rect x="23.4" y="9.2" width="2.6" height="2.6" rx="0.6" fill="#fff"/><rect x="28.4" y="9.2" width="2.6" height="2.6" rx="0.6" fill="#fff"/></svg>
</div>
<div id="status">
<div class="st" style="left:7.5px">Processing</div>
<div class="st" style="left:102.5px">ΔT=12.8000 us</div>
<div class="st" style="left:191px">Samples/Update=3072</div>
<div class="st" style="left:318.5px">VBW=37.3019 kHz</div>
<div class="st" style="left:426px">RBW=78.1250 kHz</div>
<div class="st" style="left:535px">Sample Rate=240.0000 MHz</div>
<div class="st" style="left:695px">Updates=91</div>
<div class="st" style="left:766.5px">T=0.0021</div>
</div>
</body></html>
